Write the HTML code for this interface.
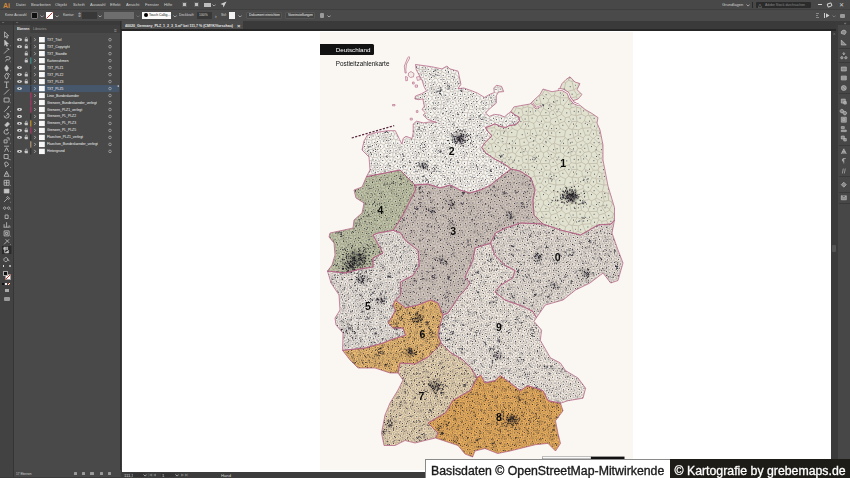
<!DOCTYPE html>
<html><head><meta charset="utf-8"><style>
*{margin:0;padding:0;box-sizing:border-box}
html,body{width:850px;height:478px;overflow:hidden;background:#3c3c3c;font-family:"Liberation Sans", sans-serif}
.a{position:absolute}
.t{position:absolute;white-space:nowrap;color:#d8d8d8;font-size:5px;line-height:6px}
</style></head><body>
<div class="a" style="left:0px;top:0px;width:850px;height:9px;background:#484848;"></div>
<div class="a" style="left:0px;top:9px;width:850px;height:1px;background:#3f3f3f;"></div>
<div class="a" style="left:0px;top:10px;width:850px;height:10.5px;background:#4a4a4a;"></div>
<div class="t" style="left:3px;top:1.3px;font-size:21px;line-height:25.2px;color:#d08a3a;transform:scale(0.3333);transform-origin:0 0;font-weight:bold;letter-spacing:-0.3px">Ai</div>
<div class="t" style="left:15.6px;top:2.4000000000000004px;font-size:12.299999999999999px;line-height:14.759999999999998px;color:#d2d2d2;transform:scale(0.3333);transform-origin:0 0;">Datei</div>
<div class="t" style="left:30.5px;top:2.4000000000000004px;font-size:12.299999999999999px;line-height:14.759999999999998px;color:#d2d2d2;transform:scale(0.3333);transform-origin:0 0;">Bearbeiten</div>
<div class="t" style="left:55px;top:2.4000000000000004px;font-size:12.299999999999999px;line-height:14.759999999999998px;color:#d2d2d2;transform:scale(0.3333);transform-origin:0 0;">Objekt</div>
<div class="t" style="left:73.3px;top:2.4000000000000004px;font-size:12.299999999999999px;line-height:14.759999999999998px;color:#d2d2d2;transform:scale(0.3333);transform-origin:0 0;">Schrift</div>
<div class="t" style="left:89.8px;top:2.4000000000000004px;font-size:12.299999999999999px;line-height:14.759999999999998px;color:#d2d2d2;transform:scale(0.3333);transform-origin:0 0;">Auswahl</div>
<div class="t" style="left:110px;top:2.4000000000000004px;font-size:12.299999999999999px;line-height:14.759999999999998px;color:#d2d2d2;transform:scale(0.3333);transform-origin:0 0;">Effekt</div>
<div class="t" style="left:126px;top:2.4000000000000004px;font-size:12.299999999999999px;line-height:14.759999999999998px;color:#d2d2d2;transform:scale(0.3333);transform-origin:0 0;">Ansicht</div>
<div class="t" style="left:144.8px;top:2.4000000000000004px;font-size:12.299999999999999px;line-height:14.759999999999998px;color:#d2d2d2;transform:scale(0.3333);transform-origin:0 0;">Fenster</div>
<div class="t" style="left:163.8px;top:2.4000000000000004px;font-size:12.299999999999999px;line-height:14.759999999999998px;color:#d2d2d2;transform:scale(0.3333);transform-origin:0 0;">Hilfe</div>
<div class="a" style="left:182px;top:2px;width:5px;height:5px;background:#bdbdbd;border:1px solid #5a5a5a"></div>
<div class="a" style="left:194.3px;top:2px;width:5px;height:5px;background:#bdbdbd;border:1px solid #5a5a5a"></div>
<div class="a" style="left:204px;top:2.5px;width:6.5px;height:4px;background:#bdbdbd;"></div>
<svg class="a" style="left:212.0px;top:3.7px" width="4.2" height="2.8"><polyline points="0.5,0.5 2.1,2.1 3.7,0.5" fill="none" stroke="#bbb" stroke-width="0.8"/></svg>
<svg class="a" style="left:220px;top:1px" width="7" height="7"><path d="M6.5 0.5 L0.5 3 L3 4 L3.5 6.5 Z" fill="#d0d0d0"/></svg>
<div class="t" style="left:721.5px;top:2.4000000000000004px;font-size:12.149999999999999px;line-height:14.579999999999998px;color:#d2d2d2;transform:scale(0.3333);transform-origin:0 0;">Grundlagen</div>
<svg class="a" style="left:746.0px;top:4.2px" width="4.2" height="2.8"><polyline points="0.5,0.5 2.1,2.1 3.7,0.5" fill="none" stroke="#bbb" stroke-width="0.8"/></svg>
<div class="a" style="left:752px;top:1.5px;width:0.6px;height:6px;background:#2a2a2a;"></div>
<div class="a" style="left:756px;top:1.5px;width:55px;height:6px;background:#2b2b2b;border-radius:1px"></div>
<div class="t" style="left:757.5px;top:2.8px;font-size:13.5px;line-height:16.2px;color:#bbb;transform:scale(0.3333);transform-origin:0 0;">&#9651;</div>
<div class="t" style="left:765px;top:2.6px;font-size:10.290000000000001px;line-height:12.348px;color:#8a8a8a;transform:scale(0.3333);transform-origin:0 0;">Adobe Stock durchsuchen</div>
<div class="a" style="left:818px;top:4px;width:4px;height:1px;background:#cfcfcf;"></div>
<div class="a" style="left:826.5px;top:2.5px;width:5px;height:3.5px;background:none;border:1px solid #cfcfcf;border-radius:1px;transform:rotate(-20deg)"></div>
<div class="t" style="left:839px;top:1.8px;font-size:16.5px;line-height:19.8px;color:#cfcfcf;transform:scale(0.3333);transform-origin:0 0;">&#10005;</div>
<div class="t" style="left:5px;top:13.4px;font-size:9.899999999999999px;line-height:11.879999999999997px;color:#d8d8d8;transform:scale(0.3333);transform-origin:0 0;">Keine Auswahl</div>
<div class="a" style="left:31px;top:12px;width:7px;height:7px;background:#111;border:1px solid #777;border-radius:1px"></div>
<svg class="a" style="left:39.5px;top:14.7px" width="4.2" height="2.8"><polyline points="0.5,0.5 2.1,2.1 3.7,0.5" fill="none" stroke="#bbb" stroke-width="0.8"/></svg>
<svg class="a" style="left:46px;top:12px" width="7" height="7"><rect width="7" height="7" fill="#fff"/><line x1="0.5" y1="6.5" x2="6.5" y2="0.5" stroke="#d03020" stroke-width="1"/></svg>
<svg class="a" style="left:54.5px;top:14.7px" width="4.2" height="2.8"><polyline points="0.5,0.5 2.1,2.1 3.7,0.5" fill="none" stroke="#bbb" stroke-width="0.8"/></svg>
<div class="t" style="left:62.6px;top:13.4px;font-size:10.5px;line-height:12.6px;color:#d8d8d8;transform:scale(0.3333);transform-origin:0 0;">Kontur:</div>
<div class="t" style="left:76.5px;top:12.3px;font-size:16.5px;line-height:19.8px;color:#bbb;transform:scale(0.3333);transform-origin:0 0;">&#8661;</div>
<div class="a" style="left:82.4px;top:12px;width:15px;height:6.5px;background:#383838;"></div>
<svg class="a" style="left:98.0px;top:14.7px" width="4.2" height="2.8"><polyline points="0.5,0.5 2.1,2.1 3.7,0.5" fill="none" stroke="#bbb" stroke-width="0.8"/></svg>
<div class="a" style="left:104px;top:12px;width:30.3px;height:6.5px;background:#6e6e6e;"></div>
<svg class="a" style="left:136.0px;top:14.7px" width="4.2" height="2.8"><polyline points="0.5,0.5 2.1,2.1 3.7,0.5" fill="none" stroke="#777" stroke-width="0.8"/></svg>
<div class="a" style="left:142.4px;top:12px;width:28.5px;height:6.5px;background:#fafafa;"></div>
<div class="a" style="left:143.5px;top:13.2px;width:4px;height:4px;background:#000;border-radius:50%"></div>
<div class="t" style="left:149px;top:13.4px;font-size:10.2px;line-height:12.239999999999998px;color:#111;transform:scale(0.3333);transform-origin:0 0;">Touch Callig...</div>
<svg class="a" style="left:172.5px;top:14.7px" width="4.2" height="2.8"><polyline points="0.5,0.5 2.1,2.1 3.7,0.5" fill="none" stroke="#bbb" stroke-width="0.8"/></svg>
<div class="t" style="left:179.4px;top:13.4px;font-size:10.2px;line-height:12.239999999999998px;color:#d8d8d8;transform:scale(0.3333);transform-origin:0 0;">Deckkraft:</div>
<div class="a" style="left:197.2px;top:12px;width:15.2px;height:6.5px;background:#383838;"></div>
<div class="t" style="left:199px;top:13.4px;font-size:10.2px;line-height:12.239999999999998px;color:#d8d8d8;transform:scale(0.3333);transform-origin:0 0;">100%</div>
<div class="t" style="left:215px;top:13.3px;font-size:15px;line-height:18.0px;color:#ccc;transform:scale(0.3333);transform-origin:0 0;">&#8250;</div>
<div class="t" style="left:221.4px;top:13.4px;font-size:10.2px;line-height:12.239999999999998px;color:#d8d8d8;transform:scale(0.3333);transform-origin:0 0;">Stil:</div>
<div class="a" style="left:228.8px;top:12px;width:6.6px;height:6.5px;background:#f2f2f2;"></div>
<svg class="a" style="left:237.5px;top:14.7px" width="4.2" height="2.8"><polyline points="0.5,0.5 2.1,2.1 3.7,0.5" fill="none" stroke="#bbb" stroke-width="0.8"/></svg>
<div class="a" style="left:246.3px;top:12px;width:36.2px;height:6.8px;background:#444;border:1px solid #555;border-radius:1px"></div>
<div class="t" style="left:249px;top:13.4px;font-size:10.14px;line-height:12.168000000000001px;color:#f0f0f0;transform:scale(0.3333);transform-origin:0 0;">Dokument einrichten</div>
<div class="a" style="left:285.3px;top:12px;width:30.2px;height:6.8px;background:#444;border:1px solid #555;border-radius:1px"></div>
<div class="t" style="left:288px;top:13.4px;font-size:10.14px;line-height:12.168000000000001px;color:#f0f0f0;transform:scale(0.3333);transform-origin:0 0;">Voreinstellungen</div>
<div class="a" style="left:319.5px;top:13px;width:4.5px;height:4.5px;background:#9a9a9a;border-radius:1px"></div>
<svg class="a" style="left:327.0px;top:14.7px" width="4.2" height="2.8"><polyline points="0.5,0.5 2.1,2.1 3.7,0.5" fill="none" stroke="#bbb" stroke-width="0.8"/></svg>
<div class="a" style="left:815.5px;top:13px;width:2.5px;height:5px;background:none;border:0.7px dotted #888"></div>
<div class="a" style="left:824px;top:13px;width:1px;height:5px;background:#cfcfcf;"></div>
<div class="a" style="left:825.5px;top:13px;width:4px;height:5px;background:#cfcfcf;clip-path:polygon(0 0,100% 50%,0 100%)"></div>
<svg class="a" style="left:831.5px;top:14.7px" width="4.2" height="2.8"><polyline points="0.5,0.5 2.1,2.1 3.7,0.5" fill="none" stroke="#888" stroke-width="0.8"/></svg>
<div class="a" style="left:840px;top:14px;width:5px;height:4px;background:#9a9a9a;border-radius:1px"></div>
<div class="a" style="left:0px;top:21px;width:13px;height:457px;background:#424242;"></div>
<div class="a" style="left:13px;top:21px;width:1px;height:457px;background:#353535;"></div>
<div class="a" style="left:0px;top:21px;width:13px;height:3.5px;background:#3a3a3a;"></div>
<div class="t" style="left:2px;top:20.8px;font-size:9px;line-height:10.799999999999999px;color:#888;transform:scale(0.3333);transform-origin:0 0;">&#8226;&#8226;</div>
<div class="a" style="left:14px;top:21px;width:107px;height:457px;background:#494949;"></div>
<div class="a" style="left:14px;top:21px;width:107px;height:3.6px;background:#3a3a3a;"></div>
<div class="t" style="left:15.5px;top:20.8px;font-size:9px;line-height:10.799999999999999px;color:#888;transform:scale(0.3333);transform-origin:0 0;">&#8226;&#8226;</div>
<div class="a" style="left:14px;top:24.6px;width:107px;height:8.8px;background:#3f3f3f;"></div>
<div class="a" style="left:14px;top:24.6px;width:16px;height:8.8px;background:#494949;"></div>
<div class="t" style="left:16.5px;top:26.8px;font-size:10.2px;line-height:12.239999999999998px;color:#e6e6e6;transform:scale(0.3333);transform-origin:0 0;font-weight:bold">Ebenen</div>
<div class="t" style="left:33px;top:26.8px;font-size:10.5px;line-height:12.6px;color:#a0a0a0;transform:scale(0.3333);transform-origin:0 0;">Libraries</div>
<div class="t" style="left:114px;top:26.8px;font-size:15px;line-height:18.0px;color:#999;transform:scale(0.3333);transform-origin:0 0;">&#8801;</div>
<div class="a" style="left:120px;top:21px;width:1px;height:457px;background:#2e2e2e;"></div>
<svg class="a" style="left:0;top:0" width="130" height="160"><ellipse cx="19.5" cy="39.70" rx="2.5" ry="1.4" fill="#d8d8d8"/><circle cx="19.5" cy="39.70" r="0.7" fill="#444"/><rect x="24.7" y="39.10" width="3.2" height="2.4" rx="0.4" fill="#c8c8c8"/><path d="M25.4 39.10v-0.8a0.9 0.9 0 0 1 1.8 0v0.8" stroke="#c8c8c8" stroke-width="0.6" fill="none"/><rect x="30.3" y="36.60" width="1" height="6.2" fill="#2c2c2c"/><polyline points="34.3,38.20 35.6,39.70 34.3,41.20" fill="none" stroke="#cfcfcf" stroke-width="0.7"/><rect x="39" y="37.00" width="5.8" height="5.4" fill="#f8f8f8"/><circle cx="110" cy="39.70" r="1.3" fill="none" stroke="#c0c0c0" stroke-width="0.6"/><ellipse cx="19.5" cy="46.68" rx="2.5" ry="1.4" fill="#d8d8d8"/><circle cx="19.5" cy="46.68" r="0.7" fill="#444"/><rect x="24.7" y="46.08" width="3.2" height="2.4" rx="0.4" fill="#c8c8c8"/><path d="M25.4 46.08v-0.8a0.9 0.9 0 0 1 1.8 0v0.8" stroke="#c8c8c8" stroke-width="0.6" fill="none"/><rect x="30.3" y="43.58" width="1" height="6.2" fill="#2c2c2c"/><polyline points="34.3,45.18 35.6,46.68 34.3,48.18" fill="none" stroke="#cfcfcf" stroke-width="0.7"/><rect x="39" y="43.98" width="5.8" height="5.4" fill="#f8f8f8"/><circle cx="110" cy="46.68" r="1.3" fill="none" stroke="#c0c0c0" stroke-width="0.6"/><rect x="24.7" y="53.06" width="3.2" height="2.4" rx="0.4" fill="#c8c8c8"/><path d="M25.4 53.06v-0.8a0.9 0.9 0 0 1 1.8 0v0.8" stroke="#c8c8c8" stroke-width="0.6" fill="none"/><rect x="30.3" y="50.56" width="1" height="6.2" fill="#2c2c2c"/><polyline points="34.3,52.16 35.6,53.66 34.3,55.16" fill="none" stroke="#cfcfcf" stroke-width="0.7"/><rect x="39" y="50.96" width="5.8" height="5.4" fill="#f8f8f8"/><circle cx="110" cy="53.66" r="1.3" fill="none" stroke="#c0c0c0" stroke-width="0.6"/><rect x="24.7" y="60.04" width="3.2" height="2.4" rx="0.4" fill="#c8c8c8"/><path d="M25.4 60.04v-0.8a0.9 0.9 0 0 1 1.8 0v0.8" stroke="#c8c8c8" stroke-width="0.6" fill="none"/><rect x="30.3" y="57.54" width="1" height="6.2" fill="#3a9a9a"/><polyline points="34.3,59.14 35.6,60.64 34.3,62.14" fill="none" stroke="#cfcfcf" stroke-width="0.7"/><rect x="39" y="57.94" width="5.8" height="5.4" fill="#f8f8f8"/><circle cx="110" cy="60.64" r="1.3" fill="none" stroke="#c0c0c0" stroke-width="0.6"/><ellipse cx="19.5" cy="67.62" rx="2.5" ry="1.4" fill="#d8d8d8"/><circle cx="19.5" cy="67.62" r="0.7" fill="#444"/><rect x="30.3" y="64.52" width="1" height="6.2" fill="#2c2c2c"/><polyline points="34.3,66.12 35.6,67.62 34.3,69.12" fill="none" stroke="#cfcfcf" stroke-width="0.7"/><rect x="39" y="64.92" width="5.8" height="5.4" fill="#f8f8f8"/><circle cx="110" cy="67.62" r="1.3" fill="none" stroke="#c0c0c0" stroke-width="0.6"/><ellipse cx="19.5" cy="74.60" rx="2.5" ry="1.4" fill="#d8d8d8"/><circle cx="19.5" cy="74.60" r="0.7" fill="#444"/><rect x="24.7" y="74.00" width="3.2" height="2.4" rx="0.4" fill="#c8c8c8"/><path d="M25.4 74.00v-0.8a0.9 0.9 0 0 1 1.8 0v0.8" stroke="#c8c8c8" stroke-width="0.6" fill="none"/><rect x="30.3" y="71.50" width="1" height="6.2" fill="#2c2c2c"/><polyline points="34.3,73.10 35.6,74.60 34.3,76.10" fill="none" stroke="#cfcfcf" stroke-width="0.7"/><rect x="39" y="71.90" width="5.8" height="5.4" fill="#f8f8f8"/><circle cx="110" cy="74.60" r="1.3" fill="none" stroke="#c0c0c0" stroke-width="0.6"/><ellipse cx="19.5" cy="81.58" rx="2.5" ry="1.4" fill="#d8d8d8"/><circle cx="19.5" cy="81.58" r="0.7" fill="#444"/><rect x="24.7" y="80.98" width="3.2" height="2.4" rx="0.4" fill="#c8c8c8"/><path d="M25.4 80.98v-0.8a0.9 0.9 0 0 1 1.8 0v0.8" stroke="#c8c8c8" stroke-width="0.6" fill="none"/><rect x="30.3" y="78.48" width="1" height="6.2" fill="#2c2c2c"/><polyline points="34.3,80.08 35.6,81.58 34.3,83.08" fill="none" stroke="#cfcfcf" stroke-width="0.7"/><rect x="39" y="78.88" width="5.8" height="5.4" fill="#f8f8f8"/><circle cx="110" cy="81.58" r="1.3" fill="none" stroke="#c0c0c0" stroke-width="0.6"/><rect x="15" y="85.06" width="104" height="7" fill="#46576c"/><rect x="117.6" y="85.36" width="1.4" height="1.4" fill="#ccc"/><ellipse cx="19.5" cy="88.56" rx="2.5" ry="1.4" fill="#d8d8d8"/><circle cx="19.5" cy="88.56" r="0.7" fill="#444"/><rect x="30.3" y="85.46" width="1" height="6.2" fill="#2c2c2c"/><polyline points="34.3,87.06 35.6,88.56 34.3,90.06" fill="none" stroke="#cfcfcf" stroke-width="0.7"/><rect x="39" y="85.86" width="5.8" height="5.4" fill="#f8f8f8"/><circle cx="110" cy="88.56" r="1.3" fill="none" stroke="#c0c0c0" stroke-width="0.6"/><rect x="30.3" y="92.44" width="1" height="6.2" fill="#c0306a"/><polyline points="34.3,94.04 35.6,95.54 34.3,97.04" fill="none" stroke="#cfcfcf" stroke-width="0.7"/><rect x="39" y="92.84" width="5.8" height="5.4" fill="#f8f8f8"/><circle cx="110" cy="95.54" r="1.3" fill="none" stroke="#c0c0c0" stroke-width="0.6"/><rect x="30.3" y="99.42" width="1" height="6.2" fill="#c0306a"/><polyline points="34.3,101.02 35.6,102.52 34.3,104.02" fill="none" stroke="#cfcfcf" stroke-width="0.7"/><rect x="39" y="99.82" width="5.8" height="5.4" fill="#f8f8f8"/><circle cx="110" cy="102.52" r="1.3" fill="none" stroke="#c0c0c0" stroke-width="0.6"/><ellipse cx="19.5" cy="109.50" rx="2.5" ry="1.4" fill="#d8d8d8"/><circle cx="19.5" cy="109.50" r="0.7" fill="#444"/><rect x="30.3" y="106.40" width="1" height="6.2" fill="#c0306a"/><polyline points="34.3,108.00 35.6,109.50 34.3,111.00" fill="none" stroke="#cfcfcf" stroke-width="0.7"/><rect x="39" y="106.80" width="5.8" height="5.4" fill="#f8f8f8"/><circle cx="110" cy="109.50" r="1.3" fill="none" stroke="#c0c0c0" stroke-width="0.6"/><ellipse cx="19.5" cy="116.48" rx="2.5" ry="1.4" fill="#d8d8d8"/><circle cx="19.5" cy="116.48" r="0.7" fill="#444"/><rect x="30.3" y="113.38" width="1" height="6.2" fill="#2c2c2c"/><polyline points="34.3,114.98 35.6,116.48 34.3,117.98" fill="none" stroke="#cfcfcf" stroke-width="0.7"/><rect x="39" y="113.78" width="5.8" height="5.4" fill="#f8f8f8"/><circle cx="110" cy="116.48" r="1.3" fill="none" stroke="#c0c0c0" stroke-width="0.6"/><ellipse cx="19.5" cy="123.46" rx="2.5" ry="1.4" fill="#d8d8d8"/><circle cx="19.5" cy="123.46" r="0.7" fill="#444"/><rect x="24.7" y="122.86" width="3.2" height="2.4" rx="0.4" fill="#c8c8c8"/><path d="M25.4 122.86v-0.8a0.9 0.9 0 0 1 1.8 0v0.8" stroke="#c8c8c8" stroke-width="0.6" fill="none"/><rect x="30.3" y="120.36" width="1" height="6.2" fill="#e0a020"/><polyline points="34.3,121.96 35.6,123.46 34.3,124.96" fill="none" stroke="#cfcfcf" stroke-width="0.7"/><rect x="39" y="120.76" width="5.8" height="5.4" fill="#f8f8f8"/><circle cx="110" cy="123.46" r="1.3" fill="none" stroke="#c0c0c0" stroke-width="0.6"/><ellipse cx="19.5" cy="130.44" rx="2.5" ry="1.4" fill="#d8d8d8"/><circle cx="19.5" cy="130.44" r="0.7" fill="#444"/><rect x="24.7" y="129.84" width="3.2" height="2.4" rx="0.4" fill="#c8c8c8"/><path d="M25.4 129.84v-0.8a0.9 0.9 0 0 1 1.8 0v0.8" stroke="#c8c8c8" stroke-width="0.6" fill="none"/><rect x="30.3" y="127.34" width="1" height="6.2" fill="#c0306a"/><polyline points="34.3,128.94 35.6,130.44 34.3,131.94" fill="none" stroke="#cfcfcf" stroke-width="0.7"/><rect x="39" y="127.74" width="5.8" height="5.4" fill="#f8f8f8"/><circle cx="110" cy="130.44" r="1.3" fill="none" stroke="#c0c0c0" stroke-width="0.6"/><ellipse cx="19.5" cy="137.42" rx="2.5" ry="1.4" fill="#d8d8d8"/><circle cx="19.5" cy="137.42" r="0.7" fill="#444"/><rect x="24.7" y="136.82" width="3.2" height="2.4" rx="0.4" fill="#c8c8c8"/><path d="M25.4 136.82v-0.8a0.9 0.9 0 0 1 1.8 0v0.8" stroke="#c8c8c8" stroke-width="0.6" fill="none"/><rect x="30.3" y="134.32" width="1" height="6.2" fill="#2c2c2c"/><polyline points="34.3,135.92 35.6,137.42 34.3,138.92" fill="none" stroke="#cfcfcf" stroke-width="0.7"/><rect x="39" y="134.72" width="5.8" height="5.4" fill="#f8f8f8"/><circle cx="110" cy="137.42" r="1.3" fill="none" stroke="#c0c0c0" stroke-width="0.6"/><rect x="30.3" y="141.30" width="1" height="6.2" fill="#c8a880"/><polyline points="34.3,142.90 35.6,144.40 34.3,145.90" fill="none" stroke="#cfcfcf" stroke-width="0.7"/><rect x="39" y="141.70" width="5.8" height="5.4" fill="#f8f8f8"/><circle cx="110" cy="144.40" r="1.3" fill="none" stroke="#c0c0c0" stroke-width="0.6"/><ellipse cx="19.5" cy="151.38" rx="2.5" ry="1.4" fill="#d8d8d8"/><circle cx="19.5" cy="151.38" r="0.7" fill="#444"/><rect x="24.7" y="150.78" width="3.2" height="2.4" rx="0.4" fill="#c8c8c8"/><path d="M25.4 150.78v-0.8a0.9 0.9 0 0 1 1.8 0v0.8" stroke="#c8c8c8" stroke-width="0.6" fill="none"/><rect x="30.3" y="148.28" width="1" height="6.2" fill="#2c2c2c"/><polyline points="34.3,149.88 35.6,151.38 34.3,152.88" fill="none" stroke="#cfcfcf" stroke-width="0.7"/><rect x="39" y="148.68" width="5.8" height="5.4" fill="#f8f8f8"/><circle cx="110" cy="151.38" r="1.3" fill="none" stroke="#c0c0c0" stroke-width="0.6"/></svg>
<div class="t" style="left:47.3px;top:37.7px;font-size:10.2px;line-height:12.239999999999998px;color:#f2f2f2;transform:scale(0.3333);transform-origin:0 0;">TXT_Titel</div>
<div class="t" style="left:47.3px;top:44.68000000000001px;font-size:10.2px;line-height:12.239999999999998px;color:#f2f2f2;transform:scale(0.3333);transform-origin:0 0;">TXT_Copyright</div>
<div class="t" style="left:47.3px;top:51.660000000000004px;font-size:10.2px;line-height:12.239999999999998px;color:#f2f2f2;transform:scale(0.3333);transform-origin:0 0;">TXT_Staedte</div>
<div class="t" style="left:47.3px;top:58.64px;font-size:10.2px;line-height:12.239999999999998px;color:#f2f2f2;transform:scale(0.3333);transform-origin:0 0;">Kartenrahmen</div>
<div class="t" style="left:47.3px;top:65.62px;font-size:10.2px;line-height:12.239999999999998px;color:#f2f2f2;transform:scale(0.3333);transform-origin:0 0;">TXT_PLZ1</div>
<div class="t" style="left:47.3px;top:72.60000000000001px;font-size:10.2px;line-height:12.239999999999998px;color:#f2f2f2;transform:scale(0.3333);transform-origin:0 0;">TXT_PLZ2</div>
<div class="t" style="left:47.3px;top:79.58000000000001px;font-size:10.2px;line-height:12.239999999999998px;color:#f2f2f2;transform:scale(0.3333);transform-origin:0 0;">TXT_PLZ3</div>
<div class="t" style="left:47.3px;top:86.56px;font-size:10.2px;line-height:12.239999999999998px;color:#f2f2f2;transform:scale(0.3333);transform-origin:0 0;">TXT_PLZ5</div>
<div class="t" style="left:47.3px;top:93.54px;font-size:10.2px;line-height:12.239999999999998px;color:#f2f2f2;transform:scale(0.3333);transform-origin:0 0;">Linie_Bundeslaender</div>
<div class="t" style="left:47.3px;top:100.52000000000001px;font-size:10.2px;line-height:12.239999999999998px;color:#f2f2f2;transform:scale(0.3333);transform-origin:0 0;">Grenzen_Bundeslaender_verlegt</div>
<div class="t" style="left:47.3px;top:107.50000000000001px;font-size:10.2px;line-height:12.239999999999998px;color:#f2f2f2;transform:scale(0.3333);transform-origin:0 0;">Grenzen_PLZ1_verlegt</div>
<div class="t" style="left:47.3px;top:114.48px;font-size:10.2px;line-height:12.239999999999998px;color:#f2f2f2;transform:scale(0.3333);transform-origin:0 0;">Grenzen_PL_PLZ2</div>
<div class="t" style="left:47.3px;top:121.46000000000001px;font-size:10.2px;line-height:12.239999999999998px;color:#f2f2f2;transform:scale(0.3333);transform-origin:0 0;">Grenzen_PL_PLZ3</div>
<div class="t" style="left:47.3px;top:128.44px;font-size:10.2px;line-height:12.239999999999998px;color:#f2f2f2;transform:scale(0.3333);transform-origin:0 0;">Grenzen_PL_PLZ5</div>
<div class="t" style="left:47.3px;top:135.42000000000002px;font-size:10.2px;line-height:12.239999999999998px;color:#f2f2f2;transform:scale(0.3333);transform-origin:0 0;">Flaechen_PLZ1_verlegt</div>
<div class="t" style="left:47.3px;top:142.4px;font-size:10.2px;line-height:12.239999999999998px;color:#f2f2f2;transform:scale(0.3333);transform-origin:0 0;">Flaechen_Bundeslaender_verlegt</div>
<div class="t" style="left:47.3px;top:149.38px;font-size:10.2px;line-height:12.239999999999998px;color:#f2f2f2;transform:scale(0.3333);transform-origin:0 0;">Hintergrund</div>
<div class="a" style="left:14px;top:470px;width:107px;height:6.5px;background:#474747;"></div>
<div class="t" style="left:16px;top:472.1px;font-size:9.600000000000001px;line-height:11.520000000000001px;color:#d0d0d0;transform:scale(0.3333);transform-origin:0 0;">17 Ebenen</div>
<div class="a" style="left:73.5px;top:471.5px;width:3.5px;height:3.8px;background:#9a9a9a;border-radius:0.5px"></div>
<div class="a" style="left:81.8px;top:471.5px;width:3.5px;height:3.8px;background:#9a9a9a;border-radius:0.5px"></div>
<div class="a" style="left:90.2px;top:471.5px;width:3.5px;height:3.8px;background:#9a9a9a;border-radius:0.5px"></div>
<div class="a" style="left:99.5px;top:471.5px;width:3.5px;height:3.8px;background:#9a9a9a;border-radius:0.5px"></div>
<div class="a" style="left:107.8px;top:471.5px;width:3.5px;height:3.8px;background:#9a9a9a;border-radius:0.5px"></div>
<div class="a" style="left:0px;top:476.5px;width:121px;height:1.5px;background:#3a3a3a;"></div>
<svg class="a" style="left:0;top:0" width="14" height="305"><rect x="2" y="246" width="9.5" height="8" fill="#2a2a2a"/><path transform="translate(6.6 34.8)" d="M-2 -3L2 1L0 1L1 3L0 3.3L-1 1.4L-2 2.5Z" fill="none" stroke="#c4c4c4" stroke-width="0.8"/><path transform="translate(6.6 43)" d="M-2 -3L2 1L0 1L1 3L0 3.3L-1 1.4L-2 2.5Z" fill="#c4c4c4" stroke="#c4c4c4" stroke-width="0.5"/><rect x="10" y="45.4" width="0.8" height="0.8" fill="#999"/><path transform="translate(6.6 51)" d="M-2.5 2.5L1.5 -1.5M1.5 -3v1.2M2.8 -1.5h-1.2M0 -3l0.6 0.6" fill="none" stroke="#c4c4c4" stroke-width="0.8"/><path transform="translate(6.6 59)" d="M-1 -1a2.3 1.6 0 1 1 1 1.5l-1 2" fill="none" stroke="#c4c4c4" stroke-width="0.8"/><rect x="10" y="61.4" width="0.8" height="0.8" fill="#999"/><path transform="translate(6.6 68)" d="M0 -3L2 0L0.5 3h-1L-2 0Z" fill="#c4c4c4" stroke="#c4c4c4" stroke-width="0.5"/><rect x="10" y="70.4" width="0.8" height="0.8" fill="#999"/><path transform="translate(6.6 76)" d="M0 -3L2 0L0.5 3h-1L-2 0ZM1 -3a3 3 0 0 1 2 2" fill="none" stroke="#c4c4c4" stroke-width="0.8"/><rect x="10" y="78.4" width="0.8" height="0.8" fill="#999"/><path transform="translate(6.6 84.5)" d="M-2.5 -2.5h5M0 -2.5v5.5M-1 3h2" fill="none" stroke="#c4c4c4" stroke-width="0.8"/><path transform="translate(6.6 92)" d="M-2.5 2.5L2.5 -2.5" fill="none" stroke="#c4c4c4" stroke-width="0.8"/><rect x="10" y="94.4" width="0.8" height="0.8" fill="#999"/><path transform="translate(6.6 100)" d="M-2.5 -2h5v4h-5Z" fill="none" stroke="#c4c4c4" stroke-width="0.8"/><rect x="10" y="102.4" width="0.8" height="0.8" fill="#999"/><path transform="translate(6.6 108.8)" d="M-2.5 3L1.5 -1L2.5 -2.5L1 -1.5" fill="none" stroke="#c4c4c4" stroke-width="0.8"/><rect x="10" y="111.2" width="0.8" height="0.8" fill="#999"/><path transform="translate(6.6 115.6)" d="M-2.5 0a2.5 2.5 0 1 0 2.5 -2.5M-1 1l3-3" fill="none" stroke="#c4c4c4" stroke-width="0.8"/><rect x="10" y="118.0" width="0.8" height="0.8" fill="#999"/><path transform="translate(6.6 124)" d="M-2 1L1 -2L3 0L0 3Z" fill="#c4c4c4" stroke="#c4c4c4" stroke-width="0.5"/><rect x="10" y="126.4" width="0.8" height="0.8" fill="#999"/><path transform="translate(6.6 132)" d="M2 0a2.3 2.3 0 1 1 -1 -2M1 -3.5L1.3 -1.8L-0.5 -1.6" fill="none" stroke="#c4c4c4" stroke-width="0.8"/><rect x="10" y="134.4" width="0.8" height="0.8" fill="#999"/><path transform="translate(6.6 140.4)" d="M-2.5 -0.5h3v3h-3ZM0 -2.5h2.5v2.5" fill="none" stroke="#c4c4c4" stroke-width="0.8"/><rect x="10" y="142.8" width="0.8" height="0.8" fill="#999"/><path transform="translate(6.6 148.7)" d="M-2 3L0 -1L2 3M-2.5 -2.5h5" fill="none" stroke="#c4c4c4" stroke-width="0.8"/><rect x="10" y="151.1" width="0.8" height="0.8" fill="#999"/><path transform="translate(6.6 157)" d="M-2.5 -2.5h4v4h-4ZM1.5 1.5L3 3" fill="none" stroke="#c4c4c4" stroke-width="0.8"/><rect x="10" y="159.4" width="0.8" height="0.8" fill="#999"/><path transform="translate(6.6 164.8)" d="M-2 -2a2 2 0 0 1 3 0l1 2l-3 2Z" fill="none" stroke="#c4c4c4" stroke-width="0.8"/><rect x="10" y="167.20000000000002" width="0.8" height="0.8" fill="#999"/><path transform="translate(6.6 173.8)" d="M-2.5 2.5L0 -2.5L2.5 2.5ZM-1.2 0h2.4" fill="none" stroke="#c4c4c4" stroke-width="0.8"/><rect x="10" y="176.20000000000002" width="0.8" height="0.8" fill="#999"/><path transform="translate(6.6 182.8)" d="M-2.5 -2.5h5v5h-5ZM0 -2.5v5M-2.5 0h5" fill="none" stroke="#c4c4c4" stroke-width="0.8"/><rect x="10" y="185.20000000000002" width="0.8" height="0.8" fill="#999"/><path transform="translate(6.6 191.1)" d="M-2.5 -2h5v4h-5Z" fill="#c4c4c4" stroke="#c4c4c4" stroke-width="0.5"/><rect x="10" y="193.5" width="0.8" height="0.8" fill="#999"/><path transform="translate(6.6 199.4)" d="M-2.5 2.5L1 -1M0 -2l2 2l1-1l-2-2Z" fill="none" stroke="#c4c4c4" stroke-width="0.8"/><rect x="10" y="201.8" width="0.8" height="0.8" fill="#999"/><path transform="translate(6.6 206.9)" d="M-2 0a1.2 1.2 0 1 0 0.1 0M2 0a1.2 1.2 0 1 0 0.1 0" fill="none" stroke="#c4c4c4" stroke-width="0.8"/><rect x="10" y="209.3" width="0.8" height="0.8" fill="#999"/><path transform="translate(6.6 216)" d="M-1.5 -1h3v3.5h-3ZM-1 -2.5h0.1M1 -3h0.1" fill="none" stroke="#c4c4c4" stroke-width="0.8"/><rect x="10" y="218.4" width="0.8" height="0.8" fill="#999"/><path transform="translate(6.6 224.2)" d="M-2.5 3v-3M0 3v-5M2.5 3v-2M-3 3h6" fill="none" stroke="#c4c4c4" stroke-width="0.8"/><rect x="10" y="226.6" width="0.8" height="0.8" fill="#999"/><path transform="translate(6.6 233.4)" d="M-2.5 -2.5h5v5h-5ZM-1 -1h2v2h-2Z" fill="none" stroke="#c4c4c4" stroke-width="0.8"/><rect x="10" y="235.8" width="0.8" height="0.8" fill="#999"/><path transform="translate(6.6 241.8)" d="M-2.5 2.5L2.5 -2.5M-1 -2.5l3.5 3.5" fill="none" stroke="#c4c4c4" stroke-width="0.8"/><rect x="10" y="244.20000000000002" width="0.8" height="0.8" fill="#999"/><path transform="translate(6.6 250)" d="M-2 3v-3a1 1 0 0 1 1 -3v3M0 0v-3a1 1 0 0 1 1 0v3M-2 3h4v-3" fill="#c4c4c4" stroke="#c4c4c4" stroke-width="0.5"/><path transform="translate(6.6 258.4)" d="M-0.8 -0.8a2 2 0 1 0 0.1 0M0.6 0.6L2.8 2.8" fill="none" stroke="#c4c4c4" stroke-width="0.8"/></svg>
<div class="a" style="left:2.5px;top:265px;width:1.8px;height:1.8px;background:#ddd;"></div>
<div class="a" style="left:8.5px;top:265px;width:2px;height:2px;background:#aaa;"></div>
<div class="a" style="left:5px;top:274px;width:6px;height:6px;background:#fff;border:0.5px solid #999"></div>
<svg class="a" style="left:5px;top:274px" width="6" height="6"><line x1="0.5" y1="5.5" x2="5.5" y2="0.5" stroke="#d03020" stroke-width="1"/></svg>
<div class="a" style="left:2.5px;top:270.5px;width:5px;height:5px;background:#111;border:0.7px solid #aaa"></div>
<div class="a" style="left:2px;top:283px;width:2.2px;height:2.2px;background:#111;"></div>
<div class="a" style="left:5px;top:283px;width:2.2px;height:2.2px;background:#eee;"></div>
<div class="a" style="left:8px;top:283px;width:2.2px;height:2.2px;background:#fff;background:linear-gradient(45deg,#fff 40%,#d03020 45%,#d03020 55%,#fff 60%)"></div>
<div class="a" style="left:4.5px;top:288.5px;width:4px;height:3.5px;background:#aaa;"></div>
<div class="a" style="left:3.5px;top:296.5px;width:6px;height:4px;background:#9a9a9a;border-radius:1px"></div>
<div class="a" style="left:121px;top:20.5px;width:715px;height:10.5px;background:#3a3a3a;"></div>
<div class="a" style="left:122px;top:20.5px;width:121px;height:9px;background:#4b4b4b;"></div>
<div class="t" style="left:124.5px;top:23.6px;font-size:10.8px;line-height:12.96px;color:#e6e6e6;transform:scale(0.3333);transform-origin:0 0;font-weight:bold;letter-spacing:-0.05px">40020_Germany_PLZ_1_2_3_5.ai* bei 111,7 % (CMYK/Vorschau)</div>
<div class="t" style="left:237px;top:23.3px;font-size:18px;line-height:21.599999999999998px;color:#dddddd;transform:scale(0.3333);transform-origin:0 0;font-weight:bold">&#215;</div>
<div class="a" style="left:121px;top:29.3px;width:715px;height:1.7px;background:#262626;"></div>
<div class="a" style="left:122px;top:31px;width:709px;height:441px;background:#ffffff;"></div>
<div class="a" style="left:831px;top:31px;width:6.6px;height:447px;background:#3b3b3b;"></div>
<div class="t" style="left:832.5px;top:31.3px;font-size:12px;line-height:14.399999999999999px;color:#888;transform:scale(0.3333);transform-origin:0 0;">&#708;</div>
<div class="a" style="left:831.5px;top:244.5px;width:4.5px;height:7px;background:#555;border-radius:1px"></div>
<div class="a" style="left:836px;top:21px;width:14px;height:4px;background:#3b3b3b;"></div>
<div class="t" style="left:843.5px;top:21.3px;font-size:12px;line-height:14.399999999999999px;color:#aaa;transform:scale(0.3333);transform-origin:0 0;">&#171;</div>
<div class="a" style="left:837.6px;top:25px;width:12.4px;height:453px;background:#474747;"></div>
<div class="a" style="left:838.5px;top:48px;width:11px;height:0.6px;background:#3a3a3a;"></div>
<div class="a" style="left:838.5px;top:61.5px;width:11px;height:0.6px;background:#3a3a3a;"></div>
<div class="a" style="left:838.5px;top:92.6px;width:11px;height:0.6px;background:#3a3a3a;"></div>
<div class="a" style="left:838.5px;top:145px;width:11px;height:0.6px;background:#3a3a3a;"></div>
<div class="a" style="left:838.5px;top:176.4px;width:11px;height:0.6px;background:#3a3a3a;"></div>
<div class="a" style="left:838.5px;top:191.5px;width:11px;height:0.6px;background:#3a3a3a;"></div>
<div class="a" style="left:838.5px;top:202.8px;width:11px;height:0.6px;background:#3a3a3a;"></div>
<svg class="a" style="left:836px;top:0" width="14" height="210"><path transform="translate(7.8 32.5)" d="M-2.5 1a2.5 2.5 0 0 1 5 -1.5l-1.5 2.5Z" fill="#c0c0c0" fill-opacity="0.55" stroke="#c8c8c8" stroke-width="0.6"/><path transform="translate(7.8 42.5)" d="M-2.5 2.5v-5l5 5Z" fill="#c0c0c0" fill-opacity="0.55" stroke="#c8c8c8" stroke-width="0.6"/><path transform="translate(7.8 55)" d="M0 -2.5l1 1.2l-1 1.2l-1-1.2ZM-2 1.5a1.2 1.2 0 1 0 0.1 0M2 1.5a1.2 1.2 0 1 0 0.1 0" fill="#c0c0c0" fill-opacity="0.55" stroke="#c8c8c8" stroke-width="0.6"/><path transform="translate(7.8 69)" d="M-2.5 -2h5v4h-5Z" fill="#c0c0c0" fill-opacity="0.55" stroke="#c8c8c8" stroke-width="0.6"/><path transform="translate(7.8 78)" d="M-2.5 -2h5v4h-5ZM-2.5 0h5" fill="#c0c0c0" fill-opacity="0.55" stroke="#c8c8c8" stroke-width="0.6"/><path transform="translate(7.8 88)" d="M-2.5 0a2.5 2.5 0 1 0 5 0a2.5 2.5 0 1 0 -5 0M-1.5 -1.5l3 3" fill="#c0c0c0" fill-opacity="0.55" stroke="#c8c8c8" stroke-width="0.6"/><path transform="translate(7.8 101.6)" d="M-2.5 -2.5h4v4h-4ZM0 0h2.5v2.5h-2.5Z" fill="#c0c0c0" fill-opacity="0.55" stroke="#c8c8c8" stroke-width="0.6"/><path transform="translate(7.8 110.3)" d="M-2 -1a1.8 1.8 0 1 0 0.1 0M1 1a1.8 1.8 0 1 0 0.1 0" fill="#c0c0c0" fill-opacity="0.55" stroke="#c8c8c8" stroke-width="0.6"/><path transform="translate(7.8 119.7)" d="M-2.5 -2.5h5v5h-5ZM-1 -1h2v2h-2Z" fill="#c0c0c0" fill-opacity="0.55" stroke="#c8c8c8" stroke-width="0.6"/><path transform="translate(7.8 129.1)" d="M-2.5 -2.5h3v2h-3ZM-2.5 1h5v1.5h-5Z" fill="#c0c0c0" fill-opacity="0.55" stroke="#c8c8c8" stroke-width="0.6"/><path transform="translate(7.8 138.5)" d="M-2.5 -2.5h3v3h-3ZM0 0h2.5v2.5h-2.5Z" fill="#c0c0c0" fill-opacity="0.55" stroke="#c8c8c8" stroke-width="0.6"/><path transform="translate(7.8 151.3)" d="M-2.5 2.5L0 -2.5L2.5 2.5M-1.5 0.5h3" fill="#c0c0c0" fill-opacity="0.55" stroke="#c8c8c8" stroke-width="0.6"/><path transform="translate(7.8 161)" d="M0 -2.5v5M0 -2.5h2M0 -2.5a1.5 1.5 0 0 0 0 3" fill="#c0c0c0" fill-opacity="0.55" stroke="#c8c8c8" stroke-width="0.6"/><path transform="translate(7.8 171)" d="M1.5 -2.5l-1 5M-0.5 -2.5l-1 5" fill="#c0c0c0" fill-opacity="0.55" stroke="#c8c8c8" stroke-width="0.6"/><path transform="translate(7.8 184.7)" d="M0 -2.5l2.5 2.5l-2.5 2.5l-2.5 -2.5Z" fill="#c0c0c0" fill-opacity="0.55" stroke="#c8c8c8" stroke-width="0.6"/><path transform="translate(7.8 197.8)" d="M-2.5 -2h5v4h-5ZM-2.5 -2l2.5 2l2.5 -2" fill="#c0c0c0" fill-opacity="0.55" stroke="#c8c8c8" stroke-width="0.6"/></svg>
<div class="a" style="left:122px;top:472px;width:709px;height:6px;background:#3c3c3c;"></div>
<div class="t" style="left:124px;top:473.3px;font-size:12.600000000000001px;line-height:15.120000000000001px;color:#cfcfcf;transform:scale(0.3333);transform-origin:0 0;">111,7%</div>
<div class="a" style="left:133px;top:472.8px;width:12px;height:4.4px;background:#333;"></div>
<svg class="a" style="left:142.5px;top:474.2px" width="4.2" height="2.8"><polyline points="0.5,0.5 2.1,2.1 3.7,0.5" fill="none" stroke="#bbb" stroke-width="0.8"/></svg>
<div class="t" style="left:148px;top:473.3px;font-size:10.5px;line-height:12.6px;color:#777;transform:scale(0.3333);transform-origin:0 0;">|&#9664; &#9664;</div>
<div class="a" style="left:161px;top:472.8px;width:14px;height:4.4px;background:#333;"></div>
<div class="t" style="left:161.5px;top:473.3px;font-size:12.600000000000001px;line-height:15.120000000000001px;color:#cfcfcf;transform:scale(0.3333);transform-origin:0 0;">1</div>
<svg class="a" style="left:175.0px;top:474.2px" width="4.2" height="2.8"><polyline points="0.5,0.5 2.1,2.1 3.7,0.5" fill="none" stroke="#bbb" stroke-width="0.8"/></svg>
<div class="t" style="left:181px;top:473.3px;font-size:10.5px;line-height:12.6px;color:#777;transform:scale(0.3333);transform-origin:0 0;">&#9654; &#9654;|</div>
<div class="t" style="left:221px;top:473.3px;font-size:12.600000000000001px;line-height:15.120000000000001px;color:#cfcfcf;transform:scale(0.3333);transform-origin:0 0;">Hand</div>
<div class="a" style="left:320px;top:32px;width:313px;height:438px;background:#faf7f3"></div>
<svg width="850" height="478" viewBox="0 0 850 478" style="position:absolute;left:0;top:0">
<defs><filter id="bl" x="-50%" y="-50%" width="200%" height="200%"><feGaussianBlur stdDeviation="2"/></filter><pattern id="p1" patternUnits="userSpaceOnUse" width="48" height="48"><rect width="48" height="48" fill="#e2e2d0"/><path d="M49.2 25.5L44.7 33.2M44.7 33.2L50.6 33.9M35.4 9.9L40.6 3.0M35.4 9.9L32.6 8.4M40.6 3.0L40.6 2.5M40.6 2.5L40.2 1.9M40.2 1.9L32.0 1.7M32.6 8.4L32.0 1.7M40.2 1.9L39.4 -4.6M37.1 -6.3L31.7 1.3M31.7 1.3L32.0 1.7M2.6 33.9L2.1 39.3M2.6 33.9L6.4 32.0M6.4 32.0L6.7 32.3M6.7 32.3L9.4 39.2M2.1 39.3L7.4 41.9M7.4 41.9L9.4 39.2M5.9 27.5L6.4 32.0M5.9 27.5L1.2 25.5M-3.3 33.2L1.2 25.5M-3.3 33.2L2.6 33.9M8.3 24.8L5.9 27.5M8.3 24.8L15.2 28.4M15.2 28.4L14.5 31.7M14.5 31.7L6.7 32.3M37.5 21.7L36.6 25.4M37.5 21.7L33.7 18.3M36.6 25.4L31.3 27.4M31.3 27.4L28.8 21.2M33.7 18.3L29.3 20.5M29.3 20.5L28.8 21.2M30.6 28.7L31.3 27.4M30.6 28.7L25.8 29.3M25.8 29.3L22.8 27.6M23.1 23.0L28.8 21.2M23.1 23.0L22.0 26.1M22.0 26.1L22.8 27.6M40.6 31.7L36.6 25.4M40.6 31.7L43.8 25.7M37.5 21.7L41.0 20.9M43.8 25.7L41.0 20.9M40.6 31.7L40.6 32.4M32.4 32.5L37.6 34.7M32.4 32.5L30.6 28.7M37.6 34.7L40.6 32.4M49.2 25.5L49.0 25.3M44.7 33.2L44.0 33.4M49.0 25.3L43.8 25.7M44.0 33.4L40.6 32.4M50.1 39.3L45.9 41.6M44.0 33.4L45.9 41.6M40.6 3.0L41.5 4.2M40.6 2.5L48.2 0.8M48.2 0.8L50.0 4.1M50.0 4.1L48.0 8.3M41.5 4.2L48.0 8.3M32.4 32.5L27.7 36.5M37.6 34.7L36.4 40.6M36.4 40.6L28.0 41.0M28.0 41.0L27.7 36.5M25.8 29.3L26.1 34.8M27.7 36.5L26.1 34.8M36.3 11.8L35.4 9.9M36.3 11.8L33.8 17.2M33.8 17.2L26.8 12.4M32.6 8.4L28.4 9.3M28.4 9.3L27.7 9.8M27.7 9.8L26.8 12.4M33.8 17.2L33.7 18.3M29.3 20.5L25.2 14.2M26.8 12.4L25.2 14.2M13.3 39.1L16.6 42.4M13.3 39.1L16.1 33.8M20.8 39.2L20.2 34.8M20.8 39.2L17.8 42.3M17.8 42.3L16.6 42.4M16.1 33.8L19.7 34.3M19.7 34.3L20.2 34.8M7.2 44.4L9.8 47.5M7.2 44.4L7.4 41.9M9.8 47.5L11.2 48.0M9.4 39.2L13.3 39.1M14.0 46.8L11.2 48.0M14.0 46.8L16.6 42.4M14.5 31.7L16.1 33.8M27.9 41.1L28.0 41.0M27.9 41.1L20.8 39.2M26.1 34.8L20.2 34.8M23.8 48.2L20.8 51.4M23.8 48.2L17.8 42.3M14.0 46.8L20.8 51.4M17.3 26.3L15.2 28.4M17.3 26.3L22.0 26.1M22.8 27.6L19.7 34.3M48.2 0.8L48.9 -1.2M53.5 18.3L48.3 19.8M49.0 25.3L48.3 19.8M28.4 57.3L25.9 47.5M25.9 47.5L26.4 47.2M26.4 47.2L31.7 49.3M23.8 48.2L25.9 47.5M27.9 41.1L26.4 47.2M37.1 41.7L36.4 40.6M37.1 41.7L31.7 49.3M48.8 11.3L47.9 10.6M48.8 11.3L47.8 19.4M47.9 10.6L43.3 12.0M43.1 18.8L47.8 19.4M43.1 18.8L41.9 13.1M41.9 13.1L43.3 12.0M52.5 12.2L48.8 11.3M48.0 8.3L47.9 10.6M48.3 19.8L47.8 19.4M41.5 4.2L43.3 12.0M41.0 20.9L43.1 18.8M36.3 11.8L41.9 13.1M11.2 48.0L13.1 55.5M0.9 46.8L0.2 48.8M0.9 46.8L7.2 44.4M9.8 47.5L5.2 52.6M0.2 48.8L2.0 52.1M0.2 48.8L-7.4 50.5M-4.9 18.8L-0.2 19.4M-4.2 25.7L1.0 25.3M1.0 25.3L0.3 19.8M0.3 19.8L-0.2 19.4M0.8 11.3L-0.2 19.4M0.8 11.3L-0.1 10.6M-0.1 10.6L-4.7 12.0M0.8 11.3L4.5 12.2M0.3 19.8L5.5 18.3M4.5 12.2L5.5 18.3M8.3 24.8L9.8 20.4M1.2 25.5L1.0 25.3M5.5 18.3L9.8 20.4M15.4 12.4L12.6 17.0M15.4 12.4L21.8 16.1M21.1 19.4L21.8 16.1M21.1 19.4L13.2 19.6M12.6 17.0L12.2 19.1M13.2 19.6L12.2 19.1M23.1 23.0L21.1 19.4M25.2 14.2L23.8 14.6M23.8 14.6L21.8 16.1M17.3 26.3L13.2 19.6M4.5 12.2L6.5 11.1M6.5 11.1L12.6 17.0M9.8 20.4L12.2 19.1M2.1 39.3L-2.1 41.6M0.9 46.8L-2.2 41.8M31.7 1.3L26.4 -0.8M27.9 -6.9L26.4 -0.8M28.4 9.3L25.9 -0.5M26.4 -0.8L25.9 -0.5M48.9 46.8L48.2 48.8M48.9 46.8L45.8 41.8M48.2 48.8L40.6 50.5M45.8 41.8L39.4 43.4M39.4 43.4L40.2 49.9M55.2 44.4L48.9 46.8M50.0 52.1L48.2 48.8M45.9 41.6L45.8 41.8M37.1 41.7L39.4 43.4M-0.1 10.6L0.0 8.3M-6.5 4.2L0.0 8.3M27.7 9.8L20.0 6.0M23.8 14.6L18.9 7.0M20.0 6.0L18.9 7.0M15.4 12.4L15.5 8.8M18.9 7.0L15.5 8.8M6.5 11.1L8.3 8.5M8.3 8.5L13.1 7.5M15.5 8.8L13.1 7.5M7.2 -3.6L9.8 -0.5M9.8 -0.5L5.2 4.6M0.9 -1.2L0.2 0.8M0.2 0.8L2.0 4.1M2.0 4.1L5.2 4.6M8.3 8.5L5.2 4.6M11.2 0.0L13.1 7.5M11.2 0.0L9.8 -0.5M-7.4 2.5L0.2 0.8M0.0 8.3L2.0 4.1M14.0 -1.2L20.8 3.4M17.8 -5.7L23.8 0.2M23.8 0.2L20.8 3.4M11.2 0.0L14.0 -1.2M20.0 6.0L20.8 3.4M25.9 -0.5L23.8 0.2" stroke="#a49a8e" stroke-width="0.45" fill="none"/><path d="M5.1 1.0h0M4.1 8.0h0M2.3 15.8h0M4.1 22.1h0M0.7 30.0h0M4.7 37.8h0M2.5 42.3h0M8.8 4.3h0M10.4 12.1h0M7.7 14.9h0M13.4 25.2h0M11.5 28.7h0M11.9 35.0h0M12.2 43.2h0M15.4 2.6h0M20.4 12.5h0M17.9 16.7h0M18.1 22.3h0M18.4 30.2h0M17.5 37.9h0M18.1 46.7h0M25.7 5.7h0M23.2 10.6h0M25.1 18.3h0M27.5 25.7h0M23.7 32.6h0M23.7 37.0h0M22.2 42.6h0M29.1 4.8h0M30.8 13.1h0M29.0 15.8h0M32.8 23.6h0M28.3 32.4h0M31.8 36.6h0M32.3 45.0h0M35.4 4.2h0M40.8 8.4h0M38.8 16.9h0M40.9 25.6h0M34.9 29.3h0M42.2 38.7h0M35.5 47.3h0M45.6 4.9h0M43.9 7.7h0M46.2 15.3h0M45.1 23.0h0M45.5 28.1h0M47.9 37.3h0M44.1 46.2h0" stroke="#2a2a3a" stroke-width="1.0" stroke-linecap="round"/></pattern><pattern id="p2" patternUnits="userSpaceOnUse" width="48" height="48"><rect width="48" height="48" fill="#f6f4ef"/><path d="M2.2 4.6L1.4 9.2M2.2 4.6L4.8 4.6M3.6 9.5L1.4 9.2M3.6 9.5L5.3 7.8M4.8 4.6L5.3 7.8M31.2 4.4L29.6 5.2M31.2 4.4L31.5 1.1M26.3 0.6L26.0 2.4M26.3 0.6L30.5 0.2M31.5 1.1L30.5 0.2M26.0 2.4L29.6 5.2M26.3 0.6L25.4 -0.6M26.2 -4.7L25.4 -0.6M30.5 0.2L30.6 -4.4M2.5 17.4L-0.4 20.1M2.5 17.4L2.4 17.1M2.4 17.1L-0.3 13.2M-0.3 13.2L-4.6 17.0M-0.4 20.1L-3.8 18.3M4.7 18.8L4.3 23.0M4.7 18.8L2.5 17.4M4.1 23.3L-0.4 20.7M4.1 23.3L4.3 23.0M-0.4 20.7L-0.4 20.1M6.5 12.8L2.4 17.1M6.5 12.8L6.0 12.4M6.0 12.4L-0.3 12.8M-0.3 12.8L-0.3 13.2M-0.4 20.7L-1.2 23.0M9.8 21.6L7.6 18.8M9.8 21.6L12.8 19.5M12.8 19.5L8.9 15.3M7.6 18.8L8.9 15.3M9.6 22.7L4.3 23.0M9.6 22.7L9.8 21.6M4.7 18.8L7.6 18.8M44.6 47.3L47.9 48.9M44.6 47.3L43.5 48.0M48.2 51.0L47.9 48.9M43.5 48.0L42.0 50.8M49.4 47.6L47.9 48.9M4.1 23.3L3.5 25.9M-1.2 23.0L-0.1 25.2M-0.1 25.2L3.5 25.9M9.6 22.7L9.9 23.7M3.5 25.9L4.0 26.7M4.0 26.7L9.0 25.4M9.9 23.7L9.0 25.4M16.1 20.9L13.4 19.3M16.1 20.9L13.9 25.5M13.4 19.3L12.8 19.5M9.9 23.7L13.9 25.5M35.8 -1.3L34.3 0.4M34.3 0.4L31.5 1.1M48.7 -4.6L49.4 -0.4M22.6 -0.5L25.4 -0.6M22.6 -0.5L20.4 1.3M26.0 2.4L23.7 4.7M23.7 4.7L20.8 3.3M20.8 3.3L20.4 1.3M28.9 6.5L29.6 5.2M28.9 6.5L24.9 8.5M23.7 4.7L24.5 8.3M24.9 8.5L24.5 8.3M13.3 1.6L11.6 -0.2M13.3 1.6L16.1 0.7M11.8 -4.3L11.6 -0.2M17.3 -0.6L16.1 0.7M17.3 -0.6L17.0 -2.8M54.0 12.4L47.7 12.8M47.7 12.8L47.7 13.2M47.7 13.2L50.4 17.1M36.1 29.8L35.4 30.5M36.1 29.8L35.5 27.4M35.4 30.5L32.0 30.6M32.0 30.6L31.6 25.3M35.5 27.4L31.6 25.3M20.8 17.1L18.6 19.0M20.8 17.1L16.8 13.5M18.6 19.0L15.6 14.9M16.8 13.5L15.6 14.9M22.2 16.7L23.3 18.2M22.2 16.7L20.8 17.1M23.9 20.9L18.7 21.5M23.9 20.9L23.3 18.2M18.7 21.5L18.0 20.7M18.0 20.7L18.6 19.0M22.2 16.7L22.9 15.1M16.9 13.1L21.2 12.1M16.9 13.1L16.8 13.5M21.2 12.1L22.9 15.1M16.1 20.9L18.0 20.7M13.4 19.3L14.1 15.7M14.1 15.7L15.6 14.9M3.6 9.5L6.0 12.4M1.4 9.2L-0.0 10.1M-0.3 12.8L-0.4 12.4M-0.4 12.4L-0.0 10.1M2.2 4.6L0.2 3.0M0.2 3.0L-3.1 6.0M-0.0 10.1L-3.3 7.2M39.3 29.4L41.0 30.8M39.3 29.4L36.1 29.8M35.4 30.5L36.4 34.8M41.0 30.8L38.7 35.7M38.7 35.7L38.5 35.8M36.4 34.8L38.5 35.8M40.6 46.9L38.4 48.6M40.6 46.9L39.1 43.0M38.4 48.6L35.8 46.7M35.8 46.7L35.9 44.2M39.1 43.0L36.4 43.7M35.9 44.2L36.4 43.7M39.1 51.6L38.4 48.6M43.5 48.0L40.6 46.9M44.6 47.3L44.4 44.8M44.4 44.8L40.1 42.1M40.1 42.1L39.1 43.0M36.8 53.3L34.3 48.4M34.3 48.4L35.8 46.7M40.1 42.1L40.4 41.0M40.4 41.0L38.5 37.3M34.9 39.8L38.5 37.3M34.9 39.8L36.4 43.7M30.6 43.6L32.4 38.5M30.6 43.6L35.9 44.2M34.9 39.8L32.4 38.5M-0.9 34.4L1.1 39.0M-0.9 34.4L-2.9 34.8M-2.5 40.0L1.1 39.0M1.1 39.0L1.1 39.0M-1.2 27.4L3.0 30.4M-3.3 28.7L0.5 32.3M0.5 32.3L3.0 30.4M-0.1 25.2L-1.2 27.4M4.0 26.7L3.9 30.2M3.9 30.2L3.0 30.4M-0.9 34.4L-0.3 34.0M-0.3 34.0L0.5 32.3M19.5 25.3L18.6 26.1M19.5 25.3L22.9 25.8M22.9 25.8L21.2 30.1M21.2 30.1L19.0 30.6M18.6 26.1L19.0 30.6M19.5 25.3L18.7 21.5M13.9 25.5L14.5 26.4M18.6 26.1L14.5 26.4M1.1 39.0L3.6 38.7M4.7 36.4L-0.3 34.0M4.7 36.4L4.3 38.1M4.3 38.1L3.6 38.7M4.7 36.4L6.6 34.3M3.9 30.2L5.3 31.1M6.6 34.3L5.3 31.1M9.0 25.4L9.2 29.0M5.3 31.1L9.2 29.0M47.6 20.7L46.8 23.0M47.6 20.7L52.1 23.3M47.9 25.2L46.8 23.0M47.9 25.2L51.5 25.9M47.6 20.7L47.6 20.1M47.6 20.1L50.5 17.4M46.8 27.4L44.8 28.5M46.8 27.4L51.0 30.4M51.0 30.4L48.5 32.3M48.5 32.3L44.7 28.7M44.7 28.7L44.8 28.5M47.9 25.2L46.8 27.4M46.8 23.0L43.7 23.9M42.9 25.4L43.7 23.9M42.9 25.4L44.8 28.5M39.3 29.4L39.9 25.9M39.9 25.9L42.9 25.4M41.0 30.8L42.5 30.9M42.5 30.9L44.7 28.7M44.4 -3.2L44.6 -0.7M40.6 -1.1L43.5 -0.0M44.6 -0.7L43.5 -0.0M49.4 -0.4L47.9 0.9M47.9 0.9L44.6 -0.7M35.8 -1.3L38.4 0.6M38.4 0.6L40.6 -1.1M38.4 0.6L39.1 3.6M43.5 -0.0L42.0 2.8M42.0 2.8L39.1 3.6M34.3 0.4L36.8 5.3M36.8 5.3L38.6 4.3M39.1 3.6L38.6 4.3M20.8 3.3L18.5 5.4M24.5 8.3L22.2 9.5M22.2 9.5L18.4 7.5M18.4 7.5L18.5 5.4M20.4 1.3L17.3 -0.6M16.1 0.7L16.6 4.1M16.6 4.1L18.5 5.4M6.6 -1.2L4.6 -0.7M3.8 -5.3L3.8 -0.8M3.8 -0.8L4.6 -0.7M11.6 -0.2L8.6 1.4M8.6 1.4L6.6 -1.2M5.3 4.3L8.4 4.0M5.3 4.3L4.6 -0.7M8.4 4.0L8.6 1.4M22.6 -0.5L21.0 -4.3M48.5 32.3L47.7 34.0M52.7 36.4L47.7 34.0M24.2 31.5L26.6 30.0M24.2 31.5L21.2 30.1M22.9 25.8L23.1 25.8M26.6 30.0L26.3 28.7M23.1 25.8L26.3 28.7M23.9 20.9L25.0 21.9M23.1 25.8L25.0 21.9M39.9 25.9L39.4 25.4M35.5 27.4L36.8 24.8M39.4 25.4L36.8 24.8M4.8 4.6L5.3 4.3M0.2 3.0L-0.1 0.9M3.8 -0.8L1.4 -0.4M1.4 -0.4L-0.1 0.9M-3.4 -0.7L-0.1 0.9M32.4 38.5L32.4 38.5M36.4 34.8L35.3 35.2M38.5 35.8L38.5 37.3M32.4 38.5L35.3 35.2M30.9 31.3L32.0 30.6M30.9 31.3L31.2 33.4M31.2 33.4L35.3 35.2M24.2 31.5L23.3 33.4M23.3 33.4L20.7 34.7M19.0 30.6L18.1 31.8M18.1 31.8L18.9 34.0M20.7 34.7L18.9 34.0M34.3 48.4L31.5 49.1M31.5 49.1L30.5 48.2M30.6 43.6L30.6 43.6M30.5 48.2L30.6 43.6M14.5 26.4L13.8 29.1M18.1 31.8L14.9 31.0M14.9 31.0L13.8 29.1M9.2 29.0L10.4 29.6M13.8 29.1L10.4 29.6M43.7 23.9L42.2 21.7M39.4 25.4L40.0 21.6M42.2 21.7L40.0 21.6M47.6 20.1L44.2 18.3M42.2 21.7L44.2 18.3M47.7 13.2L43.4 17.0M44.2 18.3L43.4 17.0M47.9 0.9L48.2 3.0M42.0 2.8L44.9 6.0M44.9 6.0L48.2 3.0M16.9 13.1L15.4 9.5M22.2 9.5L21.2 12.1M18.4 7.5L15.5 9.4M15.4 9.5L15.5 9.4M14.1 15.7L9.3 13.2M15.4 9.5L9.3 13.2M5.3 7.8L9.0 8.8M6.5 12.8L8.7 12.8M9.0 8.8L8.7 12.8M8.9 15.3L9.2 13.2M8.7 12.8L9.2 13.2M9.2 13.2L9.3 13.2M47.7 34.0L47.1 34.4M49.1 39.0L47.1 34.4M40.4 41.0L44.2 39.0M38.7 35.7L44.3 35.9M44.2 39.0L44.3 35.9M42.5 30.9L45.1 34.8M44.3 35.9L45.1 34.8M45.1 34.8L47.1 34.4M27.2 30.5L26.6 30.0M27.2 30.5L30.9 31.3M31.6 25.3L31.6 25.2M26.3 28.7L29.4 25.2M31.6 25.2L29.4 25.2M1.4 -0.4L0.7 -4.6M-0.4 12.4L-5.5 12.0M32.4 38.5L31.2 37.7M31.2 33.4L30.3 35.9M30.3 35.9L31.2 37.7M27.2 30.5L27.1 35.6M30.3 35.9L27.1 35.6M23.3 33.4L25.9 36.5M27.1 35.6L25.9 36.5M4.3 38.1L9.7 40.5M3.6 38.7L4.4 42.2M9.7 40.5L9.8 42.8M9.8 42.8L8.5 43.4M4.4 42.2L8.5 43.4M8.6 49.4L11.6 47.8M8.6 49.4L6.6 46.8M11.6 47.8L11.8 43.7M9.8 42.8L11.8 43.7M6.6 46.8L8.5 43.4M10.5 38.0L13.5 37.6M10.5 38.0L9.2 35.1M9.2 35.1L10.5 33.8M10.5 33.8L13.3 33.3M13.5 37.6L14.5 35.6M13.3 33.3L14.5 35.6M9.7 40.5L10.5 38.0M11.8 43.7L12.9 43.6M12.9 43.6L15.4 39.3M15.4 39.3L13.5 37.6M6.6 34.3L9.2 35.1M10.4 29.6L10.5 33.8M14.9 31.0L13.3 33.3M17.4 39.2L17.6 35.4M17.4 39.2L15.4 39.3M17.6 35.4L14.5 35.6M18.9 34.0L17.6 35.4M-0.1 48.9L0.2 51.0M-0.1 48.9L-3.4 47.3M40.0 21.6L39.8 21.4M43.4 17.0L43.3 17.0M43.3 17.0L39.9 18.4M39.9 18.4L39.8 21.4M44.7 7.2L48.0 10.1M44.7 7.2L42.6 8.3M42.6 8.3L42.3 8.8M42.3 8.8L42.5 12.0M42.5 12.0L47.6 12.4M47.6 12.4L48.0 10.1M38.6 4.3L42.6 8.3M44.9 6.0L44.7 7.2M41.3 13.7L37.3 13.4M41.3 13.7L42.5 12.0M37.3 13.4L38.0 9.6M38.0 9.6L42.3 8.8M47.7 12.8L47.6 12.4M43.3 17.0L41.3 13.7M48.2 3.0L50.2 4.6M48.0 10.1L49.4 9.2M14.4 8.3L9.4 8.1M14.4 8.3L13.7 5.2M12.5 4.1L9.3 4.8M12.5 4.1L13.7 5.2M9.3 4.8L9.4 8.1M15.5 9.4L14.4 8.3M9.0 8.8L9.4 8.1M16.6 4.1L13.7 5.2M13.3 1.6L12.5 4.1M8.4 4.0L9.3 4.8M45.5 40.0L49.1 39.0M45.5 40.0L46.1 43.0M49.1 39.0L48.9 43.2M46.1 43.0L48.7 43.4M48.7 43.4L48.9 43.2M44.2 39.0L45.5 40.0M44.4 44.8L46.1 43.0M51.8 42.7L48.9 43.2M49.4 47.6L48.7 43.4M25.0 21.9L25.9 21.8M29.4 25.2L26.8 21.8M25.9 21.8L26.8 21.8M23.3 18.2L26.4 17.4M25.9 21.8L26.4 17.4M1.4 47.6L3.8 47.2M1.4 47.6L0.7 43.4M3.8 47.2L3.8 42.7M3.8 42.7L0.9 43.2M0.7 43.4L0.9 43.2M-1.9 43.0L0.7 43.4M-0.1 48.9L1.4 47.6M4.6 47.3L3.8 47.2M4.6 47.3L6.6 46.8M4.4 42.2L3.8 42.7M1.1 39.0L0.9 43.2M12.9 43.6L17.0 45.2M17.4 39.2L17.9 39.6M17.9 39.6L18.4 43.9M17.0 45.2L18.4 43.9M4.6 47.3L5.3 52.3M31.6 25.2L33.3 22.6M26.8 21.8L29.6 19.5M29.6 19.5L33.3 22.6M36.8 24.8L34.8 22.0M33.3 22.6L34.8 22.0M39.8 21.4L35.3 21.4M34.8 22.0L35.3 21.4M32.6 9.1L33.5 9.8M32.6 9.1L33.5 5.7M33.5 9.8L37.1 8.1M33.5 5.7L36.7 5.4M36.7 5.4L37.1 8.1M31.2 4.4L33.5 5.7M28.9 6.5L30.8 9.6M30.8 9.6L32.6 9.1M36.8 5.3L36.7 5.4M38.0 9.6L37.1 8.1M22.0 38.3L21.7 38.7M22.0 38.3L25.4 38.0M21.7 38.7L22.2 42.8M25.4 38.0L26.8 40.1M22.2 42.8L26.2 43.3M26.8 40.1L27.0 42.7M27.0 42.7L26.2 43.3M20.7 34.7L22.0 38.3M17.9 39.6L21.7 38.7M25.9 36.5L25.4 38.0M18.4 43.9L21.0 43.7M21.0 43.7L22.2 42.8M31.2 37.7L26.8 40.1M30.6 43.6L27.0 42.7M26.4 17.4L28.0 16.2M29.6 19.5L29.9 17.1M29.9 17.1L28.0 16.2M22.9 15.1L26.4 14.1M28.0 16.2L26.4 14.1M24.9 8.5L27.1 11.7M30.8 9.6L29.9 11.3M29.9 11.3L27.1 11.7M27.1 11.7L26.4 14.1M16.1 48.7L16.6 52.1M16.1 48.7L13.3 49.6M11.6 47.8L13.3 49.6M17.0 45.2L17.3 47.4M17.3 47.4L16.1 48.7M20.4 49.3L22.6 47.5M22.6 47.5L25.4 47.4M26.0 50.4L26.3 48.6M26.3 48.6L25.4 47.4M17.3 47.4L20.4 49.3M21.0 43.7L22.6 47.5M26.2 43.3L25.4 47.4M30.5 48.2L26.3 48.6M31.1 12.8L30.8 16.6M31.1 12.8L34.5 12.3M30.8 16.6L35.6 16.7M36.8 13.8L34.5 12.3M36.8 13.8L35.9 16.4M35.9 16.4L35.6 16.7M29.9 17.1L30.8 16.6M29.9 11.3L31.1 12.8M33.5 9.8L34.5 12.3M35.3 21.4L35.6 16.7M37.3 13.4L36.8 13.8M39.9 18.4L35.9 16.4" stroke="#9c948a" stroke-width="0.45" fill="none"/><path d="M3.6 2.0h0M3.6 7.2h0M3.0 11.7h0M3.1 13.5h0M3.1 21.1h0M1.7 23.5h0M1.0 27.4h0M2.9 34.1h0M1.7 36.5h0M2.1 41.3h0M2.7 44.5h0M6.2 1.6h0M6.7 6.7h0M5.9 9.4h0M6.1 16.2h0M5.9 21.4h0M6.1 24.5h0M7.0 27.6h0M9.0 31.6h0M7.3 37.9h0M6.1 40.4h0M4.9 44.6h0M11.0 2.0h0M12.0 6.7h0M11.9 9.8h0M11.3 17.1h0M10.5 17.8h0M13.6 22.3h0M11.2 27.4h0M11.9 31.5h0M12.6 35.5h0M13.2 39.9h0M9.5 47.1h0M15.0 3.3h0M15.9 5.8h0M13.6 12.6h0M18.3 16.4h0M16.2 18.0h0M16.5 23.7h0M16.9 28.7h0M15.6 34.0h0M15.8 37.0h0M16.0 41.5h0M13.8 47.3h0M17.9 2.8h0M21.0 6.3h0M18.9 10.4h0M19.8 14.7h0M21.2 19.6h0M21.5 22.7h0M20.7 28.4h0M21.4 31.9h0M19.2 37.3h0M20.2 41.1h0M20.6 46.4h0M23.3 1.7h0M26.7 5.0h0M24.1 12.3h0M25.4 16.8h0M25.8 18.5h0M26.5 25.0h0M22.7 29.2h0M25.6 33.9h0M23.4 35.8h0M23.8 40.6h0M23.2 45.3h0M28.7 2.5h0M31.3 7.5h0M28.7 9.2h0M29.3 13.7h0M26.8 18.6h0M30.0 22.4h0M30.0 28.1h0M28.7 33.9h0M28.3 37.5h0M29.8 40.1h0M28.3 46.3h0M34.0 2.9h0M34.5 8.4h0M32.3 11.1h0M32.7 14.0h0M32.6 19.3h0M34.8 25.6h0M33.6 27.8h0M33.8 33.2h0M32.8 35.4h0M33.4 41.4h0M32.8 46.3h0M36.6 1.6h0M39.7 7.5h0M35.3 10.0h0M39.9 16.3h0M38.2 19.7h0M38.2 23.1h0M37.3 26.9h0M38.1 32.3h0M35.4 37.7h0M37.1 40.0h0M38.8 46.6h0M40.5 0.7h0M41.8 5.4h0M40.3 10.9h0M44.3 13.7h0M41.5 19.9h0M41.2 23.5h0M42.0 27.7h0M41.7 34.0h0M41.6 37.7h0M43.8 42.0h0M41.6 45.5h0M44.6 2.8h0M0.0 6.6h0M44.5 10.6h0M46.8 16.5h0M44.2 21.4h0M45.4 25.7h0M47.5 29.5h0M45.7 31.4h0M46.9 37.7h0M47.9 41.3h0M47.3 45.1h0" stroke="#1e1e2c" stroke-width="1.0" stroke-linecap="round"/></pattern><pattern id="p3" patternUnits="userSpaceOnUse" width="48" height="48"><rect width="48" height="48" fill="#cfc5bd"/><path d="M36.8 47.1L40.0 50.6M36.8 47.1L36.1 47.9M36.1 47.9L36.5 52.2M16.4 -3.5L17.9 0.4M20.6 -3.8L20.6 -0.1M20.6 -0.1L19.3 0.8M17.9 0.4L19.3 0.8M23.5 0.0L20.6 -0.1M23.5 0.0L24.7 -1.6M-1.5 7.9L0.8 11.4M0.8 11.4L-0.1 12.7M-0.1 12.7L-3.5 12.9M9.9 24.0L12.4 23.5M9.9 24.0L9.2 20.5M13.1 20.9L12.4 23.5M13.1 20.9L12.2 19.6M12.2 19.6L9.9 19.8M9.2 20.5L9.9 19.8M4.1 12.4L3.2 10.2M4.1 12.4L4.7 15.7M0.8 11.4L3.2 10.2M-0.1 12.7L1.8 15.8M1.8 15.8L3.9 16.4M4.7 15.7L3.9 16.4M8.4 3.5L6.5 -0.1M8.4 3.5L10.7 3.5M6.5 -0.1L10.2 -1.0M10.7 3.5L11.3 1.6M10.2 -1.0L11.3 1.6M16.1 1.1L13.9 0.3M16.1 1.1L17.9 0.4M13.9 0.3L14.1 -3.2M9.5 8.7L10.9 3.8M9.5 8.7L7.8 9.5M7.8 9.5L5.5 8.2M8.4 3.5L5.0 5.5M10.9 3.8L10.7 3.5M5.0 5.5L5.5 8.2M8.1 11.4L4.1 12.4M8.1 11.4L7.8 9.5M3.2 10.2L3.2 10.2M5.5 8.2L3.2 10.2M-1.5 7.9L-0.0 7.0M3.2 10.2L-0.0 7.0M19.3 48.8L17.9 48.4M19.3 48.8L19.7 51.1M17.9 48.4L16.1 49.1M8.1 11.4L8.6 12.8M4.7 15.7L7.3 15.2M8.6 12.8L7.3 15.2M9.2 20.5L6.3 21.2M9.9 19.8L7.8 15.6M6.3 21.2L3.9 17.1M3.9 17.1L3.9 16.4M7.3 15.2L7.8 15.6M10.9 3.8L12.6 4.7M16.1 1.1L15.5 3.0M11.3 1.6L13.9 0.3M15.5 3.0L12.6 4.7M9.5 8.7L12.5 9.5M12.6 4.7L14.2 7.0M12.5 9.5L14.2 7.0M13.3 12.9L8.6 12.8M13.3 12.9L13.4 12.8M12.5 9.5L13.4 12.8M24.5 2.0L23.5 0.0M24.5 2.0L25.4 2.5M29.2 0.4L27.3 2.3M29.2 0.4L27.6 -1.5M25.4 2.5L27.3 2.3M15.5 3.0L17.2 4.8M14.2 7.0L16.5 7.3M16.5 7.3L17.2 4.8M19.3 0.8L19.7 3.1M17.2 4.8L19.7 3.1M24.5 2.0L21.4 4.9M19.7 3.1L21.4 4.9M25.4 6.4L28.4 6.6M25.4 6.4L25.4 2.5M27.3 2.3L28.4 5.4M28.4 5.4L28.4 6.6M46.5 7.9L48.0 7.0M46.5 7.9L48.8 11.4M48.0 7.0L51.2 10.2M48.8 11.4L51.2 10.2M13.3 12.9L14.2 15.1M7.8 15.6L13.8 16.1M14.2 15.1L13.8 16.1M12.2 19.6L13.7 16.7M13.7 16.7L13.8 16.1M11.4 28.0L13.1 24.9M11.4 28.0L13.2 28.9M13.1 24.9L16.6 24.4M13.2 28.9L16.2 27.2M16.6 24.4L16.2 27.2M13.2 28.9L14.2 31.6M16.2 27.2L17.7 28.4M17.7 28.4L16.8 32.1M14.2 31.6L16.8 32.1M44.5 48.7L45.3 50.8M44.5 48.7L41.7 46.9M41.7 46.9L40.0 50.6M36.8 47.1L36.9 45.2M41.7 45.6L36.9 45.2M41.7 45.6L41.7 46.9M-0.1 39.4L-1.0 42.9M-0.1 39.4L-3.5 39.8M11.4 28.0L9.1 27.9M12.7 33.6L14.2 31.6M12.7 33.6L8.6 30.7M8.6 30.7L9.1 27.9M9.9 24.0L8.6 27.5M13.1 24.9L12.4 23.5M8.6 27.5L9.1 27.9M1.6 43.5L3.2 42.2M1.6 43.5L1.9 46.7M3.2 42.2L6.1 43.8M6.1 43.8L4.8 46.9M1.9 46.7L3.9 47.4M3.9 47.4L4.8 46.9M-3.8 30.5L-0.8 34.7M-2.1 35.3L-0.9 35.1M-0.9 35.1L-0.8 34.7M16.2 44.4L14.1 44.8M16.2 44.4L16.4 44.5M16.4 44.5L17.9 48.4M16.1 49.1L13.9 48.3M13.9 48.3L14.1 44.8M1.8 15.8L-1.1 17.4M6.3 21.2L5.6 22.5M8.6 27.5L7.9 27.2M5.6 22.5L7.9 27.2M3.9 -0.6L3.2 4.3M3.9 -0.6L1.9 -1.3M1.9 -1.3L-0.2 -0.9M-0.2 -0.9L-0.8 2.9M-0.8 2.9L1.6 4.5M1.6 4.5L3.2 4.3M4.8 -1.1L6.5 -0.1M4.8 -1.1L3.9 -0.6M5.0 5.5L3.2 4.3M-2.2 3.1L-0.8 2.9M-3.5 0.7L-0.9 -1.3M-0.9 -1.3L-0.2 -0.9M-0.0 7.0L1.6 4.5M3.2 52.3L3.9 47.4M1.9 46.7L-0.2 47.1M-0.8 50.9L-0.2 47.1M-2.8 44.2L-0.9 46.7M-3.5 48.7L-0.9 46.7M-1.0 42.9L1.6 43.5M-0.2 47.1L-0.9 46.7M6.5 47.9L4.8 46.9M6.5 47.9L8.4 51.5M6.5 47.9L10.2 47.0M10.2 47.0L11.3 49.6M11.3 49.6L13.9 48.3M36.8 23.3L37.4 18.9M36.8 23.3L39.4 23.4M39.4 23.4L40.7 20.5M40.7 20.5L37.4 18.9M33.9 19.4L36.8 18.0M33.9 19.4L33.2 22.2M33.2 22.2L33.9 23.1M35.1 23.9L33.9 23.1M35.1 23.9L36.8 23.3M37.4 18.9L36.8 18.0M33.9 19.4L31.6 16.9M33.7 14.1L37.0 17.4M33.7 14.1L33.6 14.1M33.6 14.1L31.6 16.9M36.8 18.0L37.0 17.4M33.7 14.1L36.0 12.6M36.0 12.6L37.8 13.0M37.0 17.4L37.5 16.9M37.8 13.0L37.5 16.9M44.7 16.4L44.3 14.8M44.7 16.4L42.3 19.4M44.3 14.8L40.4 15.8M42.3 19.4L40.2 16.3M40.4 15.8L40.2 16.3M47.9 12.7L49.8 15.8M47.9 12.7L44.5 12.9M44.5 12.9L44.3 14.8M46.9 17.4L49.8 15.8M46.9 17.4L44.7 16.4M43.9 12.1L40.0 13.0M43.9 12.1L44.5 12.9M40.0 13.0L40.4 15.8M42.2 19.7L40.7 20.5M42.2 19.7L42.3 19.4M37.5 16.9L40.2 16.3M40.0 13.0L38.9 12.4M38.9 12.4L37.8 13.0M30.9 8.1L29.8 7.9M30.9 8.1L31.8 9.1M29.8 7.9L26.8 10.7M31.8 9.1L31.7 11.8M31.7 11.8L28.9 13.4M26.8 10.7L28.9 13.4M25.4 6.4L23.7 7.2M28.4 6.6L29.8 7.9M25.0 11.0L23.7 7.2M25.0 11.0L26.8 10.7M35.3 9.2L36.0 12.6M35.3 9.2L31.8 9.1M33.6 14.1L31.7 11.8M24.7 14.6L19.9 17.4M24.7 14.6L23.8 12.7M19.9 17.4L19.1 15.8M19.1 15.8L23.8 12.7M17.4 10.0L16.8 7.6M17.4 10.0L19.2 11.2M16.8 7.6L21.7 6.3M19.2 11.2L20.3 10.9M20.3 10.9L22.1 6.7M21.7 6.3L22.1 6.7M13.4 12.8L17.4 10.0M16.5 7.3L16.8 7.6M14.2 15.1L18.4 15.1M18.4 15.1L19.2 11.2M21.4 4.9L21.7 6.3M18.4 15.1L19.1 15.8M23.8 12.7L23.8 12.6M23.8 12.6L20.3 10.9M25.0 11.0L23.8 12.6M23.7 7.2L22.1 6.7M12.9 40.8L10.0 39.3M12.9 40.8L12.4 44.0M12.4 44.0L10.4 44.6M10.4 44.6L7.6 42.9M7.6 42.9L8.0 40.4M8.0 40.4L10.0 39.3M15.1 39.5L12.6 35.7M15.1 39.5L12.9 40.8M12.2 35.4L12.6 35.7M12.2 35.4L11.2 35.9M11.2 35.9L10.0 39.3M10.2 47.0L10.4 44.6M14.1 44.8L12.4 44.0M6.1 43.8L7.6 42.9M31.4 33.8L30.9 35.1M31.4 33.8L35.6 33.1M36.9 36.4L35.6 33.1M36.9 36.4L33.4 38.5M30.9 35.1L33.4 38.5M23.8 43.3L20.8 44.0M23.8 43.3L24.7 46.4M24.7 46.4L23.5 48.0M20.6 44.2L20.6 47.9M20.6 44.2L20.8 44.0M20.6 47.9L23.5 48.0M27.6 46.5L24.7 46.4M27.6 46.5L28.6 42.9M23.8 43.1L28.6 42.9M23.8 43.1L23.8 43.3M16.4 44.5L20.6 44.2M19.3 48.8L20.6 47.9M24.5 50.0L23.5 48.0M3.2 42.2L2.5 39.7M8.0 40.4L5.4 37.8M5.4 37.8L2.5 39.7M-0.1 39.4L0.3 39.0M2.5 39.7L0.3 39.0M-0.9 35.1L-0.5 35.7M-0.5 35.7L0.3 39.0M-1.1 17.4L-0.9 20.6M-2.8 22.2L-0.9 20.6M3.9 17.1L1.3 20.8M-0.9 20.6L1.3 20.8M5.6 22.5L3.1 23.1M1.3 20.8L3.1 23.1M47.9 12.7L48.8 11.4M43.9 12.1L43.5 8.3M46.5 7.9L44.1 8.0M43.5 8.3L44.1 8.0M34.1 28.6L35.0 28.4M34.1 28.6L30.8 31.5M31.4 33.8L30.8 31.5M35.6 33.1L36.1 32.1M36.1 32.1L35.0 28.4M35.1 23.9L35.3 28.1M33.9 23.1L30.8 26.8M30.8 26.8L34.1 28.6M35.3 28.1L35.0 28.4M39.4 23.4L40.6 25.2M40.6 25.2L40.5 27.9M35.3 28.1L40.5 27.9M47.2 50.9L47.8 47.1M44.5 48.7L47.1 46.7M47.1 46.7L47.8 47.1M48.0 7.0L49.6 4.5M19.9 17.4L20.2 18.9M13.7 16.7L17.7 19.7M20.2 18.9L17.7 19.7M13.1 20.9L15.7 21.9M17.7 19.7L15.7 21.9M16.6 24.4L16.7 24.4M15.7 21.9L16.7 24.4M16.9 35.3L17.1 35.2M16.9 35.3L15.8 39.6M17.1 35.2L20.0 36.3M20.0 36.3L20.3 38.7M20.3 38.7L18.9 39.9M18.9 39.9L17.0 40.3M17.0 40.3L15.8 39.6M12.7 33.6L12.2 35.4M12.6 35.7L16.9 35.3M16.8 32.1L16.9 32.2M16.9 32.2L17.1 35.2M15.1 39.5L15.8 39.6M19.4 32.0L16.9 32.2M19.4 32.0L20.7 35.2M20.7 35.2L20.0 36.3M23.7 39.5L23.8 43.1M23.7 39.5L20.3 38.7M20.8 44.0L18.9 39.9M16.2 44.4L17.0 40.3M36.1 47.9L31.8 48.8M36.9 45.2L35.6 43.9M31.8 48.8L31.6 48.7M31.6 48.7L32.5 46.0M32.5 46.0L35.6 43.9M27.6 46.5L29.2 48.4M29.2 48.4L27.3 50.3M29.2 48.4L31.6 48.7M31.8 48.8L31.9 49.3M4.9 36.0L5.5 37.3M4.9 36.0L5.1 33.3M5.5 37.3L9.9 35.4M5.1 33.3L7.6 32.4M9.9 35.4L7.6 32.4M5.4 37.8L5.5 37.3M-0.5 35.7L4.9 36.0M-0.8 34.7L0.6 32.7M0.6 32.7L5.0 33.2M5.0 33.2L5.1 33.3M11.2 35.9L9.9 35.4M8.6 30.7L7.6 32.4M49.6 4.5L47.2 2.9M44.1 8.0L45.8 3.1M47.2 2.9L45.8 3.1M36.1 32.1L39.8 32.0M40.5 27.9L40.8 28.2M39.8 32.0L40.8 28.2M47.1 46.7L45.2 44.2M47.8 47.1L49.9 46.7M47.0 42.9L45.2 44.2M47.0 42.9L49.6 43.5M36.9 36.4L37.0 36.5M39.8 32.0L40.7 33.6M40.7 33.6L40.1 35.8M37.0 36.5L40.1 35.8M46.9 17.4L47.1 20.6M42.2 19.7L45.2 22.2M47.1 20.6L45.2 22.2M42.8 33.1L40.7 33.6M42.8 33.1L44.2 30.5M40.8 28.2L44.2 28.9M44.2 30.5L44.2 28.9M22.2 20.2L23.7 20.6M22.2 20.2L25.2 15.1M23.7 20.6L28.4 17.9M25.2 15.1L27.9 16.2M27.9 16.2L28.5 17.2M28.5 17.2L28.4 17.9M24.7 14.6L25.2 15.1M20.2 18.9L21.6 20.2M21.6 20.2L22.2 20.2M28.9 13.4L27.9 16.2M31.6 16.9L28.5 17.2M33.2 22.2L32.5 22.2M28.4 17.9L28.7 19.1M32.5 22.2L28.7 19.1M23.7 20.6L26.0 23.3M28.7 19.1L27.6 23.1M26.0 23.3L27.6 23.1M32.5 22.2L29.1 23.9M27.6 23.1L29.1 23.9M30.8 26.8L29.6 26.7M29.1 23.9L29.6 26.7M30.8 31.5L29.1 30.4M29.1 30.4L29.5 26.7M29.6 26.7L29.5 26.7M29.1 30.4L26.3 31.0M29.5 26.7L24.7 27.3M26.3 31.0L24.7 27.3M26.0 23.3L24.2 26.9M24.2 26.9L24.7 27.3M33.4 38.8L28.9 40.0M33.4 38.8L33.8 40.4M33.8 40.4L30.0 43.1M28.9 40.0L28.3 40.8M28.3 40.8L28.7 42.8M28.7 42.8L30.0 43.1M30.9 35.1L28.4 35.8M33.4 38.5L33.4 38.8M28.4 35.8L28.9 40.0M35.6 42.6L33.8 40.4M35.6 42.6L38.7 41.0M37.0 36.5L38.7 41.0M32.5 46.0L30.0 43.1M35.6 43.9L35.6 42.6M23.7 39.5L24.4 39.1M28.6 42.9L28.7 42.8M24.4 39.1L28.3 40.8M2.2 24.7L0.6 24.9M2.2 24.7L3.8 28.2M0.6 24.9L-1.3 28.7M3.8 28.2L3.7 28.3M3.7 28.3L0.4 29.8M0.4 29.8L-1.3 28.7M3.1 23.1L2.2 24.7M-2.8 22.9L0.6 24.9M7.9 27.2L3.8 28.2M5.0 33.2L3.7 28.3M0.6 32.7L0.4 29.8M49.9 -1.3L47.8 -0.9M47.8 -0.9L47.1 -1.3M47.2 2.9L47.8 -0.9M45.8 3.1L45.3 2.8M44.5 0.7L45.3 2.8M44.5 0.7L47.1 -1.3M44.5 0.7L41.7 -1.1M43.5 8.3L42.6 7.9M45.3 2.8L40.8 3.3M42.6 7.9L40.8 3.3M38.9 12.4L39.0 9.0M42.6 7.9L39.0 9.0M41.7 -1.1L40.0 2.6M40.8 3.3L40.0 2.6M35.3 9.2L37.1 8.0M37.1 8.0L39.0 9.0M29.2 0.4L31.6 0.7M32.5 -2.0L31.6 0.7M41.7 45.6L42.4 44.6M38.7 41.0L39.6 41.0M42.4 44.6L39.6 41.0M45.2 44.2L43.8 44.0M42.4 44.6L43.8 44.0M47.9 39.4L47.0 42.9M47.9 39.4L48.3 39.0M48.3 39.0L50.5 39.7M47.1 20.6L49.3 20.8M23.0 32.1L26.2 31.1M23.0 32.1L22.8 34.5M26.2 31.1L26.8 35.5M22.8 34.5L25.6 36.1M25.6 36.1L26.8 35.5M19.4 32.0L20.9 30.5M20.7 35.2L22.8 34.5M20.9 30.5L23.0 32.1M28.4 35.8L26.8 35.5M26.3 31.0L26.2 31.1M24.4 39.1L25.6 36.1M20.4 28.4L18.5 24.2M20.4 28.4L21.0 28.7M21.0 28.7L23.5 26.9M23.5 26.9L20.7 23.0M18.5 24.2L20.7 23.0M17.7 28.4L20.4 28.4M16.7 24.4L18.5 24.2M20.9 30.5L21.0 28.7M24.2 26.9L23.5 26.9M21.6 20.2L20.7 23.0M40.0 2.6L40.0 2.6M37.1 8.0L36.6 4.2M40.0 2.6L36.6 4.2M36.9 -2.8L36.8 -0.9M40.0 2.6L36.8 -0.9M44.5 39.8L44.0 40.6M44.5 39.8L43.7 37.0M44.0 40.6L41.0 39.3M43.7 37.0L41.3 37.0M41.3 37.0L41.0 39.3M47.9 39.4L44.5 39.8M43.8 44.0L44.0 40.6M39.6 41.0L41.0 39.3M45.9 35.3L43.7 37.0M45.9 35.3L42.8 33.1M40.1 35.8L41.3 37.0M48.6 24.9L46.7 28.7M48.6 24.9L45.2 22.9M45.0 23.3L45.0 28.5M45.0 23.3L45.2 22.9M45.0 28.5L46.7 28.7M50.2 24.7L48.6 24.9M48.4 29.8L51.7 28.3M48.4 29.8L46.7 28.7M45.2 22.2L45.2 22.9M40.6 25.2L45.0 23.3M44.2 28.9L45.0 28.5M36.1 -0.1L36.5 4.2M36.1 -0.1L31.8 0.8M31.9 1.3L33.5 3.7M31.9 1.3L31.8 0.8M33.5 3.7L36.5 4.2M36.8 -0.9L36.1 -0.1M36.6 4.2L36.5 4.2M31.6 0.7L31.8 0.8M28.4 5.4L31.9 1.3M30.9 8.1L33.5 3.7M53.0 33.2L48.6 32.7M52.9 36.0L47.5 35.7M48.6 32.7L47.2 34.7M47.2 34.7L47.1 35.1M47.1 35.1L47.5 35.7M48.4 29.8L48.6 32.7M48.3 39.0L47.5 35.7M44.2 30.5L47.2 34.7M45.9 35.3L47.1 35.1" stroke="#958b84" stroke-width="0.45" fill="none"/><path d="M1.3 1.2h0M2.0 7.7h0M0.7 9.0h0M2.5 12.9h0M0.8 18.6h0M3.5 20.5h0M1.0 26.9h0M2.9 31.3h0M2.6 34.7h0M2.4 37.0h0M0.9 41.9h0M3.0 44.4h0M5.9 1.9h0M8.6 6.5h0M5.6 11.7h0M5.8 12.3h0M7.0 18.4h0M8.3 23.4h0M4.6 25.3h0M5.9 30.5h0M7.5 35.0h0M8.5 37.4h0M4.9 40.8h0M7.9 46.4h0M8.4 0.5h0M11.5 7.4h0M10.6 10.7h0M10.5 15.0h0M10.4 16.7h0M11.1 22.8h0M11.5 24.6h0M11.3 31.3h0M10.1 33.0h0M12.4 38.7h0M10.8 41.7h0M12.5 46.8h0M14.2 2.3h0M15.5 4.6h0M14.8 9.6h0M16.8 12.5h0M15.6 19.4h0M13.8 23.6h0M14.2 26.0h0M16.2 29.5h0M15.3 34.3h0M15.5 36.7h0M14.6 42.2h0M15.4 46.9h0M17.1 3.1h0M18.7 5.5h0M19.6 8.5h0M20.8 13.4h0M16.9 17.7h0M18.1 21.8h0M18.5 26.7h0M18.4 30.1h0M18.8 34.0h0M17.5 37.2h0M18.6 43.0h0M18.8 45.7h0M22.1 2.2h0M24.2 4.4h0M22.5 9.8h0M22.0 15.2h0M22.8 16.6h0M23.5 23.6h0M20.3 25.8h0M23.5 30.2h0M21.3 33.0h0M22.6 36.5h0M21.5 41.7h0M22.4 45.7h0M26.1 0.4h0M26.6 4.4h0M26.3 8.5h0M26.9 12.9h0M25.0 17.9h0M26.7 20.8h0M27.3 25.6h0M27.6 28.4h0M24.5 33.3h0M27.4 38.6h0M26.1 41.6h0M26.3 44.4h0M29.2 3.4h0M30.3 4.4h0M29.0 11.3h0M30.8 14.4h0M31.3 19.5h0M29.6 21.6h0M31.3 24.9h0M31.0 28.8h0M28.5 32.8h0M30.0 38.4h0M30.7 40.8h0M29.7 45.5h0M35.5 1.0h0M34.5 6.9h0M34.4 11.5h0M36.4 14.6h0M34.2 16.8h0M36.1 20.8h0M32.6 25.9h0M33.6 31.7h0M34.2 35.1h0M36.7 39.5h0M32.3 43.2h0M35.1 47.2h0M36.8 0.8h0M39.4 6.2h0M37.1 10.9h0M38.9 14.8h0M39.6 18.2h0M38.2 21.0h0M37.9 25.7h0M38.0 30.4h0M38.1 33.7h0M39.2 38.6h0M38.8 43.4h0M38.6 47.3h0M43.5 1.5h0M43.8 4.5h0M40.9 11.0h0M41.7 14.4h0M42.2 16.5h0M42.0 22.7h0M43.3 25.8h0M42.2 31.4h0M43.0 34.9h0M42.9 39.1h0M42.1 40.9h0M44.8 47.4h0M45.8 0.7h0M46.5 5.5h0M46.6 10.4h0M46.9 15.2h0M45.1 18.9h0M0.5 22.9h0M46.7 25.8h0M46.1 31.6h0M44.6 32.7h0M45.5 38.3h0M45.8 41.1h0M0.4 44.7h0" stroke="#1e1a2a" stroke-width="1.0" stroke-linecap="round"/></pattern><pattern id="p4" patternUnits="userSpaceOnUse" width="48" height="48"><rect width="48" height="48" fill="#c0c4a8"/><path d="M7.3 31.9L10.5 29.4M7.3 31.9L10.2 35.1M10.5 29.4L12.6 34.6M10.2 35.1L12.3 35.4M12.6 34.6L12.3 35.4M4.4 32.9L4.5 36.0M4.4 32.9L4.8 32.1M4.5 36.0L5.7 37.3M5.7 37.3L7.6 37.1M7.6 37.1L10.2 35.1M7.3 31.9L5.0 32.0M4.8 32.1L5.0 32.0M26.0 -0.1L22.4 3.5M26.0 -0.1L26.8 0.1M26.8 0.1L28.5 3.5M28.5 3.5L24.7 5.4M24.7 5.4L22.8 4.8M22.8 4.8L22.4 3.5M24.8 11.3L27.8 12.3M24.8 11.3L25.3 9.5M27.8 12.3L29.3 8.1M25.3 9.5L26.4 8.3M26.4 8.3L29.3 8.1M21.6 7.0L25.3 9.5M21.6 7.0L22.8 4.8M24.7 5.4L26.4 8.3M23.9 11.9L24.8 11.3M23.9 11.9L24.5 16.5M24.5 16.5L27.8 16.0M27.8 16.0L28.7 15.3M27.8 12.3L28.0 12.6M28.7 15.3L28.0 12.6M19.8 35.1L19.7 34.4M19.8 35.1L17.4 36.8M19.7 34.4L18.2 32.8M17.4 36.8L17.0 36.8M17.0 36.8L15.3 32.4M18.2 32.8L15.3 32.4M14.9 32.3L12.6 34.6M14.9 32.3L15.3 32.4M12.3 35.4L13.4 37.4M13.4 37.4L17.0 36.8M7.8 52.4L9.3 47.8M9.3 47.8L9.0 47.5M4.1 50.4L3.6 48.4M3.6 48.4L4.5 47.8M4.5 47.8L9.0 47.5M20.1 41.1L21.8 38.9M20.1 41.1L18.0 38.6M18.0 38.6L17.4 36.8M19.8 35.1L21.3 36.1M21.8 38.9L21.3 36.1M24.3 32.5L22.0 31.6M24.3 32.5L24.0 35.6M22.0 31.6L19.7 34.4M21.3 36.1L24.0 35.6M21.8 38.9L24.7 39.8M24.0 35.6L25.8 36.3M25.8 36.3L26.2 38.1M24.7 39.8L26.2 38.1M4.4 32.9L-0.5 33.7M4.5 36.0L2.0 37.3M-0.5 33.7L-1.4 35.5M-1.4 35.5L-0.9 36.9M2.0 37.3L-0.9 36.9M-0.9 36.9L-1.9 38.7M0.9 44.2L-2.5 44.1M0.9 44.2L1.6 43.3M-1.9 38.7L1.2 40.9M1.6 43.3L1.2 40.9M2.0 37.3L2.1 39.5M2.1 39.5L1.2 40.9M0.9 44.2L2.7 47.8M2.7 47.8L-0.7 49.1M-3.3 46.8L-0.7 49.1M3.6 48.4L2.7 47.8M36.2 14.8L36.9 12.3M36.2 14.8L39.9 16.5M39.9 16.5L42.0 15.6M42.0 15.6L40.8 11.6M36.9 12.3L40.8 11.6M34.3 3.4L37.7 0.8M34.3 3.4L33.5 3.4M33.5 3.4L32.5 2.4M32.5 2.4L32.8 -0.2M32.8 -0.2L33.8 -0.9M33.8 -0.9L36.7 -1.0M36.7 -1.0L37.7 0.8M40.1 2.6L40.2 3.5M40.1 2.6L37.7 0.8M37.3 5.3L40.2 3.5M37.3 5.3L34.3 3.4M29.4 -1.9L32.8 -0.2M29.4 -1.9L26.8 0.1M28.5 3.5L28.9 3.7M28.9 3.7L32.5 2.4M33.4 -4.5L33.8 -0.9M37.3 -2.2L36.7 -1.0M40.4 -3.4L41.7 0.1M41.7 0.1L40.1 2.6M33.1 6.9L29.7 7.7M33.1 6.9L35.8 8.6M35.8 8.6L35.6 10.0M35.6 10.0L31.8 11.3M31.6 11.1L31.8 11.3M31.6 11.1L29.6 7.9M29.6 7.9L29.7 7.7M28.9 3.7L29.7 7.7M33.5 3.4L33.1 6.9M37.3 5.3L36.2 8.2M36.2 8.2L35.8 8.6M33.0 16.3L34.6 16.0M33.0 16.3L32.0 15.6M34.6 16.0L36.2 14.8M32.0 15.6L31.8 11.3M36.9 12.3L35.6 10.0M28.7 15.3L32.0 15.6M28.0 12.6L31.6 11.1M29.3 8.1L29.6 7.9M7.6 37.1L9.8 39.7M13.4 37.4L13.2 38.0M13.2 38.0L9.8 39.7M18.0 38.6L16.5 40.7M13.2 38.0L13.3 38.5M16.5 40.7L13.3 38.5M9.3 47.8L12.3 47.7M12.7 50.1L13.2 49.0M13.2 49.0L12.3 47.7M16.5 40.7L17.3 43.9M13.3 38.5L13.4 43.5M13.4 43.5L17.3 43.9M8.2 43.5L6.5 44.3M8.2 43.5L8.7 42.8M8.7 42.8L8.6 42.1M8.6 42.1L5.6 40.0M6.5 44.3L3.5 42.6M3.5 42.6L5.1 40.3M5.6 40.0L5.1 40.3M4.5 47.8L6.5 44.3M9.0 47.5L8.2 43.5M12.3 47.7L12.9 43.9M12.9 43.9L8.7 42.8M9.8 39.7L8.6 42.1M12.9 43.9L13.4 43.5M5.7 37.3L5.6 40.0M1.6 43.3L3.5 42.6M2.1 39.5L5.1 40.3M28.6 39.0L26.2 38.1M28.6 39.0L28.9 39.4M24.7 39.8L24.8 42.7M28.9 39.4L28.2 42.6M24.8 42.7L28.2 42.6M28.5 19.5L26.1 21.0M28.5 19.5L31.5 20.6M31.5 20.6L28.8 23.3M28.8 23.3L26.4 22.4M26.1 21.0L26.4 22.4M24.5 16.5L23.9 17.3M27.8 16.0L28.5 19.5M23.9 17.3L24.0 19.1M24.0 19.1L26.1 21.0M33.0 16.3L32.1 20.4M32.1 20.4L31.5 20.6M32.1 20.4L33.5 22.0M33.5 22.0L33.0 23.7M33.0 23.7L29.2 24.5M29.2 24.5L28.8 23.3M37.7 48.8L34.3 51.4M37.7 48.8L40.1 50.6M12.7 2.1L8.7 5.0M12.7 2.1L13.2 1.0M13.2 1.0L12.3 -0.3M8.7 5.0L7.8 4.4M12.3 -0.3L9.3 -0.2M7.8 4.4L9.3 -0.2M21.3 2.8L20.6 0.7M21.3 2.8L17.3 4.0M20.6 0.7L17.2 -0.4M17.3 4.0L15.8 1.1M15.8 1.1L17.2 -0.4M21.6 7.0L19.6 8.7M22.4 3.5L21.3 2.8M17.3 4.0L19.6 8.7M17.3 4.0L17.3 4.0M12.7 2.1L14.2 6.3M13.2 1.0L15.8 1.1M17.3 4.0L14.2 6.3M17.4 -4.1L17.2 -0.4M12.3 -0.3L12.9 -4.1M47.9 18.6L47.5 16.7M47.9 18.6L45.5 21.8M44.3 16.4L43.4 19.6M44.3 16.4L45.4 15.9M43.4 19.6L45.5 21.8M47.5 16.7L45.4 15.9M42.0 15.6L44.3 16.4M40.8 11.6L40.9 11.6M44.6 12.3L40.9 11.6M44.6 12.3L45.6 13.8M45.4 15.9L45.6 13.8M47.8 7.6L49.9 7.9M47.8 7.6L47.5 4.5M52.1 2.4L47.5 4.5M13.2 49.0L15.8 49.1M17.4 43.9L17.2 47.6M17.4 43.9L17.3 43.9M15.8 49.1L17.2 47.6M14.9 32.3L14.4 28.6M10.5 29.4L11.3 27.7M11.3 27.7L14.2 28.5M14.4 28.6L14.2 28.5M18.2 32.8L18.4 28.4M14.4 28.6L18.4 28.4M22.0 31.6L21.7 28.3M21.7 28.3L19.7 27.5M18.4 28.4L19.7 27.5M28.9 39.4L31.9 39.6M29.5 44.0L28.2 42.6M29.5 44.0L31.5 43.1M31.9 39.6L31.5 43.1M33.8 47.1L32.8 47.8M33.8 47.1L33.4 43.5M32.8 47.8L29.4 46.1M29.4 46.1L29.5 44.0M33.4 43.5L31.5 43.1M28.5 51.5L26.8 48.1M26.8 48.1L26.0 47.9M26.0 47.9L22.4 51.5M17.2 47.6L20.6 48.7M20.6 48.7L21.3 50.8M37.3 45.8L39.8 44.3M37.3 45.8L35.2 42.2M39.8 44.3L39.2 40.5M39.2 40.5L35.6 41.2M35.2 42.2L35.6 41.2M36.7 47.0L33.8 47.1M36.7 47.0L37.3 45.8M33.4 43.5L35.2 42.2M33.5 38.7L35.6 41.2M33.5 38.7L31.9 39.6M36.7 47.0L37.7 48.8M40.1 50.6L41.7 48.1M39.8 44.3L40.4 44.6M40.4 44.6L41.7 48.1M33.8 36.7L33.5 38.7M33.8 36.7L38.5 37.4M39.2 40.5L39.4 40.3M39.4 40.3L38.5 37.4M48.9 44.2L50.7 47.8M48.9 44.2L49.6 43.3M34.6 16.0L37.2 19.5M33.5 22.0L33.8 22.0M33.8 22.0L37.2 19.5M33.8 36.7L33.5 35.6M39.8 32.5L40.2 32.8M39.8 32.5L39.2 32.3M40.2 32.8L40.2 33.1M38.5 37.4L40.2 33.1M33.5 35.6L39.2 32.3M32.8 47.8L32.5 50.4M26.8 48.1L29.4 46.1M8.7 5.0L9.5 6.8M14.2 6.3L14.1 6.4M9.5 6.8L13.1 7.3M14.1 6.4L13.1 7.3M-0.5 33.7L-2.4 29.4M40.7 8.6L41.4 9.8M40.7 8.6L41.0 4.1M41.4 9.8L44.9 8.7M42.7 4.4L41.0 4.1M42.7 4.4L45.3 8.4M45.3 8.4L44.9 8.7M36.2 8.2L40.7 8.6M40.9 11.6L41.4 9.8M40.2 3.5L41.0 4.1M44.6 12.3L44.9 8.7M46.7 8.3L47.5 11.8M46.7 8.3L45.3 8.4M47.5 11.8L45.6 13.8M47.5 11.8L49.3 12.4M47.5 16.7L49.9 15.7M47.8 7.6L46.7 8.3M47.9 18.6L50.2 21.1M7.8 4.4L5.1 3.8M9.5 6.8L8.4 9.3M8.4 9.3L7.1 9.8M7.1 9.8L3.5 6.8M5.1 3.8L3.5 6.8M7.1 9.8L5.4 11.9M3.0 10.9L5.4 11.9M3.0 10.9L1.9 7.9M3.5 6.8L1.9 7.9M45.5 21.8L45.8 22.8M50.2 21.1L46.9 23.4M46.9 23.4L45.8 22.8M51.2 24.9L48.0 25.7M52.0 27.1L48.3 28.8M48.0 25.7L47.3 28.5M48.3 28.8L47.3 28.5M46.9 23.4L48.0 25.7M52.8 32.1L48.3 28.8M45.8 22.8L45.7 22.9M45.7 22.9L43.5 27.1M43.5 27.1L45.4 29.4M45.4 29.4L45.6 29.4M45.6 29.4L47.3 28.5M48.9 -3.8L50.7 -0.2M45.0 3.2L44.0 -0.6M45.0 3.2L46.3 3.2M46.3 3.2L47.3 1.1M47.3 1.1L44.7 -1.2M44.0 -0.6L44.7 -1.2M41.7 0.1L44.0 -0.6M42.7 4.4L45.0 3.2M47.5 4.5L46.3 3.2M50.7 -0.2L47.3 1.1M5.0 32.0L5.3 28.0M11.3 27.7L11.2 27.6M11.2 27.6L7.3 26.5M5.3 28.0L7.3 26.5M11.2 27.6L11.5 24.5M14.2 28.5L15.7 24.7M15.7 24.7L13.2 23.3M11.5 24.5L13.2 23.3M19.1 23.9L18.4 23.5M19.1 23.9L21.5 22.5M18.4 23.5L16.7 20.5M21.9 21.5L21.5 22.5M21.9 21.5L19.6 19.4M19.6 19.4L16.7 20.5M19.7 27.5L19.1 23.9M15.7 24.7L18.4 23.5M21.7 28.3L24.8 27.3M24.7 24.6L24.8 27.3M24.7 24.6L21.5 22.5M15.6 19.7L16.7 20.5M15.6 19.7L14.6 20.3M14.6 20.3L13.2 23.3M24.0 19.1L21.9 21.5M24.7 24.6L26.4 22.4M24.3 43.2L24.8 46.5M24.3 43.2L20.0 42.9M24.8 46.5L21.4 47.0M21.4 47.0L19.6 43.3M20.0 42.9L19.6 43.3M24.8 42.7L24.3 43.2M26.0 47.9L24.8 46.5M20.1 41.1L20.0 42.9M20.6 48.7L21.4 47.0M17.4 43.9L19.6 43.3M45.0 51.2L44.0 47.4M47.3 49.1L44.7 46.8M44.7 46.8L44.0 47.4M41.7 48.1L44.0 47.4M50.7 47.8L47.3 49.1M48.9 44.2L45.5 44.1M45.5 44.1L44.7 46.8M45.5 44.1L45.1 43.6M45.1 43.6L40.4 44.6M39.4 40.3L42.8 39.6M40.2 33.1L42.5 37.0M42.5 37.0L42.8 39.6M40.2 32.8L41.4 32.5M41.4 32.5L45.6 35.2M42.5 37.0L45.6 35.2M45.1 43.6L44.2 40.1M42.8 39.6L44.2 40.1M49.2 40.9L46.1 38.7M44.2 40.1L46.1 38.7M33.0 23.7L33.0 27.8M33.0 27.8L35.5 27.5M33.8 22.0L37.6 23.9M37.6 23.9L35.5 27.5M39.8 32.5L40.6 26.6M39.2 32.3L39.0 32.1M39.0 32.1L36.7 28.4M36.7 28.4L40.6 26.6M41.4 32.5L45.4 29.4M43.5 27.1L41.0 25.9M40.6 26.6L41.0 25.9M45.7 22.9L40.3 23.9M41.0 25.9L40.3 23.9M41.2 20.7L40.1 23.7M41.2 20.7L39.5 18.6M39.5 18.6L37.3 19.5M37.3 19.5L38.8 23.6M40.1 23.7L38.8 23.6M43.4 19.6L41.2 20.7M40.3 23.9L40.1 23.7M39.9 16.5L39.5 18.6M37.2 19.5L37.3 19.5M37.6 23.9L38.8 23.6M36.7 28.4L35.5 27.5M33.5 35.6L33.2 35.3M39.0 32.1L33.1 31.1M33.1 31.1L33.2 35.3M33.0 27.8L33.0 27.9M33.0 27.9L32.7 30.3M33.1 31.1L32.7 30.3M28.6 39.0L30.3 35.1M33.2 35.3L30.3 35.1M25.8 36.3L28.3 33.7M30.3 35.1L28.3 33.7M29.2 26.7L25.8 27.8M29.2 26.7L30.1 27.1M30.1 27.1L28.5 32.0M25.8 27.8L26.8 31.4M26.8 31.4L28.1 32.3M28.1 32.3L28.5 32.0M29.2 24.5L29.2 26.7M24.8 27.3L25.8 27.8M33.0 27.9L30.1 27.1M32.7 30.3L28.5 32.0M24.3 32.5L26.8 31.4M28.3 33.7L28.1 32.3M23.9 17.3L22.0 16.9M19.6 19.4L20.7 17.1M22.0 16.9L20.7 17.1M15.6 19.7L15.7 16.9M20.7 17.1L17.5 15.8M15.7 16.9L17.5 15.8M19.6 -4.7L21.4 -1.0M21.4 -1.0L24.8 -1.5M20.6 0.7L21.4 -1.0M26.0 -0.1L24.8 -1.5M-1.1 23.4L2.2 21.1M2.2 21.1L-0.1 18.6M-0.1 18.6L-2.5 21.8M-0.5 16.7L-0.1 18.6M-0.5 16.7L-2.6 15.9M0.0 25.7L-0.7 28.5M0.0 25.7L3.2 24.9M4.0 27.1L3.2 24.9M4.0 27.1L0.3 28.8M0.3 28.8L-0.7 28.5M-2.4 29.4L-0.7 28.5M-1.1 23.4L0.0 25.7M4.8 32.1L0.3 28.8M5.3 28.0L4.0 27.1M14.6 20.3L10.7 19.6M11.5 24.5L9.3 22.1M10.7 19.6L9.3 22.1M-1.3 8.3L-0.5 11.8M-0.5 11.8L-2.4 13.8M1.3 12.4L3.0 10.9M1.3 12.4L-0.5 11.8M1.9 7.9L-0.2 7.6M-0.2 7.6L-1.3 8.3M-0.5 16.7L1.9 15.7M1.3 12.4L1.9 15.7M50.0 37.3L47.1 36.9M47.5 33.7L52.4 32.9M47.5 33.7L46.6 35.5M46.6 35.5L47.1 36.9M46.1 38.7L47.1 36.9M45.6 29.4L47.5 33.7M45.6 35.2L46.6 35.5M14.1 6.4L18.7 9.0M13.1 7.3L14.0 10.9M14.0 10.9L18.7 9.0M22.0 16.9L20.1 11.5M17.5 15.8L18.3 13.3M18.3 13.3L20.1 11.5M19.6 8.7L19.5 9.0M19.5 9.0L18.7 9.0M23.9 11.9L20.3 11.2M19.5 9.0L20.3 11.2M20.3 11.2L20.1 11.5M8.4 9.3L10.5 12.0M14.0 10.9L13.9 11.1M10.5 12.0L13.9 11.1M18.3 13.3L14.0 11.3M13.9 11.1L14.0 11.3M15.7 16.9L14.3 15.8M14.0 11.3L14.3 15.8M8.2 -4.5L9.0 -0.5M6.5 -3.7L4.5 -0.2M9.0 -0.5L4.5 -0.2M9.3 -0.2L9.0 -0.5M5.4 11.9L5.7 14.2M1.9 15.7L4.0 16.0M5.7 14.2L4.0 16.0M10.5 12.0L9.6 15.2M5.7 14.2L9.6 15.2M14.3 15.8L10.1 15.9M9.6 15.2L10.1 15.9M10.7 19.6L9.8 17.1M9.8 17.1L10.1 15.9M6.2 23.4L4.5 22.8M6.2 23.4L9.3 22.1M9.3 22.1L6.6 18.9M4.5 22.8L3.8 21.3M3.8 21.3L5.0 18.9M5.0 18.9L6.6 18.9M7.3 26.5L6.2 23.4M3.2 24.9L4.5 22.8M9.3 22.1L9.3 22.1M9.8 17.1L6.6 18.9M2.2 21.1L3.8 21.3M4.0 16.0L5.0 18.9M-0.5 4.5L4.1 2.4M-0.5 4.5L-1.7 3.2M-1.7 3.2L-0.7 1.1M-0.7 1.1L2.7 -0.2M4.1 2.4L3.6 0.4M2.7 -0.2L3.6 0.4M5.1 3.8L4.1 2.4M-0.2 7.6L-0.5 4.5M-3.3 -1.2L-0.7 1.1M0.9 -3.8L2.7 -0.2M4.5 -0.2L3.6 0.4" stroke="#868270" stroke-width="0.45" fill="none"/><path d="M0.5 2.6h0M1.5 4.9h0M0.8 10.7h0M3.0 13.1h0M2.2 18.5h0M1.5 23.6h0M2.3 26.8h0M3.1 28.5h0M1.3 35.2h0M3.4 39.0h0M3.0 40.5h0M4.4 44.6h0M7.4 1.0h0M6.1 7.3h0M4.5 9.3h0M8.1 12.4h0M7.0 17.0h0M6.9 20.9h0M5.1 25.8h0M7.4 28.8h0M7.6 35.0h0M7.8 39.2h0M5.6 42.3h0M7.2 46.2h0M10.2 1.9h0M12.2 4.6h0M11.4 9.6h0M12.4 13.6h0M8.5 19.6h0M11.9 21.6h0M8.5 24.6h0M12.7 31.5h0M10.3 32.4h0M9.7 37.7h0M11.3 41.0h0M10.1 45.7h0M14.7 3.7h0M16.8 6.6h0M15.7 8.6h0M15.9 13.4h0M12.5 18.1h0M15.3 23.2h0M14.3 25.1h0M16.8 31.0h0M15.6 34.5h0M16.4 39.6h0M15.4 41.0h0M14.9 46.4h0M18.6 1.7h0M19.6 5.2h0M16.8 11.4h0M20.3 14.8h0M18.8 18.3h0M19.7 20.7h0M16.5 26.0h0M19.8 31.1h0M16.4 34.1h0M19.8 38.5h0M17.6 40.4h0M19.5 46.7h0M22.7 0.3h0M24.2 7.7h0M23.1 9.2h0M22.1 14.2h0M20.9 19.4h0M24.0 22.2h0M22.2 24.9h0M24.1 30.8h0M22.9 33.6h0M23.7 37.8h0M22.7 40.8h0M22.3 45.4h0M25.6 3.2h0M27.0 6.0h0M27.3 10.4h0M26.3 13.6h0M27.1 18.8h0M28.5 21.1h0M27.2 24.7h0M28.8 29.4h0M25.4 33.8h0M28.3 36.6h0M26.7 40.6h0M26.9 44.7h0M30.1 0.9h0M31.6 5.1h0M29.4 11.1h0M30.0 12.6h0M29.5 18.2h0M30.9 23.6h0M31.2 24.7h0M29.8 29.8h0M31.0 32.7h0M30.7 37.6h0M30.4 41.4h0M32.1 45.0h0M35.1 1.5h0M34.9 5.5h0M32.6 9.2h0M33.7 12.4h0M35.3 19.5h0M36.6 21.3h0M34.9 24.7h0M35.6 30.4h0M35.2 32.6h0M36.5 38.6h0M32.9 41.6h0M35.1 44.6h0M36.4 3.1h0M39.0 7.2h0M38.8 9.7h0M39.5 14.1h0M37.8 17.7h0M38.9 20.4h0M38.2 26.7h0M39.0 28.4h0M37.0 35.6h0M40.8 37.2h0M37.4 43.2h0M39.6 47.0h0M43.6 1.5h0M42.5 7.4h0M43.6 11.2h0M43.3 13.0h0M41.4 18.3h0M43.2 22.0h0M43.7 24.6h0M41.6 28.7h0M43.6 35.5h0M44.3 36.8h0M41.8 42.5h0M42.5 45.9h0M45.5 1.1h0M45.5 5.4h0M45.7 11.4h0M0.0 13.5h0M45.8 19.5h0M47.7 20.9h0M45.4 25.6h0M0.8 31.6h0M45.1 33.3h0M0.7 39.1h0M47.4 41.1h0M47.1 47.3h0" stroke="#1e2028" stroke-width="1.0" stroke-linecap="round"/></pattern><pattern id="p5" patternUnits="userSpaceOnUse" width="48" height="48"><rect width="48" height="48" fill="#ece7e1"/><path d="M41.1 18.1L43.4 18.3M41.1 18.1L40.2 18.6M43.4 18.3L44.6 20.4M40.2 18.6L40.4 22.7M40.4 22.7L40.7 23.0M40.7 23.0L44.6 20.4M36.0 22.9L36.2 25.3M36.0 22.9L34.2 22.1M36.2 25.3L34.2 27.7M33.6 27.1L32.7 22.2M33.6 27.1L34.0 27.8M34.2 22.1L32.7 22.2M34.0 27.8L34.2 27.7M36.2 25.3L39.1 26.5M36.6 28.9L34.2 27.7M36.6 28.9L39.2 28.3M39.2 28.3L39.1 26.5M36.0 22.9L37.4 22.3M37.4 22.3L40.4 22.7M40.7 23.0L41.0 24.0M39.1 26.5L41.0 24.0M42.3 11.4L45.3 12.2M42.3 11.4L43.0 14.6M45.3 12.2L45.8 15.7M43.0 14.6L44.7 16.1M45.8 15.7L44.7 16.1M41.7 10.8L42.3 11.4M41.7 10.8L39.3 12.6M41.0 15.7L43.0 14.6M41.0 15.7L38.9 13.9M39.3 12.6L38.9 13.9M41.0 15.7L41.1 18.1M43.4 18.3L44.7 16.1M46.5 8.1L41.7 10.5M46.5 8.1L42.3 6.0M41.7 10.5L40.4 7.5M42.3 6.0L40.4 7.5M30.2 29.4L29.2 33.7M30.2 29.4L27.3 30.3M27.9 33.9L29.2 33.7M27.9 33.9L26.7 33.2M26.7 33.2L27.3 30.3M41.7 10.8L41.7 10.5M45.3 12.2L48.2 10.8M46.5 8.1L47.4 8.0M48.2 10.8L47.4 8.0M39.0 6.9L37.6 3.6M39.0 6.9L36.2 8.7M33.6 6.3L35.8 3.9M33.6 6.3L34.7 8.3M35.8 3.9L37.4 3.5M34.7 8.3L36.2 8.7M37.4 3.5L37.6 3.6M36.3 10.8L39.3 12.6M36.3 10.8L36.2 8.7M40.4 7.5L39.0 6.9M36.3 10.8L34.4 12.7M34.4 12.7L31.8 11.0M31.7 10.7L31.8 11.0M31.7 10.7L34.7 8.3M37.6 47.8L40.3 47.1M37.6 47.8L37.8 43.8M40.3 47.1L40.7 45.7M40.7 45.7L37.8 43.8M36.4 39.8L34.7 40.0M36.4 39.8L37.8 42.7M34.7 40.0L33.9 44.2M33.9 44.2L37.5 43.3M37.8 42.7L37.5 43.3M45.2 48.2L43.5 51.1M45.2 48.2L44.0 47.1M44.0 47.1L41.1 48.1M41.3 49.9L41.1 48.1M43.5 45.0L42.4 44.4M43.5 45.0L44.0 47.1M40.3 47.1L41.1 48.1M40.7 45.7L42.4 44.4M33.6 27.1L30.3 24.5M30.8 21.6L32.7 22.2M30.8 21.6L30.4 22.0M30.4 22.0L30.3 24.5M30.9 29.0L32.4 29.3M30.9 29.0L29.4 26.6M32.4 29.3L34.0 27.8M30.3 24.5L29.4 26.6M30.9 29.0L30.2 29.4M26.5 29.2L27.3 30.3M26.5 29.2L26.4 26.7M29.4 26.6L26.4 26.7M30.8 21.6L30.8 20.7M28.0 17.5L30.8 20.7M28.0 17.5L26.2 18.0M30.4 22.0L28.5 22.2M28.5 22.2L25.3 19.2M26.2 18.0L25.3 19.2M34.8 14.4L37.3 15.2M34.8 14.4L32.6 16.2M32.6 16.2L32.7 17.3M32.7 17.3L35.6 18.6M37.3 15.2L37.6 17.9M35.6 18.6L37.4 18.1M37.4 18.1L37.6 17.9M34.4 12.7L34.8 14.4M38.9 13.9L37.3 15.2M30.3 14.9L31.8 11.0M30.3 14.9L32.6 16.2M28.0 17.5L28.8 15.1M30.8 20.7L32.7 17.3M28.8 15.1L30.3 14.9M34.2 22.1L35.6 18.6M40.2 18.6L37.6 17.9M37.4 22.3L37.4 18.1M28.8 15.1L26.8 13.1M31.7 10.7L30.4 9.9M30.4 9.9L26.8 13.1M24.1 14.6L24.1 14.8M24.1 14.6L26.5 13.1M24.1 14.8L26.2 18.0M26.5 13.1L26.8 13.1M31.2 33.9L32.5 36.0M31.2 33.9L32.9 31.2M32.9 31.2L35.5 32.5M35.5 32.5L32.9 36.2M32.9 36.2L32.5 36.0M27.9 33.9L28.2 36.4M29.2 33.7L31.2 33.9M28.2 36.4L30.4 38.0M30.4 38.0L32.5 36.0M32.4 29.3L32.9 31.2M36.5 32.6L35.5 32.5M36.5 32.6L36.6 28.9M48.8 44.8L48.0 45.6M48.8 44.8L51.4 44.8M48.0 45.6L47.4 47.9M51.6 49.3L48.0 48.6M47.4 47.9L48.0 48.6M45.3 44.1L48.0 45.6M45.3 44.1L43.5 45.0M45.2 48.2L47.4 47.9M47.7 50.8L48.0 48.6M33.4 36.5L37.9 36.4M33.4 36.5L32.9 36.2M36.5 32.6L37.9 33.4M37.9 33.4L37.9 36.4M36.4 39.8L38.1 36.7M33.4 36.5L33.8 39.5M33.8 39.5L34.7 40.0M38.1 36.7L37.9 36.4M51.3 17.4L48.6 13.9M48.6 13.9L49.1 11.6M46.1 15.7L48.6 13.9M46.1 15.7L45.8 15.7M48.2 10.8L49.1 11.6M40.3 -0.9L37.6 -0.2M40.3 -0.9L40.7 -2.3M37.6 -0.2L37.8 -4.2M41.1 0.1L41.3 1.9M41.1 0.1L40.3 -0.9M41.3 1.9L37.6 3.6M36.9 0.5L37.6 -0.2M36.9 0.5L37.4 3.5M41.3 1.9L43.5 3.1M42.3 6.0L43.7 3.7M43.7 3.7L43.5 3.1M36.9 48.5L37.4 51.5M36.9 48.5L34.3 47.2M34.3 47.2L33.1 50.6M37.6 47.8L36.9 48.5M33.5 44.5L33.9 44.2M33.5 44.5L33.3 46.0M33.3 46.0L34.3 47.2M37.8 43.8L37.5 43.3M-2.6 20.7L0.7 18.9M-1.9 15.7L0.7 18.9M20.6 33.5L21.0 37.5M20.6 33.5L22.6 32.7M22.6 32.7L24.7 33.7M24.7 33.7L24.4 37.5M24.4 37.5L21.0 37.5M22.7 30.0L22.6 32.7M22.7 30.0L26.5 29.2M26.7 33.2L24.7 33.7M26.0 38.8L28.2 36.4M26.0 38.8L25.3 38.8M25.3 38.8L24.4 37.5M0.6 13.9L-1.9 15.7M0.6 13.9L1.1 11.6M1.1 11.6L0.2 10.8M-2.7 12.2L0.2 10.8M0.7 18.9L1.7 19.1M1.7 19.1L1.7 22.2M-2.2 22.3L-0.6 24.0M1.7 22.2L-0.6 24.0M48.7 18.9L49.7 19.1M48.7 18.9L45.4 20.7M49.7 22.2L47.4 24.0M47.4 24.0L45.8 22.3M45.4 20.7L45.8 22.3M46.1 15.7L48.7 18.9M44.6 20.4L45.4 20.7M42.9 25.1L42.9 25.1M42.9 25.1L45.8 22.3M47.5 25.4L47.1 25.7M47.5 25.4L47.4 24.0M42.9 25.1L47.1 25.7M41.0 24.0L42.9 25.1M28.5 22.2L26.8 23.2M26.4 26.7L26.3 26.5M26.8 23.2L26.3 26.5M22.5 29.3L20.5 28.0M22.5 29.3L24.5 26.4M20.1 25.5L20.5 28.0M20.1 25.5L22.6 24.5M22.6 24.5L24.5 26.4M22.5 29.3L22.7 30.0M24.5 26.4L26.3 26.5M24.4 19.6L22.3 17.9M24.4 19.6L23.5 22.2M23.4 22.3L23.5 22.2M23.4 22.3L19.5 20.5M22.3 17.9L20.1 18.0M19.5 20.5L20.1 18.0M24.1 14.8L22.3 17.9M25.3 19.2L24.4 19.6M26.8 23.2L23.5 22.2M22.6 24.5L23.4 22.3M18.6 21.3L18.5 24.8M18.6 21.3L19.5 20.5M20.1 25.5L18.5 24.8M46.7 37.3L46.7 37.3M46.7 37.3L49.6 34.8M51.8 39.9L48.0 40.2M46.7 37.3L48.0 40.2M45.3 44.1L45.7 41.5M48.8 44.8L47.9 40.3M45.7 41.5L47.9 40.3M47.9 40.3L48.0 40.2M47.4 8.0L47.8 7.0M43.7 3.7L44.3 4.0M44.3 4.0L47.8 7.0M52.1 6.7L48.5 6.5M47.8 7.0L48.5 6.5M44.3 4.0L47.7 2.8M48.5 6.5L48.6 5.3M48.6 5.3L47.7 2.8M45.2 0.2L47.4 -0.1M45.2 0.2L44.0 -0.9M44.0 -0.9L43.5 -3.0M48.0 -2.4L47.4 -0.1M43.5 3.1L45.2 0.2M48.0 0.6L47.7 2.8M48.0 0.6L47.4 -0.1M41.1 0.1L44.0 -0.9M48.0 0.6L51.6 1.3M48.6 5.3L51.8 1.6M33.5 44.5L30.5 42.0M33.3 46.0L29.3 48.3M29.3 48.3L29.0 43.8M29.0 43.8L30.5 42.0M33.8 39.5L30.2 41.2M30.5 42.0L30.2 41.2M26.0 38.8L28.7 40.7M30.4 38.0L30.0 40.9M28.7 40.7L30.0 40.9M30.2 41.2L30.0 40.9M11.2 49.2L7.7 48.3M7.4 51.4L7.7 48.3M-3.0 33.1L-0.9 32.1M-1.2 29.6L-0.9 32.1M5.4 20.1L7.3 19.1M5.4 20.1L3.0 18.3M7.3 19.1L7.6 18.6M7.6 18.6L6.5 14.8M3.3 17.4L3.0 18.3M3.3 17.4L5.6 14.9M5.6 14.9L6.5 14.8M1.7 19.1L3.0 18.3M1.7 22.2L4.5 24.5M5.7 21.1L4.5 24.5M5.7 21.1L5.4 20.1M10.2 15.8L7.4 14.5M10.2 15.8L10.2 17.5M7.4 14.5L6.5 14.8M10.2 17.5L7.6 18.6M0.6 13.9L3.3 17.4M1.1 11.6L3.5 11.6M3.5 11.6L5.6 14.9M-0.5 25.4L-0.6 24.0M-0.5 25.4L1.6 26.6M4.5 24.5L4.8 25.6M4.8 25.6L3.5 26.5M1.6 26.6L3.5 26.5M-0.5 25.4L-0.9 25.7M-1.2 29.6L0.4 28.9M-0.9 25.7L-2.5 28.6M1.6 26.6L0.4 28.9M8.1 27.8L6.8 26.1M8.1 27.8L12.2 25.2M6.8 26.1L9.8 22.7M12.2 25.2L9.8 22.7M9.8 22.7L9.8 22.7M5.7 21.1L9.8 22.7M4.8 25.6L6.8 26.1M10.5 21.3L7.3 19.1M10.5 21.3L9.8 22.7M8.2 27.9L7.1 30.9M8.2 27.9L8.1 27.8M3.5 26.5L3.7 30.9M7.1 30.9L3.7 30.9M39.2 28.3L40.8 30.1M42.9 25.1L43.4 28.5M43.4 28.5L40.8 30.1M37.9 33.4L40.6 31.3M40.8 30.1L40.6 31.3M50.8 31.5L48.4 28.9M48.4 28.9L49.6 26.6M47.5 25.4L49.6 26.6M45.3 37.6L43.2 40.9M45.3 37.6L41.5 37.2M40.7 37.8L41.5 37.2M40.7 37.8L41.5 41.0M43.2 40.9L41.5 41.1M41.5 41.0L41.5 41.1M46.7 37.3L45.3 37.6M45.7 41.5L43.2 40.9M46.7 37.3L44.6 33.5M44.6 33.5L43.3 33.6M43.3 33.6L41.5 37.2M38.1 36.7L40.7 37.8M40.6 31.3L43.3 33.6M37.8 42.7L41.5 41.0M42.4 44.4L41.5 41.1M33.6 6.3L31.3 5.8M30.4 9.9L29.7 8.5M29.7 8.5L31.3 5.8M29.0 43.8L26.0 44.6M28.7 40.7L25.1 43.4M25.1 43.4L26.0 44.6M24.6 51.9L26.2 48.1M29.8 50.8L29.0 48.7M29.0 48.7L26.2 48.1M26.2 48.1L26.2 48.1M29.3 48.3L29.0 48.7M26.0 44.6L26.2 48.1M20.6 38.1L21.0 37.5M20.6 38.1L19.2 39.2M20.6 33.5L18.6 33.1M19.2 39.2L15.9 36.5M18.6 33.1L16.1 35.4M15.9 36.5L16.1 35.4M3.8 44.5L3.9 39.9M3.8 44.5L7.0 45.1M3.9 39.9L7.0 40.0M7.0 40.0L8.3 40.8M8.3 40.8L7.0 45.1M-0.9 25.7L-5.1 25.1M17.7 30.2L15.7 26.0M17.7 30.2L17.6 30.6M17.6 30.6L14.7 30.7M14.7 30.7L12.5 29.6M12.5 29.6L14.1 26.0M15.7 26.0L14.6 25.8M14.1 26.0L14.6 25.8M18.5 24.8L15.7 26.0M20.5 28.0L17.7 30.2M18.6 33.1L17.6 30.6M14.4 34.0L16.1 35.4M14.4 34.0L14.7 30.7M12.3 29.7L8.2 27.9M12.3 29.7L12.5 29.6M12.2 25.2L14.1 26.0M11.2 19.2L11.2 20.6M11.2 19.2L15.2 16.9M11.2 20.6L14.5 21.4M15.2 16.9L15.3 17.0M15.3 17.0L15.7 20.4M15.7 20.4L14.5 21.4M10.2 17.5L11.2 19.2M10.5 21.3L11.2 20.6M10.2 15.8L12.6 14.3M12.6 14.3L14.4 14.4M14.4 14.4L15.2 16.9M14.6 25.8L14.5 21.4M18.6 21.3L15.7 20.4M20.1 18.0L19.6 17.2M19.6 17.2L15.3 17.0M0.4 28.9L2.8 31.5M3.7 30.9L3.4 31.2M2.8 31.5L3.4 31.2M-0.9 32.1L1.4 32.9M2.8 31.5L1.4 32.9M-1.3 37.3L1.6 34.8M1.4 32.9L1.6 34.8M3.8 39.9L-0.0 40.2M3.8 39.9L3.7 36.2M-0.0 40.2L-1.3 37.3M1.6 34.8L3.7 36.2M12.3 29.7L11.5 31.8M14.4 34.0L12.3 33.2M11.5 31.8L12.3 33.2M46.8 29.6L47.1 32.1M46.8 29.6L45.5 28.6M45.5 28.6L44.1 28.7M44.1 28.7L45.0 33.1M47.1 32.1L45.0 33.1M49.4 32.9L47.1 32.1M48.4 28.9L46.8 29.6M47.1 25.7L45.5 28.6M43.4 28.5L44.1 28.7M44.6 33.5L45.0 33.1M29.0 0.7L29.8 2.8M29.0 0.7L29.3 0.3M29.3 0.3L33.3 -2.0M33.1 2.6L30.5 3.3M33.1 2.6L34.3 -0.8M34.3 -0.8L33.3 -2.0M30.5 3.3L29.8 2.8M26.2 0.1L26.0 -3.4M26.2 0.1L29.0 0.7M29.0 -4.2L29.3 0.3M35.8 3.9L33.1 2.6M31.3 5.8L30.5 3.3M36.9 0.5L34.3 -0.8M15.2 5.8L14.2 7.0M15.2 5.8L17.6 6.8M14.9 10.4L14.2 7.0M14.9 10.4L16.1 11.8M17.6 6.8L18.1 10.5M16.1 11.8L18.1 10.5M14.4 14.4L15.9 12.6M19.6 17.2L19.8 15.2M15.9 12.6L19.8 15.2M18.2 3.2L17.7 0.3M18.2 3.2L15.1 4.9M15.7 1.3L17.7 0.3M15.7 1.3L14.2 3.2M17.7 0.3L17.7 0.3M14.2 3.2L15.1 4.9M13.4 -1.2L15.7 1.3M16.3 -3.0L17.7 0.3M11.4 2.3L14.2 3.2M11.4 2.3L11.2 1.2M13.4 -1.2L11.8 -0.9M11.2 1.2L11.8 -0.9M21.4 -0.1L17.7 0.3M21.4 -0.1L21.6 -0.4M21.4 -3.5L21.6 -0.4M9.9 4.2L11.4 2.3M9.9 4.2L13.1 7.1M15.2 5.8L15.1 4.9M13.1 7.1L14.2 7.0M26.2 0.1L26.2 0.1M26.2 0.1L24.6 3.9M29.8 2.8L26.8 5.3M24.6 3.9L26.8 5.3M29.7 8.5L26.9 7.8M26.8 5.3L26.9 7.8M26.5 13.1L26.2 12.4M26.2 12.4L26.7 8.0M26.7 8.0L26.9 7.8M21.4 -0.1L21.6 3.8M18.2 3.2L20.0 4.5M20.0 4.5L21.6 3.8M17.6 6.8L19.2 6.0M20.0 4.5L19.2 6.0M21.6 -0.4L26.2 0.1M24.6 3.9L22.9 4.5M21.6 3.8L22.9 4.5M26.7 8.0L23.2 8.2M22.9 4.5L23.2 8.2M3.9 1.6L6.9 -0.5M3.9 1.6L4.1 1.9M4.1 1.9L7.4 3.4M7.4 3.4L7.7 0.3M7.7 0.3L6.9 -0.5M9.9 4.2L8.7 4.9M8.7 4.9L7.4 3.4M11.2 1.2L7.7 0.3M7.1 -2.7L6.9 -0.5M11.1 -2.2L11.8 -0.9M8.6 4.9L6.5 6.6M8.6 4.9L10.7 8.8M6.5 6.6L7.6 10.0M7.6 10.0L8.8 10.7M8.8 10.7L10.1 10.4M10.7 8.8L10.4 10.0M10.1 10.4L10.4 10.0M4.4 6.5L6.5 6.6M4.4 6.5L4.1 1.9M8.7 4.9L8.6 4.9M13.1 7.1L10.7 8.8M4.1 6.7L4.0 11.0M4.1 6.7L4.4 6.5M4.0 11.0L7.6 10.0M3.5 11.6L4.0 11.0M7.4 14.5L8.8 10.7M12.6 14.3L10.1 10.4M14.9 10.4L10.4 10.0M16.1 11.8L15.9 12.6M3.4 -3.2L3.6 1.3M-0.6 -0.1L0.0 0.6M-0.6 -0.1L-0.0 -2.4M0.0 0.6L3.6 1.3M3.9 1.6L3.8 1.6M3.8 1.6L3.6 1.3M21.6 51.8L21.4 47.9M26.2 48.1L21.6 47.6M21.4 47.9L21.6 47.6M24.2 43.0L21.4 44.3M24.2 43.0L24.1 40.5M23.7 40.5L24.1 40.5M23.7 40.5L19.5 41.0M19.5 41.0L21.4 44.3M25.1 43.4L24.2 43.0M21.6 47.6L21.4 44.5M21.4 44.5L21.4 44.3M25.3 38.8L24.1 40.5M20.6 38.1L23.7 40.5M19.2 40.8L19.2 39.2M19.2 40.8L19.5 41.0M11.3 38.6L11.6 37.9M11.3 38.6L15.1 41.5M11.6 37.9L15.5 36.7M15.1 41.5L15.5 36.7M15.9 36.5L15.5 36.7M10.6 36.1L12.3 33.2M10.6 36.1L11.6 37.9M11.8 43.1L11.1 45.8M11.8 43.1L15.5 42.6M13.4 46.8L16.3 45.0M13.4 46.8L11.8 47.1M15.7 42.7L15.5 42.6M15.7 42.7L16.3 44.9M16.3 44.9L16.3 45.0M11.8 47.1L11.1 45.8M9.7 40.6L8.3 40.8M9.7 40.6L11.8 43.1M7.0 45.1L7.1 45.3M7.1 45.3L11.1 45.8M9.7 40.6L11.3 38.6M15.1 41.5L15.5 42.6M15.7 49.3L17.7 48.3M15.7 49.3L13.4 46.8M17.7 48.3L16.3 45.0M11.2 49.2L11.8 47.1M19.2 40.8L15.7 42.7M21.4 44.5L16.3 44.9M21.4 47.9L17.7 48.3M17.7 48.3L17.7 48.3M7.7 48.3L6.9 47.5M6.9 47.5L7.1 45.3M0.8 44.8L-0.0 45.6M0.8 44.8L-0.1 40.3M-0.0 45.6L-2.7 44.1M-0.1 40.3L-2.3 41.5M3.8 44.5L3.4 44.8M3.9 39.9L3.8 39.9M-0.0 40.2L-0.1 40.3M3.4 44.8L0.8 44.8M8.5 35.2L8.6 32.4M8.5 35.2L7.4 35.8M7.4 35.8L5.4 35.2M7.4 31.5L5.4 34.4M7.4 31.5L8.6 32.4M5.4 35.2L5.4 34.4M10.6 36.1L8.5 35.2M11.5 31.8L8.6 32.4M7.0 40.0L7.4 35.8M3.7 36.2L5.4 35.2M7.1 30.9L7.4 31.5M3.4 31.2L5.4 34.4M18.6 10.5L21.2 13.8M18.6 10.5L22.0 9.0M22.7 9.7L22.5 9.0M22.7 9.7L22.1 13.6M22.1 13.6L21.2 13.8M22.5 9.0L22.0 9.0M18.1 10.5L18.6 10.5M19.8 15.2L21.2 13.8M19.2 6.0L22.0 9.0M26.2 12.4L22.7 9.7M23.2 8.2L22.5 9.0M24.1 14.6L22.1 13.6M17.7 48.3L18.2 51.2M6.9 47.5L3.9 49.6M3.4 44.8L3.6 49.3M-0.3 2.8L0.6 5.3M-0.3 2.8L-3.7 4.0M-3.7 4.0L-0.2 7.0M0.6 5.3L0.5 6.5M0.5 6.5L-0.2 7.0M0.0 0.6L-0.3 2.8M3.8 1.6L0.6 5.3M-0.6 -0.1L-2.8 0.2M4.1 6.7L0.5 6.5M0.2 10.8L-0.6 8.0M-0.6 8.0L-0.2 7.0M-0.6 8.0L-1.5 8.1M-0.0 45.6L-0.6 47.9M-2.8 48.2L-0.6 47.9M3.6 49.3L0.0 48.6M-0.6 47.9L0.0 48.6M0.0 48.6L-0.3 50.8" stroke="#9c948b" stroke-width="0.45" fill="none"/><path d="M1.3 3.0h0M2.7 4.3h0M2.5 8.9h0M2.6 14.3h0M0.4 16.0h0M3.6 21.8h0M1.7 24.1h0M1.8 29.0h0M0.4 30.3h0M4.0 33.8h0M1.6 37.4h0M2.1 42.7h0M2.1 46.9h0M6.8 1.7h0M5.7 4.1h0M5.6 9.0h0M6.4 11.9h0M6.4 17.8h0M7.9 20.6h0M7.0 23.0h0M5.4 28.9h0M5.5 32.8h0M6.8 33.7h0M5.8 37.2h0M5.6 42.7h0M4.8 46.8h0M8.4 1.8h0M11.1 6.7h0M8.7 8.0h0M9.9 13.2h0M8.1 17.3h0M8.9 19.1h0M9.9 25.5h0M10.9 27.2h0M9.6 30.5h0M10.3 33.8h0M8.7 37.5h0M9.4 43.9h0M9.0 47.2h0M14.1 0.6h0M12.5 5.1h0M12.9 9.1h0M12.7 11.4h0M12.4 17.1h0M13.6 19.2h0M12.7 22.9h0M15.3 29.2h0M13.9 32.0h0M12.8 35.2h0M14.0 39.5h0M13.0 40.9h0M13.5 45.0h0M16.7 2.8h0M17.8 4.7h0M16.2 8.4h0M19.2 13.1h0M17.7 15.4h0M17.5 18.8h0M16.3 22.8h0M18.4 27.7h0M15.3 32.1h0M19.2 36.5h0M16.6 39.7h0M18.7 43.5h0M15.2 47.6h0M19.4 2.3h0M21.1 6.4h0M19.4 7.9h0M21.0 11.7h0M21.8 15.9h0M22.1 19.9h0M20.8 22.9h0M22.4 26.9h0M20.3 30.2h0M22.6 36.2h0M21.8 39.8h0M22.1 41.5h0M18.9 45.9h0M23.6 2.1h0M25.0 6.0h0M25.3 10.1h0M23.8 12.1h0M24.3 17.3h0M25.9 21.3h0M25.0 24.3h0M24.7 28.6h0M25.1 30.5h0M26.4 36.4h0M22.6 38.9h0M26.2 41.3h0M24.1 45.5h0M26.7 3.3h0M28.7 5.8h0M27.7 10.4h0M29.6 12.6h0M26.3 16.0h0M27.4 19.7h0M28.2 24.9h0M28.3 28.4h0M29.2 31.3h0M29.8 36.0h0M28.3 38.1h0M27.4 43.0h0M28.1 45.3h0M32.5 1.1h0M33.4 4.3h0M32.6 8.1h0M32.4 13.6h0M30.2 17.3h0M34.0 19.4h0M32.3 25.2h0M31.4 26.3h0M30.2 31.6h0M33.8 33.7h0M32.4 38.7h0M33.5 41.2h0M30.2 45.1h0M34.5 1.8h0M35.6 6.3h0M34.5 10.5h0M36.6 12.6h0M35.2 16.9h0M36.2 20.3h0M34.2 24.8h0M37.0 27.1h0M35.4 30.3h0M35.0 34.6h0M35.0 38.3h0M35.4 41.5h0M36.5 45.8h0M39.5 0.8h0M41.0 4.0h0M38.1 10.2h0M41.3 14.4h0M39.7 16.3h0M38.6 20.4h0M38.0 24.6h0M41.3 27.0h0M37.7 30.3h0M40.8 34.5h0M38.4 40.2h0M40.2 43.9h0M38.8 46.0h0M42.8 0.5h0M44.7 6.2h0M43.9 7.7h0M44.4 13.8h0M42.3 16.1h0M42.0 20.2h0M43.8 22.8h0M44.9 26.5h0M43.7 31.0h0M44.1 36.1h0M43.8 38.9h0M44.1 42.9h0M42.2 46.7h0M46.1 2.5h0M46.6 4.0h0M45.2 10.4h0M46.6 13.4h0M45.8 18.1h0M47.8 21.8h0M45.2 24.3h0M47.5 27.9h0M45.3 30.7h0M47.1 34.4h0M44.8 39.5h0M46.8 43.3h0M45.4 45.8h0" stroke="#1c1c2a" stroke-width="1.0" stroke-linecap="round"/></pattern><pattern id="p6" patternUnits="userSpaceOnUse" width="48" height="48"><rect width="48" height="48" fill="#ecbe78"/><path d="M8.7 16.4L6.0 14.8M8.7 16.4L6.8 19.4M5.3 19.0L6.8 19.4M5.3 19.0L4.2 15.6M4.2 15.6L6.0 14.8M10.7 13.3L9.7 16.0M10.7 13.3L13.3 13.0M9.7 16.0L13.4 16.9M13.3 13.0L14.4 16.1M14.4 16.1L13.4 16.9M31.8 21.0L31.7 21.7M31.8 21.0L29.9 19.1M31.7 21.7L29.6 23.3M29.9 19.1L27.5 21.9M27.5 21.9L29.6 23.3M15.3 8.8L12.9 9.3M15.3 8.8L16.6 9.8M16.6 9.8L15.3 12.1M12.9 9.3L13.3 12.9M15.3 12.1L14.9 12.4M13.3 12.9L14.9 12.4M12.1 8.7L12.2 6.1M12.1 8.7L12.9 9.3M15.1 7.0L12.2 6.1M15.1 7.0L15.3 8.8M19.5 13.5L15.3 12.1M19.5 13.5L19.4 15.7M18.0 15.9L19.4 15.7M18.0 15.9L14.9 12.4M13.3 13.0L13.3 12.9M16.2 16.7L14.4 16.1M16.2 16.7L18.0 15.9M6.6 -1.1L10.7 0.1M10.7 0.1L11.0 0.0M11.0 0.0L9.6 -4.0M33.0 10.2L35.1 10.1M33.0 10.2L31.5 12.4M31.5 12.4L35.8 12.2M35.1 10.1L35.8 12.2M31.4 12.4L31.5 12.4M31.4 12.4L29.6 11.8M33.0 10.2L31.3 8.3M29.6 11.8L28.9 10.3M31.3 8.3L28.9 10.3M39.2 11.8L39.2 11.8M39.2 11.8L37.8 9.1M39.2 11.8L41.3 9.4M41.3 9.4L39.4 6.5M37.8 9.1L38.8 6.5M39.4 6.5L38.8 6.5M35.2 9.6L37.8 9.1M35.2 9.6L35.1 10.1M37.7 12.6L36.0 12.4M37.7 12.6L39.2 11.8M36.0 12.4L35.8 12.2M34.7 6.8L35.2 9.6M34.7 6.8L36.9 5.6M36.9 5.6L38.8 6.5M37.7 21.5L39.7 22.2M37.7 21.5L36.1 24.3M39.7 22.2L37.8 25.2M36.1 24.3L37.8 25.2M20.0 45.2L18.1 45.0M20.0 45.2L22.4 46.3M18.1 45.0L19.0 48.1M22.4 46.3L22.4 46.9M22.4 46.9L19.7 48.5M19.0 48.1L19.7 48.5M20.9 41.6L18.0 41.9M20.9 41.6L20.0 45.2M18.0 41.9L17.8 44.8M17.8 44.8L18.1 45.0M22.7 50.8L22.9 47.5M22.9 47.5L22.4 46.9M19.6 50.7L19.7 48.5M41.7 51.2L40.8 48.1M40.8 48.1L39.0 48.6M38.6 50.3L38.7 48.9M39.0 48.6L38.7 48.9M40.2 45.0L41.0 47.9M40.2 45.0L39.8 44.9M41.0 47.9L40.8 48.1M39.8 44.9L37.3 45.7M37.3 45.7L39.0 48.6M21.3 41.5L21.6 38.9M21.3 41.5L23.5 43.0M23.5 43.0L25.2 40.5M25.2 40.5L24.8 38.5M24.8 38.5L22.8 37.9M22.8 37.9L21.6 38.9M20.9 41.6L21.3 41.5M23.7 43.6L23.5 43.0M23.7 43.6L22.4 46.3M25.7 43.8L28.2 41.1M25.7 43.8L28.7 45.3M28.8 45.3L28.7 45.3M28.8 45.3L29.7 41.8M29.7 41.8L28.9 40.9M28.9 40.9L28.2 41.1M23.7 43.6L24.6 43.8M24.6 43.8L25.7 43.8M25.2 40.5L28.2 41.1M26.0 37.7L29.1 38.5M26.0 37.7L24.8 38.5M29.1 38.5L28.9 40.9M40.3 22.0L39.7 22.2M40.3 22.0L41.4 23.2M37.8 25.2L37.9 25.3M41.4 23.2L42.1 25.3M42.1 25.3L41.2 26.3M37.9 25.3L41.2 26.3M11.8 2.3L9.8 3.8M11.8 2.3L12.7 4.7M12.7 4.7L12.1 5.9M12.1 5.9L10.4 5.6M9.8 3.8L10.4 5.6M12.1 8.7L10.2 9.5M12.2 6.1L12.1 5.9M8.1 6.9L10.2 9.5M8.1 6.9L10.4 5.6M17.8 44.8L15.7 45.8M19.0 48.1L15.3 48.8M15.7 45.8L15.3 48.8M16.2 51.5L15.3 48.8M15.3 48.8L15.3 48.8M15.3 48.8L12.0 48.7M11.8 50.3L12.0 48.7M16.9 21.7L19.1 20.9M16.9 21.7L15.7 19.2M15.7 19.2L15.9 18.8M15.9 18.8L19.2 19.9M19.2 19.9L19.1 20.9M10.7 0.1L8.4 2.8M11.0 0.0L11.1 0.0M8.4 2.8L9.8 3.8M11.8 2.3L12.0 0.7M12.0 0.7L11.1 0.0M37.7 12.6L38.5 16.3M39.2 11.8L40.8 13.1M40.8 13.1L41.7 16.2M38.5 16.3L41.7 16.2M40.3 22.0L40.8 20.1M44.5 20.4L42.6 18.9M44.5 20.4L44.6 21.1M44.6 21.1L41.4 23.2M40.8 20.1L42.6 18.9M31.8 21.0L34.0 18.7M31.7 21.7L33.5 23.0M33.5 23.0L34.8 23.2M34.8 23.2L35.9 19.2M35.9 19.2L34.0 18.7M30.1 16.7L32.5 16.1M30.1 16.7L29.6 18.0M29.6 18.0L29.9 19.1M34.0 18.7L32.5 16.1M31.4 12.4L32.6 15.8M36.0 12.4L34.8 14.7M34.8 14.7L32.6 15.8M30.1 16.7L28.5 15.5M28.5 15.5L29.2 12.4M29.2 12.4L29.6 11.8M32.5 16.1L32.6 15.8M29.2 12.4L25.5 13.6M28.9 10.3L28.4 10.0M28.4 10.0L26.3 10.5M26.3 10.5L25.5 13.6M28.5 15.5L26.7 15.6M26.7 15.6L25.4 14.6M25.4 14.6L25.2 13.9M25.2 13.9L25.5 13.6M34.7 6.8L32.5 6.1M31.3 8.3L32.1 6.4M32.5 6.1L32.1 6.4M39.5 6.4L40.6 4.0M39.5 6.4L42.5 6.0M42.5 6.0L42.9 3.6M40.6 4.0L41.7 3.2M42.9 3.6L41.7 3.2M36.8 4.5L38.6 2.3M36.8 4.5L36.9 5.6M39.4 6.5L39.5 6.4M38.6 2.3L40.6 4.0M41.3 9.4L43.6 9.5M43.6 9.5L44.4 7.5M44.4 7.5L42.5 6.0M43.5 -0.4L43.8 -3.1M43.5 -0.4L44.8 0.4M44.8 0.4L47.7 -1.5M44.4 7.5L45.1 7.0M45.1 7.0L45.6 3.3M42.9 3.6L45.3 3.0M45.3 3.0L45.6 3.3M47.5 15.3L45.5 16.3M47.5 15.3L48.8 18.2M45.5 16.3L47.5 18.7M47.5 18.7L48.4 18.7M48.8 18.2L48.4 18.7M44.5 20.4L47.5 18.7M43.9 15.7L42.4 16.6M43.9 15.7L45.5 16.3M42.4 16.6L42.6 18.9M43.0 12.2L44.4 14.5M43.0 12.2L43.8 9.8M43.8 9.8L45.8 11.0M45.8 11.0L46.4 12.9M46.4 12.9L44.4 14.5M40.8 13.1L43.0 12.2M43.9 15.7L44.4 14.5M41.7 16.2L42.4 16.6M43.6 9.5L43.8 9.8M47.6 9.8L47.5 7.6M47.6 9.8L45.8 11.0M47.5 7.6L45.1 7.0M48.0 13.5L47.5 15.3M48.0 13.5L46.4 12.9M26.1 35.1L26.6 34.7M26.1 35.1L23.2 34.7M26.6 34.7L26.6 31.0M26.6 31.0L22.9 33.6M23.2 34.7L22.9 33.6M26.0 37.7L26.1 35.1M22.8 37.9L22.5 35.9M23.2 34.7L22.5 35.9M19.0 37.9L20.7 35.6M19.0 37.9L21.6 38.9M22.5 35.9L20.7 35.6M34.9 48.6L38.7 48.9M34.9 48.6L34.9 49.9M34.9 48.6L34.5 48.0M31.7 51.1L31.1 48.8M31.1 48.8L32.6 47.9M34.5 48.0L32.6 47.9M6.6 23.0L8.5 25.8M6.6 23.0L4.9 23.4M4.9 23.4L4.0 26.0M4.0 26.0L7.1 26.7M8.5 25.8L7.1 26.7M5.3 19.0L4.9 19.2M6.8 19.4L7.0 19.7M7.0 19.7L7.0 22.1M7.0 22.1L6.6 23.0M4.9 23.4L2.9 21.9M4.9 19.2L2.9 21.9M4.2 15.6L3.1 15.3M3.1 15.3L0.9 18.2M4.9 19.2L0.9 18.2M42.3 43.1L42.7 42.9M42.3 43.1L40.2 45.0M41.0 47.9L43.5 47.6M42.7 42.9L43.8 44.9M43.8 44.9L43.5 47.6M45.3 51.0L44.8 48.4M44.8 48.4L43.5 47.6M3.3 -2.5L2.3 -1.0M2.3 -1.0L0.2 -1.1M8.4 2.8L7.5 2.9M6.8 6.7L8.1 6.9M6.8 6.7L6.6 6.6M7.5 2.9L6.6 6.6M6.6 12.1L6.6 10.6M6.6 12.1L10.6 13.3M6.6 10.6L10.0 9.9M10.6 13.3L10.0 9.9M6.5 12.3L2.7 12.4M6.5 12.3L6.6 12.1M5.5 9.6L2.7 12.4M5.5 9.6L6.0 9.6M6.0 9.6L6.6 10.6M9.6 16.1L9.7 16.0M9.6 16.1L8.7 16.4M6.5 12.3L6.0 14.8M10.7 13.3L10.6 13.3M6.0 9.6L6.8 6.7M10.2 9.5L10.0 9.9M7.0 22.1L10.4 22.5M10.4 22.5L9.9 25.7M8.5 25.8L9.6 26.1M9.6 26.1L9.9 25.7M13.2 35.1L16.9 35.6M13.2 35.1L13.9 32.8M14.7 33.0L13.9 32.8M14.7 33.0L17.0 35.4M17.0 35.4L16.9 35.6M18.6 33.9L19.0 32.9M18.6 33.9L17.0 35.4M19.0 32.9L16.8 31.1M16.8 31.1L14.7 33.0M10.2 34.4L12.9 35.4M10.2 34.4L10.7 38.5M12.9 35.4L13.3 38.4M10.7 38.5L13.3 38.4M10.6 31.5L11.1 28.6M10.6 31.5L10.2 31.8M10.2 31.8L7.1 31.0M10.2 27.3L11.1 28.6M10.2 27.3L6.7 29.8M6.7 29.8L7.1 31.0M9.8 33.9L10.2 31.8M9.8 33.9L10.2 34.4M13.3 32.3L13.9 32.8M13.3 32.3L10.6 31.5M13.2 35.1L12.9 35.4M9.8 33.9L7.5 35.2M7.5 35.2L5.8 34.7M5.8 34.7L6.9 31.2M6.9 31.2L7.1 31.0M13.0 28.2L11.1 28.6M13.0 28.2L12.7 24.8M12.7 24.8L9.9 25.7M9.6 26.1L10.2 27.3M6.3 29.3L7.1 26.7M6.3 29.3L6.7 29.8M5.8 34.7L5.0 34.8M6.9 31.2L3.3 31.8M3.3 31.8L3.3 33.7M5.0 34.8L3.3 33.7M19.0 37.9L18.2 37.9M20.7 35.6L18.6 33.9M16.9 35.6L16.8 36.7M18.2 37.9L16.8 36.7M18.0 41.9L17.8 41.7M18.2 37.9L17.8 41.7M12.0 48.7L11.1 48.0M11.0 48.0L11.1 48.0M11.0 48.0L10.7 48.1M10.7 48.1L8.4 50.8M13.4 20.1L12.7 19.7M13.4 20.1L14.1 22.4M12.7 19.7L11.5 19.7M14.1 22.4L13.4 23.1M13.4 23.1L10.5 22.4M10.5 22.4L10.8 20.4M11.5 19.7L10.8 20.4M16.2 16.7L15.9 18.8M13.4 16.9L12.7 19.7M15.7 19.2L13.4 20.1M16.9 21.7L16.2 22.8M16.2 22.8L14.1 22.4M9.6 16.1L11.5 19.7M10.4 22.5L10.5 22.4M13.1 24.5L13.4 23.1M13.1 24.5L12.7 24.8M7.0 19.7L10.8 20.4M0.0 13.5L-1.6 12.9M0.0 13.5L1.9 13.2M1.8 10.7L-0.4 9.8M1.8 10.7L2.2 12.6M-0.4 9.8L-2.2 11.0M1.9 13.2L2.2 12.6M-0.5 15.3L-2.5 16.3M-0.5 15.3L0.0 13.5M3.1 15.3L1.9 13.2M-0.5 15.3L0.8 18.2M0.9 18.2L0.8 18.2M5.5 9.6L2.6 9.1M2.7 12.4L2.2 12.6M2.6 9.1L1.8 10.7M-2.9 7.0L-0.5 7.6M-0.5 7.6L-0.4 9.8M22.9 33.6L21.7 32.4M19.0 32.9L19.9 32.3M21.7 32.4L19.9 32.3M16.2 22.8L17.1 25.0M13.1 24.5L15.7 26.6M17.1 25.0L15.7 26.6M13.0 28.2L15.4 28.1M15.7 26.6L15.4 28.1M16.8 31.1L16.3 29.0M19.9 32.3L19.5 28.7M19.5 28.7L16.3 29.0M13.3 32.3L15.6 28.5M16.3 29.0L15.6 28.5M15.4 28.1L15.6 28.5M35.9 24.3L34.8 25.7M35.9 24.3L34.8 23.2M33.5 23.0L32.1 25.9M34.8 25.7L32.1 25.9M29.6 23.3L29.6 24.0M29.6 24.0L31.6 26.1M32.1 25.9L31.6 26.1M15.1 7.0L16.8 4.9M16.6 9.8L18.3 9.5M18.3 9.5L18.9 7.3M18.9 7.3L16.8 4.9M11.1 0.0L13.4 -3.6M48.0 13.5L49.9 13.2M48.9 18.2L51.1 15.3M48.9 18.2L48.8 18.2M49.8 10.7L47.6 9.8M38.0 16.8L40.6 20.0M38.0 16.8L37.5 17.1M37.5 17.1L36.2 19.2M40.6 20.0L36.4 19.4M36.4 19.4L36.2 19.2M38.5 16.3L38.0 16.8M40.8 20.1L40.6 20.0M34.8 14.7L37.5 17.1M35.9 19.2L36.2 19.2M37.7 21.5L36.4 19.4M36.1 24.3L35.9 24.3M20.2 16.4L23.8 13.2M20.2 16.4L19.4 15.7M19.5 13.5L19.9 12.2M23.8 13.2L22.9 11.8M22.9 11.8L19.9 12.2M18.3 9.5L19.1 10.3M19.9 12.2L19.1 10.3M36.8 4.5L34.9 1.9M32.5 6.1L32.6 4.1M32.6 4.1L34.9 1.9M38.6 2.3L38.7 0.9M38.7 0.9L34.9 0.6M34.9 1.9L34.9 0.6M28.4 10.0L27.5 7.2M32.1 6.4L30.2 5.8M27.5 7.2L30.2 5.8M31.3 -2.3L32.6 -0.1M32.6 -0.1L34.5 -0.0M34.5 -0.0L35.6 -2.7M39.0 0.6L40.8 0.1M39.0 0.6L37.3 -2.3M41.0 -0.1L40.2 -3.0M41.0 -0.1L40.8 0.1M38.7 0.9L39.0 0.6M41.7 3.2L40.8 0.1M34.5 -0.0L34.9 0.6M43.5 -0.4L41.0 -0.1M44.8 0.4L45.3 3.0M47.5 7.6L49.8 6.3M45.6 3.3L47.2 3.4M47.2 3.4L49.8 6.3M27.9 47.6L28.5 48.7M27.9 47.6L26.6 47.5M28.5 48.7L27.8 51.0M24.7 47.9L26.6 47.5M24.7 47.9L25.5 51.1M28.8 45.3L31.3 45.7M28.7 45.3L27.9 47.6M31.1 48.8L28.5 48.7M32.6 47.9L31.3 45.7M24.6 43.8L26.6 47.5M22.9 47.5L24.7 47.9M35.6 45.3L35.8 42.9M35.6 45.3L35.6 45.3M35.6 45.3L32.2 44.5M35.8 42.9L32.0 42.0M32.2 44.5L31.9 42.1M31.9 42.1L32.0 42.0M37.3 45.7L35.6 45.3M34.5 48.0L35.6 45.3M31.3 45.7L32.2 44.5M29.7 41.8L31.9 42.1M29.1 38.5L29.3 38.3M29.3 38.3L33.1 38.6M33.4 38.7L33.1 38.6M33.4 38.7L32.0 42.0M6.3 29.3L3.7 28.7M4.0 26.0L3.2 26.5M3.7 28.7L3.2 26.5M2.9 21.9L1.4 21.9M0.8 18.2L0.4 18.7M1.4 21.9L0.4 18.7M-2.5 16.3L-0.5 18.7M-3.5 20.4L-0.5 18.7M-0.5 18.7L0.4 18.7M43.8 44.9L45.2 44.9M44.8 48.4L47.7 46.5M45.2 44.9L47.7 46.5M44.6 21.1L45.3 22.4M48.4 18.7L49.4 21.9M45.3 22.4L49.0 22.4M48.9 18.2L52.9 19.2M42.7 42.9L43.2 42.1M45.2 44.9L47.0 42.2M47.0 42.2L43.2 42.1M6.6 -1.1L6.1 -0.2M2.3 -1.0L3.1 -0.1M6.1 -0.2L3.1 -0.1M7.5 2.9L6.2 1.7M6.1 -0.2L6.2 1.7M-0.8 3.4L0.6 2.0M-0.8 3.4L1.8 6.3M0.6 2.0L2.6 2.1M3.4 5.6L3.6 3.1M3.4 5.6L2.1 6.3M2.6 2.1L3.6 3.1M2.1 6.3L1.8 6.3M-0.3 -1.5L-3.2 0.4M-2.4 3.3L-0.8 3.4M0.2 -1.1L0.6 2.0M-0.5 7.6L1.8 6.3M3.1 -0.1L2.6 2.1M6.6 6.6L3.4 5.6M6.2 1.7L3.6 3.1M2.6 9.1L2.1 6.3M13.3 38.4L13.5 38.5M16.8 36.7L13.9 38.5M13.5 38.5L13.9 38.5M17.8 41.7L16.2 41.5M13.9 38.5L16.2 41.5M7.5 35.2L7.9 37.9M10.7 38.5L10.0 38.9M10.0 38.9L7.9 37.9M25.0 25.9L26.2 25.6M25.0 25.9L23.8 24.5M26.2 25.6L26.5 21.7M23.8 24.5L24.8 22.0M24.8 22.0L26.5 21.7M27.5 21.9L26.5 21.6M29.6 24.0L27.7 26.1M27.7 26.1L26.2 25.6M26.5 21.6L26.5 21.7M29.6 18.0L26.5 19.0M26.5 21.6L26.5 19.0M26.7 15.6L26.0 18.5M26.0 18.5L26.5 19.0M17.9 25.0L19.6 28.6M17.9 25.0L20.5 24.1M21.2 24.8L20.5 24.1M21.2 24.8L21.6 27.9M21.6 27.9L19.6 28.6M17.1 25.0L17.9 25.0M19.5 28.7L19.6 28.6M19.1 20.9L20.6 22.6M20.6 22.6L20.5 24.1M23.8 24.5L21.2 24.8M20.6 22.6L23.0 21.1M24.8 22.0L23.0 21.1M24.0 28.8L25.0 25.9M24.0 28.8L23.4 28.8M23.4 28.8L21.6 27.9M23.4 28.8L21.7 32.4M26.6 34.7L29.5 35.4M29.3 38.3L29.7 35.6M29.5 35.4L29.7 35.6M37.9 25.3L37.1 28.5M41.2 26.3L41.3 27.2M41.3 27.2L38.9 28.7M38.9 28.7L37.1 28.5M34.8 25.7L34.9 28.9M34.9 28.9L36.5 29.0M37.1 28.5L36.5 29.0M32.6 4.1L31.7 3.1M32.6 -0.1L31.1 0.8M31.1 0.8L31.7 3.1M30.2 5.8L28.7 3.6M31.7 3.1L28.7 3.6M50.6 2.1L48.6 2.0M48.6 2.0L48.2 -1.1M48.2 -1.1L50.3 -1.0M47.2 3.4L48.6 2.0M33.4 38.7L34.6 38.5M35.8 42.9L36.7 41.7M34.6 38.5L36.7 41.7M39.8 44.9L37.6 41.5M36.7 41.7L37.6 41.5M42.3 43.1L38.1 41.1M37.6 41.5L38.1 41.1M43.2 42.1L43.1 41.4M43.1 41.4L42.0 39.2M38.1 41.1L39.8 38.6M42.0 39.2L39.8 38.6M34.6 38.5L34.7 38.5M34.7 38.5L39.7 38.4M39.8 38.6L39.7 38.4M34.7 38.5L35.6 36.2M39.7 38.4L39.1 36.3M35.6 36.2L39.1 36.3M38.9 28.7L40.5 31.8M36.5 29.0L37.6 32.1M40.5 31.8L39.2 32.6M39.2 32.6L37.6 32.1M3.3 31.8L2.7 30.9M3.7 28.7L3.3 29.4M2.7 30.9L3.3 29.4M0.9 25.5L1.0 22.4M0.9 25.5L-3.1 24.4M1.0 22.4L-2.7 22.4M1.0 25.9L3.2 26.5M1.0 25.9L0.9 25.5M1.4 21.9L1.0 22.4M48.7 42.5L51.3 45.5M48.7 42.5L48.6 42.5M48.6 42.5L47.7 46.5M50.3 47.0L48.2 46.9M47.7 46.5L48.2 46.9M51.2 41.3L48.7 42.5M47.7 46.5L47.7 46.5M47.7 42.0L47.0 42.2M47.7 42.0L48.6 42.5M48.6 50.0L48.2 46.9M47.7 42.0L46.7 38.4M43.1 41.4L46.5 38.2M46.7 38.4L46.5 38.2M46.7 38.4L49.9 37.6M-0.3 42.0L-1.0 42.2M-0.3 42.0L-1.3 38.4M-0.4 34.2L1.4 34.7M-0.4 34.2L-1.4 35.1M1.4 34.7L1.9 37.6M1.9 37.6L-1.3 38.4M3.3 45.5L5.6 45.0M3.3 45.5L2.3 47.0M2.3 47.0L3.1 47.9M3.1 47.9L6.1 47.8M6.6 46.9L6.1 47.8M6.6 46.9L6.4 45.7M6.4 45.7L5.6 45.0M2.6 50.1L3.1 47.9M6.2 49.7L6.1 47.8M10.7 48.1L6.6 46.9M11.0 48.0L9.6 44.0M8.3 44.4L9.6 44.0M8.3 44.4L6.4 45.7M4.6 41.9L3.2 41.3M4.6 41.9L6.2 41.3M6.2 41.3L6.8 38.4M3.2 41.3L3.3 38.5M6.8 38.4L4.3 37.7M3.3 38.5L4.3 37.7M0.7 42.5L3.3 45.5M0.7 42.5L3.2 41.3M5.6 45.0L4.6 41.9M6.8 41.4L8.3 44.4M6.8 41.4L6.2 41.3M10.0 38.9L9.6 40.8M7.9 37.9L6.8 38.4M9.6 40.8L6.8 41.4M1.9 37.6L3.3 38.5M0.6 42.5L-0.3 42.0M0.6 42.5L0.7 42.5M5.0 34.8L4.3 37.7M3.3 33.7L1.4 34.7M10.2 42.3L10.2 43.3M10.2 42.3L13.0 41.4M10.2 43.3L13.4 44.4M13.0 41.4L14.1 43.2M14.1 43.2L13.8 44.3M13.8 44.3L13.4 44.4M9.6 40.8L10.2 42.3M9.6 44.0L10.2 43.3M13.5 38.5L13.0 41.4M11.1 48.0L13.4 44.4M16.2 41.5L14.1 43.2M15.7 45.8L13.8 44.3M24.4 18.2L22.9 20.4M24.4 18.2L23.0 16.8M22.9 20.4L20.3 17.7M23.0 16.8L20.3 16.6M20.3 16.6L20.3 17.7M26.0 18.5L24.4 18.2M23.0 21.1L22.9 20.4M25.4 14.6L23.0 16.8M19.2 19.9L20.3 17.7M20.2 16.4L20.3 16.6M23.8 13.2L25.2 13.9M34.9 28.9L33.9 29.3M31.6 26.1L31.5 27.6M33.9 29.3L31.5 27.6M31.9 35.4L34.8 34.6M31.9 35.4L31.2 35.2M31.2 35.2L32.0 31.9M34.8 34.6L34.9 33.6M34.9 33.6L33.2 31.6M33.2 31.6L32.0 31.9M33.1 38.6L31.9 35.4M35.6 36.2L34.8 34.6M29.7 35.6L31.2 35.2M39.2 32.6L39.2 36.1M37.6 32.1L34.9 33.6M39.2 36.1L39.1 36.3M33.9 29.3L33.2 31.6M18.9 7.3L21.1 6.4M16.8 4.9L16.7 4.0M21.1 6.4L19.4 3.0M19.4 3.0L16.7 4.0M12.7 4.7L16.2 3.5M12.0 0.7L15.3 0.8M15.3 0.8L16.2 3.5M16.2 3.5L16.7 4.0M42.0 39.2L42.5 38.6M46.5 38.2L46.2 37.8M42.5 38.6L46.2 37.8M2.2 30.9L-0.2 28.3M2.2 30.9L-0.9 31.8M-1.6 31.2L-0.9 28.2M-1.6 31.2L-0.9 31.8M-0.9 28.2L-0.6 28.0M-0.6 28.0L-0.2 28.3M2.7 30.9L2.2 30.9M3.3 29.4L-0.2 28.3M-0.4 34.2L-0.9 31.8M-2.7 27.5L-0.9 28.2M1.0 25.9L-0.6 28.0M49.0 22.4L48.9 25.5M48.9 25.5L49.0 25.9M45.3 22.4L44.9 24.4M48.9 25.5L44.9 24.4M42.1 25.3L44.2 25.1M44.2 25.1L44.9 24.4M-3.2 48.4L-0.3 46.5M0.6 50.0L0.2 46.9M0.2 46.9L-0.3 46.5M-0.3 46.5L-0.3 46.5M-2.8 44.9L-0.3 46.5M2.3 47.0L0.2 46.9M0.6 42.5L-0.3 46.5M29.3 32.2L30.9 31.6M29.3 32.2L26.6 31.0M30.9 31.6L30.0 28.5M26.6 31.0L26.5 30.2M26.5 30.2L28.3 28.4M28.3 28.4L30.0 28.5M29.5 35.4L29.3 32.2M32.0 31.9L30.9 31.6M26.6 31.0L26.6 31.0M31.5 27.6L30.0 28.5M24.0 28.8L26.5 30.2M27.7 26.1L28.3 28.4M25.5 6.2L22.5 5.7M25.5 6.2L24.1 9.7M22.5 8.9L23.8 9.8M22.5 8.9L21.5 6.4M21.5 6.4L22.5 5.7M24.1 9.7L23.8 9.8M26.3 10.5L24.1 9.7M27.5 7.2L25.9 6.0M25.9 6.0L25.5 6.2M22.9 11.8L23.8 9.8M19.1 10.3L22.5 8.9M21.1 6.4L21.5 6.4M31.1 0.8L28.5 0.7M28.7 3.6L27.8 3.0M27.8 3.0L28.5 0.7M25.9 6.0L26.5 3.8M27.8 3.0L26.5 3.8M15.3 0.8L15.3 0.8M15.7 -2.2L15.3 0.8M46.6 35.1L46.0 36.5M46.6 35.1L43.0 33.0M46.0 36.5L43.0 35.6M43.0 33.0L42.7 35.2M42.7 35.2L43.0 35.6M47.6 34.2L46.6 35.1M47.6 34.2L49.4 34.7M46.2 37.8L46.0 36.5M42.5 38.6L43.0 35.6M39.2 36.1L42.7 35.2M45.3 27.5L47.1 28.2M45.3 27.5L42.5 29.5M47.1 28.2L46.4 31.2M46.4 31.2L42.7 31.5M42.5 29.5L42.6 31.4M42.6 31.4L42.7 31.5M49.0 25.9L47.4 28.0M44.2 25.1L45.3 27.5M47.4 28.0L47.1 28.2M41.3 27.2L42.5 29.5M47.6 34.2L47.1 31.8M47.1 31.8L46.4 31.2M43.0 33.0L42.7 31.5M40.5 31.8L42.6 31.4M51.3 29.4L47.8 28.3M47.8 28.3L50.2 30.9M47.4 28.0L47.8 28.3M47.1 31.8L50.2 30.9M28.5 0.7L27.9 -0.4M28.7 -2.7L27.9 -0.4M22.5 5.7L22.5 3.1M26.5 3.8L25.5 3.1M25.5 3.1L22.7 2.8M22.5 3.1L22.7 2.8M19.4 3.0L19.6 2.7M22.5 3.1L19.6 2.7M27.9 -0.4L26.6 -0.5M26.6 -0.5L24.6 -4.2M25.5 3.1L24.7 -0.1M26.6 -0.5L24.7 -0.1M22.7 2.8L22.9 -0.5M24.7 -0.1L22.9 -0.5M19.0 0.1L18.1 -3.0M19.0 0.1L19.7 0.5M19.7 0.5L22.4 -1.1M15.3 0.8L19.0 0.1M19.6 2.7L19.7 0.5M22.9 -0.5L22.4 -1.1" stroke="#9c7c4c" stroke-width="0.45" fill="none"/><path d="M1.8 0.6h0M1.6 3.5h0M0.8 8.9h0M3.8 10.5h0M0.6 15.7h0M3.4 17.7h0M2.9 19.8h0M2.9 24.0h0M1.6 28.5h0M1.4 29.1h0M1.3 32.6h0M3.0 36.0h0M1.0 39.3h0M3.4 44.1h0M2.0 45.4h0M4.0 1.1h0M5.6 3.9h0M4.2 8.2h0M4.6 11.3h0M4.7 13.4h0M6.1 16.8h0M5.0 21.3h0M6.1 25.2h0M5.6 27.6h0M4.9 30.5h0M5.3 32.6h0M6.2 36.8h0M5.5 39.5h0M6.8 43.1h0M3.9 46.6h0M8.3 1.0h0M8.8 4.6h0M8.2 9.3h0M8.6 11.2h0M7.8 13.9h0M9.5 18.9h0M9.0 21.3h0M8.8 23.3h0M7.8 28.3h0M8.5 29.2h0M7.4 33.2h0M9.1 36.4h0M7.5 39.9h0M8.1 42.4h0M9.1 46.1h0M10.2 2.6h0M11.0 3.8h0M10.4 7.6h0M11.8 10.6h0M12.5 15.6h0M12.0 17.6h0M12.1 21.8h0M11.7 23.7h0M12.5 26.3h0M13.4 30.2h0M12.4 34.1h0M11.7 36.0h0M11.9 40.9h0M12.4 42.5h0M11.4 45.4h0M13.4 2.9h0M14.4 5.7h0M13.8 7.7h0M14.3 10.4h0M15.6 14.4h0M14.3 18.1h0M15.4 20.9h0M14.8 24.3h0M13.2 26.2h0M15.2 31.3h0M14.3 34.8h0M14.2 35.7h0M14.2 41.3h0M15.9 43.5h0M13.4 46.6h0M18.1 1.4h0M19.4 5.0h0M16.5 7.4h0M17.3 12.0h0M16.9 13.3h0M17.7 18.7h0M17.2 20.0h0M18.3 22.8h0M18.1 27.2h0M18.4 30.5h0M16.5 32.7h0M19.5 36.1h0M16.6 39.5h0M19.9 43.7h0M17.7 47.2h0M21.3 1.5h0M20.9 4.3h0M20.9 8.6h0M21.6 10.3h0M22.1 13.6h0M23.0 18.7h0M21.2 20.4h0M22.9 23.1h0M19.5 26.5h0M21.0 30.3h0M20.9 34.5h0M20.6 36.9h0M19.5 39.8h0M20.8 44.0h0M19.6 46.6h0M24.3 1.7h0M24.1 4.2h0M23.4 7.6h0M24.8 11.7h0M23.2 14.9h0M24.9 16.8h0M24.5 19.8h0M25.4 24.2h0M23.2 26.1h0M23.8 31.6h0M25.1 33.5h0M24.6 36.3h0M23.4 40.2h0M26.2 41.9h0M25.2 46.2h0M25.9 1.3h0M28.4 5.4h0M26.0 8.6h0M27.0 12.3h0M27.4 13.7h0M27.7 17.4h0M28.4 19.7h0M27.2 24.3h0M26.3 27.2h0M29.5 30.5h0M28.1 33.5h0M27.4 36.5h0M26.6 39.6h0M27.5 43.2h0M26.3 45.6h0M30.3 2.6h0M30.5 4.0h0M29.5 7.5h0M31.8 10.3h0M30.3 14.3h0M31.5 18.8h0M29.6 20.6h0M32.1 24.1h0M29.5 26.5h0M31.5 29.9h0M30.6 33.4h0M31.6 37.1h0M31.4 39.8h0M30.9 44.1h0M30.5 47.0h0M32.6 2.1h0M34.6 4.1h0M33.2 9.0h0M33.4 11.4h0M33.5 13.2h0M35.3 16.5h0M34.1 21.3h0M33.5 24.8h0M33.7 26.8h0M35.5 31.2h0M32.5 33.8h0M33.2 36.5h0M34.0 40.9h0M33.3 43.8h0M32.9 45.7h0M37.1 2.2h0M39.0 3.8h0M36.9 8.4h0M37.2 10.1h0M36.7 14.9h0M38.9 18.8h0M36.5 22.0h0M37.9 22.8h0M36.0 26.7h0M38.6 30.0h0M37.2 34.4h0M37.1 38.1h0M37.1 38.9h0M38.1 44.1h0M37.3 47.4h0M40.1 2.5h0M41.8 5.0h0M39.0 9.2h0M41.9 11.7h0M39.6 14.4h0M39.8 18.1h0M38.7 20.7h0M39.9 24.1h0M39.0 27.4h0M40.1 29.2h0M41.1 34.3h0M41.7 36.8h0M40.6 41.1h0M39.8 43.1h0M38.9 46.5h0M42.7 1.8h0M43.5 5.3h0M42.1 7.2h0M44.3 12.4h0M42.6 13.5h0M45.3 17.9h0M42.3 21.8h0M43.1 23.0h0M43.6 27.3h0M45.0 29.2h0M44.5 34.7h0M43.8 37.1h0M44.3 39.4h0M45.2 43.9h0M42.2 45.6h0M47.2 0.9h0M47.0 5.8h0M46.3 9.0h0M47.9 11.3h0M46.4 15.0h0M47.1 16.4h0M47.0 21.1h0M47.0 23.8h0M46.3 26.1h0M0.5 30.0h0M45.3 33.4h0M0.3 36.5h0M45.2 40.3h0M46.1 44.5h0M45.2 45.9h0" stroke="#1e1a22" stroke-width="1.0" stroke-linecap="round"/></pattern><pattern id="p7" patternUnits="userSpaceOnUse" width="48" height="48"><rect width="48" height="48" fill="#e9d7b9"/><path d="M48.6 30.1L48.1 27.1M48.6 30.1L44.3 30.6M45.9 26.3L48.1 27.1M45.9 26.3L44.5 27.9M44.5 27.9L44.3 30.6M49.3 17.0L45.5 17.6M45.5 17.6L45.6 20.3M49.3 19.2L45.6 20.3M29.6 41.2L30.4 41.2M29.6 41.2L28.1 44.5M30.4 41.2L32.5 44.4M28.1 44.5L32.5 44.4M34.2 37.3L31.4 37.7M34.2 37.3L34.4 36.5M34.4 36.5L34.7 34.9M31.0 37.3L31.4 37.7M31.0 37.3L30.4 34.5M30.4 34.5L34.7 34.9M0.1 41.5L-3.0 39.7M0.1 41.5L0.8 40.9M1.2 38.7L0.8 40.9M1.2 38.7L-1.4 36.9M-2.1 26.3L0.1 27.1M0.1 27.1L0.6 30.1M-3.7 30.6L0.6 30.1M13.3 27.3L11.0 23.6M13.3 27.3L15.1 26.6M13.3 22.9L11.1 23.4M13.3 22.9L14.8 24.0M14.8 24.0L15.1 26.6M11.1 23.4L11.0 23.6M0.2 7.3L0.6 4.2M0.2 7.3L1.4 8.2M3.5 3.8L3.5 3.8M3.5 3.8L3.8 7.2M3.8 7.2L3.6 7.3M3.5 3.8L0.6 4.2M1.4 8.2L3.6 7.3M6.4 0.9L4.3 -0.1M6.4 0.9L8.2 -0.1M8.2 -0.1L7.2 -2.5M4.7 -2.8L4.3 -0.1M3.5 3.8L5.5 3.6M5.5 3.6L6.4 0.9M3.1 1.2L3.5 3.8M3.1 1.2L4.3 -0.1M1.5 -2.7L0.1 -0.5M3.1 1.2L0.1 -0.5M-2.4 20.3L1.3 19.2M-2.5 17.6L1.3 17.0M1.3 17.0L1.6 17.2M1.6 17.2L1.3 19.2M-1.2 23.3L1.8 20.5M1.3 19.2L1.8 20.5M49.3 17.0L48.0 14.1M48.0 14.1L44.9 14.2M45.5 17.6L43.9 16.2M43.9 16.2L44.9 14.2M45.1 9.9L44.1 12.5M45.1 9.9L49.2 11.5M48.0 14.1L49.2 11.9M44.1 12.5L44.9 14.2M48.7 23.8L46.8 23.3M48.7 23.8L51.2 23.3M46.8 23.3L49.8 20.5M45.2 20.9L45.8 23.5M45.2 20.9L42.4 19.9M41.1 23.6L41.9 20.4M41.1 23.6L45.7 23.7M45.7 23.7L45.8 23.5M42.4 19.9L41.9 20.4M45.6 20.3L45.2 20.9M46.8 23.3L45.8 23.5M45.9 26.3L45.7 23.7M41.5 26.6L44.5 27.9M41.5 26.6L41.1 23.6M41.1 23.6L41.1 23.6M48.1 27.1L49.7 26.6M49.7 26.6L48.7 23.8M41.1 23.6L38.4 23.4M38.4 23.4L38.0 20.6M41.9 20.4L38.8 19.8M38.8 19.8L38.0 20.6M31.2 20.8L30.5 23.5M31.2 20.8L34.3 21.2M34.3 21.2L34.7 22.8M34.7 22.8L32.5 24.7M30.5 23.5L32.5 24.7M28.4 38.7L29.4 41.1M28.4 38.7L27.2 37.5M29.4 41.1L24.8 41.0M27.2 37.5L24.9 38.9M24.8 41.0L24.8 39.1M24.8 39.1L24.9 38.9M29.6 41.2L29.4 41.1M30.4 41.2L31.5 40.4M31.5 40.4L31.4 37.7M31.0 37.3L28.4 38.7M23.4 34.9L24.9 38.9M23.4 34.9L23.3 34.9M21.2 38.0L22.2 35.6M21.2 38.0L24.8 39.1M23.3 34.9L22.2 35.6M0.1 41.5L-0.0 42.1M0.8 40.9L4.1 41.6M4.1 41.6L4.6 45.2M4.6 45.2L1.5 45.3M-0.0 42.1L1.5 45.3M34.7 22.8L36.8 23.9M32.5 24.7L33.0 26.0M33.0 26.0L35.1 26.4M35.1 26.4L36.8 23.9M38.4 23.4L38.0 23.7M34.3 21.2L35.4 19.7M38.0 20.6L35.4 19.7M38.0 23.7L36.8 23.9M23.6 30.3L25.9 31.5M23.6 30.3L21.7 31.5M23.4 34.9L25.6 34.3M23.3 34.9L21.7 31.5M25.9 31.5L25.6 34.3M27.2 37.5L27.6 35.5M27.6 35.5L25.6 34.3M47.6 51.6L47.7 47.6M47.7 47.6L48.1 47.5M51.1 49.2L48.1 47.5M3.2 23.3L0.7 23.8M3.2 23.3L4.6 24.4M0.7 23.8L1.7 26.6M4.6 24.4L4.1 26.6M4.1 26.6L1.7 26.6M-1.2 23.3L0.7 23.8M2.1 20.7L1.8 20.5M2.1 20.7L3.2 23.3M0.1 27.1L1.7 26.6M1.3 17.0L-0.0 14.1M-3.1 14.2L-0.0 14.1M16.7 20.9L19.2 20.1M16.7 20.9L17.1 22.8M17.1 22.8L19.1 24.7M19.2 20.1L20.8 21.3M20.8 21.3L19.5 24.6M19.1 24.7L19.5 24.6M13.3 22.9L15.0 20.0M14.8 24.0L17.1 22.8M15.0 20.0L15.2 19.8M15.2 19.8L16.7 20.9M17.7 27.2L19.1 24.7M17.7 27.2L15.1 26.6M-2.1 -0.7L-0.3 -0.4M-0.3 -0.4L-0.4 3.6M-0.4 3.6L-2.9 4.2M0.1 -0.5L-0.3 -0.4M0.6 4.2L-0.4 3.6M0.2 7.3L-2.6 7.9M15.4 17.2L13.6 16.3M15.4 17.2L16.5 16.5M13.6 16.3L14.0 13.8M16.5 16.5L16.7 13.8M16.7 13.8L14.8 13.4M14.8 13.4L14.0 13.8M15.2 19.8L15.4 17.2M19.6 17.0L19.2 20.1M19.6 17.0L16.5 16.5M8.1 13.9L10.2 14.2M8.1 13.9L7.1 10.9M7.1 10.9L10.7 10.3M10.2 14.2L11.7 12.1M11.7 12.1L12.1 11.0M12.1 11.0L10.7 10.3M11.4 16.2L13.6 16.3M11.4 16.2L10.2 14.2M14.0 13.8L11.7 12.1M4.4 14.2L4.3 14.3M4.4 14.2L4.9 11.0M4.3 14.3L1.2 11.9M4.9 11.0L3.4 10.9M3.4 10.9L1.2 11.5M1.2 11.9L1.2 11.5M1.2 11.5L1.2 11.5M6.5 10.2L7.1 10.9M6.5 10.2L4.9 11.0M8.0 13.9L4.4 14.2M8.0 13.9L8.1 13.9M1.6 17.2L3.4 16.8M3.4 16.8L4.3 14.3M-0.0 14.1L1.2 11.9M3.8 7.2L6.6 8.5M6.5 10.2L6.6 8.5M3.6 7.3L3.4 10.9M1.4 8.2L1.2 11.5M1.2 11.5L-2.9 9.9M15.0 20.0L10.8 19.6M11.4 16.2L10.7 17.6M10.7 17.6L10.8 19.6M11.1 23.4L10.6 19.9M10.8 19.6L10.6 19.9M37.9 -3.4L38.7 -0.7M38.7 -0.7L37.3 0.3M37.3 0.3L34.5 -0.3M36.6 -3.6L34.5 -0.3M44.4 51.8L43.6 47.9M47.7 47.6L45.9 47.3M43.6 47.9L45.9 47.3M31.5 40.4L34.2 40.4M33.0 44.8L32.5 44.4M33.0 44.8L34.6 43.9M34.6 43.9L34.2 40.4M34.2 37.3L34.4 40.1M34.4 40.1L34.2 40.4M42.2 17.2L42.6 16.7M42.2 17.2L39.2 17.2M42.6 16.7L40.3 12.9M39.2 17.2L38.2 16.2M38.2 16.2L38.4 14.7M38.4 14.7L39.5 13.1M39.5 13.1L40.3 12.9M43.9 16.2L42.6 16.7M42.4 19.9L42.2 17.2M38.8 19.8L39.2 17.2M44.1 12.5L40.9 12.4M40.9 12.4L40.3 12.9M34.8 17.2L38.2 16.2M34.8 17.2L35.4 19.7M19.6 17.0L20.2 16.6M20.8 21.3L22.1 21.0M22.1 21.0L21.6 16.8M20.2 16.6L21.6 16.8M38.4 14.7L34.8 12.9M39.5 13.1L36.5 10.3M36.5 10.3L34.8 12.9M4.1 41.6L5.3 40.6M4.6 45.2L4.7 45.2M7.0 41.5L5.3 40.6M7.0 41.5L6.5 45.2M6.5 45.2L4.7 45.2M0.6 30.1L1.5 30.6M1.5 30.6L0.5 33.9M0.5 33.9L-1.2 34.1M37.7 30.3L39.3 28.1M37.7 30.3L35.5 29.7M35.5 29.7L35.5 27.2M35.5 27.2L38.4 26.9M39.3 28.1L38.4 26.9M36.9 34.7L34.9 34.8M36.9 34.7L38.2 31.4M34.9 34.8L34.1 30.4M34.1 30.4L35.5 29.7M38.2 31.4L37.7 30.3M32.6 30.0L34.1 30.4M32.6 30.0L32.1 27.5M32.1 27.5L33.0 26.0M35.1 26.4L35.5 27.2M38.0 23.7L38.4 26.9M41.5 26.6L39.5 28.1M39.5 28.1L39.3 28.1M28.1 29.4L27.1 30.8M28.1 29.4L31.2 30.8M27.1 30.8L30.1 34.5M31.2 30.8L30.4 34.5M30.4 34.5L30.1 34.5M25.9 31.5L27.1 30.8M27.6 35.5L30.1 34.5M30.4 34.5L30.4 34.5M34.7 34.9L34.9 34.8M32.6 30.0L31.2 30.8M28.1 44.5L28.0 44.7M32.7 46.2L33.0 44.8M32.7 46.2L30.1 47.6M30.1 47.6L30.0 47.5M28.0 44.7L30.0 47.5M24.1 42.1L24.8 41.0M24.1 42.1L24.2 43.8M24.2 43.8L25.2 45.0M28.0 44.7L25.2 45.0M24.2 43.8L20.1 44.9M20.1 44.9L22.4 47.9M25.2 45.0L24.8 47.0M22.4 47.9L24.8 47.0M37.3 48.3L36.1 51.8M37.3 48.3L34.5 47.7M34.0 47.7L34.5 47.7M34.0 47.7L33.3 50.9M32.7 46.2L34.0 47.7M36.6 44.4L34.6 43.9M36.6 44.4L34.5 47.7M30.1 47.6L30.6 50.9M27.3 21.5L25.3 20.4M27.3 21.5L30.2 19.9M27.1 18.1L30.2 19.9M27.1 18.1L25.5 19.2M25.5 19.2L25.3 20.4M22.1 21.0L24.1 21.5M24.1 21.5L25.3 20.4M23.1 16.4L21.6 16.8M23.1 16.4L25.5 19.2M19.5 24.6L20.6 24.8M24.1 21.5L24.1 22.4M20.6 24.8L24.1 22.4M17.7 27.2L17.8 27.3M19.7 28.9L17.8 27.3M19.7 28.9L23.5 26.9M20.6 24.8L23.5 26.9M23.6 30.3L23.9 27.0M21.7 31.5L20.4 31.3M20.4 31.3L19.7 28.9M23.5 26.9L23.9 27.0M5.5 3.6L8.0 4.6M6.6 8.5L8.6 6.7M8.0 4.6L8.6 6.7M10.7 10.3L8.7 6.7M8.6 6.7L8.7 6.7M14.8 13.4L14.3 10.5M12.1 11.0L12.8 10.4M14.3 10.5L12.8 10.4M3.7 16.9L7.0 16.5M3.7 16.9L5.9 20.1M5.9 20.1L6.6 20.4M7.0 16.5L7.5 17.6M7.5 17.6L6.7 20.4M6.6 20.4L6.7 20.4M8.0 13.9L7.0 16.5M3.4 16.8L3.7 16.9M2.1 20.7L5.9 20.1M6.5 23.1L6.6 20.4M6.5 23.1L4.6 24.4M10.7 17.6L7.5 17.6M10.6 19.9L6.7 20.4M6.5 23.1L9.2 24.3M9.2 24.3L11.0 23.6M34.0 -0.3L34.5 -0.3M34.0 -0.3L32.7 -1.8M48.5 33.9L46.8 34.1M48.5 33.9L50.1 34.8M49.2 38.7L46.6 36.9M46.8 34.1L46.6 36.9M48.0 42.1L49.5 45.3M48.0 42.1L48.1 41.5M48.1 41.5L48.8 40.9M48.8 40.9L52.1 41.6M48.1 47.5L49.5 45.3M46.0 43.4L45.9 47.3M46.0 43.4L48.0 42.1M49.2 38.7L48.8 40.9M40.2 51.3L40.5 48.0M37.3 48.3L38.7 47.3M38.7 47.3L40.5 48.0M46.0 43.4L44.3 43.2M44.3 43.2L42.8 43.6M43.6 47.9L42.8 47.6M42.8 43.6L42.8 47.6M40.5 48.0L42.8 47.6M22.0 12.3L19.9 14.0M22.0 12.3L21.3 10.2M20.2 9.8L17.6 11.5M20.2 9.8L21.3 10.2M19.9 14.0L17.6 12.5M17.6 12.5L17.6 11.5M24.4 13.9L22.0 12.3M24.4 13.9L23.1 16.4M20.2 16.6L19.9 14.0M19.6 7.9L16.4 6.8M19.6 7.9L20.2 9.8M15.6 10.1L16.4 6.8M15.6 10.1L17.6 11.5M16.7 13.8L17.6 12.5M15.6 10.1L14.3 10.5M37.3 0.3L36.1 3.8M34.0 -0.3L33.3 2.9M36.1 3.8L35.3 4.2M33.3 2.9L35.3 4.2M30.1 -0.4L32.7 -1.8M30.1 -0.4L30.6 2.9M33.3 2.9L30.6 2.9M34.0 8.9L36.5 9.8M34.0 8.9L32.8 7.4M36.5 9.8L37.2 8.9M37.2 8.9L35.3 4.3M35.3 4.3L32.8 7.4M36.5 10.3L36.5 9.8M34.8 12.9L34.1 13.3M34.0 8.9L32.0 11.3M32.0 11.3L34.1 13.3M6.4 48.9L4.3 47.9M6.4 48.9L8.2 47.9M6.5 45.2L7.2 45.5M4.7 45.2L4.3 47.9M8.2 47.9L7.2 45.5M22.2 35.6L18.0 34.0M20.4 31.3L18.6 32.8M18.0 34.0L18.6 32.8M17.8 27.3L16.3 30.0M18.6 32.8L16.3 30.0M13.3 27.3L12.9 27.9M12.9 27.9L14.5 30.7M16.3 30.0L14.5 30.7M24.1 42.1L20.5 40.5M21.2 38.0L20.6 38.4M20.6 38.4L20.5 40.5M1.5 30.6L3.8 30.0M4.1 26.6L4.3 27.2M4.3 27.2L3.8 30.0M1.2 38.7L2.5 37.3M5.3 40.6L5.6 38.0M5.6 38.0L2.5 37.3M0.5 33.9L2.1 34.8M2.5 37.3L2.1 34.8M3.1 49.2L0.1 47.5M-0.3 47.6L0.1 47.5M-0.3 47.6L-0.4 51.6M5.5 51.6L6.4 48.9M4.3 47.9L3.1 49.2M1.5 45.3L0.1 47.5M27.2 50.7L26.3 48.7M26.3 48.7L25.4 48.2M25.4 48.2L23.5 51.6M30.0 47.5L26.3 48.7M24.8 47.0L25.4 48.2M22.4 47.9L21.4 49.1M25.0 26.4L25.2 25.1M25.0 26.4L27.8 27.9M25.2 25.1L28.3 23.4M27.8 27.9L28.8 27.0M28.8 27.0L29.9 23.8M29.9 23.8L28.3 23.4M24.1 22.4L25.2 25.1M23.9 27.0L25.0 26.4M28.1 29.4L27.8 27.9M27.3 21.5L28.3 23.4M32.1 27.5L28.8 27.0M30.5 23.5L29.9 23.8M31.2 20.8L30.8 20.0M30.8 20.0L30.2 19.9M10.6 -4.0L12.0 -0.5M14.8 -0.8L13.4 -0.3M14.8 -0.8L15.2 -1.7M12.0 -0.5L13.4 -0.3M8.2 -0.1L9.6 0.8M12.0 -0.5L9.6 0.8M8.0 4.6L9.6 2.4M9.6 0.8L9.6 2.4M13.4 -0.3L13.4 4.0M9.6 2.4L12.4 3.9M13.4 4.0L12.4 3.9M8.7 6.7L9.5 6.6M12.4 3.9L9.5 6.6M12.8 10.4L12.4 7.4M9.5 6.6L12.4 7.4M16.3 6.7L14.4 5.5M16.3 6.7L18.7 3.8M18.7 3.8L17.4 1.8M14.1 4.6L14.4 5.5M14.1 4.6L17.1 1.7M17.4 1.8L17.1 1.7M16.4 6.8L16.3 6.7M12.4 7.4L14.4 5.5M19.6 7.9L21.2 5.4M21.2 4.4L21.2 5.4M21.2 4.4L18.7 3.8M21.2 4.4L22.0 3.7M19.3 0.3L21.4 1.1M19.3 0.3L17.4 1.8M22.0 3.7L21.4 1.1M13.4 4.0L14.1 4.6M14.8 -0.8L17.1 1.7M19.3 0.3L19.2 -2.9M21.4 1.1L22.4 -0.1M20.1 -3.1L22.4 -0.1M21.2 5.4L23.3 7.7M21.3 10.2L22.6 9.4M22.6 9.4L23.3 7.7M27.2 2.7L29.3 3.7M27.2 2.7L24.6 4.3M29.3 3.7L26.4 6.9M24.6 4.3L26.0 6.7M26.0 6.7L26.4 6.9M22.0 3.7L23.5 3.6M23.5 3.6L24.6 4.3M23.3 7.7L26.0 6.7M47.6 3.6L45.1 4.2M47.6 3.6L47.7 -0.4M45.1 4.2L44.4 3.8M47.7 -0.4L45.9 -0.7M45.9 -0.7L43.6 -0.1M44.4 3.8L43.6 -0.1M38.7 -0.7L40.5 0.0M42.8 -4.4L42.8 -0.4M40.5 0.0L42.8 -0.4M40.9 12.4L40.9 9.9M37.2 8.9L37.6 8.8M37.6 8.8L40.9 9.9M45.9 -0.7L46.0 -4.6M42.8 -0.4L43.6 -0.1M48.1 -0.5L49.5 -2.7M48.1 -0.5L47.7 -0.4M45.4 33.4L44.1 34.6M45.4 33.4L44.3 30.8M44.1 34.6L42.0 35.0M44.3 30.8L42.7 31.1M42.7 31.1L41.2 32.2M41.2 32.2L40.9 34.0M40.9 34.0L42.0 35.0M49.5 30.6L48.6 30.1M49.5 30.6L48.5 33.9M44.3 30.6L44.3 30.8M46.8 34.1L45.4 33.4M39.5 28.1L42.7 31.1M38.2 31.4L41.2 32.2M36.9 34.7L38.2 35.7M38.2 35.7L40.9 34.0M34.4 36.5L37.8 39.1M38.2 35.7L38.9 37.6M38.9 37.6L37.8 39.1M45.4 7.9L45.1 4.2M45.4 7.9L48.2 7.3M47.6 3.6L48.6 4.2M48.6 4.2L48.2 7.3M48.1 -0.5L51.1 1.2M48.6 4.2L51.5 3.8M45.1 9.9L44.8 8.8M44.8 8.8L45.4 7.9M48.2 7.3L49.4 8.2M35.3 4.2L35.3 4.3M30.6 2.9L30.0 3.5M30.0 3.5L30.8 6.1M32.8 7.4L32.3 7.3M32.3 7.3L30.8 6.1M30.0 3.5L29.3 3.7M26.4 6.9L27.4 8.9M30.8 6.1L27.4 8.9M33.7 14.4L31.1 13.7M33.7 14.4L33.6 16.4M31.1 13.7L30.1 16.1M33.6 16.4L31.9 17.1M31.9 17.1L30.1 16.1M34.8 17.2L33.6 16.4M34.1 13.3L33.7 14.4M30.8 20.0L31.9 17.1M28.2 15.5L30.1 16.1M28.2 15.5L27.1 18.1M8.2 47.9L9.6 48.8M7.2 45.5L10.2 43.6M10.2 43.6L10.6 44.0M10.6 44.0L12.0 47.5M12.0 47.5L9.6 48.8M9.6 50.4L9.6 48.8M19.3 48.3L21.4 49.1M19.3 48.3L17.4 49.8M11.9 28.4L10.3 30.3M11.9 28.4L9.0 26.2M10.3 30.3L8.7 30.2M8.7 30.2L7.7 27.9M9.0 26.2L7.7 27.9M9.2 24.3L9.0 26.2M12.9 27.9L11.9 28.4M4.3 27.2L7.7 27.9M18.0 34.0L17.4 34.5M20.6 38.4L18.4 37.3M17.4 34.5L18.4 37.3M14.0 32.2L15.0 34.5M14.0 32.2L11.3 31.7M11.3 31.7L10.3 34.4M14.4 35.2L15.0 34.5M14.4 35.2L10.6 35.1M10.6 35.1L10.3 34.4M14.5 30.7L14.0 32.2M17.4 34.5L15.0 34.5M10.3 30.3L11.3 31.7M18.4 37.3L17.0 38.8M17.0 38.8L14.0 37.6M14.0 37.6L14.4 35.2M14.8 47.2L13.4 47.7M14.8 47.2L15.2 46.3M10.6 44.0L14.0 43.6M12.0 47.5L13.4 47.7M14.0 43.6L15.2 46.3M8.0 31.0L4.2 30.6M8.0 31.0L7.8 33.2M7.8 33.2L6.1 34.4M4.2 30.6L4.4 33.6M4.4 33.6L6.1 34.4M3.8 30.0L4.2 30.6M8.7 30.2L8.0 31.0M10.3 34.4L7.8 33.2M2.1 34.8L4.4 33.6M-0.0 42.1L-2.0 43.4M-0.3 47.6L-2.1 47.3M24.8 -1.0L25.4 0.2M26.3 0.7L30.0 -0.5M26.3 0.7L25.4 0.2M28.0 -3.3L30.0 -0.5M22.4 -0.1L24.8 -1.0M23.5 3.6L25.4 0.2M30.1 -0.4L30.0 -0.5M27.2 2.7L26.3 0.7M26.1 10.6L27.5 9.1M26.1 10.6L25.5 13.5M25.5 13.5L27.9 14.8M27.9 14.8L29.9 12.3M27.5 9.1L29.9 10.3M29.9 12.3L30.4 11.1M30.4 11.1L29.9 10.3M22.6 9.4L26.1 10.6M27.4 8.9L27.5 9.1M24.4 13.9L25.5 13.5M28.2 15.5L27.9 14.8M31.1 13.7L29.9 12.3M32.3 7.3L29.9 10.3M32.0 11.3L30.4 11.1M36.1 3.8L38.8 4.4M37.6 8.8L39.5 6.5M39.5 6.5L38.8 4.4M40.5 0.0L40.2 3.3M38.8 4.4L40.2 3.3M44.4 3.8L42.6 4.5M40.2 3.3L42.6 4.5M41.5 42.1L41.5 38.1M41.5 42.1L44.7 40.1M43.7 38.0L44.5 38.4M43.7 38.0L41.7 38.1M41.7 38.1L41.5 38.1M44.5 38.4L45.0 39.7M44.7 40.1L45.0 39.7M44.3 43.2L44.7 40.1M42.8 43.6L41.4 42.3M41.4 42.3L41.5 42.1M46.6 36.9L44.5 38.4M44.1 34.6L43.7 38.0M42.0 35.0L41.7 38.1M38.9 37.6L41.5 38.1M48.1 41.5L45.0 39.7M40.7 42.5L37.7 39.4M40.7 42.5L37.9 44.6M37.6 44.5L36.8 40.0M37.6 44.5L37.9 44.6M36.8 40.0L37.7 39.4M41.4 42.3L40.7 42.5M37.8 39.1L37.7 39.4M38.7 47.3L37.9 44.6M36.6 44.4L37.6 44.5M34.4 40.1L36.8 40.0M14.8 47.2L17.1 49.7M13.4 47.7L13.4 52.0M6.5 37.3L6.6 37.1M6.5 37.3L9.5 41.2M6.6 37.1L9.7 36.8M10.5 40.8L10.3 37.6M10.5 40.8L10.0 41.3M9.7 36.8L10.3 37.6M9.5 41.2L10.0 41.3M5.6 38.0L6.5 37.3M6.1 34.4L6.6 37.1M7.0 41.5L9.5 41.2M10.6 35.1L9.7 36.8M13.9 37.8L13.4 40.4M13.9 37.8L10.3 37.6M13.4 40.4L10.5 40.8M10.2 43.6L10.0 41.3M13.4 40.4L14.7 41.5M14.7 41.5L14.0 43.6M14.0 37.6L13.9 37.8M16.8 40.9L19.9 41.1M16.8 40.9L16.3 41.4M16.3 41.4L17.9 44.9M19.9 41.1L19.7 44.8M17.9 44.9L19.2 45.1M19.7 44.8L19.2 45.1M20.5 40.5L19.9 41.1M17.0 38.8L16.8 40.9M14.7 41.5L16.3 41.4M15.2 46.3L17.9 44.9M20.1 44.9L19.7 44.8M19.3 48.3L19.2 45.1M42.0 6.1L40.0 6.6M42.0 6.1L43.6 8.6M40.0 6.6L41.6 9.2M43.6 8.6L41.6 9.2M39.5 6.5L40.0 6.6M42.6 4.5L42.0 6.1M44.8 8.8L43.6 8.6M40.9 9.9L41.6 9.2" stroke="#9c8c70" stroke-width="0.45" fill="none"/><path d="M1.2 2.0h0M1.8 6.2h0M3.0 9.4h0M3.8 12.4h0M2.4 14.3h0M3.7 19.4h0M1.2 22.7h0M1.6 24.7h0M1.6 28.5h0M2.6 32.4h0M0.4 36.3h0M3.5 39.5h0M2.7 43.2h0M2.8 47.2h0M5.1 1.3h0M5.7 5.9h0M3.9 9.4h0M5.5 12.7h0M5.8 15.5h0M6.0 17.8h0M4.1 21.4h0M7.1 25.9h0M6.4 29.5h0M6.2 32.2h0M4.3 35.8h0M7.4 39.8h0M5.9 42.8h0M5.9 47.7h0M7.2 2.0h0M10.6 4.5h0M9.1 9.6h0M9.5 11.4h0M8.6 16.6h0M8.7 18.6h0M9.0 21.6h0M10.9 26.4h0M9.8 28.0h0M9.6 32.5h0M8.4 35.0h0M8.7 38.8h0M7.7 43.0h0M9.7 46.1h0M12.0 2.1h0M11.7 5.6h0M10.9 8.6h0M14.0 12.8h0M13.1 14.0h0M12.8 18.6h0M12.6 21.0h0M13.5 24.8h0M12.6 30.4h0M12.1 33.4h0M12.0 36.8h0M11.9 38.6h0M12.5 42.5h0M12.8 45.0h0M14.8 2.2h0M16.6 4.0h0M14.1 8.2h0M15.3 12.5h0M14.9 14.3h0M17.8 18.8h0M15.2 22.6h0M16.2 24.5h0M15.2 28.9h0M16.3 31.6h0M16.2 37.4h0M15.4 39.2h0M15.8 43.6h0M17.7 47.4h0M19.8 2.0h0M18.9 5.9h0M17.8 9.1h0M19.9 12.4h0M18.4 14.7h0M20.9 19.2h0M18.8 21.9h0M20.8 27.0h0M17.9 30.3h0M21.0 33.9h0M20.2 36.0h0M18.4 39.5h0M18.3 42.5h0M20.8 47.3h0M23.3 1.2h0M23.5 6.1h0M21.7 7.7h0M23.7 11.0h0M21.5 14.3h0M22.9 19.0h0M21.8 23.1h0M22.7 24.4h0M21.9 29.0h0M24.0 32.5h0M23.3 37.4h0M22.6 39.7h0M21.3 42.7h0M22.2 46.2h0M25.6 2.4h0M26.7 4.2h0M24.5 8.8h0M28.2 12.0h0M25.7 16.5h0M28.1 20.0h0M26.6 22.9h0M27.8 25.1h0M25.5 29.4h0M27.6 32.9h0M25.2 36.7h0M27.0 39.8h0M27.0 42.3h0M27.4 47.3h0M28.1 1.3h0M29.0 6.3h0M30.2 7.9h0M31.5 13.2h0M30.5 14.0h0M29.3 18.0h0M28.9 21.6h0M30.8 26.1h0M30.4 28.5h0M29.0 31.7h0M29.5 37.4h0M30.1 38.5h0M30.6 43.9h0M30.6 45.1h0M32.5 0.5h0M32.5 5.2h0M32.2 9.5h0M33.8 10.8h0M31.2 14.3h0M33.2 19.6h0M32.9 22.5h0M34.6 24.6h0M34.0 27.9h0M32.8 32.6h0M32.4 36.7h0M32.7 38.3h0M32.8 42.4h0M35.0 46.2h0M35.1 1.2h0M37.7 6.2h0M35.0 7.3h0M37.2 13.0h0M36.3 14.7h0M37.4 18.6h0M36.2 21.8h0M36.9 26.2h0M37.1 28.0h0M36.1 32.0h0M36.3 37.4h0M35.8 38.1h0M36.0 42.0h0M35.6 46.6h0M38.5 2.4h0M40.8 5.1h0M40.2 8.3h0M39.3 10.7h0M40.5 15.3h0M40.5 19.0h0M40.1 21.1h0M39.6 25.9h0M40.1 30.2h0M39.3 33.3h0M40.8 35.7h0M39.9 40.1h0M38.3 41.7h0M40.8 45.0h0M42.1 2.7h0M43.5 6.2h0M41.5 7.5h0M42.5 10.7h0M42.3 14.2h0M44.2 18.8h0M43.1 21.9h0M43.1 25.4h0M41.7 28.5h0M42.6 33.8h0M43.0 35.9h0M43.1 40.1h0M43.9 41.5h0M44.7 44.9h0M46.1 1.9h0M47.0 5.9h0M47.7 9.2h0M46.5 12.2h0M46.5 16.1h0M46.9 18.7h0M47.6 20.9h0M0.6 25.1h0M47.3 28.9h0M47.6 31.5h0M44.9 36.1h0M46.7 38.7h0M45.1 41.6h0M47.1 44.9h0" stroke="#1c1c2a" stroke-width="1.0" stroke-linecap="round"/></pattern><pattern id="p8" patternUnits="userSpaceOnUse" width="48" height="48"><rect width="48" height="48" fill="#ebb161"/><path d="M25.2 35.0L26.9 36.4M25.2 35.0L25.2 32.2M28.0 32.3L28.7 35.3M28.0 32.3L26.0 31.6M26.9 36.4L28.7 35.3M25.2 32.2L26.0 31.6M28.0 32.3L29.8 31.5M26.1 29.9L26.0 31.6M26.1 29.9L28.7 27.7M29.8 31.5L30.5 28.9M30.5 28.9L28.7 27.7M7.0 45.1L3.2 46.0M7.0 45.1L7.6 44.5M5.3 42.3L3.1 46.0M5.3 42.3L6.1 42.5M3.2 46.0L3.1 46.0M6.1 42.5L7.6 44.5M5.3 42.3L3.6 41.0M3.6 41.0L3.8 39.4M3.8 39.4L7.1 38.9M6.1 42.5L7.6 40.5M7.1 38.9L7.6 40.5M1.2 35.6L2.8 35.2M1.2 35.6L1.5 38.1M1.5 38.1L3.1 38.3M3.1 38.3L4.0 36.2M4.0 36.2L2.8 35.2M1.2 35.6L-0.5 34.7M0.2 38.5L1.5 38.1M0.2 38.5L-1.8 36.9M-0.5 34.7L-1.8 36.9M0.2 38.5L-0.4 41.8M3.6 41.0L0.7 42.8M3.8 39.4L3.1 38.3M0.7 42.8L-0.4 41.8M-2.3 41.6L-0.4 41.8M38.6 44.5L38.0 44.6M38.6 44.5L40.8 42.3M38.0 44.6L37.1 43.8M37.1 43.8L37.0 43.0M37.0 43.0L38.7 41.0M38.7 41.0L40.8 42.3M42.3 44.9L41.1 45.8M42.3 44.9L41.9 42.5M41.1 45.8L38.6 44.5M40.8 42.3L41.9 42.5M30.5 28.9L32.7 28.4M28.7 27.7L28.5 27.2M28.5 27.2L30.3 25.0M32.7 28.4L32.5 24.9M30.3 25.0L32.5 24.9M-0.5 34.7L-0.6 32.7M-2.2 32.3L-0.6 32.7M26.1 29.9L24.8 28.5M25.2 32.2L24.3 32.1M24.3 32.1L21.2 29.3M21.2 29.3L21.6 29.0M24.8 28.5L21.6 29.0M7.1 38.9L7.6 37.9M4.0 36.2L5.4 35.5M7.6 37.9L5.4 35.5M23.1 42.4L19.0 40.5M23.1 42.4L23.0 43.9M23.0 43.9L22.7 44.3M22.7 44.3L20.9 44.2M19.0 40.5L18.6 41.0M20.9 44.2L18.6 41.0M3.1 46.0L1.2 44.6M0.7 42.8L0.9 44.2M1.2 44.6L0.9 44.2M0.9 44.2L-3.0 46.1M34.6 41.5L33.4 42.0M34.6 41.5L37.0 43.0M37.1 43.8L35.6 44.8M33.1 43.9L35.6 44.8M33.1 43.9L33.2 42.4M33.2 42.4L33.4 42.0M24.9 40.9L25.8 38.9M24.9 40.9L25.8 41.6M25.8 41.6L29.1 41.4M25.8 38.9L26.7 38.4M26.7 38.4L29.1 39.8M29.1 39.8L29.1 41.4M23.7 41.5L21.6 38.4M23.7 41.5L24.9 40.9M21.6 38.4L23.0 37.6M23.0 37.6L25.8 38.9M23.1 42.4L23.7 41.5M25.2 44.2L23.0 43.9M25.2 44.2L26.5 43.6M26.5 43.6L25.8 41.6M26.5 43.6L28.5 44.1M28.5 44.1L29.2 41.6M29.2 41.6L29.1 41.4M25.2 35.0L23.4 35.9M26.9 36.4L26.7 38.4M23.4 35.9L23.0 37.6M41.1 45.8L40.2 47.7M40.2 47.7L39.6 47.7M38.0 44.6L37.8 46.8M39.6 47.7L37.8 46.8M42.3 44.9L44.5 46.0M40.2 47.7L42.2 50.0M44.5 46.0L42.2 50.0M41.9 42.5L42.1 42.3M42.1 42.3L44.7 41.1M44.5 46.0L44.6 46.0M44.6 46.0L45.7 41.6M44.7 41.1L45.7 41.6M41.2 37.9L42.1 42.3M41.2 37.9L42.2 37.2M44.7 41.1L44.4 38.0M42.2 37.2L44.4 38.0M41.2 37.9L40.5 38.0M38.7 41.0L38.4 39.8M40.5 38.0L38.4 39.8M36.0 38.9L34.6 41.5M36.0 38.9L36.1 38.9M38.4 39.8L36.1 38.9M40.5 38.0L37.5 35.2M36.1 38.9L37.1 35.2M37.1 35.2L37.3 35.1M37.5 35.2L37.3 35.1M34.1 31.4L37.3 30.9M34.1 31.4L33.2 28.6M33.2 28.6L36.0 27.6M37.3 30.9L36.8 28.0M36.0 27.6L36.8 28.0M35.8 34.8L33.7 32.4M35.8 34.8L37.1 35.2M33.7 32.4L34.1 31.4M37.3 35.1L38.1 31.4M38.1 31.4L37.3 30.9M29.8 31.5L32.1 33.2M32.1 33.2L33.7 32.4M32.7 28.4L33.2 28.6M36.0 25.2L32.6 24.7M36.0 25.2L36.0 27.6M32.5 24.9L32.6 24.7M32.8 22.4L32.6 24.7M32.8 22.4L31.2 21.6M30.3 25.0L29.0 23.4M31.2 21.6L29.0 23.4M2.8 35.2L2.1 31.8M-0.6 32.7L1.2 31.5M2.1 31.8L1.2 31.5M24.8 28.5L24.8 25.7M21.6 29.0L23.3 25.3M23.3 25.3L24.8 25.7M28.5 27.2L26.3 25.1M24.8 25.7L26.3 25.1M28.9 23.3L29.0 23.4M28.9 23.3L26.8 23.7M26.3 25.1L26.8 23.7M0.4 51.0L-0.3 48.5M-1.7 48.2L-0.6 48.3M-0.3 48.5L-0.6 48.3M2.5 50.5L2.0 48.2M2.0 48.2L-0.3 48.5M1.2 44.6L-0.6 48.3M3.2 46.0L3.2 46.1M3.2 46.1L2.0 48.2M19.0 40.5L19.3 39.6M21.6 38.4L20.0 38.5M19.3 39.6L20.0 38.5M24.3 32.1L22.5 33.1M20.8 29.3L21.2 29.3M20.8 29.3L20.6 33.1M22.5 33.1L20.6 33.1M23.4 35.9L22.8 35.5M22.5 33.1L22.8 35.5M7.0 45.1L6.9 48.7M3.2 46.1L6.3 49.5M6.9 48.7L6.3 49.5M20.9 44.2L19.2 45.4M18.6 41.0L17.2 41.7M17.2 41.7L17.5 44.1M19.2 45.4L17.5 44.1M22.7 44.3L23.0 47.8M23.0 47.8L22.9 47.8M22.9 47.8L19.2 47.1M19.2 45.4L19.2 47.1M17.2 41.7L16.2 41.6M14.0 42.6L16.2 41.6M14.0 42.6L13.7 43.3M13.7 43.3L16.2 45.5M17.5 44.1L16.2 45.5M39.6 47.7L37.2 51.2M37.8 46.8L35.9 47.6M36.2 50.9L35.9 47.6M35.6 44.8L35.6 47.3M35.6 47.3L35.9 47.6M30.0 39.1L31.8 38.7M30.0 39.1L29.4 35.4M31.8 38.7L32.7 37.5M29.4 35.4L31.4 35.1M31.4 35.1L32.7 36.8M32.7 36.8L32.7 37.5M29.2 41.6L33.2 42.4M33.4 42.0L31.8 38.7M29.1 39.8L30.0 39.1M28.7 35.3L29.4 35.4M36.0 38.9L32.7 37.5M32.1 33.2L31.4 35.1M35.8 34.8L32.7 36.8M51.2 27.6L48.9 29.5M48.9 29.5L49.2 31.5M44.6 27.2L44.9 27.8M44.6 27.2L45.9 23.5M44.9 27.8L47.5 27.9M47.5 27.9L48.3 26.0M48.3 26.0L48.1 24.7M45.9 23.5L48.1 24.7M48.9 29.5L47.5 27.9M51.6 26.5L48.3 26.0M45.8 32.3L43.9 33.9M45.8 32.3L47.4 32.7M43.9 33.9L46.0 37.0M47.4 32.7L47.5 34.7M47.5 34.7L46.2 36.9M46.2 36.9L46.0 37.0M49.2 31.5L47.4 32.7M45.1 31.4L45.8 32.3M45.1 31.4L44.7 28.4M44.7 28.4L44.9 27.8M42.2 37.2L42.0 34.5M42.0 34.5L43.9 33.9M44.4 38.0L46.0 37.0M49.2 35.6L47.5 34.7M49.5 38.1L48.2 38.5M48.2 38.5L46.2 36.9M47.6 41.8L45.7 41.6M47.6 41.8L48.2 38.5M41.5 34.0L43.0 31.4M41.5 34.0L41.5 34.0M41.5 34.0L39.7 31.0M43.0 31.4L41.6 29.9M41.6 29.9L40.3 30.2M40.3 30.2L39.7 31.0M45.1 31.4L43.0 31.4M42.0 34.5L41.5 34.0M37.5 35.2L41.5 34.0M38.1 31.4L39.7 31.0M41.9 29.7L44.7 28.4M41.9 29.7L41.6 29.9M39.4 27.2L40.3 30.2M39.4 27.2L36.8 28.0M50.8 22.4L48.3 21.1M51.1 22.8L48.1 24.7M45.9 23.5L45.5 22.6M45.5 22.6L48.3 21.1M50.0 18.1L48.3 19.8M48.3 19.8L48.3 21.1M32.6 -0.9L32.2 -2.7M32.6 -0.9L35.6 -0.7M35.6 -3.2L35.6 -0.7M6.0 33.8L5.4 35.5M6.0 33.8L5.6 32.4M2.1 31.8L4.1 31.7M5.6 32.4L4.1 31.7M10.1 28.4L10.4 25.6M10.1 28.4L13.2 27.8M13.2 27.8L13.0 25.5M13.0 25.5L10.8 25.3M10.8 25.3L10.4 25.6M14.1 16.6L16.2 16.5M14.1 16.6L13.3 19.7M16.4 19.4L16.2 16.5M16.4 19.4L15.6 19.9M15.6 19.9L13.3 19.7M26.6 13.2L26.5 13.2M26.6 13.2L30.1 11.4M30.1 11.4L30.4 12.4M26.5 13.2L27.3 16.1M27.3 16.1L28.7 16.0M28.7 16.0L30.4 12.4M26.6 13.2L25.8 9.6M30.1 11.4L30.4 9.9M25.8 9.6L28.7 8.7M30.4 9.9L28.7 8.7M0.1 8.9L-2.9 10.4M0.1 8.9L-0.7 7.0M-0.7 7.0L-2.9 7.4M1.1 9.7L0.4 12.8M1.1 9.7L0.1 8.9M-3.1 12.5L0.4 12.8M9.8 28.7L10.7 30.8M9.8 28.7L10.1 28.4M13.7 31.0L13.3 31.3M13.7 31.0L14.4 28.8M14.4 28.8L13.2 27.8M13.3 31.3L10.7 30.8M9.8 28.7L7.9 28.6M7.9 28.6L6.8 31.5M6.8 31.5L9.8 32.1M9.8 32.1L10.7 30.8M6.0 33.8L9.9 34.6M6.8 31.5L5.6 32.4M9.8 32.1L9.9 34.6M13.3 31.3L13.3 34.6M9.9 34.6L10.2 35.0M13.3 34.6L10.2 35.0M7.6 37.9L9.5 37.1M9.5 37.1L10.2 35.0M18.9 35.7L16.7 35.1M18.9 35.7L19.7 34.9M20.3 33.4L19.7 34.9M20.3 33.4L17.6 31.3M16.7 35.1L16.8 32.1M17.6 31.3L16.8 32.1M20.0 38.5L18.9 35.7M22.8 35.5L19.7 34.9M20.6 33.1L20.3 33.4M19.2 47.1L17.7 48.4M16.2 45.5L15.8 47.5M17.7 48.4L16.4 48.2M16.4 48.2L15.8 47.5M22.9 47.8L20.9 50.8M17.7 48.4L18.7 50.1M25.2 44.2L26.3 48.1M23.0 47.8L25.4 48.7M25.4 48.7L26.3 48.1M25.4 48.7L25.5 49.8M48.7 42.8L47.6 41.8M48.7 42.8L51.6 41.0M48.7 42.8L48.9 44.2M44.6 46.0L45.0 46.1M45.0 46.1L48.9 44.2M48.9 44.2L49.2 44.6M45.0 46.1L46.3 48.2M44.7 51.1L46.3 48.2M49.2 44.6L47.4 48.3M46.3 48.2L47.4 48.3M47.3 7.0L47.3 7.0M47.3 7.0L48.1 8.9M47.3 7.0L49.7 4.8M48.1 8.9L49.1 9.7M42.2 2.0L44.5 -2.0M42.2 2.0L42.5 3.1M44.7 3.1L42.8 3.3M44.7 3.1L46.3 0.2M46.3 0.2L45.0 -1.9M42.5 3.1L42.8 3.3M40.5 16.3L43.3 16.9M40.5 16.3L39.9 19.0M41.7 20.7L39.9 19.0M41.7 20.7L43.9 18.4M43.9 18.4L43.3 16.9M45.5 22.6L45.4 22.5M45.4 22.5L45.5 19.2M48.3 19.8L46.3 18.6M46.3 18.6L45.5 19.2M49.8 17.4L47.2 16.5M46.3 18.6L47.2 16.5M48.5 13.0L47.0 16.2M48.5 13.0L48.4 12.8M48.4 12.8L44.9 12.5M47.0 16.2L44.8 15.5M44.8 15.5L44.2 13.0M44.2 13.0L44.9 12.5M51.4 14.5L48.5 13.0M47.2 16.5L47.0 16.2M49.1 9.7L48.4 12.8M48.1 8.9L45.1 10.4M45.1 10.4L44.9 12.5M43.9 18.4L45.5 19.2M43.3 16.9L44.8 15.5M42.2 12.7L44.2 13.0M42.2 12.7L40.4 16.3M40.4 16.3L40.5 16.3M45.4 22.5L42.5 22.5M41.7 20.7L42.2 22.3M42.5 22.5L42.2 22.3M44.6 27.2L42.1 26.1M42.5 22.5L42.1 26.1M41.9 29.7L41.8 26.2M39.4 27.2L39.7 26.6M39.7 26.6L41.8 26.2M42.1 26.1L41.8 26.2M36.0 25.2L36.6 24.6M39.7 26.6L38.9 25.1M36.6 24.6L38.9 25.1M42.2 22.3L39.8 23.1M38.9 25.1L39.8 23.1M38.9 19.5L38.5 22.1M38.9 19.5L36.9 19.2M36.9 19.2L35.0 20.3M38.5 22.1L36.3 22.6M36.3 22.6L34.9 21.1M34.9 21.1L35.0 20.3M39.9 19.0L38.9 19.5M39.8 23.1L38.5 22.1M38.5 15.4L36.8 16.1M38.5 15.4L40.4 16.3M36.8 16.1L36.9 19.2M36.6 24.6L36.3 22.6M32.8 22.4L34.9 21.1M37.8 -1.2L39.6 -0.3M41.1 -2.2L40.2 -0.3M40.2 -0.3L39.6 -0.3M35.6 -0.7L35.9 -0.4M35.9 -0.4L37.8 -1.2M37.2 3.2L36.4 3.0M37.2 3.2L39.6 -0.3M36.2 2.9L36.4 3.0M36.2 2.9L35.9 -0.4M42.2 2.0L40.2 -0.3M37.2 3.2L38.3 3.9M38.3 3.9L42.5 3.1M16.1 28.2L16.2 25.4M16.1 28.2L18.2 29.2M16.2 25.4L18.9 25.1M19.6 28.8L19.8 25.9M19.6 28.8L18.2 29.2M19.8 25.9L18.9 25.1M13.7 31.0L16.8 32.1M14.4 28.8L16.1 28.2M17.6 31.3L18.2 29.2M20.8 29.3L19.6 28.8M23.3 25.3L22.6 24.7M22.6 24.7L19.8 25.9M1.7 9.6L4.0 10.8M1.7 9.6L3.7 7.5M4.0 10.8L6.9 9.8M6.9 9.8L6.3 8.0M3.7 7.5L6.3 8.0M10.8 25.3L10.9 22.3M10.4 25.6L8.3 24.7M10.9 22.3L9.9 22.3M9.9 22.3L8.0 23.4M8.3 24.7L8.0 23.4M-3.2 15.5L-1.0 16.2M-1.7 18.6L-0.8 16.5M-0.8 16.5L-1.0 16.2M0.5 13.0L-1.0 16.2M0.5 13.0L0.4 12.8M-2.5 22.6L0.3 21.1M0.3 21.1L0.3 19.8M0.3 19.8L-1.7 18.6M2.0 18.1L1.8 17.4M2.0 18.1L0.3 19.8M1.8 17.4L-0.8 16.5M10.9 22.3L12.3 21.6M9.9 22.3L8.7 20.0M12.3 21.6L12.6 20.1M12.6 20.1L11.0 18.8M8.7 20.0L11.0 18.8M12.9 15.5L14.1 16.6M12.9 15.5L10.0 15.7M13.3 19.7L12.6 20.1M11.0 18.8L10.0 15.7M2.0 18.1L3.2 18.9M0.3 21.1L2.8 22.4M3.2 18.9L2.8 22.4M8.0 23.4L6.1 22.4M8.7 20.0L6.8 19.6M6.1 22.4L6.8 19.6M4.0 10.8L4.2 13.6M7.7 12.1L6.0 13.1M7.7 12.1L7.6 10.5M7.6 10.5L6.9 9.8M6.0 13.1L4.2 13.6M1.7 9.6L1.1 9.7M0.5 13.0L3.4 14.5M4.2 13.6L3.4 14.5M1.8 17.4L3.4 14.5M3.4 14.5L3.4 14.5M21.8 22.5L22.4 23.5M21.8 22.5L22.4 20.5M22.4 23.5L26.0 21.9M22.4 20.5L24.0 20.1M24.0 20.1L26.0 21.1M26.0 21.1L26.0 21.9M22.6 24.7L22.4 23.5M19.0 22.5L18.9 25.1M19.0 22.5L21.8 22.5M18.7 22.2L19.0 22.5M18.7 22.2L18.6 19.9M18.6 19.9L20.3 18.2M20.3 18.2L22.4 20.5M26.8 23.7L26.0 21.9M27.3 20.0L27.1 16.3M27.3 20.0L26.0 21.1M27.1 16.3L24.6 16.6M24.6 16.6L24.0 20.1M27.3 20.0L28.6 20.3M28.6 20.3L28.9 23.3M17.7 22.4L15.6 24.7M17.7 22.4L15.9 21.7M15.9 21.7L14.1 23.8M15.6 24.7L14.2 24.1M14.2 24.1L14.1 23.8M18.7 22.2L17.7 22.4M16.2 25.4L15.6 24.7M18.6 19.9L16.4 19.4M15.6 19.9L15.9 21.7M12.3 21.6L14.1 23.8M13.0 25.5L14.2 24.1M23.7 16.3L23.3 13.1M23.7 16.3L20.4 17.1M20.4 13.0L19.3 14.0M20.4 13.0L22.8 12.6M22.8 12.6L23.3 13.1M20.4 17.1L19.2 15.5M19.2 15.5L19.3 14.0M26.5 13.2L23.3 13.1M27.1 16.3L27.3 16.1M24.6 16.6L23.7 16.3M20.3 18.2L20.4 17.1M16.4 16.3L16.2 16.5M16.4 16.3L19.2 15.5M17.8 12.6L17.1 10.5M17.8 12.6L15.1 13.5M17.1 10.5L15.1 9.7M15.1 13.5L14.1 13.2M14.4 10.1L14.0 13.0M14.4 10.1L15.1 9.7M14.0 13.0L14.1 13.2M20.2 8.9L20.4 13.0M20.2 8.9L19.7 8.7M19.7 8.7L17.1 10.5M19.3 14.0L17.8 12.6M16.4 16.3L15.1 13.5M12.9 15.5L14.1 13.2M9.5 14.2L9.7 15.5M9.5 14.2L11.2 12.5M11.2 12.5L14.0 13.0M9.7 15.5L10.0 15.7M35.1 15.6L33.2 16.1M35.1 15.6L35.7 13.3M32.7 14.1L33.2 16.1M32.7 14.1L33.9 12.2M33.9 12.2L35.7 13.3M38.5 15.4L38.0 12.2M36.8 16.1L35.1 15.6M38.0 12.2L37.4 12.1M37.4 12.1L35.7 13.3M33.3 17.8L32.9 16.5M33.3 17.8L30.7 20.7M32.9 16.5L30.3 16.7M30.3 16.7L29.9 20.2M30.7 20.7L29.9 20.2M33.2 16.1L32.9 16.5M35.0 20.3L33.3 17.8M31.2 21.6L30.7 20.7M28.7 16.0L30.3 16.7M30.4 12.4L32.7 14.1M28.6 20.3L29.9 20.2M33.3 6.2L30.5 9.9M33.3 6.2L35.3 8.9M30.5 9.9L33.8 10.5M33.8 10.5L34.9 9.9M35.3 8.9L34.9 9.9M30.4 9.9L30.5 9.9M33.9 12.2L33.8 10.5M37.4 12.1L34.9 9.9M33.0 5.1L28.7 6.4M33.0 5.1L33.3 3.7M32.9 3.3L30.0 3.0M32.9 3.3L33.3 3.7M30.0 3.0L28.5 6.1M28.5 6.1L28.7 6.4M28.7 8.7L28.7 6.4M33.3 6.2L33.0 5.1M33.3 6.2L33.3 6.2M36.0 6.2L36.4 3.0M36.0 6.2L33.3 6.2M36.2 2.9L33.3 3.7M32.6 -0.9L32.3 -0.5M32.3 -0.5L32.9 3.3M3.7 7.5L3.2 5.7M6.3 8.0L7.1 6.6M7.1 6.6L6.0 4.1M3.2 5.7L6.0 4.1M-0.7 7.0L-0.7 7.0M-0.7 7.0L-2.6 3.5M3.2 5.7L1.7 4.8M-0.7 7.0L1.7 4.8M25.4 0.7L26.3 0.1M25.4 0.7L25.5 1.8M26.5 3.4L25.5 1.8M26.5 3.4L29.7 2.7M26.3 0.1L27.6 -0.4M27.6 -0.4L28.9 0.3M28.9 0.3L29.7 2.7M25.2 -3.8L26.3 0.1M23.0 -0.2L25.4 0.7M23.0 -0.2L22.7 -3.7M23.0 -0.2L22.9 -0.2M22.9 -0.2L20.9 2.8M20.9 2.8L21.1 3.5M21.1 3.5L23.6 3.9M23.6 3.9L25.5 1.8M26.9 5.0L26.5 3.4M26.9 5.0L28.5 6.1M30.0 3.0L29.7 2.7M28.7 -3.5L27.6 -0.4M32.3 -0.5L28.9 0.3M18.8 6.5L16.9 5.6M18.8 6.5L20.8 5.1M20.9 2.8L18.7 2.1M20.8 5.1L21.1 3.5M16.9 5.6L18.7 2.1M18.8 6.5L19.7 8.7M15.5 6.4L16.9 5.6M15.5 6.4L15.1 9.7M16.9 5.6L16.9 5.6M22.7 6.5L23.9 5.6M22.7 6.5L22.6 8.8M22.6 8.8L23.7 9.7M25.2 5.9L23.9 5.6M25.2 5.9L25.4 9.5M23.7 9.7L25.4 9.5M20.8 5.1L22.7 6.5M23.6 3.9L23.9 5.6M20.2 8.9L22.6 8.8M22.8 12.6L23.7 9.7M26.9 5.0L25.2 5.9M25.8 9.6L25.4 9.5M15.0 38.8L12.8 38.6M15.0 38.8L15.6 37.7M12.8 38.6L13.5 34.8M15.6 37.7L16.1 35.4M16.1 35.4L13.5 34.8M16.2 41.6L15.0 38.8M19.3 39.6L15.6 37.7M16.7 35.1L16.1 35.4M13.3 34.6L13.5 34.8M10.7 38.4L12.7 38.7M10.7 38.4L10.0 41.5M12.7 38.7L12.7 41.5M12.7 41.5L10.0 41.5M10.0 41.5L10.0 41.5M9.5 37.1L10.7 38.4M12.8 38.6L12.7 38.7M7.6 40.5L10.0 41.5M14.0 42.6L12.7 41.5M7.6 44.5L9.4 44.5M9.4 44.5L10.0 41.5M13.7 43.3L12.6 44.9M15.8 47.5L13.4 47.0M13.4 47.0L12.6 44.9M9.4 44.5L9.5 44.6M12.6 44.9L9.5 44.6M6.9 48.7L9.6 47.3M9.5 44.6L9.6 47.3M16.4 48.2L15.2 50.2M33.1 43.9L32.2 45.3M35.6 47.3L32.6 47.1M32.2 45.3L32.6 47.1M28.5 44.1L28.7 44.5M32.2 45.3L28.7 44.5M26.3 48.1L27.6 47.6M28.7 44.5L27.6 47.6M32.9 51.3L32.3 47.5M32.3 47.5L28.9 48.3M28.9 48.3L29.7 50.7M32.6 47.1L32.3 47.5M27.6 47.6L28.9 48.3M48.4 3.0L49.6 3.5M48.4 3.0L47.7 0.5M47.7 0.5L50.0 0.2M45.4 3.5L47.3 7.0M45.4 3.5L48.4 3.0M44.7 3.1L45.4 3.5M46.3 0.2L47.4 0.3M47.4 0.3L47.7 0.5M47.3 7.0L45.1 7.4M42.8 3.3L42.5 6.4M42.5 6.4L45.1 7.4M45.1 10.4L44.4 9.7M44.4 9.7L45.1 7.4M42.2 12.7L41.7 12.0M44.4 9.7L41.8 9.2M41.7 12.0L41.8 9.2M38.0 12.2L38.2 12.0M41.7 12.0L38.2 12.0M38.4 6.5L41.9 7.3M38.4 6.5L37.4 7.7M37.4 7.7L37.4 7.9M37.4 7.9L38.7 9.5M38.7 9.5L41.7 9.0M41.9 7.3L41.7 9.0M38.3 3.9L38.4 6.5M42.5 6.4L41.9 7.3M36.0 6.2L37.4 7.7M35.3 8.9L37.4 7.9M38.2 12.0L38.7 9.5M41.8 9.2L41.7 9.0M47.4 0.3L49.2 -3.4M1.2 31.5L0.9 29.5M-3.1 27.8L-0.5 27.9M0.9 29.5L-0.5 27.9M7.9 28.6L7.0 27.7M4.1 31.7L4.6 29.5M4.6 29.5L7.0 27.7M0.9 29.5L3.2 27.6M4.6 29.5L3.2 27.6M8.3 24.7L6.7 27.1M7.0 27.7L6.7 27.1M5.3 18.5L6.5 18.9M5.3 18.5L4.4 15.4M6.5 18.9L8.2 16.4M4.4 15.4L6.6 15.6M8.2 16.4L6.6 15.6M3.2 18.9L5.3 18.5M3.4 14.5L4.4 15.4M9.7 15.5L8.2 16.4M6.8 19.6L6.5 18.9M6.0 13.1L6.6 15.6M9.5 14.2L7.7 12.1M3.1 22.8L4.0 23.3M3.1 22.8L0.1 24.7M4.0 23.3L4.3 25.8M0.1 24.7L0.3 26.0M0.3 26.0L3.6 26.5M4.3 25.8L3.6 26.5M6.1 22.4L4.0 23.3M2.8 22.4L3.1 22.8M-2.1 23.5L0.1 24.7M6.7 27.1L4.3 25.8M-0.5 27.9L0.3 26.0M3.2 27.6L3.6 26.5M2.0 0.2L-0.3 0.5M2.0 0.2L2.5 2.5M-0.3 0.5L0.4 3.0M2.5 2.5L1.6 3.5M0.4 3.0L1.6 3.5M6.2 2.3L6.0 4.1M6.2 2.3L2.5 2.5M1.7 4.8L1.6 3.5M-2.6 3.5L0.4 3.0M10.0 6.1L10.3 9.3M10.0 6.1L10.1 6.0M10.1 6.0L12.5 7.1M12.5 7.1L12.3 9.7M10.3 9.3L11.5 9.9M11.5 9.9L12.3 9.7M7.6 10.5L10.3 9.3M7.1 6.6L10.0 6.1M14.9 6.1L12.1 3.4M14.9 6.1L12.5 7.1M10.8 3.9L12.1 3.4M10.8 3.9L10.1 6.0M15.5 6.4L14.9 6.1M14.4 10.1L12.3 9.7M11.2 12.5L11.5 9.9M6.2 2.3L6.3 2.3M10.8 3.9L9.4 3.0M9.4 3.0L6.3 2.3M3.2 -1.9L6.3 1.5M7.0 -2.9L6.9 0.7M6.9 0.7L6.3 1.5M3.2 -1.9L2.0 0.2M6.3 2.3L6.3 1.5M13.4 47.0L12.2 48.3M9.6 47.3L10.0 47.7M10.0 47.7L12.2 48.3M10.0 47.7L9.4 51.0M12.2 48.3L12.1 51.3M48.4 51.0L47.7 48.5M50.0 48.2L47.7 48.5M47.4 48.3L47.7 48.5M1.2 -3.4L-0.6 0.3M-1.7 0.2L-0.6 0.3M-0.3 0.5L-0.6 0.3M22.9 -0.2L19.2 -0.9M18.7 2.1L17.7 0.4M19.2 -0.9L17.7 0.4M19.2 -0.9L19.2 -2.6M16.9 5.6L15.2 2.2M17.7 0.4L16.4 0.2M15.2 2.2L16.4 0.2M12.1 3.4L12.1 3.3M15.2 2.2L12.1 3.3M16.4 0.2L15.8 -0.5M16.2 -2.5L15.8 -0.5M9.5 -3.4L9.6 -0.7M9.6 -0.7L10.0 -0.3M10.0 -0.3L12.2 0.3M12.6 -3.1L13.4 -1.0M12.2 0.3L13.4 -1.0M6.9 0.7L9.6 -0.7M9.4 3.0L10.0 -0.3M12.1 3.3L12.2 0.3M15.8 -0.5L13.4 -1.0" stroke="#9c7440" stroke-width="0.45" fill="none"/><path d="M0.9 1.4h0M3.7 4.0h0M1.9 6.9h0M2.9 12.0h0M1.0 15.5h0M3.9 17.1h0M1.7 20.1h0M2.0 25.3h0M1.6 27.2h0M3.3 29.2h0M1.6 34.6h0M2.0 36.3h0M1.6 40.0h0M3.6 43.2h0M0.7 47.3h0M3.5 0.9h0M5.0 6.1h0M4.3 9.3h0M5.2 11.8h0M5.9 14.6h0M5.7 16.5h0M4.5 20.5h0M6.5 24.8h0M4.7 28.2h0M5.8 29.8h0M3.6 34.2h0M5.3 37.7h0M5.8 40.6h0M5.3 44.2h0M5.9 46.7h0M9.0 0.9h0M8.1 4.7h0M8.7 8.0h0M10.1 11.5h0M6.7 14.4h0M9.0 18.6h0M8.4 21.4h0M10.0 24.0h0M8.9 26.4h0M8.6 30.9h0M8.2 32.9h0M7.7 35.5h0M9.2 39.6h0M8.0 42.2h0M8.0 46.8h0M10.5 1.1h0M12.5 6.1h0M11.7 7.7h0M12.6 11.8h0M12.2 13.6h0M12.5 17.5h0M10.0 20.5h0M11.8 24.1h0M11.6 26.7h0M12.1 29.3h0M11.4 32.7h0M12.0 36.9h0M11.6 40.2h0M11.6 42.9h0M11.1 46.7h0M14.0 1.3h0M14.8 3.8h0M13.2 7.9h0M15.7 12.2h0M14.9 14.9h0M15.1 18.2h0M14.8 21.6h0M16.2 22.8h0M14.5 26.5h0M16.0 30.6h0M15.2 32.8h0M14.1 37.3h0M13.8 40.2h0M15.7 44.2h0M14.9 45.2h0M16.7 2.8h0M19.2 4.1h0M17.4 8.3h0M19.2 11.0h0M16.4 14.2h0M17.5 18.0h0M16.9 21.2h0M17.5 23.9h0M17.8 26.6h0M19.4 31.6h0M18.4 32.9h0M17.2 37.9h0M16.7 38.9h0M19.2 43.8h0M17.6 45.8h0M20.3 0.9h0M22.6 4.9h0M21.2 6.9h0M21.4 10.9h0M22.1 14.7h0M23.1 18.4h0M20.4 21.0h0M20.4 24.0h0M21.6 26.8h0M22.0 31.7h0M22.0 34.4h0M21.7 36.2h0M21.8 40.7h0M21.0 42.5h0M20.8 45.9h0M23.0 2.6h0M24.9 4.4h0M24.2 7.1h0M24.9 12.1h0M24.8 14.3h0M25.5 18.9h0M23.8 22.0h0M24.5 23.4h0M23.3 27.5h0M23.7 29.9h0M23.3 34.2h0M24.8 36.9h0M23.6 39.4h0M25.2 42.8h0M24.8 45.6h0M28.1 2.4h0M28.4 3.7h0M26.2 6.9h0M27.6 11.5h0M28.5 13.3h0M28.9 18.7h0M28.2 21.9h0M28.7 24.9h0M26.3 27.5h0M28.4 30.1h0M27.0 34.2h0M28.9 37.3h0M26.8 40.8h0M26.9 42.2h0M26.3 45.2h0M30.8 1.4h0M30.5 4.7h0M31.2 6.8h0M32.5 12.3h0M30.8 14.4h0M31.2 18.9h0M29.3 21.8h0M30.6 23.5h0M30.7 26.5h0M31.8 30.9h0M29.9 33.5h0M30.5 37.1h0M31.4 40.7h0M30.9 43.3h0M30.1 46.5h0M34.3 0.9h0M35.5 5.6h0M33.3 8.4h0M35.3 12.1h0M34.4 13.5h0M35.6 17.7h0M32.3 19.9h0M34.8 23.8h0M34.4 26.2h0M35.7 29.6h0M33.6 34.8h0M34.9 36.7h0M33.7 39.6h0M35.3 43.5h0M34.6 45.6h0M37.8 0.6h0M36.6 5.7h0M35.5 6.8h0M37.1 10.0h0M36.6 14.1h0M38.0 17.6h0M37.6 21.0h0M38.1 23.4h0M37.5 26.2h0M38.4 29.1h0M36.2 32.7h0M38.2 37.6h0M36.7 41.2h0M38.8 43.1h0M36.6 45.6h0M39.4 1.7h0M40.2 5.5h0M39.5 8.1h0M40.0 10.5h0M39.9 13.5h0M42.2 18.5h0M39.6 21.4h0M40.6 24.5h0M41.3 28.2h0M41.9 31.7h0M39.3 33.3h0M40.0 35.7h0M40.6 40.2h0M40.0 44.3h0M39.2 45.7h0M44.4 0.4h0M45.0 5.9h0M44.0 8.5h0M43.6 10.7h0M42.9 15.0h0M45.2 17.4h0M43.9 20.1h0M43.9 24.9h0M42.4 28.2h0M43.3 30.3h0M43.3 32.5h0M44.2 35.5h0M42.7 39.8h0M44.3 43.6h0M42.4 47.2h0M47.2 1.9h0M47.6 4.4h0M45.5 8.9h0M46.5 11.0h0M46.3 14.3h0M48.0 18.5h0M47.0 20.2h0M0.3 22.8h0M46.6 25.9h0M46.5 29.8h0M45.3 34.7h0M0.6 36.5h0M46.4 39.4h0M46.0 44.0h0M47.3 46.7h0" stroke="#1e1a22" stroke-width="1.0" stroke-linecap="round"/></pattern><pattern id="p9" patternUnits="userSpaceOnUse" width="48" height="48"><rect width="48" height="48" fill="#f0eae2"/><path d="M-3.3 7.3L0.7 8.5M0.6 9.2L-3.0 12.0M0.6 9.2L0.7 8.5M5.2 3.4L5.8 5.6M5.2 3.4L0.8 4.5M5.8 5.6L3.2 7.9M0.8 4.5L1.2 7.9M1.2 7.9L3.2 7.9M5.3 3.3L7.6 2.3M5.3 3.3L5.2 3.4M7.6 2.3L9.6 4.2M9.6 4.2L9.3 7.3M9.3 7.3L8.7 7.5M8.7 7.5L5.8 5.6M3.9 0.4L1.2 0.5M3.9 0.4L5.3 3.3M1.2 0.5L0.1 3.8M0.1 3.8L0.8 4.5M6.1 11.1L6.8 11.0M6.1 11.1L3.2 7.9M6.8 11.0L8.7 7.5M0.7 8.5L1.2 7.9M-2.2 3.6L0.1 3.8M1.5 11.0L4.2 12.6M1.5 11.0L0.6 9.2M6.1 11.1L4.2 12.6M3.9 0.4L4.5 -0.7M7.6 2.3L8.8 0.4M4.5 -0.7L7.4 -1.2M8.8 0.4L7.4 -1.2M35.8 36.8L34.3 33.7M35.8 36.8L38.2 37.2M38.3 34.8L38.2 37.2M38.3 34.8L36.3 33.1M36.3 33.1L34.3 33.7M19.4 43.3L23.4 44.7M19.4 43.3L18.7 44.4M20.7 47.1L19.6 46.7M20.7 47.1L23.4 44.7M18.7 44.4L19.6 46.7M19.1 51.0L17.8 48.1M21.6 48.5L20.6 51.2M21.6 48.5L20.7 47.1M19.6 46.7L17.8 48.1M18.7 44.4L15.7 44.1M17.8 48.1L15.9 48.3M15.9 48.3L14.5 44.6M15.7 44.1L14.5 44.6M19.4 43.3L20.0 40.6M20.0 40.6L19.4 40.1M19.4 40.1L16.9 40.0M15.7 44.1L16.9 40.0M18.9 36.1L19.6 37.9M18.9 36.1L16.6 35.3M16.6 35.3L14.8 37.2M14.8 37.2L16.4 39.7M19.6 37.9L19.4 40.1M16.9 40.0L16.4 39.7M7.4 46.8L4.5 47.3M7.4 46.8L7.9 43.5M7.9 43.5L4.9 43.5M4.5 47.3L3.8 44.4M4.9 43.5L3.8 44.4M14.5 44.6L13.1 44.2M16.4 39.7L12.9 42.0M12.9 42.0L13.1 44.2M13.1 37.2L14.8 37.2M13.1 37.2L11.2 39.1M12.9 42.0L11.2 39.1M1.5 11.0L-0.3 14.4M-2.9 13.2L-0.3 14.4M3.8 14.5L4.5 15.7M3.8 14.5L0.0 14.8M4.5 15.7L4.1 17.7M4.1 17.7L0.9 18.0M0.0 14.8L-0.2 17.1M0.9 18.0L-0.2 17.1M4.2 12.6L3.8 14.5M-0.3 14.4L0.0 14.8M0.7 21.9L2.8 21.8M0.7 21.9L0.9 18.0M4.9 19.2L2.8 21.8M4.9 19.2L4.1 17.7M-2.8 18.3L-0.2 17.1M11.5 2.8L9.6 4.2M11.5 2.8L13.1 4.3M9.3 7.3L10.7 7.7M10.7 7.7L13.1 4.3M18.9 36.1L20.9 34.5M20.9 34.5L22.8 34.9M22.0 36.9L19.6 37.9M22.0 36.9L23.0 35.3M23.0 35.3L22.8 34.9M19.2 10.5L20.2 11.3M19.2 10.5L18.1 7.3M21.9 7.6L22.3 11.2M21.9 7.6L19.5 6.8M20.2 11.3L22.3 11.2M19.5 6.8L18.1 7.3M18.7 16.2L17.8 15.2M18.7 16.2L23.6 14.8M17.8 15.2L20.2 11.3M22.9 11.5L22.3 11.2M22.9 11.5L23.7 14.7M23.7 14.7L23.6 14.8M11.5 2.8L11.3 0.7M8.8 0.4L10.9 0.2M11.3 0.7L10.9 0.2M47.2 36.5L47.4 40.3M47.2 36.5L51.5 37.7M47.4 40.3L49.2 40.6M43.5 36.9L44.4 40.3M43.5 36.9L44.9 35.9M44.4 40.3L46.7 40.8M46.7 40.8L47.4 40.3M47.0 36.1L44.9 35.9M47.0 36.1L47.2 36.5M31.8 34.8L31.7 35.0M31.8 34.8L28.9 32.8M28.9 32.8L27.3 34.2M27.1 35.5L27.3 34.2M27.1 35.5L29.9 36.3M29.9 36.3L31.7 35.0M35.8 36.8L33.3 38.5M31.8 34.8L33.4 33.5M34.3 33.7L33.4 33.5M31.7 35.0L33.3 38.5M22.0 36.9L22.5 40.0M25.6 37.3L23.0 35.3M25.6 37.3L25.7 38.4M25.7 38.4L22.5 40.0M23.4 44.7L24.5 44.2M20.0 40.6L21.9 40.6M24.5 44.2L21.9 40.6M22.5 40.0L21.9 40.6M41.9 36.8L40.4 37.7M41.9 36.8L40.9 32.6M38.3 34.8L40.9 32.6M38.2 37.2L38.5 37.7M38.5 37.7L40.4 37.7M43.5 36.9L41.9 36.8M44.4 40.3L42.2 41.8M40.4 37.7L42.2 41.8M29.0 30.2L28.9 32.8M29.0 30.2L31.2 29.1M33.4 33.5L32.7 29.9M32.7 29.9L31.2 29.1M43.3 25.4L41.9 25.2M43.3 25.4L45.0 21.3M41.9 25.2L40.8 23.1M40.8 23.1L41.7 21.3M41.7 21.3L44.9 21.2M44.9 21.2L45.0 21.3M45.9 27.1L45.2 27.2M45.9 27.1L47.6 24.9M47.6 24.9L47.6 22.6M47.6 22.6L45.0 21.3M45.2 27.2L43.3 25.4M45.2 18.3L47.8 17.1M45.2 18.3L44.9 21.2M48.7 21.9L47.6 22.6M48.7 21.9L48.9 18.0M48.9 18.0L47.8 17.1M44.5 34.1L45.4 31.8M44.5 34.1L40.9 32.5M45.4 31.8L43.1 29.8M40.9 31.1L40.9 32.5M40.9 31.1L42.5 29.9M42.5 29.9L43.1 29.8M40.9 32.6L40.9 32.5M44.9 35.9L44.5 34.1M45.2 27.2L43.1 29.8M40.8 26.6L41.9 25.2M40.8 26.6L42.5 29.9M23.4 -3.3L20.7 -0.9M19.6 -1.3L20.7 -0.9M30.0 19.3L30.0 14.5M30.0 19.3L29.8 19.6M26.5 15.6L27.0 19.1M26.5 15.6L27.3 15.0M29.8 19.6L27.0 19.1M30.0 14.5L27.3 15.0M7.4 46.8L8.8 48.4M4.5 47.3L3.9 48.4M3.9 48.4L5.3 51.3M8.8 48.4L7.6 50.3M7.9 43.5L8.1 43.4M8.1 43.4L11.9 44.8M11.9 44.8L10.9 48.2M8.8 48.4L10.9 48.2M4.2 39.5L7.2 39.5M4.2 39.5L4.9 43.5M8.1 43.4L8.5 40.2M7.2 39.5L8.5 40.2M11.2 39.1L10.6 39.2M11.9 44.8L13.1 44.2M8.5 40.2L10.6 39.2M1.2 0.5L0.6 -0.2M0.6 -0.2L-2.9 -0.6M1.1 -3.2L0.6 -0.2M14.9 8.4L11.6 8.4M14.9 8.4L15.5 11.4M11.6 8.4L11.6 12.5M11.6 12.5L15.2 12.3M15.5 11.4L15.2 12.3M16.6 6.8L14.9 8.4M16.6 6.8L18.1 7.3M19.2 10.5L15.5 11.4M6.8 11.0L8.2 12.4M10.7 7.7L11.6 8.4M8.2 12.4L11.4 12.6M11.4 12.6L11.6 12.5M11.4 12.6L11.5 15.0M11.5 15.0L14.5 16.5M14.5 16.5L16.6 15.0M16.6 15.0L15.2 12.3M16.6 15.0L17.8 15.2M7.6 15.4L8.7 18.0M7.6 15.4L7.7 15.2M7.7 15.2L11.5 15.1M8.7 18.0L10.3 17.7M10.3 17.7L11.5 15.1M7.4 19.9L4.9 19.2M7.4 19.9L8.7 18.0M4.5 15.7L7.6 15.4M8.2 12.4L7.7 15.2M11.5 15.0L11.5 15.1M4.5 -0.7L3.8 -3.6M14.5 16.5L14.3 17.1M18.7 16.2L19.3 18.9M19.3 18.9L18.6 19.7M18.6 19.7L15.6 20.1M15.6 20.1L14.3 17.1M10.3 17.7L11.9 18.9M11.9 18.9L14.3 17.1M25.6 37.3L27.1 35.5M22.8 34.9L23.2 34.1M27.3 34.2L25.5 32.8M25.5 32.8L23.2 34.1M18.7 21.5L18.6 19.7M18.7 21.5L19.3 22.7M19.3 18.9L22.4 19.5M19.3 22.7L22.7 22.4M22.7 22.4L22.4 19.5M26.5 15.6L23.7 14.7M23.6 14.8L22.5 19.4M27.0 19.1L26.7 19.4M26.7 19.4L22.5 19.4M22.4 19.5L22.5 19.4M30.5 23.1L26.3 22.5M30.5 23.1L28.4 25.6M28.4 25.6L26.6 25.7M26.6 25.7L26.2 22.6M26.2 22.6L26.3 22.5M29.8 19.6L31.8 22.4M31.8 22.4L30.5 23.1M26.7 19.4L26.3 22.5M32.5 22.7L33.1 23.5M32.5 22.7L31.8 22.4M33.1 23.5L33.1 23.9M33.1 23.9L31.2 28.3M31.2 28.3L28.4 25.6M22.9 22.8L22.7 22.4M22.9 22.8L26.2 22.6M29.9 36.3L29.6 39.4M33.3 38.5L32.9 39.8M32.9 39.8L31.5 40.1M29.6 39.4L31.5 40.1M25.7 38.4L27.2 39.9M29.6 39.4L27.2 39.9M38.5 37.7L38.1 38.9M42.2 41.8L42.2 41.9M42.2 41.9L38.5 39.9M38.1 38.9L38.5 39.9M32.9 39.8L34.6 41.5M38.1 38.9L34.6 41.5M32.5 45.2L34.8 42.3M32.5 45.2L29.9 44.5M31.5 40.1L29.9 44.5M34.6 41.5L34.8 42.3M30.3 49.4L33.0 47.3M33.0 47.3L35.1 51.1M38.5 39.9L38.8 43.4M34.8 42.3L37.2 43.7M38.8 43.4L37.2 43.7M42.2 41.9L41.6 43.9M38.8 43.4L41.6 43.9M32.5 45.2L33.1 46.9M33.1 46.9L36.7 46.7M37.2 43.7L36.7 46.7M46.7 40.8L46.5 43.9M46.5 43.9L44.6 45.4M44.6 45.4L41.6 44.0M41.6 43.9L41.6 44.0M33.0 47.3L33.1 46.9M36.2 51.0L37.8 48.2M36.7 46.7L37.8 48.2M44.5 50.5L44.7 48.4M44.7 48.4L39.9 48.0M41.3 51.3L39.9 48.0M39.9 48.0L39.9 48.0M44.6 45.4L45.1 47.4M45.1 47.4L44.7 48.4M41.6 44.0L39.9 48.0M37.8 48.2L39.9 48.0M35.9 27.1L34.9 29.2M35.9 27.1L38.0 26.5M38.4 26.8L38.0 26.5M38.4 26.8L39.2 30.4M34.9 29.2L37.4 30.9M39.2 30.4L37.4 30.9M33.1 23.9L35.9 27.1M32.7 29.9L34.9 29.2M31.2 29.1L31.2 28.3M33.1 23.5L37.6 23.3M37.6 23.3L38.2 23.7M38.2 23.7L38.0 26.5M40.8 26.6L38.4 26.8M38.2 23.7L40.8 23.1M40.9 31.1L39.2 30.4M36.3 33.1L37.4 30.9M17.8 0.1L19.1 3.0M17.8 0.1L15.9 0.3M15.4 1.0L15.9 0.3M15.4 1.0L15.5 4.2M19.1 3.0L16.1 4.8M15.5 4.2L16.1 4.8M19.6 -1.3L17.8 0.1M14.5 -3.4L15.9 0.3M13.1 4.3L15.5 4.2M11.3 0.7L15.4 1.0M16.6 6.8L16.1 4.8M20.7 -0.9L21.6 0.5M19.1 3.0L20.6 3.2M21.6 0.5L20.6 3.2M25.2 -3.6L25.0 1.0M21.6 0.5L25.0 1.0M19.5 6.8L21.0 3.7M21.0 3.7L20.6 3.2M48.9 18.0L52.1 17.7M47.8 17.1L48.0 14.8M51.8 14.5L48.0 14.8M-2.9 47.4L0.6 47.8M0.1 51.8L1.2 48.5M0.6 47.8L1.2 48.5M3.9 48.4L1.2 48.5M0.6 47.8L1.1 44.8M-1.5 43.9L1.1 44.8M3.8 44.4L2.4 44.1M2.4 44.1L1.1 44.8M22.6 24.7L18.7 26.5M22.6 24.7L22.9 22.8M19.3 22.7L18.6 26.4M18.6 26.4L18.7 26.5M7.4 19.9L8.1 21.5M11.9 18.9L12.1 20.9M12.1 20.9L8.1 21.5M3.0 22.0L7.8 23.4M3.0 22.0L4.3 25.6M4.3 25.6L8.0 24.4M8.0 24.4L7.8 23.4M2.8 21.8L3.0 22.0M8.1 21.5L7.8 23.4M0.7 21.9L-0.4 22.6M-0.4 22.6L-3.0 21.3M23.7 29.3L25.4 30.4M23.7 29.3L24.7 26.7M26.5 25.9L24.7 26.7M26.5 25.9L28.5 30.0M28.5 30.0L25.4 30.4M22.3 29.7L23.7 29.3M22.3 29.7L23.2 34.1M25.5 32.8L25.4 30.4M22.6 24.7L24.7 26.7M26.6 25.7L26.5 25.9M29.0 30.2L28.5 30.0M10.9 0.2L11.9 -3.2M47.0 36.1L49.2 32.9M45.4 31.8L48.3 31.7M49.2 32.9L48.3 31.7M48.7 21.9L50.8 21.8M11.3 48.7L11.5 50.8M11.3 48.7L15.4 49.0M15.5 52.2L15.4 49.0M10.9 48.2L11.3 48.7M15.9 48.3L15.4 49.0M28.7 44.7L26.7 43.8M28.7 44.7L28.8 48.7M28.8 48.7L25.8 50.0M25.2 44.4L26.7 43.8M25.2 44.4L25.0 49.0M27.2 39.9L26.7 43.8M29.9 44.5L28.7 44.7M30.3 49.4L28.8 48.7M24.5 44.2L25.2 44.4M21.6 48.5L25.0 49.0M33.6 16.6L32.6 15.3M33.6 16.6L33.7 16.7M33.7 16.7L36.7 13.3M32.6 15.3L35.2 11.2M35.2 11.2L36.6 12.4M36.6 12.4L36.7 13.3M30.0 19.3L33.6 16.6M30.0 14.5L30.2 14.4M30.2 14.4L32.6 15.3M32.5 22.7L35.5 18.4M35.5 18.4L33.7 16.7M30.2 14.4L30.4 12.8M30.4 12.8L33.4 9.9M35.1 11.0L33.4 9.9M35.1 11.0L35.2 11.2M39.0 16.1L38.1 16.4M39.0 16.1L41.6 18.0M38.1 16.4L36.6 18.4M41.6 18.0L40.9 20.2M40.9 20.2L37.4 19.3M37.4 19.3L36.6 18.4M40.0 12.0L40.8 14.2M40.0 12.0L36.6 12.4M40.8 14.2L39.0 16.1M36.7 13.3L38.1 16.4M43.6 16.8L43.4 15.0M43.6 16.8L41.6 18.0M40.8 14.2L43.4 15.0M35.5 18.4L36.6 18.4M45.2 18.3L43.6 16.8M41.7 21.3L40.9 20.2M37.6 23.3L37.4 19.3M30.4 12.8L28.8 10.8M27.3 15.0L26.9 10.4M28.8 10.8L26.9 10.4M22.9 11.5L26.1 9.8M26.1 9.8L26.9 10.4M23.2 4.5L25.5 3.5M23.2 4.5L22.7 6.9M25.5 3.5L26.6 7.7M22.7 6.9L26.2 8.3M26.2 8.3L26.6 7.7M25.0 1.0L25.8 2.0M21.0 3.7L23.2 4.5M25.8 2.0L25.6 3.4M25.6 3.4L25.5 3.5M21.9 7.6L22.7 6.9M26.1 9.8L26.2 8.3M7.2 39.5L7.0 36.6M10.6 39.2L8.6 35.6M7.0 36.6L8.6 35.6M45.9 27.1L47.7 29.1M48.3 31.7L48.4 31.3M47.7 29.1L48.4 31.3M47.7 29.1L51.4 27.0M48.4 31.3L51.9 28.2M47.6 24.9L51.4 26.7M25.8 2.0L28.8 0.7M28.8 0.7L28.7 -3.3M25.6 3.4L29.5 4.6M26.6 7.7L29.8 7.0M29.5 4.6L29.8 7.0M28.8 10.8L31.5 7.9M29.8 7.0L31.5 7.9M33.4 9.9L32.6 8.0M32.6 8.0L31.5 7.9M49.5 11.0L47.7 14.4M49.5 11.0L48.6 9.2M48.6 9.2L45.0 12.0M47.7 14.4L45.1 13.2M45.1 13.2L45.0 12.0M48.0 14.8L47.7 14.4M48.7 8.5L48.6 9.2M48.7 8.5L44.7 7.3M44.7 7.3L43.6 7.8M43.6 7.8L44.0 11.0M44.0 11.0L45.0 12.0M43.4 15.0L45.1 13.2M40.0 12.0L40.3 11.5M40.3 11.5L44.0 11.0M40.3 11.5L39.8 8.3M43.6 7.8L42.3 7.3M39.8 8.3L42.3 7.3M35.1 11.0L38.6 7.7M39.8 8.3L38.6 7.7M44.7 7.3L45.8 3.6M45.8 3.6L44.5 2.5M44.5 2.5L41.8 3.5M42.3 7.3L41.8 3.5M44.5 2.5L44.7 0.4M44.7 0.4L39.9 -0.0M39.9 -0.0L39.9 0.0M39.9 0.0L41.3 3.3M41.8 3.5L41.3 3.3M2.4 44.1L1.2 40.6M-1.3 40.8L-0.6 40.3M1.2 40.6L-0.6 40.3M4.2 39.5L3.7 39.2M1.2 40.6L3.7 39.2M13.1 37.2L11.3 33.6M8.6 35.6L9.1 33.9M9.1 33.9L11.0 33.6M11.3 33.6L11.0 33.6M10.0 25.7L13.2 21.8M10.0 25.7L11.4 26.7M11.4 26.7L14.3 26.9M15.2 23.6L14.1 22.0M15.2 23.6L15.8 25.8M15.8 25.8L14.3 26.9M14.1 22.0L13.2 21.8M12.1 20.9L13.2 21.8M9.0 25.5L8.0 24.4M9.0 25.5L10.0 25.7M6.9 29.9L10.4 30.1M6.9 29.9L9.0 25.5M10.4 30.1L11.1 29.3M11.1 29.3L11.4 26.7M18.7 21.5L15.2 23.6M15.6 20.1L14.1 22.0M18.6 26.4L15.8 25.8M14.5 29.7L14.0 31.2M14.5 29.7L19.8 29.5M16.4 33.1L14.1 31.8M16.4 33.1L19.3 30.9M14.1 31.8L14.0 31.2M19.3 30.9L19.9 29.5M19.9 29.5L19.8 29.5M11.1 29.3L14.0 31.2M14.3 26.9L14.5 29.7M18.7 26.5L19.8 29.5M16.6 35.3L16.4 33.1M11.3 33.6L14.1 31.8M20.9 34.5L19.3 30.9M10.4 30.1L11.0 33.6M22.3 29.7L19.9 29.5M6.9 29.9L6.7 30.0M9.1 33.9L6.8 32.3M6.7 30.0L6.8 32.3M49.1 44.8L48.6 47.8M49.2 48.5L48.6 47.8M46.5 43.9L49.1 44.8M45.1 47.4L48.6 47.8M48.1 51.8L49.2 48.5M32.6 8.0L33.1 7.2M38.6 7.7L38.0 6.7M33.1 7.2L38.0 6.7M37.8 0.2L39.9 0.0M37.8 0.2L36.2 3.0M41.3 3.3L37.9 4.7M36.2 3.0L37.9 4.7M38.0 6.7L37.9 4.7M30.3 1.4L33.0 -0.7M30.3 1.4L30.8 3.0M30.8 3.0L33.5 4.2M33.0 -0.7L35.1 3.1M35.1 3.1L33.5 4.2M28.8 0.7L30.3 1.4M33.1 -1.1L33.0 -0.7M29.5 4.6L30.8 3.0M33.1 7.2L33.5 4.2M36.7 -1.3L37.8 0.2M36.2 3.0L35.1 3.1M45.8 3.6L48.1 3.8M44.7 0.4L45.1 -0.6M45.1 -0.6L48.6 -0.2M48.6 -0.2L49.2 0.5M49.2 0.5L48.1 3.8M49.1 -3.2L48.6 -0.2M7.0 36.6L4.2 35.6M6.8 32.3L4.0 34.3M4.2 35.6L4.0 34.3M3.7 39.2L3.5 37.7M4.2 35.6L3.5 37.7M-0.6 40.3L-0.8 36.5M3.5 37.7L-0.8 36.5M53.2 3.4L48.8 4.5M48.8 4.5L49.2 7.9M48.1 3.8L48.8 4.5M48.7 8.5L49.2 7.9M39.9 -0.0L41.6 -4.0M45.1 -0.6L44.6 -2.6M-0.8 36.5L-1.0 36.1M3.4 26.7L3.4 27.0M3.4 26.7L-0.4 24.9M3.4 27.0L-0.3 29.1M-0.4 24.9L-2.1 27.1M-2.1 27.1L-0.3 29.1M-0.4 22.6L-0.4 24.9M4.3 25.6L3.4 26.7M4.9 29.2L1.6 33.0M4.9 29.2L3.9 28.2M3.9 28.2L0.4 31.3M1.6 33.0L1.2 32.9M1.2 32.9L0.3 31.7M0.4 31.3L0.3 31.7M6.7 30.0L4.9 29.2M4.0 34.3L1.6 33.0M3.4 27.0L3.9 28.2M-0.3 29.1L0.4 31.3M-1.0 36.1L1.2 32.9M0.3 31.7L-2.6 31.8" stroke="#9c948b" stroke-width="0.45" fill="none"/><path d="M2.4 2.5h0M3.2 5.5h0M3.3 10.2h0M1.8 13.0h0M2.0 16.3h0M2.3 19.5h0M2.4 24.2h0M1.7 29.0h0M2.8 30.3h0M1.7 36.0h0M1.1 38.1h0M3.2 42.0h0M2.4 46.4h0M6.4 0.5h0M8.0 4.3h0M5.5 8.2h0M6.3 13.9h0M6.6 17.1h0M5.2 21.9h0M4.8 23.3h0M6.0 27.1h0M4.1 31.4h0M6.8 35.1h0M5.9 37.5h0M5.9 41.5h0M5.9 45.5h0M9.7 2.6h0M11.1 4.6h0M9.8 10.6h0M9.5 14.4h0M9.5 15.9h0M10.3 19.6h0M10.8 22.6h0M9.6 28.8h0M9.4 31.2h0M10.2 36.3h0M8.3 37.4h0M10.6 42.1h0M9.2 46.0h0M13.3 2.3h0M13.4 6.2h0M13.4 10.6h0M13.5 14.2h0M12.1 17.1h0M13.7 19.3h0M12.9 24.4h0M12.7 29.2h0M11.6 30.8h0M14.0 34.4h0M14.0 40.1h0M15.1 41.7h0M13.5 47.3h0M17.6 2.2h0M19.0 4.7h0M17.1 9.9h0M17.7 12.0h0M16.4 18.1h0M16.8 21.8h0M17.5 23.1h0M16.2 28.9h0M16.3 30.4h0M18.9 34.0h0M17.7 37.7h0M17.5 42.4h0M17.1 46.1h0M19.5 1.3h0M21.4 5.9h0M20.5 8.7h0M20.7 13.9h0M21.6 17.1h0M20.7 21.5h0M20.9 23.8h0M22.3 26.7h0M21.8 32.7h0M20.9 36.6h0M21.5 37.9h0M21.5 43.3h0M21.1 44.6h0M22.7 2.4h0M24.3 6.4h0M23.5 8.4h0M25.9 12.6h0M24.4 17.7h0M24.4 21.1h0M24.6 24.3h0M26.5 28.3h0M24.0 32.2h0M25.3 34.4h0M22.8 37.7h0M24.6 41.2h0M23.2 47.0h0M28.7 3.1h0M28.0 5.5h0M28.9 9.1h0M28.2 12.4h0M29.1 17.1h0M28.5 21.7h0M28.2 23.8h0M28.3 27.4h0M27.0 32.2h0M29.2 34.8h0M28.4 37.2h0M29.5 41.8h0M27.0 47.1h0M32.6 1.8h0M31.1 5.1h0M30.5 10.6h0M32.5 12.8h0M30.9 17.1h0M32.3 19.0h0M30.3 25.5h0M33.9 27.1h0M30.9 32.3h0M34.0 36.2h0M31.1 37.5h0M31.9 42.7h0M30.6 47.0h0M35.3 0.3h0M35.6 5.8h0M35.8 8.0h0M34.9 14.2h0M35.9 15.2h0M36.0 21.7h0M36.2 25.0h0M37.2 28.7h0M35.3 31.5h0M36.4 35.0h0M35.7 38.7h0M37.6 41.2h0M35.2 45.3h0M39.0 2.4h0M40.4 5.6h0M38.1 10.5h0M38.6 14.0h0M39.9 18.1h0M39.1 21.5h0M40.0 25.2h0M40.3 28.0h0M38.2 32.9h0M40.1 35.1h0M40.1 40.2h0M39.7 41.1h0M38.6 45.8h0M42.2 1.1h0M43.7 5.2h0M42.0 9.9h0M42.4 12.6h0M41.2 16.4h0M42.9 19.0h0M43.0 23.6h0M42.3 27.0h0M43.7 32.6h0M42.8 34.5h0M42.4 39.2h0M44.7 42.5h0M42.4 47.4h0M47.1 1.4h0M46.8 6.1h0M45.7 9.5h0M47.6 11.9h0M45.8 16.0h0M47.3 19.4h0M44.8 24.3h0M0.8 27.5h0M46.0 30.1h0M46.1 33.6h0M45.5 38.4h0M0.4 42.9h0M47.4 45.9h0" stroke="#1c1c2a" stroke-width="1.0" stroke-linecap="round"/></pattern><pattern id="p0" patternUnits="userSpaceOnUse" width="48" height="48"><rect width="48" height="48" fill="#e7e0d8"/><path d="M6.7 32.6L9.0 29.5M6.7 32.6L3.7 31.3M9.0 29.5L9.0 29.4M5.4 29.3L9.0 29.4M5.4 29.3L3.7 31.2M3.7 31.3L3.7 31.2M46.8 40.2L46.3 43.4M46.8 40.2L45.4 39.3M42.8 43.7L43.0 43.8M42.8 43.7L42.7 42.5M46.3 43.4L43.0 43.8M45.4 39.3L42.7 42.5M46.8 40.2L48.4 39.8M45.4 39.3L44.4 37.8M44.4 37.8L45.2 35.7M48.1 36.6L45.2 35.7M48.1 36.6L48.8 37.3M48.8 37.3L48.4 39.8M6.7 32.6L8.2 36.1M8.2 36.1L10.6 32.4M9.0 29.5L9.7 30.3M10.6 32.4L9.7 30.3M28.7 18.6L30.8 21.2M28.7 18.6L28.6 18.6M28.6 18.6L26.5 22.0M29.7 23.1L30.8 21.2M29.7 23.1L26.5 22.1M26.5 22.1L26.5 22.0M11.3 26.2L14.0 29.6M11.3 26.2L11.8 25.7M11.8 25.7L13.1 25.2M13.1 25.2L15.4 26.1M15.4 26.1L16.4 29.5M14.0 29.6L15.1 30.2M16.4 29.5L15.1 30.2M9.0 29.4L9.6 26.7M9.6 26.7L11.3 26.2M9.7 30.3L14.0 29.6M16.0 0.4L14.9 -2.0M16.0 0.4L17.7 0.7M19.5 -0.1L17.7 0.7M19.5 -0.1L18.3 -4.0M22.8 -3.9L21.1 0.3M21.1 0.3L19.5 -0.1M8.7 6.8L8.3 7.4M8.7 6.8L8.9 5.3M3.7 7.5L8.3 7.4M3.7 7.5L3.4 6.9M8.9 5.3L6.6 4.3M3.4 6.9L6.6 4.3M-4.0 6.7L-1.0 3.1M-2.9 1.7L-1.0 3.1M5.4 29.3L4.7 26.0M1.5 28.6L3.7 31.2M1.5 28.6L1.3 27.0M1.3 27.0L4.7 26.0M1.5 40.4L0.4 39.8M1.5 40.4L3.6 39.4M0.4 39.8L0.8 37.3M3.6 39.4L4.6 36.5M4.6 36.5L4.5 36.4M0.8 37.3L4.5 36.4M8.2 36.1L8.1 36.4M8.1 36.4L4.6 36.5M3.7 31.3L2.5 33.2M4.5 36.4L2.5 33.2M1.5 28.6L-1.0 30.8M1.3 27.0L-0.4 25.6M-0.4 25.6L-2.3 26.5M-1.0 30.8L-2.8 29.5M48.1 36.6L50.0 33.3M45.1 34.6L45.2 35.7M45.1 34.6L47.4 32.7M47.4 32.7L50.0 33.3M48.8 37.3L52.5 36.4M31.8 44.6L25.9 45.0M31.8 44.6L29.2 47.7M29.2 47.7L29.1 47.8M29.1 47.8L26.3 46.5M26.3 46.5L25.9 45.0M28.5 51.5L29.1 47.8M25.2 49.1L26.3 46.5M39.2 30.0L39.4 29.2M39.2 30.0L40.8 33.1M43.7 30.3L41.2 28.4M43.7 30.3L43.0 33.2M43.0 33.2L41.5 33.4M39.4 29.2L41.2 28.4M40.8 33.1L41.5 33.4M36.1 49.0L35.8 48.8M35.8 48.8L32.7 49.6M36.1 49.0L39.6 47.1M38.7 44.3L39.6 47.1M38.7 44.3L38.1 44.0M38.1 44.0L35.8 45.1M35.8 48.8L35.8 45.1M29.2 47.7L32.7 49.5M30.5 14.8L30.8 12.3M30.5 14.8L30.8 15.5M30.8 15.5L34.2 13.8M30.8 12.3L32.3 11.7M34.2 13.8L32.9 12.0M32.9 12.0L32.3 11.7M26.5 14.1L30.5 14.8M26.5 14.1L26.6 11.7M26.6 11.7L28.9 11.5M28.9 11.5L30.8 12.3M26.5 14.1L26.0 15.4M30.8 17.3L30.8 15.5M30.8 17.3L28.7 18.6M26.0 15.4L27.1 17.4M27.1 17.4L28.6 18.6M33.2 18.5L31.4 17.5M33.2 18.5L36.6 16.2M31.4 17.5L35.1 14.4M36.6 16.2L35.8 14.6M35.8 14.6L35.1 14.4M33.8 20.6L33.2 18.5M33.8 20.6L33.0 21.6M30.8 17.3L31.4 17.5M33.0 21.6L30.8 21.2M34.2 13.8L35.1 14.4M37.5 11.8L36.2 9.5M37.5 11.8L35.8 14.6M36.2 9.5L32.9 12.0M39.2 30.0L36.1 31.7M36.3 25.8L39.4 29.2M36.3 25.8L36.1 25.9M36.1 31.7L33.6 29.7M33.6 29.7L36.1 25.9M33.0 21.6L33.1 24.2M29.7 23.1L30.7 25.3M33.1 24.2L30.7 25.3M13.1 32.7L14.7 31.3M13.1 32.7L13.6 36.6M14.7 31.3L16.0 33.3M16.0 33.3L16.2 36.1M16.2 36.1L13.6 36.6M10.6 32.4L13.1 32.7M15.1 30.2L14.7 31.3M19.2 33.1L19.6 32.5M19.2 33.1L16.0 33.3M19.6 32.5L18.5 29.6M18.5 29.6L16.4 29.5M18.2 36.7L16.2 36.1M18.2 36.7L19.2 33.1M19.6 32.5L23.1 33.4M23.1 33.4L23.6 32.7M23.6 32.7L23.4 28.6M18.8 29.2L18.5 29.6M18.8 29.2L23.2 28.1M23.2 28.1L23.4 28.6M23.6 32.7L27.1 32.5M27.1 32.5L26.7 29.8M23.4 28.6L26.7 29.8M21.3 3.5L21.8 1.3M21.3 3.5L19.1 4.4M21.1 0.3L21.8 1.3M17.7 0.7L19.0 4.3M19.1 4.4L19.0 4.3M16.0 0.4L14.7 3.0M19.0 4.3L14.7 3.0M22.5 4.6L21.3 3.5M22.5 4.6L22.7 7.7M18.3 7.3L19.1 4.4M18.3 7.3L21.5 8.3M22.7 7.7L21.5 8.3M-1.7 43.4L-0.6 44.3M-1.2 40.2L0.4 39.8M1.5 40.4L2.4 43.4M-0.6 44.3L2.4 43.4M13.1 37.2L13.6 36.6M13.1 37.2L11.5 37.4M8.1 36.4L8.2 36.4M11.5 37.4L8.2 36.4M3.6 39.4L4.9 40.7M8.2 36.4L7.8 39.5M4.9 40.7L7.8 39.5M2.4 43.4L3.1 43.7M3.1 43.7L4.9 42.9M4.9 40.7L4.9 42.9M11.5 37.4L11.1 41.0M7.8 39.5L8.3 41.2M11.1 41.0L8.3 41.2M4.9 42.9L7.7 43.7M7.7 43.7L8.3 41.2M-3.1 48.1L-0.7 46.3M-0.7 46.3L-0.6 44.3M32.2 3.1L30.6 3.7M32.2 3.1L33.4 4.5M30.6 3.7L30.7 7.9M33.4 4.5L33.1 7.6M33.1 7.6L31.9 8.2M31.9 8.2L30.8 7.9M30.8 7.9L30.7 7.9M36.2 8.6L37.9 6.8M36.2 8.6L33.1 7.6M37.3 4.7L37.9 6.8M37.3 4.7L33.4 4.5M36.2 9.5L36.2 8.6M32.3 11.7L31.9 8.2M28.9 11.5L30.8 7.9M26.6 11.7L26.1 11.1M26.9 7.2L30.7 7.9M26.9 7.2L25.8 8.6M26.1 11.1L25.8 8.6M28.5 3.5L29.1 -0.2M28.5 3.5L26.9 4.2M26.9 4.2L26.7 4.0M26.7 4.0L25.2 1.1M25.2 1.1L26.3 -1.5M29.1 -0.2L26.3 -1.5M26.9 7.2L26.9 4.2M30.6 3.7L28.5 3.5M22.5 4.6L26.7 4.0M22.7 7.7L25.8 8.6M21.8 1.3L25.2 1.1M11.7 8.4L12.3 10.6M11.7 8.4L12.4 6.8M12.3 10.6L16.0 7.5M12.4 6.8L15.6 7.1M16.0 7.5L15.6 7.1M8.7 6.8L11.7 8.4M11.0 3.7L8.9 5.3M11.0 3.7L12.4 6.8M11.0 3.7L11.3 3.3M11.3 3.3L14.4 3.3M14.4 3.3L15.6 7.1M18.3 7.3L17.4 7.9M17.4 7.9L16.0 7.5M14.7 3.0L14.4 3.3M8.3 7.4L8.1 9.7M8.1 9.7L10.1 11.1M12.3 10.6L12.2 11.2M12.2 11.2L10.1 11.1M11.4 0.3L10.7 1.7M11.4 0.3L10.1 -3.4M10.7 1.7L6.8 -0.2M6.8 -0.2L8.1 -3.5M14.9 -2.0L11.4 0.3M11.3 3.3L10.7 1.7M6.7 -0.2L6.5 4.2M6.7 -0.2L6.8 -0.2M6.6 4.3L6.5 4.2M6.7 -0.2L5.5 -0.2M6.5 4.2L3.6 2.8M5.5 -0.2L3.6 2.8M3.4 6.9L1.5 5.9M1.5 5.9L1.0 3.9M3.6 2.8L1.0 3.9M-1.0 8.4L1.5 5.9M-1.0 3.1L0.7 3.6M1.0 3.9L0.7 3.6M8.2 25.6L5.0 25.7M8.2 25.6L8.3 22.8M5.0 25.7L4.0 22.1M7.4 21.6L8.3 22.8M7.4 21.6L4.1 22.1M4.1 22.1L4.0 22.1M9.6 26.7L8.2 25.6M4.7 26.0L5.0 25.7M11.1 21.9L8.3 22.8M11.1 21.9L11.8 25.7M-0.4 25.6L-0.3 23.5M-0.3 23.5L4.0 22.1M-2.8 35.7L0.1 36.6M-2.9 34.6L-0.6 32.7M0.1 36.6L2.0 33.3M2.0 33.3L-0.6 32.7M0.8 37.3L0.1 36.6M-1.0 30.8L-0.6 32.7M2.5 33.2L2.0 33.3M44.7 21.3L47.7 23.4M44.7 21.3L45.3 18.3M47.7 23.4L49.1 18.4M45.3 18.3L47.0 17.5M49.1 18.4L47.0 17.5M45.1 34.6L43.0 33.2M47.4 32.7L47.0 30.8M43.7 30.3L45.2 29.5M45.2 29.5L47.0 30.8M47.0 30.8L49.5 28.6M41.2 28.4L41.8 26.8M45.7 26.5L45.2 29.5M45.7 26.5L43.3 25.9M43.3 25.9L41.8 26.8M47.4 44.3L46.3 43.4M47.4 44.3L50.4 43.4M48.4 39.8L49.5 40.4M49.7 47.7L47.3 46.3M47.3 46.3L47.4 44.3M40.3 50.2L40.6 48.1M40.6 48.1L43.4 47.0M43.4 47.0L44.9 48.1M44.9 48.1L45.1 49.7M39.6 47.1L40.6 48.1M42.8 43.7L38.7 44.3M43.0 43.8L43.4 47.0M47.3 46.3L44.9 48.1M49.7 47.7L48.7 51.6M40.8 33.1L38.9 33.9M36.1 31.7L36.1 32.6M38.9 33.9L36.1 32.6M34.3 39.2L30.7 41.4M34.3 39.2L35.5 39.8M35.5 39.8L33.3 44.4M30.7 41.4L32.2 44.4M33.3 44.4L32.3 44.4M32.2 44.4L32.3 44.4M31.8 44.6L32.2 44.4M25.9 45.0L25.9 45.0M28.6 40.2L30.7 41.4M28.6 40.2L28.4 40.3M28.4 40.3L25.9 45.0M35.8 45.1L33.3 44.4M32.7 49.5L32.3 44.4M29.2 33.6L31.8 33.1M29.2 33.6L32.0 36.8M31.8 33.1L33.8 35.6M33.8 35.6L33.4 36.5M32.0 36.8L33.4 36.5M28.4 33.6L29.2 33.6M28.4 33.6L27.9 35.5M27.9 35.5L29.1 38.2M29.1 38.2L32.0 36.8M33.6 29.7L33.0 29.8M33.0 29.8L31.8 33.1M36.1 32.6L35.1 35.0M35.1 35.0L33.8 35.6M29.1 38.2L28.6 40.2M34.3 39.2L33.4 36.5M29.7 30.1L28.3 28.5M29.7 30.1L33.0 29.8M33.0 29.8L30.3 25.8M28.3 28.5L28.4 26.6M30.3 25.8L28.4 26.6M27.1 32.5L28.1 33.1M28.1 33.1L29.7 30.1M26.7 29.8L28.3 28.5M28.4 33.6L28.1 33.1M33.0 29.8L33.0 29.8M36.1 25.9L33.1 24.2M30.7 25.3L30.3 25.8M26.5 22.1L26.5 25.7M26.5 25.7L28.4 26.6M11.1 21.9L11.7 20.9M13.1 25.2L14.6 22.1M14.6 22.1L11.7 20.9M8.3 18.8L10.2 18.2M8.3 18.8L7.4 21.6M10.2 18.2L11.1 18.7M11.1 18.7L11.7 20.9M21.5 8.3L21.3 11.9M26.1 11.1L21.8 12.2M21.8 12.2L21.3 11.9M27.1 17.4L23.7 19.6M26.5 22.0L24.7 21.6M24.7 21.6L23.7 19.6M23.4 27.4L23.7 26.9M23.4 27.4L18.8 24.0M23.7 26.9L22.6 23.1M22.6 23.1L19.4 22.3M19.4 22.3L18.5 22.7M18.5 22.7L18.5 23.2M18.5 23.2L18.8 24.0M23.2 28.1L23.4 27.4M26.5 25.7L23.7 26.9M18.8 29.2L18.8 24.0M24.7 21.6L22.6 23.1M15.4 26.1L18.5 23.2M14.6 22.1L16.6 21.4M16.6 21.4L18.5 22.7M-0.7 46.3L1.7 47.7M0.7 51.6L1.7 47.7M3.1 43.7L3.4 46.9M1.7 47.7L3.4 46.9M3.4 46.9L5.5 47.8M5.5 47.8L3.6 50.8M6.7 47.8L6.5 52.2M6.7 47.8L5.5 47.8M39.6 -0.9L38.7 -3.7M39.6 -0.9L36.1 1.0M35.8 -2.9L35.8 0.8M36.1 1.0L35.8 0.8M37.3 4.7L37.6 3.3M37.6 3.3L36.1 1.0M32.7 1.6L35.8 0.8M32.7 1.6L32.2 3.1M42.0 17.3L41.5 13.5M42.0 17.3L44.2 17.7M44.2 17.7L44.1 14.1M44.1 14.1L41.5 13.5M37.3 16.6L41.4 13.4M37.3 16.6L36.6 16.2M37.5 11.8L41.0 12.0M41.4 13.4L41.0 12.0M40.1 7.4L42.3 6.0M40.1 7.4L41.3 11.4M41.3 11.4L43.0 10.7M43.0 10.7L44.9 7.8M42.3 6.0L44.0 6.7M44.0 6.7L44.9 7.8M37.9 6.8L40.1 7.4M41.0 12.0L41.3 11.4M40.6 0.1L43.4 -1.0M40.6 0.1L40.3 2.2M40.3 2.2L42.3 3.6M42.3 3.6L45.1 1.7M43.4 -1.0L44.9 0.1M45.1 1.7L44.9 0.1M39.6 -0.9L40.6 0.1M43.0 -4.2L43.4 -1.0M37.6 3.3L40.3 2.2M42.3 6.0L42.3 3.6M47.0 3.1L45.1 1.7M47.0 3.1L44.0 6.7M29.2 -0.3L32.7 1.5M29.2 -0.3L31.8 -3.4M32.7 1.5L32.3 -3.6M32.7 1.6L32.7 1.5M29.1 -0.2L29.2 -0.3M12.2 11.2L12.3 11.5M10.1 11.1L7.8 14.0M10.2 15.5L7.8 14.0M10.2 15.5L12.7 13.2M12.7 13.2L12.3 11.5M17.4 7.9L17.6 11.0M12.3 11.5L17.6 11.0M3.7 7.5L4.0 9.2M8.1 9.7L5.8 10.8M4.0 9.2L5.8 10.8M7.8 14.0L5.5 14.1M5.8 10.8L5.5 14.1M-1.0 8.4L-0.8 9.5M-2.5 11.7L-0.8 9.5M4.0 9.2L1.2 11.4M-0.8 9.5L1.2 11.4M-0.3 23.5L-0.3 23.4M-3.3 21.3L-0.3 23.4M1.1 18.4L-1.0 17.5M1.1 18.4L-0.3 23.4M1.2 11.4L1.3 13.1M1.3 13.1L-0.9 14.4M-2.2 13.6L-0.9 14.4M3.4 -1.1L1.7 -0.3M1.7 -0.3L-0.7 -1.7M5.5 -0.2L3.4 -1.1M0.7 3.6L1.7 -0.3M-3.1 0.1L-0.7 -1.7M47.7 23.5L47.6 25.6M47.7 23.5L52.0 22.1M47.6 25.6L49.3 27.0M44.7 21.3L42.7 22.2M47.7 23.4L47.7 23.5M45.7 26.5L47.6 25.6M42.7 22.2L43.3 25.9M42.0 17.3L39.9 18.8M44.2 17.7L45.3 18.3M42.7 22.2L42.7 22.2M42.7 22.2L39.9 18.8M37.3 16.6L38.5 18.7M41.5 13.5L41.4 13.4M38.5 18.7L39.9 18.8M19.1 37.8L18.7 38.6M19.1 37.8L19.5 37.9M19.5 37.9L22.4 43.2M18.7 38.6L19.8 43.4M22.4 43.2L22.4 43.6M19.8 43.4L22.4 43.6M21.8 49.3L21.1 48.3M25.9 45.0L22.8 44.1M22.8 44.1L21.1 48.3M23.6 40.4L26.8 39.8M23.6 40.4L21.9 37.4M26.8 39.8L24.2 36.3M21.9 37.4L23.2 36.0M23.2 36.0L24.2 36.3M28.4 40.3L26.8 39.8M22.4 43.2L23.6 40.4M22.8 44.1L22.4 43.6M19.5 37.9L21.9 37.4M27.9 35.5L24.2 36.3M18.2 36.7L19.1 37.8M23.1 33.4L23.2 36.0M36.5 35.8L38.2 35.9M36.5 35.8L37.0 40.0M38.2 35.9L40.4 38.3M37.8 40.4L37.0 40.0M37.8 40.4L40.4 38.6M40.4 38.3L40.4 38.6M40.4 38.6L40.4 38.6M38.9 33.9L38.2 35.9M35.1 35.0L36.5 35.8M35.5 39.8L37.0 40.0M41.5 33.4L40.4 38.3M38.1 44.0L37.8 40.4M42.7 42.5L40.4 38.6M44.4 37.8L40.4 38.6M16.6 21.4L16.5 20.9M11.1 18.7L14.7 17.5M14.7 17.5L16.5 20.9M10.2 18.2L10.2 15.5M12.7 13.2L15.6 15.4M14.7 17.5L15.6 15.4M23.3 19.3L20.7 19.9M23.3 19.3L23.0 15.9M20.7 19.9L19.6 16.6M19.6 16.6L22.2 15.5M23.0 15.9L22.2 15.5M23.7 19.6L23.3 19.3M19.4 22.3L20.7 19.9M26.0 15.4L23.0 15.9M16.5 20.9L19.4 16.5M19.4 16.5L19.6 16.6M21.8 12.2L22.2 15.5M6.7 47.8L6.8 47.8M10.7 49.7L6.8 47.8M7.7 43.7L8.1 44.5M6.8 47.8L8.1 44.5M13.1 37.2L15.0 41.1M11.1 41.0L11.4 41.3M11.4 41.3L15.0 41.1M18.7 38.6L15.3 41.4M15.0 41.1L15.3 41.4M44.9 0.1L47.3 -1.7M47.2 9.5L49.2 11.4M47.2 9.5L45.5 11.7M45.5 11.7L45.8 13.6M49.3 13.1L47.1 14.4M47.1 14.4L45.8 13.6M47.0 8.4L47.2 9.5M47.0 8.4L44.9 7.8M43.0 10.7L45.5 11.7M44.1 14.1L45.8 13.6M47.0 17.5L47.1 14.4M47.0 8.4L49.5 5.9M19.4 12.0L19.4 16.5M19.4 12.0L17.8 11.5M17.8 11.5L15.9 15.3M19.4 16.5L15.9 15.3M21.3 11.9L19.4 12.0M19.4 16.5L19.4 16.5M17.6 11.0L17.8 11.5M15.6 15.4L15.9 15.3M5.0 14.5L4.3 14.6M5.0 14.5L6.8 18.0M4.3 14.6L1.8 18.3M6.8 18.0L3.7 20.1M3.7 20.1L1.8 18.3M5.5 14.1L5.0 14.5M1.3 13.1L4.3 14.6M8.3 18.8L6.8 18.0M1.1 18.4L1.8 18.3M-1.0 17.5L-0.9 14.4M4.1 22.1L3.7 20.1M36.8 20.9L37.9 19.9M36.8 20.9L36.8 25.1M37.9 19.9L40.1 23.4M36.8 25.1L39.3 24.4M39.3 24.4L40.1 23.4M33.8 20.6L36.8 20.9M38.5 18.7L37.9 19.9M36.3 25.8L36.8 25.1M42.7 22.2L40.1 23.4M41.8 26.8L39.3 24.4M10.7 49.7L11.4 48.3M8.1 44.5L10.1 44.6M11.4 48.3L10.1 44.6M11.4 41.3L11.3 44.1M10.1 44.6L11.3 44.1M49.7 -0.3L48.7 3.6M48.7 3.6L49.0 3.9M47.0 3.1L48.7 3.6M47.3 -1.7L49.7 -0.3M14.9 44.8L14.9 46.0M14.9 44.8L15.7 43.8M18.3 44.0L19.5 47.9M18.3 44.0L15.7 43.8M14.9 46.0L16.0 48.4M16.0 48.4L17.7 48.7M19.5 47.9L17.7 48.7M11.4 48.3L14.9 46.0M11.3 44.1L14.9 44.8M15.3 41.4L15.7 43.8M19.8 43.4L18.3 44.0M21.1 48.3L19.5 47.9M14.7 51.0L16.0 48.4M19.0 52.3L17.7 48.7" stroke="#9a928a" stroke-width="0.45" fill="none"/><path d="M3.2 1.3h0M4.4 4.2h0M1.6 9.3h0M3.4 11.5h0M1.2 15.7h0M1.6 21.0h0M2.7 24.4h0M3.8 28.4h0M1.0 30.9h0M1.6 35.9h0M2.2 38.3h0M3.5 41.2h0M1.4 45.5h0M5.1 2.5h0M6.3 6.5h0M6.3 8.4h0M8.0 11.9h0M4.5 17.9h0M6.0 20.2h0M6.4 23.4h0M6.6 27.8h0M6.5 30.9h0M5.3 33.6h0M5.5 39.4h0M6.2 41.2h0M5.1 45.1h0M8.0 2.6h0M11.1 6.9h0M10.1 8.8h0M9.8 13.4h0M8.1 16.1h0M9.5 21.2h0M10.1 23.4h0M11.8 29.1h0M8.4 32.3h0M11.6 34.4h0M10.0 40.0h0M10.2 42.2h0M9.8 47.1h0M13.3 0.7h0M13.3 5.9h0M13.1 7.8h0M15.4 12.2h0M12.4 16.0h0M13.7 20.0h0M12.5 23.0h0M14.1 27.3h0M12.1 30.7h0M15.0 34.0h0M12.5 40.2h0M12.6 42.3h0M11.8 46.3h0M17.4 2.7h0M16.8 4.7h0M15.2 10.2h0M18.7 13.9h0M17.3 18.1h0M18.8 19.1h0M15.2 24.2h0M17.2 26.4h0M17.1 32.6h0M17.2 33.9h0M15.9 38.5h0M18.2 41.4h0M17.9 46.6h0M19.2 2.0h0M21.0 6.0h0M19.8 9.9h0M20.1 14.0h0M21.8 18.1h0M22.4 21.0h0M21.5 24.8h0M20.3 26.4h0M21.6 30.9h0M20.6 34.8h0M21.6 40.3h0M20.4 40.9h0M20.1 45.9h0M23.8 3.1h0M24.2 5.8h0M22.9 10.1h0M23.8 13.5h0M24.6 17.9h0M25.6 19.4h0M24.5 23.9h0M26.4 28.3h0M25.5 30.7h0M25.7 34.5h0M24.5 38.7h0M25.1 41.7h0M23.5 47.4h0M27.7 1.1h0M29.6 5.8h0M29.0 9.5h0M29.2 13.6h0M28.9 15.5h0M29.3 21.7h0M28.5 24.0h0M30.2 28.4h0M28.1 30.4h0M30.3 35.6h0M26.3 37.3h0M29.0 43.8h0M29.2 45.8h0M30.1 1.4h0M31.7 5.7h0M30.6 10.3h0M32.0 13.9h0M32.8 15.5h0M31.6 19.9h0M31.1 22.8h0M32.8 26.7h0M30.4 31.6h0M31.1 35.0h0M31.9 38.8h0M33.6 41.5h0M31.1 47.4h0M35.0 3.1h0M34.9 6.0h0M33.6 9.9h0M35.1 11.8h0M33.6 16.4h0M35.3 18.9h0M35.1 22.6h0M36.7 29.2h0M33.8 32.8h0M37.5 34.5h0M36.0 37.4h0M35.4 42.3h0M34.0 47.2h0M38.5 0.7h0M40.0 4.5h0M38.8 9.9h0M38.6 13.9h0M40.2 16.0h0M40.0 21.6h0M38.5 22.5h0M39.7 26.5h0M38.5 32.5h0M39.7 35.3h0M37.4 37.2h0M40.5 42.0h0M37.6 47.1h0M42.4 1.2h0M44.6 4.4h0M42.6 8.7h0M44.1 12.4h0M43.4 15.5h0M42.6 19.4h0M41.4 24.6h0M43.6 28.2h0M41.7 30.8h0M42.4 35.9h0M43.3 40.3h0M44.8 41.6h0M41.2 46.0h0M47.5 0.4h0M46.2 5.7h0M44.9 10.2h0M47.0 11.9h0M44.9 15.5h0M47.3 20.4h0M44.7 24.0h0M47.1 28.8h0M45.2 31.6h0M0.0 35.0h0M47.1 37.8h0M0.3 42.2h0M45.3 45.5h0" stroke="#1c1c2a" stroke-width="1.0" stroke-linecap="round"/></pattern></defs>
<polygon points="364.0,141.0 367.3,135.2 376.3,132.4 387.5,130.7 395.3,130.7 397.5,135.2 399.7,139.6 402.0,144.1 403.1,138.5 405.9,136.3 412.0,138.5 413.2,132.9 413.2,124.0 416.5,121.2 423.2,122.9 431.0,121.8 436.6,122.5 427.7,119.5 423.2,115.0 425.4,112.8 422.0,109.5 424.3,106.2 422.8,98.9 418.4,99.7 414.8,98.9 415.5,96.0 421.4,93.8 426.5,90.9 424.3,87.2 422.1,80.6 416.2,69.6 415.5,64.5 431.6,66.7 441.9,68.9 447.0,66.0 449.9,68.9 458.0,71.1 459.4,77.0 460.9,84.3 458.0,88.7 463.8,88.0 471.3,90.6 477.6,93.2 484.4,97.4 490.1,94.2 494.3,92.6 493.8,88.0 496.4,85.3 501.6,86.4 503.7,91.6 498.5,92.1 496.3,95.8 496.3,103.1 488.2,110.0 485.6,113.2 489.4,116.3 494.4,114.4 500.0,115.0 504.5,117.0 507.0,114.4 510.7,111.9 515.1,115.0 518.9,117.0 519.5,120.7 517.0,123.8 513.2,125.1 508.9,125.7 505.7,127.6 500.0,126.3 495.0,123.8 489.4,126.3 485.6,127.6 487.6,131.4 492.0,135.7 484.6,143.0 481.7,147.5 486.1,153.3 494.9,159.2 503.7,163.6 511.0,169.0 503.0,175.0 490.5,185.0 483.0,189.0 470.0,193.0 460.0,190.0 450.0,185.0 440.0,188.0 428.0,184.0 415.0,185.0 400.0,170.0 385.0,173.0 366.5,176.6 370.0,170.0 369.0,157.0 362.0,150.0" fill="url(#p2)"/>
<polygon points="510.7,111.9 513.9,106.9 520.8,105.6 530.0,104.0 533.0,101.0 540.0,94.5 543.0,89.0 552.0,91.7 559.0,90.4 562.0,83.6 566.0,79.5 570.0,76.8 575.0,82.0 580.0,83.6 577.0,89.7 582.0,94.5 578.0,99.0 572.0,101.0 581.0,106.0 585.0,109.4 592.0,113.5 598.0,117.6 597.0,123.0 600.0,130.0 601.0,135.0 603.0,145.0 603.0,160.0 608.0,186.0 614.5,207.6 614.5,220.0 611.0,224.0 598.0,225.0 580.6,235.0 560.5,230.0 543.0,224.0 534.0,215.0 533.0,200.0 535.0,190.0 531.0,178.0 520.0,171.0 511.0,169.0 503.7,163.6 494.9,159.2 486.1,153.3 481.7,147.5 484.6,143.0 492.0,135.7 487.6,131.4 485.6,127.6 489.4,126.3 495.0,123.8 500.0,126.3 505.7,127.6 508.9,125.7 513.2,125.1 517.0,123.8 519.5,120.7 518.9,117.0 515.1,115.0" fill="url(#p1)"/>
<polygon points="415.0,185.0 428.0,184.0 440.0,188.0 450.0,185.0 460.0,190.0 470.0,193.0 483.0,189.0 490.5,185.0 503.0,175.0 511.0,169.0 520.0,171.0 531.0,178.0 535.0,190.0 533.0,200.0 534.0,215.0 543.0,224.0 521.0,223.0 505.5,228.0 495.5,233.0 490.5,243.0 483.0,245.5 475.0,248.0 473.0,260.0 465.0,277.0 470.0,283.0 465.0,290.0 460.0,295.0 448.0,313.0 443.0,315.0 438.0,303.0 430.6,300.0 418.0,305.0 405.4,307.7 395.4,300.2 400.4,295.0 400.4,282.0 413.0,275.5 419.2,265.4 418.0,250.4 405.4,240.3 400.4,232.8 393.0,230.3 398.0,223.0 403.0,215.0 410.5,200.0 415.5,190.0" fill="url(#p3)"/>
<polygon points="543.0,224.0 560.5,230.0 580.6,235.0 598.0,225.0 611.0,224.0 614.5,220.0 612.0,233.0 618.0,250.0 623.0,263.0 618.0,280.5 610.7,283.0 603.0,273.0 590.0,283.0 575.5,290.0 563.0,300.0 545.3,305.0 536.5,317.6 532.8,311.4 522.7,306.3 505.0,300.0 495.0,292.0 500.0,285.5 512.7,278.0 515.0,270.5 505.0,265.4 495.0,255.4 490.5,243.0 495.5,233.0 505.5,228.0 521.0,223.0" fill="url(#p0)"/>
<polygon points="490.5,243.0 495.0,255.4 505.0,265.4 515.0,270.5 512.7,278.0 500.0,285.5 495.0,292.0 505.0,300.0 522.7,306.3 532.8,311.4 536.5,317.6 534.0,321.4 541.6,330.2 540.3,340.3 550.4,357.8 560.4,363.0 565.5,370.6 578.0,378.0 585.6,388.2 583.0,398.2 568.0,400.7 560.5,403.2 548.0,400.7 543.0,390.7 527.8,385.6 520.3,390.7 510.3,383.0 500.2,375.6 495.2,380.6 485.0,383.0 480.7,375.2 477.0,377.7 470.7,367.6 463.0,360.0 450.6,352.6 441.0,343.0 438.0,335.0 440.6,323.0 443.0,315.0 448.0,313.0 460.0,295.0 465.0,290.0 470.0,283.0 465.0,277.0 473.0,260.0 475.0,248.0 483.0,245.5" fill="url(#p9)"/>
<polygon points="327.5,271.0 332.0,265.0 335.0,255.0 334.0,243.0 329.0,237.0 330.0,233.0 344.0,230.0 353.0,228.0 354.0,220.0 362.0,213.0 364.0,203.0 356.0,198.0 354.0,190.0 362.0,187.0 366.5,176.6 385.0,173.0 400.0,170.0 415.0,185.0 415.5,190.0 410.5,200.0 403.0,215.0 398.0,223.0 393.0,230.3 378.0,233.0 373.0,235.0 383.0,253.0 373.0,258.0 373.0,267.0 360.0,269.0 345.0,273.0" fill="url(#p4)"/>
<polygon points="327.5,271.0 345.0,273.0 360.0,269.0 373.0,267.0 373.0,258.0 383.0,253.0 373.0,235.0 378.0,233.0 393.0,230.3 400.4,232.8 405.4,240.3 418.0,250.4 419.2,265.4 413.0,275.5 400.4,282.0 400.4,295.0 395.4,300.2 393.0,305.0 395.4,310.0 393.0,315.0 388.0,323.0 393.0,328.0 403.0,328.0 405.4,335.3 393.0,339.0 383.0,343.0 365.0,348.0 342.6,350.4 343.0,333.0 336.0,325.0 335.0,318.0 340.0,310.0 339.0,295.0 331.0,283.0" fill="url(#p5)"/>
<polygon points="342.6,350.4 365.0,348.0 383.0,343.0 393.0,339.0 405.4,335.3 403.0,328.0 393.0,328.0 388.0,323.0 393.0,315.0 395.4,310.0 393.0,305.0 395.4,300.2 405.4,307.7 418.0,305.0 430.6,300.0 438.0,303.0 443.0,315.0 440.6,323.0 438.0,335.0 441.0,343.0 438.0,347.0 428.0,357.0 415.0,364.0 400.0,363.0 398.0,373.0 390.0,373.0 375.0,368.0 358.0,368.0 350.0,360.0" fill="url(#p6)"/>
<polygon points="398.0,373.0 400.0,363.0 415.0,364.0 428.0,357.0 438.0,347.0 441.0,343.0 450.6,352.6 463.0,360.0 470.7,367.6 477.0,377.7 470.7,390.3 453.0,400.3 445.5,412.9 428.0,423.0 438.0,433.0 435.5,438.0 425.0,440.5 415.0,443.0 405.0,440.5 395.0,445.5 384.0,445.5 381.5,433.0 385.0,415.0 390.0,403.0 398.0,390.0 403.0,380.0" fill="url(#p7)"/>
<polygon points="477.0,377.7 480.7,375.2 485.0,383.0 495.2,380.6 500.2,375.6 510.3,383.0 520.3,390.7 527.8,385.6 543.0,390.7 548.0,400.7 560.5,403.2 563.0,410.8 555.5,420.8 558.0,433.4 560.5,443.4 555.5,451.0 548.0,443.4 535.4,444.7 520.0,448.5 510.0,451.0 497.7,453.5 485.0,448.5 475.0,451.0 472.6,457.0 465.0,454.0 458.0,445.5 435.5,438.0 438.0,433.0 428.0,423.0 445.5,412.9 453.0,400.3 470.7,390.3" fill="url(#p8)"/>
<path d="M446.4 111.5h0M428.9 170.8h0M460.8 186.3h0M452.9 115.5h0M410.6 169.4h0M390.5 139.2h0M462.6 112.4h0M448.3 72.6h0M469.2 119.4h0M411.5 139.7h0M433.4 103.0h0M487.1 154.3h0M444.7 177.0h0M476.9 101.5h0M427.9 161.8h0M368.2 150.4h0M482.4 138.1h0M471.5 140.9h0M453.3 123.1h0M436.7 149.8h0M371.6 154.6h0M491.5 101.1h0M422.8 150.4h0M371.3 163.2h0M423.6 176.5h0M448.5 178.0h0M491.0 175.5h0M418.5 178.1h0M454.8 98.3h0M420.2 137.3h0M443.2 143.9h0M503.7 164.7h0M499.7 167.0h0M378.3 146.0h0M458.7 83.6h0M435.4 126.7h0M416.0 98.5h0M445.2 83.3h0M447.5 68.0h0M388.3 163.7h0M445.9 164.6h0M496.3 168.1h0M490.9 159.6h0M418.0 68.2h0M402.8 153.5h0M512.7 122.0h0M460.3 180.2h0M464.8 167.3h0M375.4 149.4h0M505.3 165.0h0M480.1 125.9h0M390.1 165.9h0M414.4 167.4h0M515.0 115.4h0M504.5 168.1h0M385.0 170.7h0M417.2 135.0h0M444.9 184.5h0M430.3 176.5h0M417.7 123.4h0M453.9 180.7h0M428.2 182.4h0M441.0 132.8h0M431.3 88.0h0M476.2 136.0h0M413.3 131.1h0M449.5 165.3h0M378.7 136.5h0M483.6 129.7h0M450.5 162.2h0M505.7 121.5h0M458.5 129.5h0M442.7 153.5h0M433.2 133.0h0M437.3 185.5h0M472.1 177.1h0M373.5 150.5h0M485.5 179.8h0M386.3 156.5h0M424.7 127.1h0M443.2 108.1h0M449.3 121.1h0M460.3 130.3h0M428.5 181.6h0M491.0 97.7h0M451.9 154.5h0M470.4 119.2h0M461.9 167.5h0M375.2 174.5h0M372.5 175.4h0M433.5 108.1h0M449.1 183.6h0M445.0 95.1h0M481.6 101.8h0M440.8 87.4h0M416.7 66.8h0M477.5 135.3h0M491.0 120.0h0M440.0 171.7h0M423.9 129.6h0M470.3 190.7h0M416.0 171.4h0M473.3 146.2h0M425.7 109.2h0M373.1 159.7h0M375.3 172.6h0M436.8 129.1h0M454.2 132.5h0M480.2 149.0h0M474.8 177.5h0M476.1 147.2h0M477.6 166.7h0M477.7 168.6h0M476.4 166.1h0M476.5 164.7h0M368.2 146.5h0M370.0 146.5h0M368.6 147.3h0M435.7 74.6h0M433.9 71.6h0M435.2 70.4h0M434.2 76.3h0M434.3 76.0h0M430.8 74.3h0M437.3 75.2h0M461.6 91.5h0M461.3 91.1h0M462.0 90.0h0M461.5 91.4h0M461.2 88.7h0M461.4 91.1h0M460.6 90.2h0M431.3 172.5h0M434.9 169.6h0M436.8 171.5h0M434.2 171.5h0M432.3 168.3h0M434.1 170.7h0M421.1 130.9h0M419.0 127.4h0M419.3 127.3h0M419.1 128.9h0M419.0 129.4h0M418.9 129.5h0M422.6 176.7h0M424.0 176.5h0M423.9 175.5h0M446.5 158.2h0M450.8 159.6h0M444.7 157.3h0M448.1 88.2h0M449.5 86.3h0M448.1 85.6h0M447.6 86.0h0M449.0 87.0h0M449.3 88.8h0M439.4 93.1h0M440.6 93.5h0M439.9 93.4h0M440.4 94.2h0M436.9 91.2h0M480.4 118.7h0M480.1 115.7h0M478.8 116.9h0M479.3 115.8h0M480.8 114.6h0M482.8 119.4h0M424.6 144.6h0M423.0 147.5h0M421.6 143.9h0M420.3 147.9h0M424.3 147.5h0M425.5 146.0h0M387.7 132.4h0M386.8 131.6h0M386.1 131.5h0M384.9 132.2h0M402.8 166.9h0M404.2 165.8h0M403.8 165.5h0M440.6 152.1h0M439.8 151.9h0M440.0 149.8h0M439.9 151.8h0M441.2 151.2h0M440.7 150.9h0M440.2 91.4h0M440.2 88.9h0M441.9 89.7h0M440.5 91.3h0M438.0 91.4h0M440.9 90.0h0M439.2 90.9h0M441.0 90.1h0M440.6 90.4h0M427.5 179.9h0M423.5 180.8h0M426.3 178.9h0M426.2 180.4h0M422.9 180.9h0M491.2 169.6h0M490.5 169.9h0M490.8 171.4h0M490.2 170.3h0M491.4 171.4h0M490.7 170.6h0M435.0 165.5h0M434.6 168.4h0M436.5 167.3h0M402.5 159.2h0M400.7 154.8h0M403.9 156.4h0M403.7 155.9h0M402.9 154.7h0" stroke="#1e1e2c" stroke-width="1.1" stroke-linecap="round" opacity="0.8"/>
<path d="M584.8 201.7h0M603.0 205.7h0M499.3 155.4h0M596.1 149.7h0M585.8 171.0h0M549.7 138.8h0M502.9 141.3h0M568.0 153.0h0M554.0 102.2h0M509.4 143.4h0M542.9 217.8h0M512.9 162.0h0M584.5 197.0h0M585.3 123.3h0M540.1 106.2h0M514.4 160.1h0M568.0 92.7h0M512.4 147.7h0M561.4 207.8h0M549.8 104.9h0M561.8 199.4h0M570.0 77.8h0M566.4 189.1h0M578.9 221.4h0M589.9 206.3h0M536.0 135.6h0M564.2 89.1h0M545.9 141.4h0M587.4 181.8h0M502.2 161.3h0M568.4 139.7h0M570.4 142.9h0M599.1 142.3h0M588.2 178.8h0M533.6 140.9h0M534.4 167.4h0M604.8 193.4h0M504.5 131.8h0M490.6 137.5h0M583.4 203.8h0M582.9 201.9h0M583.9 202.9h0M580.1 203.5h0M580.4 200.8h0M582.7 203.6h0M581.9 203.1h0M582.8 200.6h0M582.1 202.8h0M536.6 161.2h0M535.1 158.0h0M536.4 157.2h0M534.0 157.2h0M534.3 159.8h0M532.6 159.3h0M583.2 180.4h0M583.6 180.0h0M586.9 179.8h0M584.0 179.5h0M585.2 177.1h0M543.6 105.7h0M541.1 106.8h0M540.8 105.2h0M543.2 105.4h0M543.5 104.7h0M542.5 104.7h0M583.8 221.0h0M584.4 218.3h0M582.0 217.3h0M583.6 218.1h0M585.3 217.3h0M583.1 221.0h0M582.2 218.1h0M579.8 220.7h0M500.7 157.4h0M500.7 156.5h0M501.0 156.8h0M502.2 155.7h0M501.3 155.9h0M500.9 155.8h0M550.1 178.1h0M550.8 174.0h0M552.2 179.7h0M554.0 175.2h0M551.0 178.7h0" stroke="#2a2a3a" stroke-width="1.1" stroke-linecap="round" opacity="0.8"/>
<path d="M470.4 214.3h0M426.2 211.5h0M486.8 230.0h0M466.3 258.4h0M478.1 213.3h0M471.5 247.0h0M455.0 213.0h0M413.1 222.5h0M517.3 192.2h0M492.8 208.4h0M401.4 288.8h0M470.6 241.0h0M420.8 192.2h0M529.8 184.3h0M422.6 229.3h0M470.7 262.8h0M490.1 229.6h0M485.0 243.3h0M464.7 247.6h0M449.3 232.8h0M529.8 180.7h0M491.3 194.6h0M489.6 187.0h0M527.1 181.5h0M469.1 193.8h0M423.4 192.2h0M530.2 197.0h0M451.3 256.8h0M449.9 293.4h0M463.8 246.5h0M451.7 254.5h0M477.8 194.0h0M486.3 192.6h0M499.7 225.0h0M430.0 198.7h0M487.8 238.7h0M412.9 284.6h0M489.9 212.0h0M443.5 207.1h0M445.6 304.8h0M483.3 238.5h0M436.1 277.9h0M511.4 173.6h0M436.1 232.7h0M471.5 211.1h0M505.6 176.9h0M479.7 192.2h0M427.7 193.2h0M489.9 223.3h0M438.5 231.5h0M474.7 194.0h0M480.2 245.2h0M476.1 216.2h0M462.5 269.6h0M431.6 202.7h0M443.1 262.8h0M433.1 279.2h0M445.3 203.5h0M422.3 191.0h0M415.2 213.1h0M437.6 209.0h0M409.4 302.1h0M435.1 298.2h0M431.6 276.8h0M427.3 195.5h0M411.6 232.1h0M432.0 271.3h0M527.2 204.4h0M453.0 273.0h0M416.5 293.0h0M527.2 216.9h0M529.2 184.5h0M430.7 200.8h0M423.0 219.8h0M423.7 238.5h0M448.5 219.1h0M488.6 205.9h0M404.3 302.7h0M438.5 227.5h0M462.3 193.0h0M512.8 197.2h0M515.2 190.4h0M463.4 283.4h0M427.6 271.8h0M446.7 264.5h0M441.0 239.8h0M527.6 191.3h0M438.5 225.2h0M441.7 306.6h0M472.6 219.4h0M436.9 257.8h0M420.8 235.0h0M510.7 199.4h0M453.4 247.0h0M488.5 212.4h0M467.2 200.1h0M404.8 291.5h0M493.7 186.1h0M410.8 230.2h0M476.6 239.7h0M430.0 193.0h0M417.1 215.8h0M437.5 237.0h0M494.4 195.4h0M447.1 263.4h0M514.3 182.7h0M465.6 279.5h0M414.7 200.2h0M444.2 282.7h0M435.6 218.9h0M436.4 220.9h0M467.1 217.7h0M444.7 198.7h0M421.8 273.1h0M452.8 249.9h0M453.9 252.8h0M464.3 280.8h0M474.5 223.9h0M419.1 265.9h0M408.1 304.9h0M413.8 214.2h0M467.7 245.2h0M456.2 270.6h0M416.3 281.4h0M487.0 231.3h0M425.7 186.7h0M463.8 209.2h0M478.3 234.8h0M447.9 278.1h0M497.2 190.1h0M506.9 211.8h0M476.6 241.7h0M485.7 225.8h0M439.9 256.6h0M484.3 215.2h0M464.0 193.1h0M463.8 192.3h0M463.6 192.3h0M463.3 194.8h0M463.1 193.9h0M462.5 192.4h0M463.9 192.1h0M464.5 192.2h0M464.0 193.4h0M451.6 222.6h0M452.4 223.9h0M449.1 225.0h0M452.5 220.7h0M454.2 224.8h0M452.4 220.8h0M449.9 223.3h0M452.9 221.4h0M449.6 220.5h0M424.1 278.9h0M422.4 276.1h0M422.9 278.4h0M422.0 279.4h0M471.5 219.8h0M474.4 220.0h0M472.1 221.0h0M420.9 199.1h0M419.6 199.2h0M422.1 196.1h0M423.0 196.2h0M436.8 257.5h0M434.0 257.7h0M435.0 259.1h0M451.2 185.9h0M451.7 187.2h0M448.6 301.6h0M445.2 298.5h0M446.4 300.8h0M414.1 281.1h0M414.8 278.5h0M414.2 280.2h0M415.9 280.4h0M419.8 202.6h0M420.9 202.2h0M420.1 206.5h0M420.4 204.9h0M451.3 280.0h0M449.9 276.9h0M447.9 278.7h0M449.6 277.1h0M448.5 277.9h0M449.0 278.8h0M448.6 276.8h0M450.5 280.4h0M448.8 279.6h0M416.6 207.8h0M417.3 209.3h0M415.7 208.7h0M414.8 208.5h0M416.9 206.2h0M414.4 207.8h0M417.7 209.8h0M417.5 208.4h0M416.3 209.4h0M431.3 226.9h0M427.5 230.5h0M431.8 226.3h0M428.2 226.7h0M431.9 226.0h0M427.6 225.8h0M424.6 252.3h0M426.7 254.4h0M427.4 249.4h0M425.4 249.7h0M420.1 187.2h0M419.5 189.5h0M419.1 187.5h0M419.2 188.5h0M419.8 187.7h0M420.9 186.5h0M419.0 189.0h0M420.7 188.1h0M524.2 207.8h0M523.3 206.2h0M524.6 206.9h0M527.1 206.4h0M404.6 220.0h0M403.3 219.5h0M403.7 220.5h0M406.5 218.2h0M468.0 244.8h0M469.1 245.1h0M467.9 245.2h0M463.5 242.6h0M470.9 244.4h0M467.1 242.7h0M468.4 242.0h0M463.6 202.8h0M463.0 203.9h0M461.5 203.8h0M462.5 204.3h0M462.2 204.1h0M461.1 202.8h0M504.2 192.0h0M504.1 192.4h0M507.1 193.5h0M505.7 193.2h0M503.7 193.9h0M504.6 191.5h0M502.8 192.1h0M504.6 193.7h0M504.3 192.7h0M444.9 297.4h0M447.4 296.7h0M445.7 296.1h0M448.4 299.0h0M446.6 292.8h0M444.3 294.2h0M448.2 294.1h0M448.0 296.5h0M433.0 267.7h0M433.5 268.5h0M433.9 268.1h0M433.5 268.2h0M432.4 268.8h0M435.1 274.9h0M432.4 275.6h0M434.8 278.5h0M432.5 276.9h0M433.0 275.5h0M433.7 277.4h0M434.4 278.0h0M432.8 277.6h0M522.0 206.1h0M522.4 204.2h0M523.7 204.0h0M521.5 203.2h0M521.5 202.7h0M522.8 202.9h0M522.4 202.5h0M494.8 187.4h0M490.9 189.2h0M493.1 187.1h0M490.8 189.9h0" stroke="#1e1a2a" stroke-width="1.1" stroke-linecap="round" opacity="0.8"/>
<path d="M568.1 268.6h0M618.1 275.8h0M545.9 296.5h0M540.8 264.1h0M551.2 290.6h0M529.3 258.1h0M564.1 257.5h0M533.2 296.8h0M603.1 268.8h0M549.3 238.0h0M530.8 234.2h0M566.7 276.8h0M533.4 302.3h0M517.6 261.6h0M593.0 272.6h0M559.0 286.9h0M542.1 254.9h0M569.3 254.3h0M540.1 259.1h0M564.9 276.0h0M555.0 263.0h0M536.0 271.7h0M598.6 236.7h0M599.9 270.0h0M546.3 235.3h0M528.9 269.9h0M557.4 238.4h0M514.7 281.5h0M570.4 254.5h0M594.9 249.9h0M530.8 302.2h0M568.2 285.2h0M516.6 268.6h0M563.8 246.0h0M576.2 271.9h0M545.0 231.9h0M511.3 294.1h0M504.6 229.8h0M597.4 226.1h0M533.3 289.8h0M537.4 236.5h0M525.8 229.7h0M610.3 276.8h0M536.7 263.9h0M541.6 225.3h0M608.5 276.9h0M617.6 262.9h0M572.7 244.3h0M603.7 250.7h0M530.7 278.8h0M617.7 268.4h0M542.1 290.1h0M519.8 250.2h0M606.5 267.3h0M595.5 243.8h0M513.5 255.0h0M529.0 274.8h0M541.6 259.4h0M499.2 232.0h0M599.9 254.3h0M523.0 238.7h0M528.1 243.1h0M535.7 235.2h0M526.2 301.5h0M507.4 263.3h0M511.6 254.4h0M586.2 256.8h0M616.5 269.3h0M520.6 264.2h0M507.9 289.0h0M568.4 255.9h0M523.1 279.4h0M562.4 246.4h0M592.8 257.6h0M577.6 275.4h0M531.7 258.1h0M501.9 237.3h0M603.3 251.3h0M565.0 255.3h0M556.8 249.0h0M499.2 250.4h0M520.5 232.3h0M585.5 247.6h0M604.6 232.9h0M580.6 284.8h0M537.1 260.3h0M577.8 288.2h0M523.4 302.6h0M537.2 281.4h0M514.6 231.2h0M495.8 235.8h0M516.7 249.6h0M531.7 282.3h0M514.3 301.9h0M566.0 289.9h0M524.2 262.4h0M581.2 254.1h0M593.4 247.9h0M522.9 230.9h0M595.4 240.5h0M501.9 287.8h0M542.7 293.0h0M600.3 247.4h0M583.0 261.8h0M507.4 294.4h0M597.3 245.5h0M575.0 273.1h0M523.6 225.8h0M537.9 260.2h0M517.2 250.3h0M508.6 289.0h0M579.3 243.2h0M522.5 270.3h0M537.1 249.2h0M607.7 233.8h0M565.1 252.6h0M598.5 273.5h0M591.3 236.5h0M578.8 278.4h0M551.6 294.8h0M600.6 231.2h0M528.8 255.2h0M517.9 225.9h0M527.7 239.2h0M583.5 263.7h0M505.5 251.7h0M552.6 255.4h0M512.8 227.0h0M554.6 263.7h0M556.4 263.1h0M553.3 260.7h0M554.6 260.2h0M501.6 291.8h0M501.7 295.0h0M502.9 290.0h0M512.0 295.9h0M512.2 295.7h0M512.9 297.2h0M514.7 295.6h0M512.8 297.0h0M514.4 297.8h0M517.0 294.3h0M512.5 296.8h0M513.1 297.7h0M571.2 282.5h0M571.0 281.0h0M571.9 281.5h0M571.2 283.4h0M546.4 245.9h0M547.0 247.7h0M547.4 247.5h0M546.7 246.8h0M548.4 247.7h0M546.4 246.7h0M545.8 247.9h0M546.0 247.6h0M563.7 280.5h0M561.6 280.5h0M560.3 278.9h0M560.7 283.3h0M617.5 266.1h0M615.5 265.6h0M617.0 268.4h0M616.6 266.4h0M615.7 266.4h0M617.6 266.6h0M616.8 267.9h0M616.7 267.6h0M590.9 242.3h0M589.8 242.8h0M589.1 241.3h0M589.4 241.4h0M588.5 241.5h0M590.8 242.1h0M590.9 242.1h0M590.7 240.6h0M589.5 239.9h0M601.2 260.1h0M601.9 259.2h0M599.2 257.0h0M601.0 258.4h0M552.7 230.7h0M552.5 230.6h0M553.6 230.5h0M552.4 233.5h0M535.7 295.1h0M534.7 294.4h0M535.1 295.3h0M536.0 293.8h0M535.3 295.1h0M535.6 294.4h0M536.2 294.2h0M535.0 295.5h0M549.0 296.7h0M548.1 297.0h0M548.4 296.4h0M549.9 298.7h0M547.4 296.9h0M549.6 295.1h0M497.4 237.3h0M494.2 238.1h0M496.9 237.3h0M494.1 239.1h0M494.9 238.5h0M494.5 237.1h0M496.2 235.7h0M494.4 239.2h0M614.6 250.9h0M610.8 251.7h0M615.5 250.9h0M614.2 249.7h0M614.5 252.3h0M526.6 277.2h0M527.8 274.0h0M526.0 276.1h0M523.6 276.3h0M527.2 277.0h0M525.5 274.5h0M525.4 274.8h0M534.7 256.9h0M535.3 255.7h0M535.1 256.5h0M537.4 255.3h0M535.0 256.2h0M535.9 256.7h0M535.9 255.5h0M536.8 254.3h0M534.0 256.0h0M530.4 235.8h0M529.3 235.9h0M530.9 236.4h0M566.1 252.1h0M564.8 251.3h0M569.9 250.5h0M569.2 248.8h0M568.0 250.1h0M513.2 246.4h0M512.8 245.7h0M511.9 246.2h0M512.3 246.4h0M512.5 246.3h0M513.7 246.8h0M511.1 245.6h0M513.0 246.2h0M531.3 305.9h0M532.8 305.1h0M532.7 304.9h0M570.1 255.2h0M573.8 252.4h0M572.4 255.0h0M572.8 254.4h0M572.6 249.4h0M573.7 252.9h0M518.8 270.8h0M517.2 271.4h0M517.2 271.2h0M517.7 271.2h0M518.4 271.0h0M518.0 270.2h0M518.5 270.9h0M518.7 269.3h0M517.7 271.9h0" stroke="#1c1c2a" stroke-width="1.1" stroke-linecap="round" opacity="0.8"/>
<path d="M508.2 348.0h0M446.9 323.4h0M546.9 390.6h0M447.7 346.4h0M446.9 333.4h0M471.1 283.4h0M476.7 312.5h0M472.2 275.6h0M470.0 334.2h0M548.9 374.8h0M479.7 296.1h0M461.9 352.4h0M526.2 315.6h0M523.5 384.4h0M491.2 367.9h0M481.9 246.9h0M543.7 384.3h0M472.6 369.9h0M455.8 321.1h0M458.0 311.6h0M464.4 352.8h0M490.2 322.5h0M478.3 271.4h0M477.1 254.0h0M444.4 324.5h0M498.2 332.2h0M539.6 347.6h0M518.3 330.9h0M496.9 294.0h0M495.1 304.7h0M498.5 265.9h0M475.6 340.9h0M493.6 281.6h0M562.4 368.6h0M533.4 330.9h0M472.6 343.8h0M515.7 341.2h0M530.8 330.0h0M471.0 341.1h0M507.9 358.6h0M515.1 319.4h0M470.7 265.8h0M515.3 327.5h0M505.9 345.6h0M560.1 386.2h0M494.3 376.3h0M508.6 370.9h0M492.7 297.5h0M467.6 334.4h0M485.8 281.7h0M531.9 380.6h0M467.8 310.8h0M492.9 250.0h0M503.3 301.8h0M498.2 346.8h0M494.9 335.7h0M493.0 349.6h0M486.6 254.3h0M515.6 322.6h0M441.8 338.0h0M506.3 317.0h0M502.9 321.7h0M513.5 375.1h0M536.9 361.6h0M538.3 331.7h0M551.5 366.3h0M499.7 336.5h0M487.3 326.0h0M478.5 285.0h0M484.2 283.9h0M513.4 310.3h0M565.9 371.5h0M506.5 321.3h0M516.7 308.5h0M478.4 370.5h0M481.0 356.8h0M537.5 351.1h0M481.5 276.8h0M553.8 395.3h0M499.2 348.6h0M481.3 280.3h0M556.0 400.0h0M494.1 345.7h0M471.0 330.4h0M451.8 317.4h0M480.9 298.7h0M509.5 381.4h0M526.2 329.6h0M487.2 315.0h0M474.5 361.9h0M482.0 254.1h0M519.4 369.2h0M525.9 316.9h0M443.0 325.2h0M452.4 346.6h0M457.5 335.6h0M490.1 303.0h0M486.9 377.9h0M511.2 328.9h0M455.4 317.9h0M462.2 328.8h0M467.2 307.7h0M510.1 369.7h0M522.2 353.4h0M471.8 363.2h0M525.9 368.6h0M474.3 339.0h0M529.3 353.8h0M474.1 360.5h0M488.8 265.5h0M467.3 278.2h0M508.8 322.7h0M553.0 388.5h0M467.4 343.1h0M562.8 369.0h0M489.5 269.0h0M560.3 393.1h0M560.9 371.5h0M525.1 312.7h0M559.8 368.7h0M472.3 274.7h0M505.6 280.9h0M539.2 356.8h0M495.9 368.6h0M534.3 377.0h0M488.1 338.3h0M561.4 370.0h0M527.3 316.3h0M487.5 277.2h0M490.2 378.3h0M535.6 372.3h0M455.8 352.4h0M496.2 323.0h0M505.1 372.7h0M475.0 299.4h0M452.9 331.5h0M449.2 343.0h0M493.9 347.9h0M493.4 349.7h0M489.1 349.0h0M494.4 349.3h0M492.0 348.4h0M490.5 349.8h0M490.6 348.9h0M490.1 347.9h0M478.9 273.1h0M474.9 271.1h0M477.4 272.4h0M478.1 272.8h0M476.8 272.7h0M480.8 274.7h0M477.1 271.9h0M445.3 328.0h0M444.7 329.4h0M444.2 326.3h0M442.9 326.9h0M495.2 354.2h0M497.4 353.0h0M498.6 351.5h0M498.4 350.7h0M497.7 351.2h0M508.5 333.1h0M507.2 331.3h0M508.3 330.3h0M508.4 333.4h0M508.9 332.6h0M507.1 331.5h0M506.5 331.8h0M509.9 332.2h0M528.0 376.6h0M524.4 372.4h0M525.3 373.9h0M527.2 374.1h0M529.4 374.7h0M526.1 377.0h0M527.5 374.3h0M528.2 378.7h0M525.1 375.3h0M535.8 385.3h0M536.9 387.5h0M536.1 387.1h0M536.2 387.7h0M546.0 368.0h0M544.3 366.4h0M542.2 368.8h0M547.7 367.2h0M546.6 366.7h0M546.2 368.2h0M544.9 366.4h0M544.6 368.0h0M445.7 337.9h0M447.5 340.8h0M445.4 338.5h0M448.2 339.8h0M447.3 339.6h0M448.8 339.4h0M445.8 340.2h0M446.5 340.2h0M449.7 339.4h0M516.7 317.2h0M516.7 319.1h0M517.8 319.7h0M517.9 319.8h0M517.8 316.7h0M519.1 318.2h0M443.1 323.6h0M442.7 324.2h0M440.7 324.8h0M442.5 323.6h0M441.2 324.9h0M531.9 333.4h0M531.6 335.5h0M533.2 336.4h0M532.6 336.0h0M532.6 333.7h0M532.0 335.5h0M476.4 335.5h0M479.9 333.1h0M477.0 332.6h0M476.2 334.1h0M478.4 330.7h0M477.2 330.7h0M475.1 331.9h0M475.9 332.2h0M489.1 261.5h0M490.7 258.9h0M490.7 260.1h0M491.3 261.3h0M487.4 260.4h0M491.8 258.9h0M488.5 260.1h0M490.7 260.2h0M519.7 322.1h0M521.5 325.2h0M521.7 323.1h0M521.4 322.5h0M501.6 264.7h0M504.4 265.3h0M502.7 264.1h0M485.2 342.4h0M485.8 345.8h0M485.3 343.5h0M485.2 342.7h0M486.2 344.4h0M484.2 342.1h0M448.8 315.0h0M445.6 316.8h0M447.4 317.0h0M447.2 319.6h0M444.3 319.9h0M446.9 315.5h0M439.4 333.9h0M441.6 333.2h0M439.2 333.8h0M438.9 337.4h0M439.2 336.1h0M440.8 332.7h0M439.8 333.1h0M463.3 324.7h0M462.4 324.7h0M463.9 325.4h0M450.8 332.4h0M452.3 333.6h0M450.3 334.3h0M452.9 333.1h0M453.2 333.4h0M451.2 331.5h0M452.1 334.4h0M470.0 312.6h0M468.3 311.2h0M468.8 314.6h0M476.4 290.9h0M478.5 292.4h0M478.9 292.7h0M478.0 291.3h0M477.4 292.4h0M498.2 339.2h0M498.3 341.0h0M499.7 341.5h0M497.9 340.4h0M499.7 339.9h0M499.5 341.4h0M497.9 341.6h0M499.3 342.2h0M492.1 265.6h0M494.7 265.6h0M497.4 268.9h0M494.2 270.3h0M551.0 367.0h0M552.3 365.9h0M550.6 366.1h0M547.7 366.2h0M552.8 368.8h0M531.0 328.9h0M532.2 327.4h0M534.5 332.1h0M536.0 327.4h0M533.1 329.6h0M536.2 328.5h0M496.6 296.8h0M494.7 296.9h0M495.7 297.3h0M519.7 357.4h0M520.4 357.6h0M521.5 359.6h0M518.0 360.2h0M517.6 359.7h0M523.7 361.0h0M518.4 361.5h0M523.5 359.4h0M461.3 349.0h0M459.2 348.9h0M462.1 348.9h0M462.6 349.4h0M462.2 349.0h0M461.0 351.2h0M462.3 348.2h0M492.0 361.0h0M492.5 363.2h0M492.3 362.2h0M492.6 360.3h0M492.8 361.9h0M494.7 301.7h0M496.0 302.5h0M493.8 302.5h0M492.8 301.9h0M496.4 302.9h0M493.0 301.6h0M490.9 301.9h0M496.2 300.6h0M476.6 313.9h0M477.8 316.9h0M474.0 312.8h0M480.6 313.3h0" stroke="#1c1c2a" stroke-width="1.1" stroke-linecap="round" opacity="0.8"/>
<path d="M342.5 259.1h0M350.8 265.2h0M368.1 245.3h0M355.5 191.1h0M385.8 207.2h0M338.0 271.4h0M369.9 188.5h0M368.9 246.3h0M374.8 194.1h0M371.4 232.3h0M384.8 184.9h0M359.9 263.0h0M411.0 194.0h0M369.5 222.7h0M346.5 255.9h0M367.7 193.3h0M381.0 196.6h0M367.5 227.9h0M390.1 184.2h0M412.0 185.4h0M367.3 212.1h0M351.2 267.0h0M408.0 180.7h0M352.9 269.6h0M374.1 257.4h0M372.6 182.0h0M348.9 237.8h0M379.1 252.5h0M343.5 241.3h0M359.7 224.0h0M387.1 177.6h0M369.0 239.2h0M397.9 171.0h0M369.3 239.8h0M343.4 268.7h0M396.6 194.0h0M348.0 245.7h0M359.2 238.3h0M395.5 182.7h0M392.0 183.0h0M393.4 181.8h0M393.4 183.4h0M355.9 226.3h0M356.4 226.0h0M356.3 225.1h0M354.1 228.7h0M357.0 223.1h0M345.0 249.4h0M342.7 249.5h0M344.8 248.5h0M346.3 247.7h0M343.2 249.9h0M401.2 179.5h0M400.6 176.5h0M401.6 178.9h0M403.1 178.0h0M374.4 202.0h0M374.6 202.4h0M373.4 203.5h0M377.4 204.3h0M375.6 205.3h0M372.6 204.6h0M338.7 233.0h0M341.3 232.5h0M341.5 233.1h0M340.8 232.7h0M337.0 232.9h0M368.6 214.6h0M368.5 214.3h0M369.0 215.9h0M375.6 244.8h0M374.8 246.2h0M373.8 244.8h0M344.1 272.0h0M342.2 271.9h0M343.0 269.1h0M342.8 268.7h0M343.1 272.7h0M343.1 235.4h0M341.4 234.8h0M341.6 236.4h0M340.8 234.4h0M359.8 219.7h0M363.8 216.8h0M359.4 221.0h0M358.8 219.2h0M361.3 218.4h0M337.1 264.8h0M335.9 265.7h0M334.7 264.5h0M336.5 265.6h0" stroke="#1e2028" stroke-width="1.1" stroke-linecap="round" opacity="0.8"/>
<path d="M398.2 282.8h0M335.4 277.6h0M397.9 246.5h0M342.5 294.2h0M403.9 250.6h0M343.4 322.2h0M366.5 270.9h0M351.3 319.3h0M370.9 345.2h0M382.9 265.0h0M370.2 316.3h0M394.8 245.9h0M345.3 345.4h0M350.9 286.7h0M405.9 268.9h0M343.3 319.7h0M365.9 329.0h0M383.1 338.3h0M414.8 269.6h0M351.9 274.2h0M361.9 272.7h0M348.3 339.5h0M365.1 306.7h0M349.9 340.7h0M402.1 260.7h0M387.6 276.0h0M404.5 246.3h0M376.9 270.7h0M402.7 271.8h0M408.1 247.0h0M389.6 308.7h0M377.7 285.0h0M358.6 324.3h0M399.2 334.8h0M400.5 257.6h0M395.5 254.1h0M369.9 278.6h0M355.9 306.2h0M356.1 335.3h0M380.1 243.0h0M381.4 329.9h0M375.0 288.4h0M365.7 336.0h0M388.5 255.3h0M360.7 273.9h0M367.1 316.5h0M375.5 328.8h0M399.8 273.1h0M347.9 319.8h0M401.0 256.6h0M367.2 276.0h0M357.7 318.2h0M344.6 296.0h0M373.4 310.6h0M400.4 252.3h0M397.1 334.6h0M360.7 341.3h0M373.6 338.2h0M374.3 342.3h0M385.4 326.8h0M366.4 302.6h0M366.0 291.9h0M328.0 271.2h0M382.8 338.9h0M346.0 300.6h0M352.5 331.0h0M340.5 285.5h0M358.3 322.4h0M342.3 279.6h0M384.2 266.7h0M356.5 290.9h0M344.3 287.9h0M367.8 347.2h0M372.1 343.8h0M381.8 247.7h0M364.5 272.8h0M366.5 272.6h0M390.8 277.4h0M360.0 306.0h0M378.3 309.9h0M340.8 274.2h0M381.6 311.6h0M358.7 343.8h0M377.9 278.6h0M371.5 289.8h0M360.8 337.8h0M359.6 294.2h0M371.2 270.2h0M363.0 303.5h0M399.6 261.6h0M361.5 276.9h0M360.8 339.9h0M376.9 263.4h0M358.0 329.0h0M342.2 313.2h0M378.0 341.0h0M396.1 333.4h0M392.4 306.0h0M344.1 303.5h0M360.6 347.9h0M367.3 277.2h0M392.2 251.3h0M359.7 318.8h0M389.9 234.3h0M367.8 325.3h0M380.3 284.5h0M360.2 276.8h0M359.0 278.7h0M356.5 279.6h0M361.4 277.9h0M397.9 294.1h0M400.2 293.6h0M398.8 290.9h0M372.0 299.6h0M372.1 299.9h0M370.8 298.8h0M372.7 300.0h0M370.8 301.2h0M369.9 299.3h0M370.8 301.0h0M372.7 328.6h0M373.7 329.1h0M370.6 330.8h0M367.2 317.8h0M369.6 317.9h0M367.9 317.8h0M367.9 319.1h0M368.3 318.5h0M374.3 291.4h0M370.8 294.3h0M370.7 295.5h0M372.7 293.7h0M373.4 292.8h0M373.2 293.2h0M375.1 293.5h0M373.4 292.9h0M372.6 292.6h0M350.9 328.3h0M351.0 325.7h0M350.7 329.8h0M355.4 332.5h0M354.6 331.6h0M353.3 331.2h0M355.4 333.1h0M352.5 331.5h0M354.2 333.3h0M354.6 333.3h0M375.4 333.5h0M376.2 333.3h0M375.3 333.9h0M375.1 333.1h0M376.6 333.7h0M375.9 332.9h0M352.8 337.9h0M356.0 336.8h0M352.1 337.2h0M355.9 338.5h0M337.7 277.7h0M338.0 275.5h0M334.8 275.4h0M381.8 298.3h0M386.4 301.5h0M384.8 297.1h0M385.6 298.8h0M384.6 300.2h0M384.7 296.0h0M384.3 298.4h0M386.8 298.7h0M386.9 317.7h0M388.2 320.7h0M415.0 267.8h0M415.9 266.1h0M416.5 268.9h0M416.1 264.2h0M388.3 275.7h0M388.0 277.1h0M390.2 275.8h0M387.9 277.2h0M389.6 276.5h0M390.2 276.7h0M388.6 276.3h0M388.8 277.0h0M362.2 296.6h0M361.6 295.0h0M360.2 295.6h0M360.5 295.2h0M336.5 281.2h0M334.0 279.1h0M331.1 281.9h0M418.3 259.5h0M375.2 344.2h0M375.1 342.5h0M371.1 342.5h0M373.0 341.9h0M394.8 328.6h0M396.7 329.5h0M396.2 329.7h0M394.4 329.1h0M397.1 329.6h0M396.2 328.6h0M395.1 329.0h0M396.7 329.3h0M350.5 311.7h0M352.2 311.0h0M352.4 311.0h0M351.8 312.0h0M362.0 311.0h0M362.9 311.3h0M364.2 311.3h0M362.0 312.1h0M362.1 312.1h0" stroke="#1c1c2a" stroke-width="1.1" stroke-linecap="round" opacity="0.8"/>
<path d="M411.4 350.9h0M347.1 352.2h0M423.0 308.2h0M401.1 352.8h0M377.5 350.8h0M379.4 352.0h0M351.8 353.0h0M429.4 346.5h0M358.2 363.7h0M414.6 308.4h0M380.8 349.0h0M378.1 363.8h0M429.5 342.9h0M437.8 341.3h0M391.1 324.6h0M401.6 316.2h0M409.3 313.5h0M396.0 320.1h0M419.9 351.4h0M421.0 337.8h0M367.6 367.6h0M393.9 327.4h0M413.8 359.8h0M391.1 353.4h0M378.7 355.1h0M416.2 315.1h0M366.1 357.3h0M408.3 349.4h0M406.4 350.6h0M439.2 338.3h0M423.4 316.7h0M422.5 353.8h0M370.8 367.3h0M428.2 324.2h0M420.2 327.3h0M402.4 318.6h0M379.9 355.6h0M376.0 349.6h0M405.3 313.8h0M403.9 321.4h0M362.7 362.4h0M433.9 317.0h0M401.4 341.9h0M375.3 347.0h0M403.0 337.2h0M379.1 365.9h0M366.7 362.5h0M422.6 359.2h0M369.6 356.7h0M390.7 372.1h0M422.9 307.6h0M368.7 354.9h0M393.6 321.1h0M413.1 337.7h0M441.2 312.4h0M379.9 362.9h0M363.6 364.1h0M404.3 341.1h0M438.5 327.0h0M396.0 323.9h0M375.6 361.7h0M438.7 326.3h0M409.1 348.5h0M366.0 357.7h0M388.5 360.7h0M380.2 353.5h0M410.4 336.3h0M412.3 318.9h0M407.3 309.9h0M404.2 312.5h0M393.8 322.9h0M398.8 310.6h0M397.6 310.8h0M400.5 309.3h0M400.6 308.7h0M396.7 307.6h0M397.5 310.5h0M429.3 333.7h0M430.1 337.5h0M432.3 336.9h0M431.0 335.5h0M427.8 339.4h0M429.7 339.0h0M427.9 336.0h0M430.8 332.5h0M432.6 333.4h0M430.5 330.5h0M433.0 333.3h0M432.3 331.9h0M431.9 331.6h0M431.3 329.8h0M431.2 334.6h0M432.9 332.7h0M439.6 344.0h0M438.9 345.1h0M437.3 344.2h0M440.1 343.1h0M397.6 326.7h0M396.7 326.3h0M398.3 327.2h0M395.6 327.4h0M399.2 327.8h0M397.0 324.9h0M379.1 355.9h0M376.5 354.0h0M378.7 353.2h0M379.9 352.6h0M377.5 355.7h0M378.6 352.7h0M377.0 354.2h0M377.0 355.7h0M427.3 322.5h0M427.6 322.2h0M426.2 322.4h0M428.1 324.0h0M426.7 324.6h0M427.4 321.9h0M427.5 322.3h0M426.2 321.3h0M427.2 323.4h0M429.3 326.6h0M430.2 329.3h0M430.1 329.5h0M429.2 328.4h0M386.3 364.7h0M387.4 363.8h0M387.1 364.0h0M385.4 364.1h0M386.1 366.1h0M389.0 365.7h0M386.9 364.2h0M385.1 364.2h0M353.1 362.3h0M352.7 362.3h0M356.5 361.2h0M353.0 362.5h0M354.0 360.0h0M352.8 357.9h0M354.9 363.1h0M381.4 348.0h0M382.9 347.1h0M380.4 348.0h0M381.8 345.3h0M380.8 347.7h0M379.5 348.9h0M380.1 348.5h0M401.8 319.2h0M401.4 317.1h0M401.3 317.9h0M399.5 317.9h0M401.2 320.2h0M401.3 316.9h0M398.3 315.6h0M380.6 353.2h0M380.4 351.6h0M381.2 351.4h0M378.5 351.9h0M382.6 354.1h0M383.9 353.9h0M383.2 352.9h0" stroke="#1e1a22" stroke-width="1.1" stroke-linecap="round" opacity="0.8"/>
<path d="M419.2 394.4h0M431.4 373.8h0M473.9 382.3h0M423.1 366.4h0M474.0 376.0h0M419.0 420.4h0M465.0 363.8h0M423.6 421.2h0M431.1 386.6h0M404.2 400.5h0M423.9 436.9h0M410.4 403.1h0M410.3 416.4h0M430.9 357.0h0M459.9 385.7h0M405.6 367.7h0M471.7 384.8h0M447.7 403.2h0M450.4 371.5h0M429.0 362.1h0M423.2 371.9h0M437.4 373.7h0M407.7 408.9h0M389.7 425.1h0M428.8 366.5h0M429.6 416.7h0M417.2 385.3h0M466.7 371.1h0M406.1 426.5h0M439.9 363.9h0M389.1 431.5h0M440.3 362.9h0M425.7 416.1h0M390.7 410.7h0M443.5 413.5h0M473.2 383.1h0M422.1 381.4h0M443.6 384.2h0M435.9 395.8h0M399.4 440.3h0M461.6 367.7h0M465.5 370.4h0M456.7 391.7h0M411.3 380.8h0M435.7 364.7h0M396.3 416.5h0M402.9 429.9h0M412.9 430.0h0M410.4 370.4h0M423.1 381.9h0M382.7 431.3h0M391.0 415.8h0M437.1 394.7h0M405.0 372.4h0M474.1 381.2h0M393.4 429.9h0M396.2 398.3h0M406.9 383.9h0M399.8 415.6h0M441.5 404.4h0M435.6 376.4h0M470.1 381.0h0M443.2 410.9h0M424.0 390.3h0M454.0 375.6h0M392.0 406.5h0M458.8 368.4h0M428.6 377.3h0M424.1 424.3h0M441.8 360.8h0M420.9 440.8h0M421.0 430.1h0M404.2 374.2h0M428.4 383.5h0M443.2 394.8h0M412.3 405.2h0M421.9 428.7h0M418.1 369.8h0M440.8 349.7h0M433.3 381.5h0M428.5 384.4h0M391.3 418.0h0M392.6 404.4h0M407.9 437.3h0M405.1 402.1h0M417.7 373.3h0M413.2 398.7h0M425.4 399.6h0M441.0 392.0h0M442.1 397.7h0M403.4 377.9h0M404.5 380.0h0M406.0 384.2h0M404.5 381.4h0M421.7 434.4h0M424.2 433.7h0M422.7 434.7h0M423.5 433.5h0M424.8 435.1h0M417.1 438.0h0M418.3 436.7h0M419.5 440.6h0M418.2 437.4h0M420.3 437.4h0M417.8 438.5h0M419.7 436.3h0M388.6 421.3h0M394.2 421.1h0M391.4 422.1h0M390.5 420.4h0M392.0 423.0h0M388.7 422.3h0M390.2 421.1h0M389.9 420.8h0M391.9 423.1h0M383.6 431.1h0M384.5 433.2h0M383.7 430.7h0M383.8 431.6h0M387.8 420.7h0M388.0 420.3h0M390.8 419.3h0M401.1 401.4h0M400.5 402.5h0M399.8 404.1h0M400.2 405.7h0M401.0 404.6h0M400.1 406.2h0M443.1 392.6h0M443.9 392.9h0M441.0 393.0h0M441.7 392.9h0M441.9 390.3h0M441.6 392.2h0M383.3 432.2h0M383.7 434.9h0M385.1 431.4h0M383.8 432.4h0M383.0 433.0h0M465.7 384.1h0M463.7 386.5h0M465.1 386.7h0M464.0 385.5h0M465.3 386.8h0M464.8 385.0h0M465.4 385.3h0M464.2 386.0h0M463.3 384.6h0M435.3 388.0h0M437.3 390.9h0M432.7 388.6h0M436.5 390.1h0M439.6 388.8h0M438.9 389.2h0M429.4 412.2h0M430.8 410.4h0M430.5 409.8h0M429.2 410.5h0M430.6 410.9h0M429.6 409.5h0M428.7 412.3h0M430.7 410.1h0M431.4 411.3h0M443.2 367.6h0M442.8 366.8h0M442.2 367.8h0M404.5 391.7h0M405.3 393.3h0M405.1 389.6h0M405.4 392.2h0" stroke="#1c1c2a" stroke-width="1.1" stroke-linecap="round" opacity="0.8"/>
<path d="M518.7 418.8h0M473.1 394.1h0M488.0 446.2h0M533.6 434.0h0M468.7 394.2h0M523.1 399.6h0M525.6 403.8h0M530.7 422.1h0M480.4 438.2h0M470.5 392.2h0M533.9 420.2h0M530.0 415.2h0M457.4 413.8h0M517.9 437.7h0M513.9 411.5h0M526.9 429.9h0M455.8 419.0h0M508.7 434.8h0M454.7 400.6h0M475.0 434.9h0M506.0 389.3h0M529.4 387.3h0M497.5 397.3h0M466.3 436.5h0M521.9 421.1h0M472.6 401.5h0M454.8 410.4h0M540.8 400.5h0M461.8 422.5h0M488.2 400.2h0M499.0 438.5h0M525.7 403.3h0M551.9 439.9h0M503.8 414.1h0M547.5 425.0h0M522.6 394.7h0M500.3 443.4h0M475.3 416.0h0M517.8 390.9h0M512.6 410.0h0M448.1 418.4h0M451.6 440.2h0M441.0 426.2h0M457.4 437.8h0M473.6 407.8h0M557.3 403.3h0M455.0 419.8h0M542.6 438.5h0M529.2 424.3h0M441.8 439.3h0M525.6 401.2h0M520.4 408.8h0M554.0 406.6h0M536.4 413.8h0M537.7 399.8h0M501.6 377.3h0M494.1 381.7h0M544.0 430.6h0M439.1 432.8h0M526.2 424.8h0M487.2 423.9h0M538.0 397.7h0M527.9 392.4h0M517.7 422.9h0M556.8 444.0h0M521.9 415.5h0M494.3 387.1h0M497.2 440.8h0M484.7 397.0h0M460.3 412.8h0M515.4 421.8h0M548.2 417.0h0M472.3 400.8h0M493.4 447.1h0M522.2 434.9h0M530.4 399.9h0M526.4 392.1h0M502.9 423.9h0M532.7 388.9h0M474.5 442.6h0M442.4 434.4h0M528.6 428.2h0M533.2 417.4h0M503.9 450.5h0M515.5 428.9h0M507.5 415.6h0M530.2 422.0h0M484.9 410.6h0M503.7 404.8h0M480.8 410.1h0M525.4 407.5h0M488.6 423.6h0M477.5 394.8h0M490.8 401.7h0M540.9 394.9h0M462.4 432.3h0M535.6 413.6h0M480.3 394.3h0M524.5 412.8h0M537.2 429.7h0M491.9 448.1h0M553.9 425.6h0M441.5 423.3h0M484.8 395.6h0M553.4 434.9h0M474.3 422.1h0M471.8 411.2h0M537.8 390.1h0M525.2 402.2h0M472.2 424.8h0M512.1 427.4h0M444.8 421.0h0M511.5 448.9h0M497.6 396.0h0M507.1 397.7h0M533.6 388.0h0M463.4 411.1h0M455.8 405.4h0M457.8 402.3h0M456.5 402.8h0M457.9 400.3h0M458.5 405.6h0M456.3 403.3h0M496.5 425.3h0M497.2 424.0h0M497.0 423.0h0M497.9 424.4h0M453.5 440.3h0M457.6 440.5h0M455.7 440.7h0M458.6 443.2h0M454.8 441.7h0M456.3 442.4h0M454.2 441.5h0M438.7 430.1h0M438.6 425.5h0M441.9 427.7h0M438.5 429.0h0M439.9 427.9h0M436.9 428.7h0M438.4 427.2h0M439.3 428.8h0M440.3 426.4h0M520.3 400.7h0M521.2 399.0h0M518.2 397.3h0M519.4 399.2h0M518.0 396.3h0M558.0 417.1h0M556.6 417.3h0M556.2 416.9h0M446.7 426.2h0M449.0 422.6h0M446.7 424.4h0M448.4 423.6h0M446.5 424.2h0M447.8 425.4h0M446.7 424.7h0M447.1 425.0h0M447.0 425.1h0M480.0 438.8h0M479.6 438.8h0M476.0 439.3h0M477.4 439.5h0M477.9 440.2h0M478.6 439.0h0M476.8 440.5h0M442.5 432.6h0M443.5 433.6h0M441.5 433.6h0M440.6 434.4h0M442.8 432.3h0M441.4 432.6h0M441.0 434.7h0M442.5 433.6h0M443.4 433.6h0M498.2 430.6h0M499.2 434.3h0M500.1 429.9h0M500.5 431.7h0M500.1 431.0h0M539.0 421.9h0M536.5 418.2h0M537.4 421.1h0M539.1 417.9h0M535.0 416.2h0M538.6 418.5h0M537.8 421.2h0M476.9 446.8h0M478.9 446.2h0M478.2 447.3h0M480.6 446.8h0M520.2 399.9h0M519.1 400.4h0M519.3 399.5h0M518.0 398.7h0M518.7 402.1h0M518.9 396.0h0M519.3 398.2h0M519.7 400.0h0M494.2 442.9h0M493.1 443.1h0M493.9 443.6h0M492.1 443.8h0M492.1 443.1h0M494.4 441.7h0M501.9 411.2h0M505.7 408.4h0M503.7 412.9h0M502.1 412.4h0M503.0 409.9h0M552.4 430.9h0M553.5 429.9h0M554.2 430.4h0M551.3 432.2h0M501.8 423.1h0M504.6 425.6h0M504.7 422.8h0M506.8 426.2h0M502.8 426.1h0" stroke="#1e1a22" stroke-width="1.1" stroke-linecap="round" opacity="0.8"/>
<g filter="url(#bl)"><ellipse cx="460" cy="138" rx="4.800000000000001" ry="4.0" fill="#1a1820" opacity="0.57"/><ellipse cx="570.6" cy="196.3" rx="5.6000000000000005" ry="4.800000000000001" fill="#1a1820" opacity="0.6"/><ellipse cx="423" cy="165" rx="3.2" ry="2.4000000000000004" fill="#1a1820" opacity="0.44999999999999996"/><ellipse cx="451" cy="204" rx="3.2" ry="2.4000000000000004" fill="#1a1820" opacity="0.27"/><ellipse cx="357" cy="258" rx="9.600000000000001" ry="6.4" fill="#1a1820" opacity="0.33"/><ellipse cx="350" cy="268" rx="4.800000000000001" ry="4.0" fill="#1a1820" opacity="0.3"/><ellipse cx="362" cy="280" rx="4.0" ry="3.2" fill="#1a1820" opacity="0.3"/><ellipse cx="380" cy="300" rx="3.2" ry="3.2" fill="#1a1820" opacity="0.27"/><ellipse cx="417.5" cy="318.5" rx="4.0" ry="3.2" fill="#1a1820" opacity="0.36"/><ellipse cx="410.4" cy="352.3" rx="4.0" ry="3.2" fill="#1a1820" opacity="0.33"/><ellipse cx="435.3" cy="386" rx="4.800000000000001" ry="4.0" fill="#1a1820" opacity="0.36"/><ellipse cx="511.8" cy="419.9" rx="4.0" ry="3.2" fill="#1a1820" opacity="0.54"/><ellipse cx="497.6" cy="355.8" rx="3.2" ry="2.4000000000000004" fill="#1a1820" opacity="0.3"/><ellipse cx="538.5" cy="256.8" rx="3.2" ry="2.4000000000000004" fill="#1a1820" opacity="0.3"/><ellipse cx="584.8" cy="272.8" rx="3.2" ry="3.2" fill="#1a1820" opacity="0.3"/><ellipse cx="552.8" cy="285.2" rx="3.2" ry="2.4000000000000004" fill="#1a1820" opacity="0.24"/><ellipse cx="432" cy="212" rx="3.2" ry="2.4000000000000004" fill="#1a1820" opacity="0.24"/><ellipse cx="510" cy="216" rx="3.2" ry="2.4000000000000004" fill="#1a1820" opacity="0.24"/><ellipse cx="442" cy="260" rx="3.2" ry="2.4000000000000004" fill="#1a1820" opacity="0.21"/><ellipse cx="389" cy="425" rx="3.2" ry="2.4000000000000004" fill="#1a1820" opacity="0.21"/><ellipse cx="346" cy="329" rx="3.2" ry="2.4000000000000004" fill="#1a1820" opacity="0.21"/></g>
<path d="M455.8 141.8h0M456.8 136.0h0M451.3 133.9h0M454.3 142.1h0M468.8 135.4h0M456.5 143.2h0M461.0 136.1h0M460.2 137.2h0M465.1 131.9h0M447.5 140.6h0M458.8 140.4h0M459.7 138.0h0M461.0 141.8h0M459.8 141.4h0M458.3 137.7h0M453.2 136.8h0M458.9 136.9h0M453.4 136.0h0M455.6 141.3h0M466.4 134.6h0M459.4 138.7h0M459.8 138.7h0M461.5 138.4h0M454.8 136.5h0M454.2 139.3h0M457.1 141.9h0M459.9 139.7h0M467.2 136.4h0M461.8 130.9h0M456.9 138.9h0M463.1 143.4h0M463.8 129.8h0M455.5 143.9h0M452.3 139.0h0M460.0 143.2h0M452.6 134.9h0M470.8 143.3h0M451.4 136.0h0M467.5 140.4h0M461.9 135.0h0M452.7 142.0h0M459.2 140.4h0M456.5 131.6h0M457.7 137.5h0M454.4 139.8h0M456.9 132.6h0M457.1 127.4h0M468.6 139.2h0M459.3 139.2h0M459.7 140.8h0M463.9 140.5h0M465.9 135.8h0M460.4 140.7h0M464.9 140.9h0M463.6 140.6h0M470.5 137.7h0M461.4 133.9h0M462.4 141.1h0M454.7 139.5h0M459.1 136.5h0M455.1 136.4h0M463.0 139.2h0M462.5 131.0h0M465.8 140.8h0M449.5 143.4h0M458.2 139.4h0M463.5 134.7h0M463.4 136.7h0M465.0 140.9h0M462.1 136.7h0M455.8 141.6h0M461.3 135.5h0M452.2 140.3h0M463.4 134.6h0M454.4 138.2h0M460.6 136.0h0M461.2 145.0h0M459.2 139.3h0M462.1 139.6h0M448.5 140.3h0M463.7 135.1h0M455.1 140.8h0M457.1 137.7h0M470.6 137.1h0M465.3 142.5h0M457.8 140.8h0M461.6 143.3h0M463.7 146.1h0M462.9 145.7h0M470.5 134.6h0M459.7 130.8h0M577.9 198.7h0M578.8 196.9h0M571.7 196.0h0M584.4 193.4h0M575.1 189.9h0M564.4 203.0h0M578.0 197.0h0M566.5 192.9h0M568.0 194.9h0M574.8 190.1h0M563.9 197.6h0M571.7 187.4h0M566.4 197.0h0M571.4 195.8h0M570.9 194.6h0M562.0 199.1h0M560.4 195.0h0M572.1 191.3h0M571.8 194.6h0M573.7 193.9h0M562.3 202.2h0M563.4 195.1h0M575.7 195.1h0M572.0 203.0h0M564.3 192.0h0M562.6 195.5h0M577.3 195.1h0M573.9 201.1h0M565.6 191.5h0M573.9 196.4h0M570.9 199.1h0M575.8 196.2h0M573.7 193.1h0M567.5 191.7h0M572.2 193.6h0M570.4 196.8h0M574.9 208.4h0M572.2 201.0h0M574.1 195.0h0M575.2 197.3h0M567.7 198.4h0M575.3 194.5h0M572.7 197.5h0M564.7 195.0h0M572.1 194.8h0M570.1 195.2h0M573.2 196.8h0M575.4 192.7h0M566.6 193.1h0M570.9 200.4h0M567.6 193.1h0M552.2 200.7h0M557.8 200.0h0M560.5 198.2h0M571.4 199.5h0M567.0 205.5h0M567.1 191.2h0M572.3 190.8h0M565.6 190.4h0M562.4 194.4h0M585.3 202.6h0M569.9 189.9h0M572.4 194.1h0M574.1 201.1h0M564.1 202.5h0M561.0 197.1h0M566.5 188.2h0M573.3 198.9h0M569.2 198.5h0M566.1 196.2h0M564.2 192.6h0M569.3 194.8h0M563.0 197.5h0M573.6 191.8h0M578.9 204.4h0M555.6 200.2h0M573.9 196.4h0M567.3 195.6h0M563.0 191.4h0M563.1 195.0h0M572.9 201.8h0M573.1 193.2h0M572.6 194.8h0M568.1 197.1h0M557.8 191.7h0M583.8 191.2h0M570.0 199.2h0M568.4 197.6h0M567.1 198.0h0M565.9 198.8h0M567.5 195.8h0M572.6 194.4h0M569.1 194.2h0M572.1 189.5h0M576.7 196.0h0M574.0 195.4h0M572.7 200.4h0M562.7 197.6h0M567.3 202.3h0M572.5 196.1h0M571.5 195.9h0M567.4 191.1h0M579.1 194.4h0M574.6 199.0h0M575.6 194.4h0M575.6 195.3h0M569.8 190.5h0M553.7 190.5h0M569.5 193.8h0M565.8 187.3h0M574.4 186.5h0M574.9 197.4h0M571.5 198.9h0M561.4 202.2h0M565.2 198.4h0M570.4 194.6h0M571.8 191.8h0M570.1 200.1h0M576.1 195.4h0M570.0 189.2h0M575.9 191.1h0M576.5 197.7h0M563.0 196.3h0M575.7 203.6h0M568.8 201.3h0M580.3 200.5h0M557.7 200.7h0M566.4 196.8h0M566.8 201.6h0M563.5 197.9h0M574.9 198.5h0M575.9 202.6h0M568.3 200.5h0M562.9 191.2h0M427.6 169.7h0M424.8 164.1h0M422.2 166.0h0M419.3 163.8h0M422.1 164.9h0M418.2 162.6h0M423.4 168.4h0M422.7 163.8h0M426.9 165.0h0M425.1 163.9h0M420.0 166.3h0M420.5 166.9h0M424.1 167.6h0M423.4 167.6h0M425.2 168.3h0M416.0 163.4h0M417.1 165.9h0M426.6 164.8h0M422.2 163.4h0M427.6 166.7h0M425.8 166.5h0M423.2 165.9h0M425.1 163.5h0M427.0 161.0h0M427.0 168.0h0M422.4 163.6h0M418.9 165.1h0M423.4 166.7h0M454.0 204.1h0M450.2 200.4h0M451.6 208.3h0M450.7 205.0h0M449.5 208.3h0M451.0 207.2h0M454.7 202.3h0M446.0 200.7h0M452.5 203.7h0M453.1 204.1h0M451.6 202.0h0M449.5 209.1h0M453.5 204.6h0M448.9 204.4h0M451.0 205.3h0M452.1 199.5h0M452.7 205.1h0M363.2 257.3h0M360.7 255.4h0M353.9 262.9h0M352.9 260.6h0M369.8 270.2h0M344.3 263.9h0M353.7 258.2h0M382.6 267.8h0M364.9 266.3h0M362.2 260.7h0M351.2 265.8h0M360.3 242.6h0M353.0 257.6h0M351.6 247.5h0M364.6 263.1h0M342.3 259.6h0M359.1 255.7h0M355.2 260.2h0M350.4 261.2h0M358.1 266.0h0M354.4 257.4h0M352.8 262.9h0M345.6 250.3h0M367.0 244.6h0M357.4 264.9h0M360.1 267.0h0M361.8 258.1h0M358.6 248.9h0M360.5 257.4h0M362.3 265.0h0M362.1 271.0h0M363.8 261.0h0M358.7 274.9h0M359.7 254.7h0M360.2 263.9h0M354.5 257.9h0M361.5 260.2h0M371.1 261.0h0M353.5 267.5h0M350.4 262.2h0M354.7 258.2h0M359.9 256.8h0M354.0 258.6h0M352.6 252.0h0M348.0 263.5h0M354.4 258.9h0M363.4 251.3h0M362.1 258.3h0M361.8 254.6h0M346.7 256.5h0M370.2 248.1h0M360.7 259.6h0M358.5 259.1h0M362.9 253.6h0M359.6 253.9h0M354.7 260.9h0M352.7 266.6h0M351.7 261.7h0M346.3 253.7h0M375.4 260.0h0M353.2 265.9h0M356.4 263.0h0M352.3 261.0h0M365.5 261.5h0M358.0 255.1h0M339.3 256.8h0M352.8 266.2h0M346.7 258.5h0M354.2 252.0h0M365.3 258.6h0M359.9 258.4h0M365.5 256.0h0M347.0 271.7h0M358.5 258.6h0M348.9 256.3h0M357.0 261.5h0M350.2 261.7h0M353.9 259.9h0M355.1 256.8h0M348.9 262.9h0M362.0 258.4h0M349.4 265.5h0M370.2 263.5h0M363.1 268.7h0M376.9 257.9h0M380.6 254.2h0M354.3 273.1h0M345.5 262.7h0M361.9 265.2h0M354.1 260.3h0M373.0 253.4h0M358.6 251.6h0M368.5 255.0h0M349.9 266.9h0M373.5 251.4h0M352.3 245.6h0M360.7 254.6h0M359.7 260.2h0M359.7 250.3h0M350.9 261.9h0M364.9 257.6h0M370.2 252.1h0M364.3 249.6h0M364.0 263.9h0M356.7 263.1h0M359.0 265.6h0M363.7 255.5h0M351.8 257.1h0M354.5 263.5h0M345.9 265.0h0M353.9 258.3h0M366.1 252.0h0M360.2 259.7h0M375.7 274.9h0M342.1 278.8h0M366.1 256.0h0M358.9 254.1h0M354.0 256.8h0M343.9 259.6h0M355.8 260.9h0M364.1 247.6h0M352.4 258.7h0M369.5 255.2h0M353.0 252.7h0M356.6 265.1h0M364.8 260.5h0M350.3 258.3h0M352.9 259.1h0M371.1 272.5h0M352.7 253.9h0M363.5 247.5h0M360.6 254.5h0M365.6 258.4h0M342.6 254.5h0M350.6 255.9h0M347.1 260.8h0M354.2 258.6h0M361.5 259.5h0M369.4 261.4h0M365.8 248.9h0M358.8 258.5h0M347.1 251.5h0M350.5 264.9h0M358.2 260.6h0M354.2 265.2h0M364.2 262.7h0M358.0 272.9h0M368.0 248.5h0M354.7 250.0h0M357.4 267.1h0M354.8 254.1h0M364.7 257.6h0M346.2 265.7h0M349.5 263.7h0M360.8 268.2h0M343.4 254.6h0M347.9 254.6h0M362.4 266.9h0M368.8 258.7h0M359.1 263.1h0M346.2 257.4h0M369.3 266.8h0M342.9 268.0h0M362.6 262.2h0M360.8 264.2h0M373.4 246.6h0M359.9 250.6h0M351.1 267.0h0M342.6 268.7h0M351.6 272.1h0M348.6 267.7h0M342.9 269.4h0M347.5 266.9h0M354.3 267.8h0M352.8 269.1h0M354.3 264.9h0M352.4 263.7h0M346.1 263.3h0M353.1 268.0h0M348.1 267.7h0M348.9 268.6h0M341.8 272.5h0M354.4 263.4h0M355.6 267.3h0M353.3 264.5h0M353.9 270.6h0M349.1 264.8h0M352.8 261.0h0M355.0 269.7h0M347.8 261.7h0M352.6 266.9h0M347.6 270.8h0M351.3 265.9h0M359.3 264.8h0M351.2 272.5h0M357.0 273.5h0M343.6 268.3h0M348.5 270.3h0M346.4 266.2h0M340.9 261.3h0M346.7 269.5h0M345.9 268.4h0M342.9 262.9h0M350.1 265.3h0M354.4 262.4h0M352.5 264.4h0M347.7 262.1h0M350.1 266.4h0M354.7 269.9h0M355.1 263.3h0M342.9 266.3h0M353.0 264.5h0M352.0 267.2h0M354.1 269.7h0M359.0 271.1h0M357.6 288.8h0M362.8 280.0h0M362.9 279.2h0M364.1 278.5h0M355.1 285.6h0M359.8 280.5h0M355.3 282.4h0M363.3 282.7h0M361.3 282.3h0M361.2 281.5h0M357.1 277.8h0M359.5 280.1h0M361.2 283.1h0M356.4 277.5h0M364.5 276.1h0M363.4 280.3h0M363.1 278.5h0M362.2 279.0h0M366.9 285.8h0M362.3 275.6h0M358.8 282.5h0M362.4 280.9h0M362.4 281.6h0M351.5 279.4h0M358.6 279.3h0M358.7 279.8h0M367.8 279.4h0M367.6 281.1h0M358.5 279.1h0M360.1 274.1h0M370.5 282.0h0M362.8 275.7h0M380.5 293.1h0M384.2 301.5h0M378.4 299.6h0M385.6 292.9h0M377.0 299.9h0M381.1 298.2h0M381.4 299.7h0M377.0 298.8h0M381.4 302.8h0M381.5 294.1h0M382.1 299.8h0M381.2 299.6h0M383.8 303.7h0M377.1 298.3h0M383.2 300.9h0M377.3 302.2h0M382.7 301.6h0M377.0 298.5h0M382.8 300.8h0M376.0 300.0h0M377.9 299.2h0M378.9 300.0h0M381.2 301.1h0M416.8 318.4h0M412.3 318.9h0M410.0 315.0h0M416.5 321.6h0M420.3 315.0h0M419.7 326.6h0M417.8 322.6h0M415.6 318.2h0M422.4 319.4h0M420.5 320.1h0M418.1 311.7h0M417.7 317.8h0M413.6 322.3h0M420.5 320.5h0M418.4 320.3h0M416.0 313.4h0M412.6 320.0h0M421.1 320.4h0M413.9 321.5h0M411.3 317.6h0M415.7 314.7h0M414.8 321.1h0M418.1 320.1h0M415.0 318.9h0M409.5 313.1h0M417.7 321.6h0M419.6 315.4h0M421.3 318.8h0M420.4 316.3h0M410.2 319.6h0M417.5 313.3h0M418.3 321.2h0M418.2 316.1h0M421.9 324.5h0M420.4 320.0h0M419.0 317.9h0M420.9 322.0h0M420.4 317.2h0M409.2 350.6h0M415.2 352.3h0M411.3 351.1h0M410.1 351.9h0M404.9 349.1h0M405.9 353.6h0M412.2 351.1h0M411.2 348.7h0M409.1 353.0h0M410.3 350.6h0M409.4 352.1h0M416.7 351.6h0M402.4 351.9h0M415.0 352.8h0M416.6 354.6h0M410.3 353.5h0M409.8 350.6h0M403.7 353.1h0M416.4 352.6h0M409.5 348.1h0M414.5 350.3h0M411.1 350.8h0M415.6 354.4h0M412.7 353.0h0M409.9 356.9h0M411.2 354.8h0M408.4 352.2h0M408.7 352.8h0M411.2 348.8h0M414.3 353.8h0M412.9 353.2h0M409.3 350.8h0M410.8 353.8h0M409.8 349.6h0M411.8 352.5h0M428.1 392.5h0M432.5 388.7h0M434.4 389.4h0M445.5 385.2h0M440.9 384.2h0M438.7 385.2h0M436.6 392.8h0M436.5 384.1h0M436.7 383.3h0M435.7 386.2h0M429.6 385.6h0M437.5 373.9h0M440.8 392.8h0M433.7 381.9h0M438.0 389.6h0M429.8 381.8h0M447.1 386.2h0M434.5 392.2h0M442.5 384.9h0M439.0 381.0h0M440.2 385.0h0M435.7 381.5h0M430.7 384.6h0M437.8 389.9h0M437.7 388.1h0M438.8 388.4h0M443.4 386.9h0M435.3 386.9h0M432.4 385.4h0M426.8 391.6h0M445.3 381.3h0M434.1 388.0h0M423.7 384.4h0M431.3 382.9h0M424.5 383.8h0M432.7 386.1h0M433.4 388.5h0M441.0 388.5h0M437.6 390.1h0M438.6 384.4h0M431.4 387.3h0M438.7 387.2h0M432.8 386.6h0M433.5 390.8h0M433.3 387.0h0M430.5 385.6h0M428.8 385.0h0M439.4 385.6h0M437.2 386.1h0M434.6 382.2h0M442.5 389.2h0M429.3 384.0h0M437.0 379.9h0M433.2 379.1h0M441.2 382.5h0M437.1 386.4h0M435.6 393.4h0M512.8 425.8h0M513.2 416.9h0M512.5 421.1h0M513.1 419.3h0M510.1 419.4h0M510.3 417.9h0M511.8 417.1h0M511.4 414.0h0M511.9 416.0h0M516.2 421.1h0M506.7 419.6h0M508.0 430.9h0M507.7 415.0h0M519.6 418.8h0M511.9 418.4h0M508.5 413.6h0M503.7 415.8h0M513.7 417.9h0M507.7 423.4h0M507.8 423.9h0M517.9 423.7h0M503.3 416.6h0M510.9 421.3h0M514.0 415.7h0M508.9 420.7h0M516.1 417.4h0M510.9 419.7h0M512.1 424.6h0M519.1 420.5h0M508.6 419.3h0M510.8 423.3h0M513.3 418.2h0M516.9 419.6h0M514.4 416.6h0M512.3 414.3h0M503.3 419.5h0M515.6 423.4h0M517.2 415.3h0M507.6 417.6h0M509.0 420.0h0M510.4 419.0h0M508.4 421.9h0M514.4 421.9h0M516.6 423.8h0M510.3 416.1h0M505.9 422.3h0M511.8 417.4h0M508.0 420.2h0M515.4 419.3h0M517.2 419.6h0M512.8 418.2h0M509.1 423.5h0M514.3 419.6h0M506.7 417.1h0M509.0 419.1h0M513.2 425.2h0M508.2 420.7h0M494.7 352.2h0M499.8 358.0h0M496.3 352.4h0M503.6 357.6h0M500.8 355.1h0M498.0 355.8h0M500.7 356.4h0M497.5 353.5h0M497.1 357.3h0M500.8 355.2h0M497.7 357.7h0M494.2 355.2h0M495.5 359.3h0M496.1 359.9h0M496.2 355.6h0M500.3 353.0h0M493.6 356.3h0M495.0 356.6h0M497.8 353.5h0M535.8 258.5h0M534.4 260.5h0M539.2 257.4h0M535.8 261.4h0M536.7 254.5h0M537.5 253.6h0M538.9 258.7h0M540.9 256.9h0M539.5 255.5h0M537.4 253.1h0M540.3 255.8h0M538.4 256.9h0M539.0 256.5h0M538.7 257.7h0M541.3 254.4h0M538.1 253.7h0M535.3 253.8h0M539.2 260.7h0M540.3 256.7h0M584.8 274.0h0M587.6 268.9h0M586.2 278.5h0M593.8 275.0h0M586.3 273.7h0M588.9 274.6h0M588.4 275.0h0M582.9 278.3h0M587.3 272.8h0M588.6 269.6h0M588.5 273.7h0M588.2 276.3h0M587.7 272.3h0M582.8 267.8h0M584.4 271.4h0M588.4 276.5h0M580.7 270.2h0M586.8 275.9h0M585.4 272.5h0M584.7 276.2h0M582.7 275.3h0M587.6 277.4h0M579.1 270.3h0M586.9 275.1h0M589.7 272.2h0M543.7 287.0h0M554.7 284.9h0M550.8 285.2h0M553.1 284.7h0M556.2 282.1h0M553.8 288.5h0M553.4 287.9h0M554.6 286.0h0M558.0 288.0h0M546.4 286.7h0M551.8 282.7h0M557.6 287.6h0M554.7 285.5h0M554.2 283.6h0M555.1 287.5h0M428.5 210.5h0M432.6 210.8h0M430.6 211.5h0M434.1 211.3h0M432.9 208.2h0M426.3 209.0h0M434.6 212.0h0M425.7 215.4h0M431.7 212.7h0M434.5 211.5h0M434.0 211.0h0M431.8 211.1h0M434.7 207.6h0M426.5 209.3h0M428.7 209.2h0M506.5 215.2h0M510.6 214.7h0M511.2 215.1h0M505.1 221.0h0M511.2 218.0h0M509.5 212.1h0M510.9 216.4h0M515.2 219.5h0M513.6 222.4h0M507.6 215.1h0M510.2 218.7h0M510.7 217.4h0M513.8 216.8h0M508.8 212.1h0M511.1 213.1h0M445.5 261.4h0M441.3 259.8h0M440.3 261.0h0M435.1 259.5h0M442.0 260.5h0M437.4 260.7h0M440.8 262.7h0M444.8 260.8h0M442.7 258.9h0M446.4 262.6h0M439.8 259.2h0M441.6 260.2h0M446.5 261.3h0M389.1 426.6h0M386.5 429.8h0M393.5 428.1h0M390.4 424.8h0M384.6 429.5h0M390.1 424.8h0M384.5 422.3h0M390.9 425.3h0M387.4 423.4h0M388.8 425.3h0M392.0 425.2h0M385.9 424.6h0M348.8 328.8h0M346.4 330.4h0M343.5 332.3h0M351.9 325.8h0M350.0 328.0h0M346.4 331.9h0M347.4 324.0h0M342.2 329.4h0M341.3 329.4h0M349.2 324.7h0M348.3 327.0h0M352.4 329.1h0M347.6 333.3h0" stroke="#15131c" stroke-width="1.2" stroke-linecap="round" opacity="0.9"/>
<polygon points="364.0,141.0 367.3,135.2 376.3,132.4 387.5,130.7 395.3,130.7 397.5,135.2 399.7,139.6 402.0,144.1 403.1,138.5 405.9,136.3 412.0,138.5 413.2,132.9 413.2,124.0 416.5,121.2 423.2,122.9 431.0,121.8 436.6,122.5 427.7,119.5 423.2,115.0 425.4,112.8 422.0,109.5 424.3,106.2 422.8,98.9 418.4,99.7 414.8,98.9 415.5,96.0 421.4,93.8 426.5,90.9 424.3,87.2 422.1,80.6 416.2,69.6 415.5,64.5 431.6,66.7 441.9,68.9 447.0,66.0 449.9,68.9 458.0,71.1 459.4,77.0 460.9,84.3 458.0,88.7 463.8,88.0 471.3,90.6 477.6,93.2 484.4,97.4 490.1,94.2 494.3,92.6 493.8,88.0 496.4,85.3 501.6,86.4 503.7,91.6 498.5,92.1 496.3,95.8 496.3,103.1 488.2,110.0 485.6,113.2 489.4,116.3 494.4,114.4 500.0,115.0 504.5,117.0 507.0,114.4 510.7,111.9 515.1,115.0 518.9,117.0 519.5,120.7 517.0,123.8 513.2,125.1 508.9,125.7 505.7,127.6 500.0,126.3 495.0,123.8 489.4,126.3 485.6,127.6 487.6,131.4 492.0,135.7 484.6,143.0 481.7,147.5 486.1,153.3 494.9,159.2 503.7,163.6 511.0,169.0 503.0,175.0 490.5,185.0 483.0,189.0 470.0,193.0 460.0,190.0 450.0,185.0 440.0,188.0 428.0,184.0 415.0,185.0 400.0,170.0 385.0,173.0 366.5,176.6 370.0,170.0 369.0,157.0 362.0,150.0" fill="none" stroke="#b05a80" stroke-width="0.7" stroke-linejoin="round"/>
<polygon points="510.7,111.9 513.9,106.9 520.8,105.6 530.0,104.0 533.0,101.0 540.0,94.5 543.0,89.0 552.0,91.7 559.0,90.4 562.0,83.6 566.0,79.5 570.0,76.8 575.0,82.0 580.0,83.6 577.0,89.7 582.0,94.5 578.0,99.0 572.0,101.0 581.0,106.0 585.0,109.4 592.0,113.5 598.0,117.6 597.0,123.0 600.0,130.0 601.0,135.0 603.0,145.0 603.0,160.0 608.0,186.0 614.5,207.6 614.5,220.0 611.0,224.0 598.0,225.0 580.6,235.0 560.5,230.0 543.0,224.0 534.0,215.0 533.0,200.0 535.0,190.0 531.0,178.0 520.0,171.0 511.0,169.0 503.7,163.6 494.9,159.2 486.1,153.3 481.7,147.5 484.6,143.0 492.0,135.7 487.6,131.4 485.6,127.6 489.4,126.3 495.0,123.8 500.0,126.3 505.7,127.6 508.9,125.7 513.2,125.1 517.0,123.8 519.5,120.7 518.9,117.0 515.1,115.0" fill="none" stroke="#b05a80" stroke-width="0.7" stroke-linejoin="round"/>
<polygon points="415.0,185.0 428.0,184.0 440.0,188.0 450.0,185.0 460.0,190.0 470.0,193.0 483.0,189.0 490.5,185.0 503.0,175.0 511.0,169.0 520.0,171.0 531.0,178.0 535.0,190.0 533.0,200.0 534.0,215.0 543.0,224.0 521.0,223.0 505.5,228.0 495.5,233.0 490.5,243.0 483.0,245.5 475.0,248.0 473.0,260.0 465.0,277.0 470.0,283.0 465.0,290.0 460.0,295.0 448.0,313.0 443.0,315.0 438.0,303.0 430.6,300.0 418.0,305.0 405.4,307.7 395.4,300.2 400.4,295.0 400.4,282.0 413.0,275.5 419.2,265.4 418.0,250.4 405.4,240.3 400.4,232.8 393.0,230.3 398.0,223.0 403.0,215.0 410.5,200.0 415.5,190.0" fill="none" stroke="#b05a80" stroke-width="0.7" stroke-linejoin="round"/>
<polygon points="543.0,224.0 560.5,230.0 580.6,235.0 598.0,225.0 611.0,224.0 614.5,220.0 612.0,233.0 618.0,250.0 623.0,263.0 618.0,280.5 610.7,283.0 603.0,273.0 590.0,283.0 575.5,290.0 563.0,300.0 545.3,305.0 536.5,317.6 532.8,311.4 522.7,306.3 505.0,300.0 495.0,292.0 500.0,285.5 512.7,278.0 515.0,270.5 505.0,265.4 495.0,255.4 490.5,243.0 495.5,233.0 505.5,228.0 521.0,223.0" fill="none" stroke="#b05a80" stroke-width="0.7" stroke-linejoin="round"/>
<polygon points="490.5,243.0 495.0,255.4 505.0,265.4 515.0,270.5 512.7,278.0 500.0,285.5 495.0,292.0 505.0,300.0 522.7,306.3 532.8,311.4 536.5,317.6 534.0,321.4 541.6,330.2 540.3,340.3 550.4,357.8 560.4,363.0 565.5,370.6 578.0,378.0 585.6,388.2 583.0,398.2 568.0,400.7 560.5,403.2 548.0,400.7 543.0,390.7 527.8,385.6 520.3,390.7 510.3,383.0 500.2,375.6 495.2,380.6 485.0,383.0 480.7,375.2 477.0,377.7 470.7,367.6 463.0,360.0 450.6,352.6 441.0,343.0 438.0,335.0 440.6,323.0 443.0,315.0 448.0,313.0 460.0,295.0 465.0,290.0 470.0,283.0 465.0,277.0 473.0,260.0 475.0,248.0 483.0,245.5" fill="none" stroke="#b05a80" stroke-width="0.7" stroke-linejoin="round"/>
<polygon points="327.5,271.0 332.0,265.0 335.0,255.0 334.0,243.0 329.0,237.0 330.0,233.0 344.0,230.0 353.0,228.0 354.0,220.0 362.0,213.0 364.0,203.0 356.0,198.0 354.0,190.0 362.0,187.0 366.5,176.6 385.0,173.0 400.0,170.0 415.0,185.0 415.5,190.0 410.5,200.0 403.0,215.0 398.0,223.0 393.0,230.3 378.0,233.0 373.0,235.0 383.0,253.0 373.0,258.0 373.0,267.0 360.0,269.0 345.0,273.0" fill="none" stroke="#b05a80" stroke-width="0.7" stroke-linejoin="round"/>
<polygon points="327.5,271.0 345.0,273.0 360.0,269.0 373.0,267.0 373.0,258.0 383.0,253.0 373.0,235.0 378.0,233.0 393.0,230.3 400.4,232.8 405.4,240.3 418.0,250.4 419.2,265.4 413.0,275.5 400.4,282.0 400.4,295.0 395.4,300.2 393.0,305.0 395.4,310.0 393.0,315.0 388.0,323.0 393.0,328.0 403.0,328.0 405.4,335.3 393.0,339.0 383.0,343.0 365.0,348.0 342.6,350.4 343.0,333.0 336.0,325.0 335.0,318.0 340.0,310.0 339.0,295.0 331.0,283.0" fill="none" stroke="#b05a80" stroke-width="0.7" stroke-linejoin="round"/>
<polygon points="342.6,350.4 365.0,348.0 383.0,343.0 393.0,339.0 405.4,335.3 403.0,328.0 393.0,328.0 388.0,323.0 393.0,315.0 395.4,310.0 393.0,305.0 395.4,300.2 405.4,307.7 418.0,305.0 430.6,300.0 438.0,303.0 443.0,315.0 440.6,323.0 438.0,335.0 441.0,343.0 438.0,347.0 428.0,357.0 415.0,364.0 400.0,363.0 398.0,373.0 390.0,373.0 375.0,368.0 358.0,368.0 350.0,360.0" fill="none" stroke="#b05a80" stroke-width="0.7" stroke-linejoin="round"/>
<polygon points="398.0,373.0 400.0,363.0 415.0,364.0 428.0,357.0 438.0,347.0 441.0,343.0 450.6,352.6 463.0,360.0 470.7,367.6 477.0,377.7 470.7,390.3 453.0,400.3 445.5,412.9 428.0,423.0 438.0,433.0 435.5,438.0 425.0,440.5 415.0,443.0 405.0,440.5 395.0,445.5 384.0,445.5 381.5,433.0 385.0,415.0 390.0,403.0 398.0,390.0 403.0,380.0" fill="none" stroke="#b05a80" stroke-width="0.7" stroke-linejoin="round"/>
<polygon points="477.0,377.7 480.7,375.2 485.0,383.0 495.2,380.6 500.2,375.6 510.3,383.0 520.3,390.7 527.8,385.6 543.0,390.7 548.0,400.7 560.5,403.2 563.0,410.8 555.5,420.8 558.0,433.4 560.5,443.4 555.5,451.0 548.0,443.4 535.4,444.7 520.0,448.5 510.0,451.0 497.7,453.5 485.0,448.5 475.0,451.0 472.6,457.0 465.0,454.0 458.0,445.5 435.5,438.0 438.0,433.0 428.0,423.0 445.5,412.9 453.0,400.3 470.7,390.3" fill="none" stroke="#b05a80" stroke-width="0.7" stroke-linejoin="round"/>
<polygon points="408.9,56.5 409.8,58.0 406.5,64.0 405.8,70.0 406.3,73.0 405.0,73.0 404.3,66.0 407.5,58.0" fill="#f0ece6" stroke="#b05a80" stroke-width="0.6"/>
<polygon points="408.5,73.0 411.0,71.5 414.0,73.5 413.5,76.8 410.5,77.5 408.3,75.8" fill="#f0ece6" stroke="#b05a80" stroke-width="0.6"/>
<polygon points="405.5,76.5 407.3,77.0 407.5,80.5 405.8,80.8" fill="#f0ece6" stroke="#b05a80" stroke-width="0.6"/>
<polygon points="416.5,77.0 419.5,76.5 420.5,79.5 417.5,80.5" fill="#f0ece6" stroke="#b05a80" stroke-width="0.6"/>
<polygon points="412.5,82.0 414.2,82.0 414.2,84.0 412.5,84.0" fill="#f0ece6" stroke="#b05a80" stroke-width="0.6"/>
<polygon points="415.2,85.0 417.5,85.0 417.5,87.2 415.2,87.2" fill="#f0ece6" stroke="#b05a80" stroke-width="0.6"/>
<polygon points="416.3,110.6 418.0,110.6 418.0,112.4 416.3,112.4" fill="#f0ece6" stroke="#b05a80" stroke-width="0.6"/>
<polygon points="410.2,118.2 412.3,118.2 412.3,120.0 410.2,120.0" fill="#f0ece6" stroke="#b05a80" stroke-width="0.6"/>
<polygon points="392.5,104.5 395.0,104.5 395.0,105.8 392.5,105.8" fill="#f0ece6" stroke="#b05a80" stroke-width="0.6"/>
<line x1="351.7" y1="138" x2="394.2" y2="125.7" stroke="#5a2a40" stroke-width="1.3" stroke-dasharray="2.2 1.4"/>
<polyline points="558,89 563,90 568,93 570,98 574,103 579,105" fill="none" stroke="#b05a80" stroke-width="2.2" stroke-linejoin="round"/>
<polyline points="558,89 563,90 568,93 570,98 574,103 579,105" fill="none" stroke="#faf7f3" stroke-width="1.1" stroke-linejoin="round"/>
<polyline points="532,103 536,108 541,106" fill="none" stroke="#b05a80" stroke-width="1.8" stroke-linejoin="round"/>
<polyline points="532,103 536,108 541,106" fill="none" stroke="#faf7f3" stroke-width="0.8" stroke-linejoin="round"/>
<text x="563.2" y="167.2" font-family="Liberation Sans" font-weight="bold" font-size="10.5" text-anchor="middle" fill="#0a0a0a">1</text>
<text x="451.6" y="155.2" font-family="Liberation Sans" font-weight="bold" font-size="10.5" text-anchor="middle" fill="#0a0a0a">2</text>
<text x="453.2" y="235.2" font-family="Liberation Sans" font-weight="bold" font-size="10.5" text-anchor="middle" fill="#0a0a0a">3</text>
<text x="380.5" y="214" font-family="Liberation Sans" font-weight="bold" font-size="10.5" text-anchor="middle" fill="#0a0a0a">4</text>
<text x="367.8" y="309.8" font-family="Liberation Sans" font-weight="bold" font-size="10.5" text-anchor="middle" fill="#0a0a0a">5</text>
<text x="422.3" y="337.6" font-family="Liberation Sans" font-weight="bold" font-size="10.5" text-anchor="middle" fill="#0a0a0a">6</text>
<text x="498.8" y="331.2" font-family="Liberation Sans" font-weight="bold" font-size="10.5" text-anchor="middle" fill="#0a0a0a">9</text>
<text x="421.5" y="399.5" font-family="Liberation Sans" font-weight="bold" font-size="10.5" text-anchor="middle" fill="#0a0a0a">7</text>
<text x="498.8" y="420.8" font-family="Liberation Sans" font-weight="bold" font-size="10.5" text-anchor="middle" fill="#0a0a0a">8</text>
<text x="557.6" y="260.5" font-family="Liberation Sans" font-weight="bold" font-size="10.5" text-anchor="middle" fill="#0a0a0a">0</text>
</svg>
<div class="a" style="left:320px;top:44.2px;width:54px;height:11.2px;background:#121212;border-radius:0 1.5px 1.5px 0"></div>
<div class="t" style="left:335.7px;top:46px;font-size:6.26px;line-height:8px;color:#fff">Deutschland</div>
<div class="t" style="left:335.7px;top:59.5px;font-size:6.36px;line-height:8px;color:#111">Postleitzahlenkarte</div>
<svg class="a" style="left:540px;top:455px" width="90" height="5"><rect x="2.5" y="1.8" width="48.5" height="2" fill="#fff" stroke="#777" stroke-width="0.5"/><rect x="51" y="1.6" width="33.5" height="2.4" fill="#111"/></svg>
<div class="a" style="left:425px;top:459px;width:245px;height:19px;background:#fff;border-top:1px solid #8a8a8a;border-left:1px solid #8a8a8a"></div>
<div class="t" style="left:431px;top:463.5px;font-size:12.3px;line-height:15px;color:#1a1a1a;-webkit-text-stroke:0.35px #1a1a1a">Basisdaten © OpenStreetMap-Mitwirkende</div>
<div class="a" style="left:670px;top:459px;width:180px;height:19px;background:#1e1c17"></div>
<div class="t" style="left:674.5px;top:463.5px;font-size:12.3px;line-height:15px;color:#fff;-webkit-text-stroke:0.3px #fff">© Kartografie by grebemaps.de</div>
</body></html>
